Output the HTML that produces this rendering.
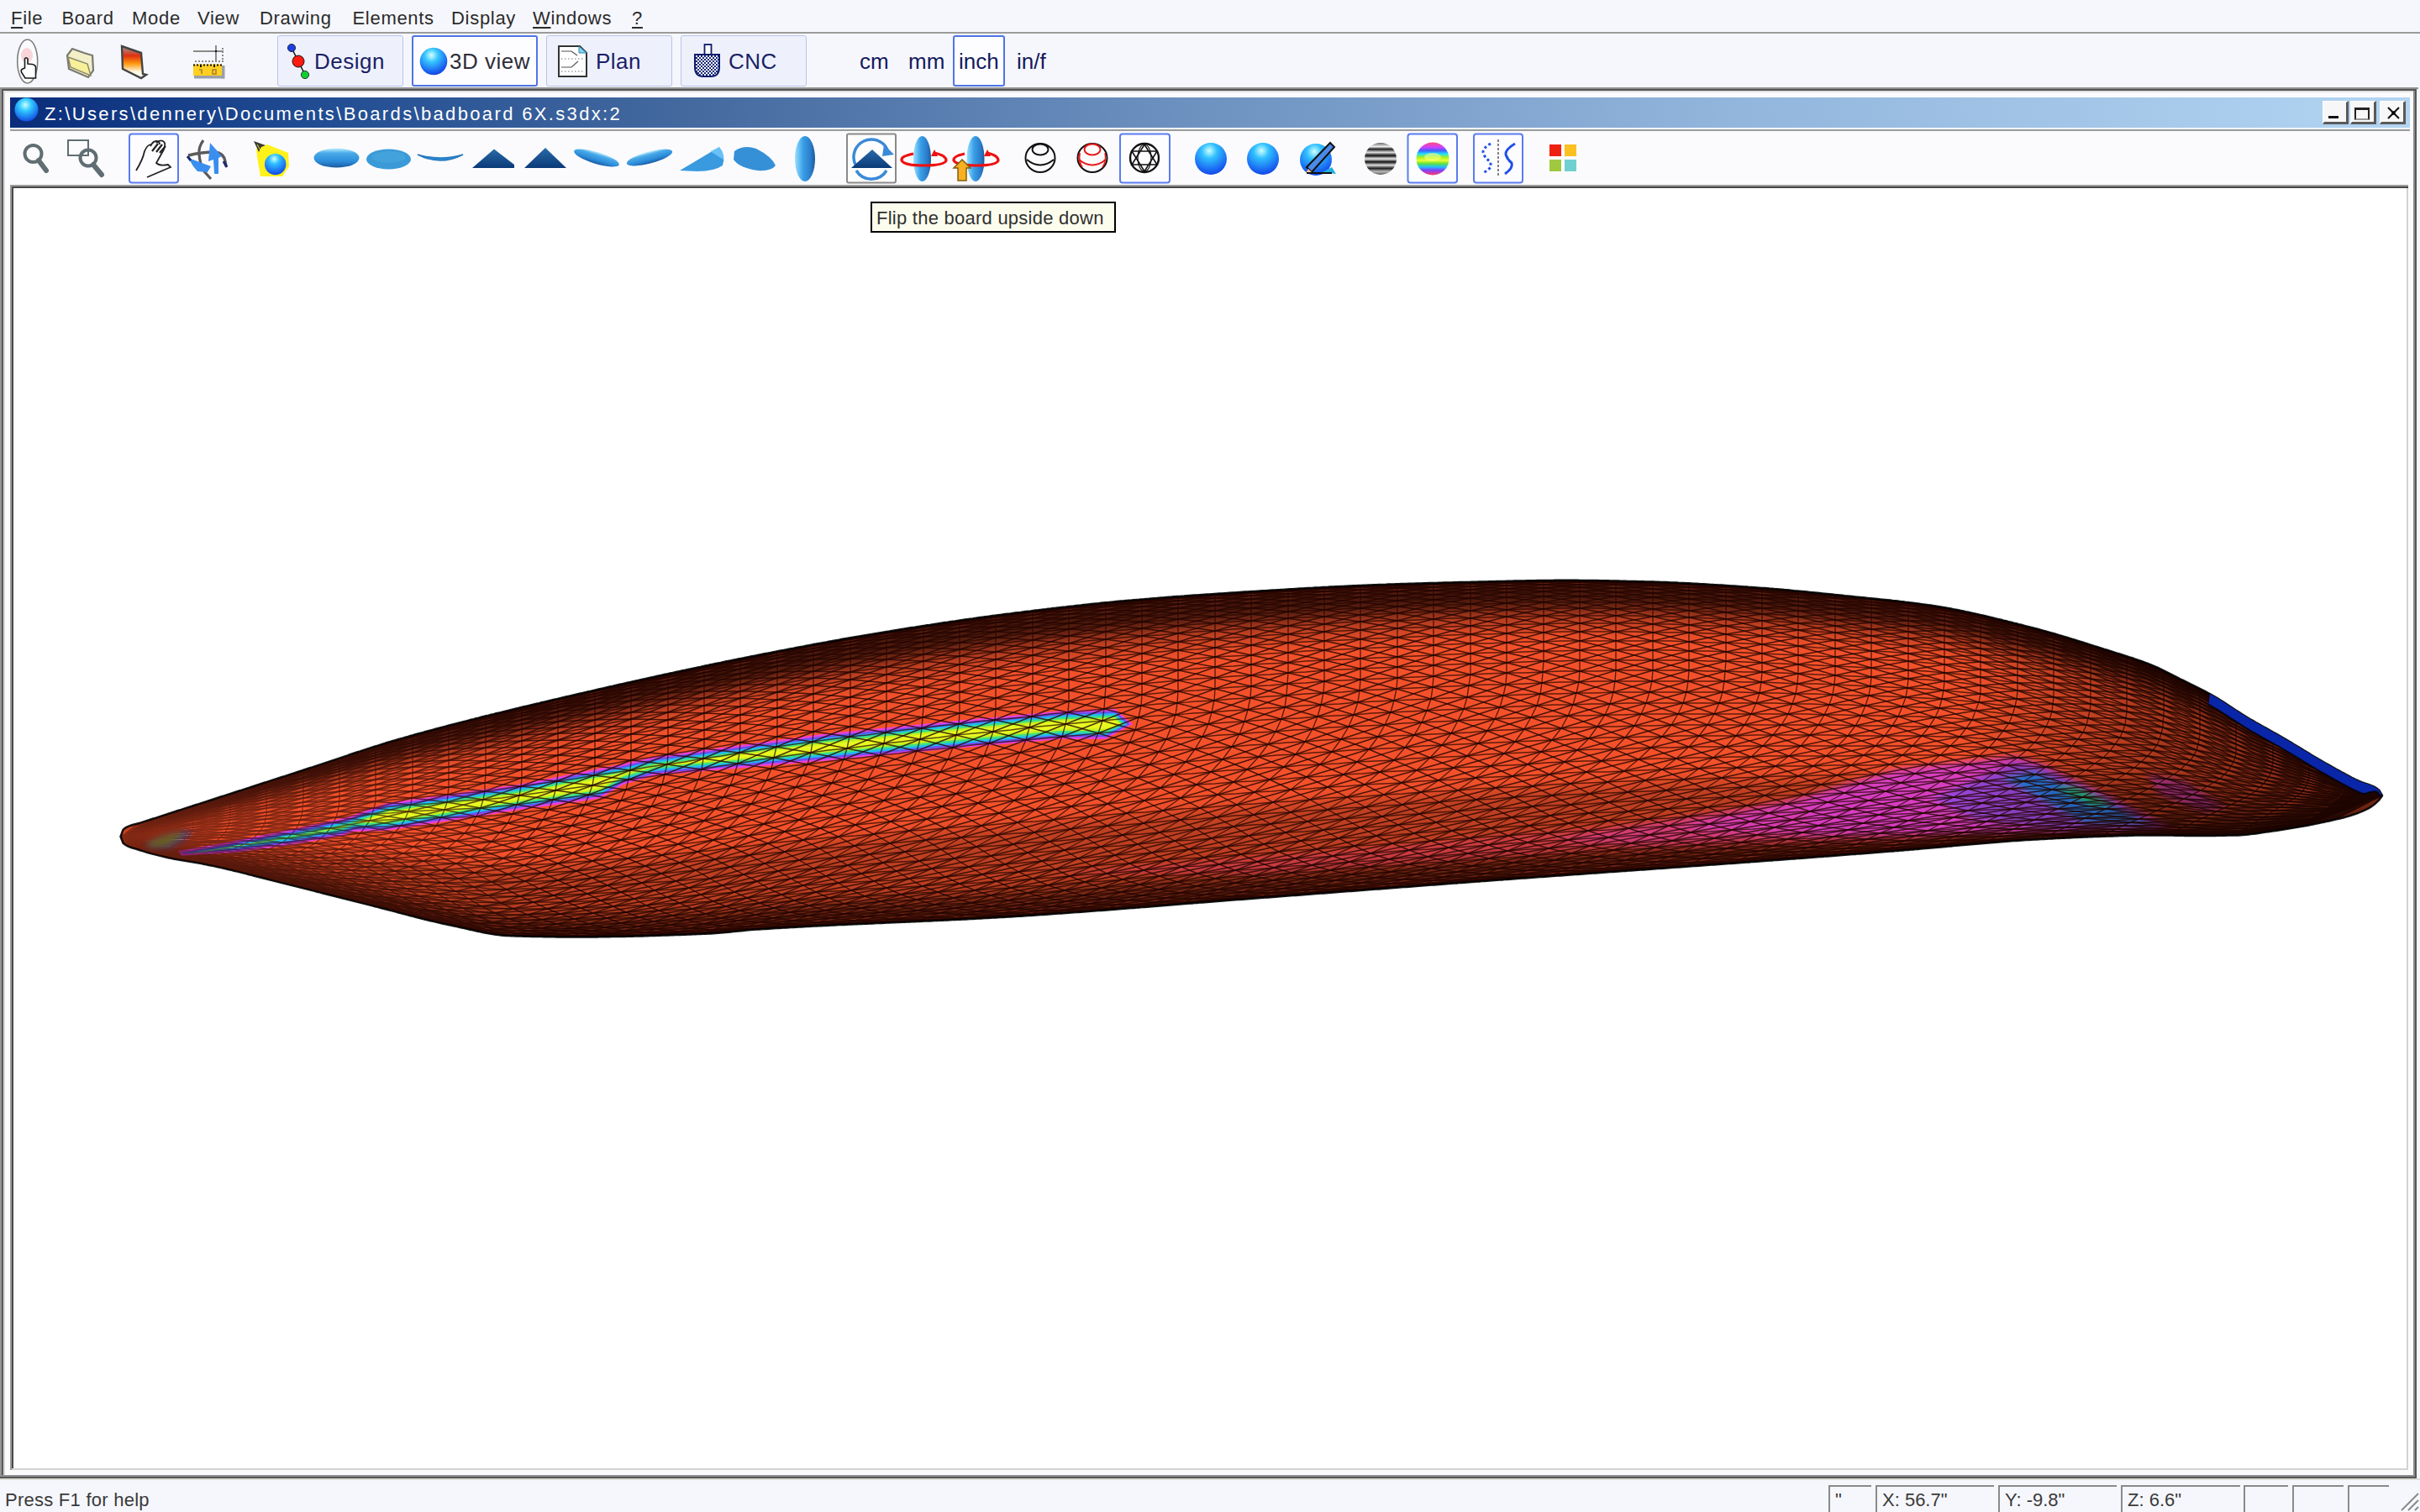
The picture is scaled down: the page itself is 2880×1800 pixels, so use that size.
<!DOCTYPE html><html><head><meta charset="utf-8"><title>Shape3d</title><style>html,body{margin:0;padding:0;width:2880px;height:1800px;overflow:hidden;background:#f6f7fc;font-family:"Liberation Sans",sans-serif;}
.a{position:absolute;}
.t{position:absolute;white-space:nowrap;line-height:1;}
.menu{font-size:22px;color:#2b2b2b;}
.u{text-decoration:underline;text-decoration-thickness:2px;text-underline-offset:3px;}
.btn{position:absolute;top:42px;height:59px;width:148px;border:1px solid #b9c3ea;border-radius:3px;background:#eef1fb;box-sizing:content-box;}
.btn.sel{border:2px solid #4f74e6;background:#fdfdff;top:42px;height:57px;width:146px;}
.bt{font-size:26px;color:#1a1f66;}
.tb{position:absolute;top:158px;width:56px;height:56px;border:2px solid #5a7cf0;border-radius:3px;background:#fdfdff;}
.sb{position:absolute;top:1768px;height:32px;border-top:2px solid #8a8a8a;border-left:2px solid #8a8a8a;}
.st{font-size:22px;color:#3a3a3a;}
</style></head><body>
<div class="t menu" style="left:13.0px;top:11.4px;font-size:22px;letter-spacing:0.7px"><span class="u">F</span>ile</div>
<div class="t menu" style="left:73.5px;top:11.4px;font-size:22px;letter-spacing:0.7px">Board</div>
<div class="t menu" style="left:157.0px;top:11.4px;font-size:22px;letter-spacing:0.7px">Mode</div>
<div class="t menu" style="left:235.0px;top:11.4px;font-size:22px;letter-spacing:0.7px">View</div>
<div class="t menu" style="left:309.0px;top:11.4px;font-size:22px;letter-spacing:0.7px">Drawing</div>
<div class="t menu" style="left:419.5px;top:11.4px;font-size:22px;letter-spacing:0.7px">Elements</div>
<div class="t menu" style="left:537.0px;top:11.4px;font-size:22px;letter-spacing:0.7px">Display</div>
<div class="t menu" style="left:634.0px;top:11.4px;font-size:22px;letter-spacing:0.7px"><span class="u">W</span>indows</div>
<div class="t menu" style="left:752.0px;top:11.4px;font-size:22px;letter-spacing:0.7px"><span class="u">?</span></div>
<div class="a" style="left:0;top:38px;width:2880px;height:2px;background:#9b9b9b"></div>
<div class="btn" style="left:330px"></div>
<div class="t bt" style="left:374.0px;top:60.0px;font-size:26px;color:#1a1f66;letter-spacing:0.5px">Design</div>
<div class="btn sel" style="left:490px"></div>
<div class="t bt" style="left:535.0px;top:60.0px;font-size:26px;color:#2e2e3a;letter-spacing:0.5px">3D view</div>
<div class="btn" style="left:650px"></div>
<div class="t bt" style="left:709.0px;top:60.0px;font-size:26px;color:#1a1f66;letter-spacing:0.5px">Plan</div>
<div class="btn" style="left:810px"></div>
<div class="t bt" style="left:867.0px;top:60.0px;font-size:26px;color:#1a1f66;letter-spacing:0.5px">CNC</div>
<div class="btn sel" style="left:1134px;width:58px"></div>
<svg class="a" style="left:0;top:0" width="960" height="104"><defs><radialGradient id="g3d" cx="0.42" cy="0.28" r="0.8"><stop offset="0" stop-color="#d8ffff"/><stop offset="0.3" stop-color="#38c8ff"/><stop offset="0.75" stop-color="#1a64f0"/><stop offset="1" stop-color="#1030d8"/></radialGradient><linearGradient id="gfl" x1="0" y1="0" x2="0" y2="1"><stop offset="0" stop-color="#9a9a9a"/><stop offset="0.3" stop-color="#e03010"/><stop offset="0.55" stop-color="#ff9a10"/><stop offset="0.8" stop-color="#fff8e0"/><stop offset="1" stop-color="#ffffff"/></linearGradient><pattern id="dots" width="4" height="4" patternUnits="userSpaceOnUse"><rect width="4" height="4" fill="#fff"/><rect width="2" height="2" fill="#1a2a7a"/><rect x="2" y="2" width="2" height="2" fill="#1a2a7a"/></pattern></defs><ellipse cx="32.7" cy="73" rx="12" ry="26" fill="#fbfbfd" stroke="#808080" stroke-width="1.6"/><ellipse cx="32" cy="66" rx="7" ry="9" fill="#f5c8cc" opacity="0.75"/><path d="M29.5 81 L29.5 70 Q31 67.5 33 70 L33 76 L38 76.5 Q42 77 42.5 80 L42.5 93 L30 93 L25.5 86 Q24.5 83 27 82 Z" fill="#fff" stroke="#1a1a1a" stroke-width="1.6"/><path d="M80 66 L86 58 L100 63 L110 66 L111 84 L105 92 L82 82 Z" fill="#f3f0c8" stroke="#7a7a70" stroke-width="2.2"/><path d="M81 68 L104 76 L108 90 L84 80 Z" fill="#f8f098" stroke="#8a8a70" stroke-width="1.5"/><path d="M145 55 L168 63 L170 88 L174 89 L168 93 L146 82 Z" fill="url(#gfl)" stroke="#444" stroke-width="2.4"/><path d="M230 61 L266 61" stroke="#8a8a8a" stroke-width="2"/><path d="M257 54 L257 74" stroke="#8a8a8a" stroke-width="2"/><rect x="256" y="60" width="2" height="2" fill="#111"/><path d="M265 57 L265 74 M232 73 L266 73" stroke="#8a8a8a" stroke-width="2" stroke-dasharray="2 2"/><rect x="264" y="78" width="3.5" height="15.5" fill="#9aa0aa"/><rect x="231" y="90" width="36" height="3.5" fill="#9aa0aa"/><rect x="230" y="76.5" width="34" height="13.5" fill="#ffd020"/><path d="M230 77.5 L264 77.5" stroke="#111" stroke-width="2" stroke-dasharray="2 2"/><path d="M239 77 L239 80 M255 77 L255 80" stroke="#111" stroke-width="2"/><path d="M237 83 L240 83 L240 88" stroke="#b08030" stroke-width="1.6" fill="none"/><rect x="253" y="83" width="4" height="5" fill="none" stroke="#b08030" stroke-width="1.6"/><path d="M347 57 L355 73 L363 89" stroke="#111" stroke-width="1.6"/><circle cx="347" cy="57" r="4.6" fill="#1a3ee0" stroke="#111" stroke-width="0.8"/><circle cx="355" cy="73" r="7" fill="#ff1a10" stroke="#111" stroke-width="1"/><circle cx="363" cy="89" r="4.6" fill="#10d030" stroke="#111" stroke-width="0.8"/><circle cx="516" cy="73" r="16.3" fill="url(#g3d)"/><path d="M665 55 L690 55 L698 63 L698 91 L665 91 Z" fill="#fff" stroke="#333" stroke-width="2"/><path d="M689 55 L689 63 L698 63 Z" fill="#8ad0f0" stroke="#2a8ab0" stroke-width="1"/><path d="M668 61 L680 61 L687 66 M668 80 L680 80 L688 73" stroke="#555" stroke-width="1.2" fill="none"/><path d="M668 70 L694 70 M668 85 L694 85" stroke="#777" stroke-width="1" stroke-dasharray="1.5 2.5"/><rect x="838.5" y="53" width="8" height="12" fill="#fff" stroke="#0e1a6a" stroke-width="1.8"/><path d="M827 65 L856 65 L856 80 Q856 91 846 91 L837 91 Q827 91 827 80 Z" fill="url(#dots)" stroke="#0e1a6a" stroke-width="2"/></svg>
<div class="t bt" style="left:1023.0px;top:60.0px;font-size:26px;color:#141a5e">cm</div>
<div class="t bt" style="left:1081.0px;top:60.0px;font-size:26px;color:#141a5e">mm</div>
<div class="t bt" style="left:1141.0px;top:60.0px;font-size:26px;color:#141a5e">inch</div>
<div class="t bt" style="left:1210.0px;top:60.0px;font-size:26px;color:#141a5e">in/f</div>
<div class="a" style="left:0;top:104px;width:2878px;height:2px;background:#8f8f8f"></div>
<div class="a" style="left:2px;top:106px;width:2874px;height:2px;background:#565656"></div>
<div class="a" style="left:0;top:104px;width:2px;height:1656px;background:#959595"></div>
<div class="a" style="left:2px;top:106px;width:2px;height:1654px;background:#585858"></div>
<div class="a" style="left:2872px;top:108px;width:2px;height:1650px;background:#8c8c8c"></div>
<div class="a" style="left:2874px;top:106px;width:2px;height:1654px;background:#575757"></div>
<div class="a" style="left:0;top:1756px;width:2874px;height:2px;background:#8e8e8e"></div>
<div class="a" style="left:0;top:1758px;width:2876px;height:2px;background:#575757"></div>
<div class="a" style="left:0;top:1760px;width:2880px;height:2px;background:#dcddd6"></div>
<div class="a" style="left:4px;top:108px;width:2868px;height:1648px;background:#fbfbfd"></div>
<div class="a" style="left:4px;top:108px;width:2px;height:1648px;background:#d9d9d9"></div>
<div class="a" style="left:4px;top:108px;width:2868px;height:2px;background:#e4e2e2"></div>
<div class="a" style="left:12px;top:116px;width:2856px;height:36px;background:linear-gradient(90deg,#0a2c7a 0%,#1f4b92 12%,#44699f 28%,#6f93c1 50%,#92b6dc 72%,#b3d5f3 100%)"></div>
<div class="a" style="left:12px;top:152px;width:2856px;height:2px;background:#f0f6ff"></div>
<div class="a" style="left:12px;top:154px;width:2856px;height:2px;background:#9a9d9a"></div>
<svg class="a" style="left:16px;top:116px" width="32" height="32"><defs><radialGradient id="gg" cx="0.45" cy="0.3" r="0.75"><stop offset="0" stop-color="#c8ffff"/><stop offset="0.35" stop-color="#30c8ff"/><stop offset="1" stop-color="#1040e0"/></radialGradient></defs><circle cx="15.5" cy="14.5" r="14" fill="url(#gg)"/></svg>
<div class="t " style="left:53.0px;top:125.4px;font-size:22px;color:#fff;letter-spacing:2.35px">Z:\Users\dennery\Documents\Boards\badboard 6X.s3dx:2</div>
<div class="a" style="left:2764px;top:120px;width:26px;height:23px;background:#f7f7f7;border-top:2px solid #fafafa;border-left:2px solid #fafafa;border-right:3px solid #5a5a5a;border-bottom:3px solid #5a5a5a"></div><div class="a" style="left:2771px;top:138px;width:12px;height:3px;background:#111"></div>
<div class="a" style="left:2797px;top:120px;width:26px;height:23px;background:#f7f7f7;border-top:2px solid #fafafa;border-left:2px solid #fafafa;border-right:3px solid #5a5a5a;border-bottom:3px solid #5a5a5a"></div><div class="a" style="left:2802px;top:128px;width:18px;height:15px;border:2px solid #222;border-top-width:3px;border-bottom-color:#999;box-sizing:border-box"></div>
<div class="a" style="left:2832px;top:120px;width:26px;height:23px;background:#f7f7f7;border-top:2px solid #fafafa;border-left:2px solid #fafafa;border-right:3px solid #5a5a5a;border-bottom:3px solid #5a5a5a"></div><svg class="a" style="left:2837px;top:124px" width="24" height="22"><path d="M5 4 L18 17 M18 4 L5 17" stroke="#111" stroke-width="2.1"/><circle cx="11.5" cy="10.5" r="2.2" fill="#000"/></svg>
<svg class="a" style="left:0;top:150px" width="1900" height="72" viewBox="0 150 1900 72"><defs><linearGradient id="gel" x1="0" y1="0" x2="0" y2="1"><stop offset="0" stop-color="#bfefff"/><stop offset="0.25" stop-color="#4aaae8"/><stop offset="0.7" stop-color="#2a8ad8"/><stop offset="1" stop-color="#1a5aa0"/></linearGradient><linearGradient id="gel2" x1="0" y1="0" x2="1" y2="0"><stop offset="0" stop-color="#9ae0ff"/><stop offset="0.4" stop-color="#3aa0e8"/><stop offset="0.8" stop-color="#2a7ac8"/><stop offset="1" stop-color="#1a5a98"/></linearGradient><linearGradient id="gtri" x1="0" y1="0" x2="0" y2="1"><stop offset="0" stop-color="#2a6aa8"/><stop offset="1" stop-color="#0a3a78"/></linearGradient><radialGradient id="gball" cx="0.45" cy="0.25" r="0.8"><stop offset="0" stop-color="#d0ffff"/><stop offset="0.3" stop-color="#30c0ff"/><stop offset="0.8" stop-color="#1860f0"/><stop offset="1" stop-color="#1040e0"/></radialGradient><linearGradient id="gstripe" x1="0" y1="0" x2="0" y2="1"><stop offset="0" stop-color="#666"/><stop offset="0.12" stop-color="#eee"/><stop offset="0.2" stop-color="#222"/><stop offset="0.3" stop-color="#ddd"/><stop offset="0.4" stop-color="#111"/><stop offset="0.5" stop-color="#eee"/><stop offset="0.6" stop-color="#111"/><stop offset="0.7" stop-color="#ddd"/><stop offset="0.8" stop-color="#222"/><stop offset="0.9" stop-color="#bbb"/><stop offset="1" stop-color="#555"/></linearGradient><linearGradient id="grain" x1="0" y1="0" x2="0" y2="1"><stop offset="0" stop-color="#ff4a80"/><stop offset="0.15" stop-color="#d040ff"/><stop offset="0.25" stop-color="#4060ff"/><stop offset="0.35" stop-color="#20e0ff"/><stop offset="0.45" stop-color="#a0f020"/><stop offset="0.55" stop-color="#f0ff30"/><stop offset="0.65" stop-color="#60e040"/><stop offset="0.75" stop-color="#20c0ff"/><stop offset="0.85" stop-color="#8040ff"/><stop offset="1" stop-color="#ff3a6a"/></linearGradient></defs><rect x="154" y="159.5" width="58" height="58" rx="3" fill="#fdfdff" stroke="#5a7cf0" stroke-width="2"/><rect x="1333" y="159.5" width="59" height="58" rx="3" fill="#fdfdff" stroke="#5a7cf0" stroke-width="2"/><rect x="1675.5" y="159.5" width="58.5" height="58" rx="3" fill="#fdfdff" stroke="#5a7cf0" stroke-width="2"/><rect x="1754" y="159.5" width="58" height="58" rx="3" fill="#fdfdff" stroke="#5a7cf0" stroke-width="2"/><rect x="1008" y="159.5" width="58" height="58" rx="2" fill="#fdfdfd" stroke="#8a8a8a" stroke-width="2"/><circle cx="39.5" cy="183" r="10" fill="none" stroke="#5f6e72" stroke-width="4"/><path d="M46 191 L55 203" stroke="#5f6e72" stroke-width="6" stroke-linecap="round"/><rect x="81" y="167" width="24" height="18" fill="none" stroke="#5f6e72" stroke-width="2"/><circle cx="105" cy="188" r="9.5" fill="none" stroke="#5f6e72" stroke-width="4"/><path d="M111 196 L121 208" stroke="#5f6e72" stroke-width="6" stroke-linecap="round"/><path d="M162 203 Q170 190 172 180 Q175 173 179 172 M179 174 Q182 168 186 168 Q190 168 190 172 M186 170 Q190 166 194 168 Q198 170 195 178 L186 194 Q190 198 200 196 L203 199 L175 211" fill="none" stroke="#222" stroke-width="1.8"/><path d="M181 180 L188 171 M186 181 L193 172 M190 182 L197 174" stroke="#222" stroke-width="2.2"/><path d="M242 167 Q236 175 237 184 Q238 196 243 204 L251 213" fill="none" stroke="#5a5a5a" stroke-width="3.2"/><path d="M224 185 Q240 181 256 181 Q266 182 268 192 L269 198" fill="none" stroke="#5a5a5a" stroke-width="3.4"/><path d="M250 170 L264 186 L260 188 L260 207 L255 207 L254 190 L248 192 Z" fill="#3a8ef0"/><path d="M224 188 L251 198 L247 205 L235 204 L230 198 Z" fill="#3a8ef0"/><path d="M223 186 L227 191 M266 192 L270 199" stroke="#1a2a70" stroke-width="3"/><path d="M305 177 L318 172 L343 182 L344 198 L336 210 L310 210 L306 187 Z" fill="#fff21a"/><path d="M302 168 L316 173 L311 175 L308 181 Z" fill="#3a3a30"/><path d="M306 172 L310 179" stroke="#e0e040" stroke-width="1"/><circle cx="327.7" cy="195.6" r="12.7" fill="url(#gball)"/><ellipse cx="400.5" cy="188" rx="27" ry="11.5" fill="url(#gel)"/><ellipse cx="462.5" cy="189.5" rx="26.5" ry="12" fill="#3a9ad8"/><ellipse cx="462.5" cy="187" rx="20" ry="7" fill="#4aa8e0" opacity="0.6"/><path d="M497 184 Q524 198 551 184 Q524 192 497 184 Z" fill="#2a8ad8" stroke="#2a7ac0" stroke-width="1.5"/><path d="M562 200 L588 177.5 L612 196 L612 200 Z" fill="url(#gtri)"/><path d="M624 200 L649 176 L674 200 Z" fill="url(#gtri)"/><ellipse cx="710" cy="188" rx="28" ry="7" transform="rotate(17 710 188)" fill="url(#gel)"/><ellipse cx="773" cy="187.5" rx="28" ry="7" transform="rotate(-15 773 187.5)" fill="url(#gel)"/><path d="M809 203 L856 175 Q864 185 860 197 Q850 204 830 204 Z" fill="#3a9ae0"/><path d="M845 180 L856 175 Q862 182 861 190 Z" fill="#7ad0ff" opacity="0.7"/><path d="M874 180 Q885 172 900 177 Q918 186 923 197 Q918 204 902 203 Q880 200 873 190 Z" fill="#3590d8"/><ellipse cx="958" cy="189" rx="12" ry="27" fill="url(#gel2)"/><path d="M1018 196 A21 21 0 0 1 1056 178" fill="none" stroke="#3a8ad8" stroke-width="3.5"/><path d="M1052 172 L1064 184 L1050 186 Z" fill="#3a8ad8"/><path d="M1019 203 A21 21 0 0 0 1055 203" fill="none" stroke="#3a8ad8" stroke-width="3.5"/><path d="M1013 200 L1038 178 L1062 200 Z" fill="url(#gtri)"/><ellipse cx="1097.5" cy="189" rx="10.5" ry="27" fill="url(#gel2)"/><path d="M1087 183 Q1072 186 1073 191 Q1076 197 1099 197 Q1124 197 1126 191 Q1126 185 1112 182" fill="none" stroke="#f01010" stroke-width="3.2"/><path d="M1112 178 L1116 186 L1108 186 Z" fill="#f01010"/><ellipse cx="1161" cy="189" rx="10.5" ry="27" fill="url(#gel2)"/><path d="M1148 183 Q1134 186 1135 191 Q1138 197 1162 197 Q1186 197 1188 191 Q1188 185 1175 182" fill="none" stroke="#f01010" stroke-width="3.2"/><path d="M1175 178 L1179 186 L1171 186 Z" fill="#f01010"/><path d="M1145 190 L1155 200 L1150 200 L1150 215 L1140 215 L1140 200 L1135 200 Z" fill="#f8b020" stroke="#806010" stroke-width="1.5"/><ellipse cx="1238" cy="188" rx="17.5" ry="17" fill="#fbfbfd" stroke="#111" stroke-width="2"/><ellipse cx="1238" cy="178" rx="9.5" ry="6.5" fill="none" stroke="#111" stroke-width="2"/><path d="M1222 190 Q1238 203 1254 190" fill="none" stroke="#111" stroke-width="2"/><ellipse cx="1300" cy="188" rx="17.5" ry="17" fill="#fbfbfd" stroke="#111" stroke-width="2"/><ellipse cx="1300" cy="178" rx="9.5" ry="6.5" fill="none" stroke="#e81818" stroke-width="2"/><path d="M1284 190 Q1300 203 1316 190" fill="none" stroke="#e81818" stroke-width="2"/><path d="M1285 182 Q1283 192 1288 199" fill="none" stroke="#e81818" stroke-width="2"/><path d="M1315 182 Q1317 192 1312 199" fill="none" stroke="#e81818" stroke-width="1.5"/><circle cx="1362" cy="188" r="17" fill="none" stroke="#111" stroke-width="2.4"/><path d="M1347 180 L1377 180 L1362 204 Z M1347 196 L1377 196 L1362 172 Z" fill="none" stroke="#111" stroke-width="1.6"/><ellipse cx="1362" cy="188" rx="8" ry="16" fill="none" stroke="#111" stroke-width="1.2"/><circle cx="1441" cy="189" r="19" fill="url(#gball)"/><circle cx="1503" cy="189" r="19" fill="url(#gball)"/><circle cx="1566" cy="190" r="19" fill="url(#gball)"/><path d="M1574 205 L1590 207 L1585 199 Z" fill="#20b0e0"/><path d="M1555 199 L1583 170 L1588 175 L1561 205 Z" fill="#4a8ae8" stroke="#111" stroke-width="2"/><path d="M1557 201 L1561 205 L1554 206 Z" fill="#f8c890"/><path d="M1555 206 L1585 206" stroke="#111" stroke-width="2"/><circle cx="1643" cy="189" r="19" fill="url(#gstripe)"/><circle cx="1705" cy="189" r="19.5" fill="url(#grain)"/><ellipse cx="1705" cy="187" rx="10" ry="5" fill="#f8ff80" opacity="0.6"/><path d="M1774 171 Q1765 176 1765 181 Q1766 187 1774 193 L1774 199 Q1770 204 1764 206" fill="none" stroke="#2050e8" stroke-width="3" stroke-dasharray="3 3"/><path d="M1783 166 L1783 211" stroke="#333" stroke-width="1.2" stroke-dasharray="3 2"/><path d="M1803 171 Q1791 178 1792 184 Q1794 190 1799 194 Q1801 200 1791 207" fill="none" stroke="#2050e8" stroke-width="3"/><rect x="1844" y="172" width="14" height="14" fill="#f02010"/><rect x="1862" y="172" width="14" height="14" fill="#fcc020"/><rect x="1844" y="190" width="14" height="14" fill="#a0c840"/><rect x="1862" y="190" width="14" height="14" fill="#70d0d0"/></svg>
<div class="a" style="left:12px;top:220px;width:2854px;height:2px;background:#9c9c9c"></div>
<div class="a" style="left:14px;top:222px;width:2852px;height:2px;background:#474747"></div>
<div class="a" style="left:12px;top:220px;width:2px;height:1530px;background:#9a9a9a"></div>
<div class="a" style="left:14px;top:222px;width:2px;height:1528px;background:#4a4a4a"></div>
<div class="a" style="left:16px;top:224px;width:2848px;height:1524px;background:#fff"></div>
<div class="a" style="left:14px;top:1748px;width:2852px;height:2px;background:#d3d3d3"></div>
<div class="a" style="left:2864px;top:224px;width:2px;height:1526px;background:#d3d3d3"></div>
<svg class="a" style="left:0;top:0" width="2880" height="1800" viewBox="0 0 2880 1800"><defs><clipPath id="bc"><path d="M143.5 996L146.5 987.8L149.5 985.3L152.5 983.8L155.5 982.7L158.5 981.7L161.5 981L164.5 980.2L167.5 979.4L170.5 978.4L173.5 977.4L176.5 976.5L179.5 975.5L182.5 974.5L185.5 973.6L188.5 972.6L191.5 971.6L194.5 970.6L197.5 969.7L200.5 968.7L203.5 967.7L206.5 966.8L209.5 965.8L212.5 964.8L215.5 963.9L218.5 962.9L221.5 961.9L224.5 960.9L227.5 960L230.5 959L233.5 958L236.5 957.1L239.5 956.1L242.5 955.1L245.5 954.2L248.5 953.2L251.5 952.2L254.5 951.2L257.5 950.3L260.5 949.3L263.5 948.3L266.5 947.4L269.5 946.4L272.5 945.4L275.5 944.5L278.5 943.5L281.5 942.5L284.5 941.5L287.5 940.6L290.5 939.6L293.5 938.6L296.5 937.7L299.5 936.7L302.5 935.7L305.5 934.7L308.5 933.8L311.5 932.8L314.5 931.8L317.5 930.9L320.5 929.9L323.5 928.9L326.5 927.9L329.5 927L332.5 926L335.5 925L338.5 924.1L341.5 923.1L344.5 922.1L347.5 921.1L350.5 920.2L353.5 919.2L356.5 918.2L359.5 917.3L362.5 916.3L365.5 915.3L368.5 914.3L371.5 913.4L374.5 912.4L377.5 911.4L380.5 910.4L383.5 909.4L386.5 908.4L389.5 907.4L392.5 906.4L395.5 905.4L398.5 904.4L401.5 903.4L404.5 902.4L407.5 901.4L410.5 900.4L413.5 899.4L416.5 898.3L419.5 897.3L422.5 896.3L425.5 895.3L428.5 894.4L431.5 893.4L434.5 892.4L437.5 891.4L440.5 890.4L443.5 889.5L446.5 888.5L449.5 887.6L452.5 886.6L455.5 885.7L458.5 884.8L461.5 883.8L464.5 882.9L467.5 882L470.5 881.2L473.5 880.3L476.5 879.4L479.5 878.6L482.5 877.7L485.5 876.9L488.5 876L491.5 875.2L494.5 874.3L497.5 873.5L500.5 872.7L503.5 871.9L506.5 871L509.5 870.2L512.5 869.4L515.5 868.6L518.5 867.8L521.5 867L524.5 866.2L527.5 865.4L530.5 864.6L533.5 863.8L536.5 863L539.5 862.2L542.5 861.5L545.5 860.7L548.5 859.9L551.5 859.1L554.5 858.4L557.5 857.6L560.5 856.8L563.5 856.1L566.5 855.3L569.5 854.6L572.5 853.8L575.5 853L578.5 852.3L581.5 851.6L584.5 850.8L587.5 850.1L590.5 849.3L593.5 848.6L596.5 847.9L599.5 847.1L602.5 846.4L605.5 845.7L608.5 844.9L611.5 844.2L614.5 843.5L617.5 842.8L620.5 842L623.5 841.3L626.5 840.6L629.5 839.9L632.5 839.2L635.5 838.5L638.5 837.8L641.5 837.1L644.5 836.3L647.5 835.6L650.5 834.9L653.5 834.2L656.5 833.5L659.5 832.8L662.5 832.1L665.5 831.4L668.5 830.7L671.5 830L674.5 829.3L677.5 828.6L680.5 827.9L683.5 827.2L686.5 826.5L689.5 825.8L692.5 825.1L695.5 824.4L698.5 823.7L701.5 823.1L704.5 822.4L707.5 821.7L710.5 821L713.5 820.3L716.5 819.6L719.5 818.9L722.5 818.2L725.5 817.5L728.5 816.9L731.5 816.2L734.5 815.5L737.5 814.8L740.5 814.1L743.5 813.5L746.5 812.8L749.5 812.1L752.5 811.4L755.5 810.8L758.5 810.1L761.5 809.4L764.5 808.8L767.5 808.1L770.5 807.4L773.5 806.8L776.5 806.1L779.5 805.5L782.5 804.8L785.5 804.1L788.5 803.5L791.5 802.8L794.5 802.2L797.5 801.5L800.5 800.9L803.5 800.2L806.5 799.6L809.5 798.9L812.5 798.3L815.5 797.7L818.5 797L821.5 796.4L824.5 795.8L827.5 795.1L830.5 794.5L833.5 793.9L836.5 793.2L839.5 792.6L842.5 792L845.5 791.3L848.5 790.7L851.5 790.1L854.5 789.5L857.5 788.9L860.5 788.2L863.5 787.6L866.5 787L869.5 786.4L872.5 785.8L875.5 785.2L878.5 784.6L881.5 784L884.5 783.4L887.5 782.8L890.5 782.2L893.5 781.6L896.5 781L899.5 780.4L902.5 779.8L905.5 779.2L908.5 778.6L911.5 778L914.5 777.5L917.5 776.9L920.5 776.3L923.5 775.7L926.5 775.1L929.5 774.5L932.5 774L935.5 773.4L938.5 772.8L941.5 772.2L944.5 771.7L947.5 771.1L950.5 770.5L953.5 769.9L956.5 769.4L959.5 768.8L962.5 768.3L965.5 767.7L968.5 767.1L971.5 766.6L974.5 766L977.5 765.5L980.5 764.9L983.5 764.4L986.5 763.8L989.5 763.3L992.5 762.7L995.5 762.2L998.5 761.7L1001.5 761.1L1004.5 760.6L1007.5 760.1L1010.5 759.5L1013.5 759L1016.5 758.5L1019.5 758L1022.5 757.5L1025.5 756.9L1028.5 756.4L1031.5 755.9L1034.5 755.4L1037.5 754.9L1040.5 754.4L1043.5 753.9L1046.5 753.4L1049.5 752.9L1052.5 752.4L1055.5 751.9L1058.5 751.5L1061.5 751L1064.5 750.5L1067.5 750L1070.5 749.5L1073.5 749L1076.5 748.6L1079.5 748.1L1082.5 747.6L1085.5 747.1L1088.5 746.7L1091.5 746.2L1094.5 745.7L1097.5 745.2L1100.5 744.8L1103.5 744.3L1106.5 743.9L1109.5 743.4L1112.5 742.9L1115.5 742.5L1118.5 742L1121.5 741.6L1124.5 741.1L1127.5 740.7L1130.5 740.2L1133.5 739.8L1136.5 739.4L1139.5 738.9L1142.5 738.5L1145.5 738.1L1148.5 737.6L1151.5 737.2L1154.5 736.8L1157.5 736.4L1160.5 735.9L1163.5 735.5L1166.5 735.1L1169.5 734.7L1172.5 734.3L1175.5 733.9L1178.5 733.5L1181.5 733.1L1184.5 732.7L1187.5 732.3L1190.5 731.9L1193.5 731.5L1196.5 731.1L1199.5 730.7L1202.5 730.4L1205.5 730L1208.5 729.6L1211.5 729.2L1214.5 728.9L1217.5 728.5L1220.5 728.1L1223.5 727.7L1226.5 727.4L1229.5 727L1232.5 726.6L1235.5 726.3L1238.5 725.9L1241.5 725.5L1244.5 725.2L1247.5 724.8L1250.5 724.5L1253.5 724.1L1256.5 723.8L1259.5 723.4L1262.5 723.1L1265.5 722.7L1268.5 722.4L1271.5 722L1274.5 721.7L1277.5 721.4L1280.5 721L1283.5 720.7L1286.5 720.4L1289.5 720L1292.5 719.7L1295.5 719.4L1298.5 719.1L1301.5 718.8L1304.5 718.5L1307.5 718.2L1310.5 717.8L1313.5 717.5L1316.5 717.2L1319.5 717L1322.5 716.7L1325.5 716.4L1328.5 716.1L1331.5 715.8L1334.5 715.5L1337.5 715.3L1340.5 715L1343.5 714.7L1346.5 714.5L1349.5 714.2L1352.5 713.9L1355.5 713.7L1358.5 713.4L1361.5 713.2L1364.5 712.9L1367.5 712.7L1370.5 712.4L1373.5 712.2L1376.5 712L1379.5 711.7L1382.5 711.5L1385.5 711.3L1388.5 711L1391.5 710.8L1394.5 710.6L1397.5 710.3L1400.5 710.1L1403.5 709.9L1406.5 709.7L1409.5 709.5L1412.5 709.2L1415.5 709L1418.5 708.8L1421.5 708.6L1424.5 708.4L1427.5 708.2L1430.5 708L1433.5 707.8L1436.5 707.6L1439.5 707.4L1442.5 707.2L1445.5 707L1448.5 706.8L1451.5 706.6L1454.5 706.4L1457.5 706.2L1460.5 706L1463.5 705.8L1466.5 705.6L1469.5 705.4L1472.5 705.2L1475.5 705L1478.5 704.8L1481.5 704.6L1484.5 704.5L1487.5 704.3L1490.5 704.1L1493.5 703.9L1496.5 703.7L1499.5 703.5L1502.5 703.3L1505.5 703.2L1508.5 703L1511.5 702.8L1514.5 702.6L1517.5 702.4L1520.5 702.2L1523.5 702.1L1526.5 701.9L1529.5 701.7L1532.5 701.5L1535.5 701.3L1538.5 701.2L1541.5 701L1544.5 700.8L1547.5 700.6L1550.5 700.5L1553.5 700.3L1556.5 700.1L1559.5 699.9L1562.5 699.8L1565.5 699.6L1568.5 699.4L1571.5 699.3L1574.5 699.1L1577.5 698.9L1580.5 698.8L1583.5 698.6L1586.5 698.5L1589.5 698.3L1592.5 698.2L1595.5 698L1598.5 697.9L1601.5 697.7L1604.5 697.6L1607.5 697.4L1610.5 697.3L1613.5 697.2L1616.5 697L1619.5 696.9L1622.5 696.8L1625.5 696.7L1628.5 696.5L1631.5 696.4L1634.5 696.3L1637.5 696.2L1640.5 696.1L1643.5 696L1646.5 695.9L1649.5 695.8L1652.5 695.6L1655.5 695.5L1658.5 695.4L1661.5 695.3L1664.5 695.2L1667.5 695.1L1670.5 695L1673.5 694.9L1676.5 694.8L1679.5 694.7L1682.5 694.7L1685.5 694.6L1688.5 694.5L1691.5 694.4L1694.5 694.3L1697.5 694.2L1700.5 694.1L1703.5 694L1706.5 693.9L1709.5 693.9L1712.5 693.8L1715.5 693.7L1718.5 693.6L1721.5 693.5L1724.5 693.4L1727.5 693.4L1730.5 693.3L1733.5 693.2L1736.5 693.1L1739.5 693.1L1742.5 693L1745.5 692.9L1748.5 692.9L1751.5 692.8L1754.5 692.7L1757.5 692.7L1760.5 692.6L1763.5 692.5L1766.5 692.5L1769.5 692.4L1772.5 692.3L1775.5 692.3L1778.5 692.2L1781.5 692.1L1784.5 692L1787.5 692L1790.5 691.9L1793.5 691.8L1796.5 691.8L1799.5 691.7L1802.5 691.6L1805.5 691.6L1808.5 691.5L1811.5 691.4L1814.5 691.4L1817.5 691.3L1820.5 691.3L1823.5 691.2L1826.5 691.2L1829.5 691.1L1832.5 691.1L1835.5 691L1838.5 691L1841.5 690.9L1844.5 690.9L1847.5 690.9L1850.5 690.8L1853.5 690.8L1856.5 690.8L1859.5 690.8L1862.5 690.8L1865.5 690.8L1868.5 690.8L1871.5 690.8L1874.5 690.8L1877.5 690.8L1880.5 690.9L1883.5 690.9L1886.5 690.9L1889.5 691L1892.5 691L1895.5 691L1898.5 691.1L1901.5 691.1L1904.5 691.2L1907.5 691.2L1910.5 691.3L1913.5 691.3L1916.5 691.4L1919.5 691.5L1922.5 691.5L1925.5 691.6L1928.5 691.7L1931.5 691.7L1934.5 691.8L1937.5 691.9L1940.5 691.9L1943.5 692L1946.5 692.1L1949.5 692.2L1952.5 692.2L1955.5 692.3L1958.5 692.4L1961.5 692.5L1964.5 692.5L1967.5 692.6L1970.5 692.7L1973.5 692.8L1976.5 692.9L1979.5 693L1982.5 693.1L1985.5 693.2L1988.5 693.4L1991.5 693.5L1994.5 693.6L1997.5 693.8L2000.5 693.9L2003.5 694L2006.5 694.2L2009.5 694.3L2012.5 694.5L2015.5 694.7L2018.5 694.8L2021.5 695L2024.5 695.2L2027.5 695.3L2030.5 695.5L2033.5 695.7L2036.5 695.9L2039.5 696.1L2042.5 696.2L2045.5 696.4L2048.5 696.6L2051.5 696.8L2054.5 697L2057.5 697.2L2060.5 697.4L2063.5 697.6L2066.5 697.8L2069.5 698L2072.5 698.2L2075.5 698.4L2078.5 698.6L2081.5 698.9L2084.5 699.1L2087.5 699.3L2090.5 699.5L2093.5 699.7L2096.5 699.9L2099.5 700.1L2102.5 700.3L2105.5 700.6L2108.5 700.8L2111.5 701.1L2114.5 701.3L2117.5 701.5L2120.5 701.8L2123.5 702.1L2126.5 702.3L2129.5 702.6L2132.5 702.9L2135.5 703.2L2138.5 703.4L2141.5 703.7L2144.5 704L2147.5 704.3L2150.5 704.6L2153.5 704.9L2156.5 705.2L2159.5 705.5L2162.5 705.8L2165.5 706.1L2168.5 706.4L2171.5 706.7L2174.5 707L2177.5 707.3L2180.5 707.6L2183.5 707.9L2186.5 708.2L2189.5 708.5L2192.5 708.8L2195.5 709.2L2198.5 709.5L2201.5 709.8L2204.5 710.1L2207.5 710.4L2210.5 710.7L2213.5 711L2216.5 711.3L2219.5 711.6L2222.5 711.9L2225.5 712.2L2228.5 712.5L2231.5 712.8L2234.5 713.1L2237.5 713.4L2240.5 713.7L2243.5 714L2246.5 714.3L2249.5 714.6L2252.5 715L2255.5 715.3L2258.5 715.6L2261.5 716L2264.5 716.3L2267.5 716.7L2270.5 717L2273.5 717.4L2276.5 717.8L2279.5 718.2L2282.5 718.6L2285.5 719L2288.5 719.4L2291.5 719.8L2294.5 720.2L2297.5 720.6L2300.5 721.1L2303.5 721.5L2306.5 722L2309.5 722.5L2312.5 723L2315.5 723.5L2318.5 724.1L2321.5 724.6L2324.5 725.2L2327.5 725.7L2330.5 726.3L2333.5 726.9L2336.5 727.5L2339.5 728.2L2342.5 728.8L2345.5 729.4L2348.5 730.1L2351.5 730.8L2354.5 731.4L2357.5 732.1L2360.5 732.8L2363.5 733.5L2366.5 734.2L2369.5 734.9L2372.5 735.6L2375.5 736.4L2378.5 737.1L2381.5 737.8L2384.5 738.6L2387.5 739.3L2390.5 740.1L2393.5 740.8L2396.5 741.6L2399.5 742.3L2402.5 743.1L2405.5 743.8L2408.5 744.6L2411.5 745.4L2414.5 746.1L2417.5 746.9L2420.5 747.7L2423.5 748.5L2426.5 749.3L2429.5 750.1L2432.5 750.9L2435.5 751.8L2438.5 752.6L2441.5 753.5L2444.5 754.3L2447.5 755.2L2450.5 756.1L2453.5 757L2456.5 757.9L2459.5 758.8L2462.5 759.7L2465.5 760.6L2468.5 761.5L2471.5 762.5L2474.5 763.4L2477.5 764.3L2480.5 765.3L2483.5 766.2L2486.5 767.2L2489.5 768.1L2492.5 769.1L2495.5 770L2498.5 771L2501.5 771.9L2504.5 772.9L2507.5 773.8L2510.5 774.8L2513.5 775.7L2516.5 776.7L2519.5 777.6L2522.5 778.5L2525.5 779.5L2528.5 780.4L2531.5 781.4L2534.5 782.4L2537.5 783.3L2540.5 784.4L2543.5 785.4L2546.5 786.4L2549.5 787.5L2552.5 788.6L2555.5 789.7L2558.5 790.9L2561.5 792.1L2564.5 793.4L2567.5 794.7L2570.5 796.1L2573.5 797.6L2576.5 799.1L2579.5 800.6L2582.5 802.1L2585.5 803.7L2588.5 805.2L2591.5 806.7L2594.5 808.3L2597.5 809.7L2600.5 811.2L2603.5 812.7L2606.5 814.2L2609.5 815.6L2612.5 817.1L2615.5 818.6L2618.5 820.1L2621.5 821.6L2624.5 823.2L2627.5 824.8L2630.5 826.4L2633.5 828.1L2636.5 829.8L2639.5 831.6L2642.5 833.5L2645.5 835.4L2648.5 837.3L2651.5 839.2L2654.5 841.2L2657.5 843.2L2660.5 845.2L2663.5 847.1L2666.5 849.1L2669.5 851L2672.5 852.9L2675.5 854.7L2678.5 856.5L2681.5 858.2L2684.5 860L2687.5 861.7L2690.5 863.4L2693.5 865.1L2696.5 866.7L2699.5 868.4L2702.5 870.1L2705.5 871.8L2708.5 873.4L2711.5 875.1L2714.5 876.8L2717.5 878.5L2720.5 880.3L2723.5 882.1L2726.5 883.8L2729.5 885.7L2732.5 887.5L2735.5 889.3L2738.5 891.1L2741.5 893L2744.5 894.8L2747.5 896.6L2750.5 898.5L2753.5 900.3L2756.5 902L2759.5 903.8L2762.5 905.5L2765.5 907.3L2768.5 909L2771.5 910.7L2774.5 912.4L2777.5 914.1L2780.5 915.8L2783.5 917.4L2786.5 919.1L2789.5 920.7L2792.5 922.3L2795.5 923.9L2798.5 925.5L2801.5 927L2804.5 928.5L2807.5 929.9L2810.5 931.2L2813.5 932.2L2816.5 933.2L2819.5 934.2L2822.5 935.3L2825.5 936.7L2828.5 938.5L2831.5 940.9L2834.5 946.1L2835 947L2834.5 948.1L2831.5 952.2L2828.5 955.2L2825.5 957.7L2822.5 959.9L2819.5 961.8L2816.5 963.4L2813.5 964.8L2810.5 966.1L2807.5 967.3L2804.5 968.5L2801.5 969.5L2798.5 970.5L2795.5 971.5L2792.5 972.4L2789.5 973.2L2786.5 974L2783.5 974.7L2780.5 975.4L2777.5 976.1L2774.5 976.8L2771.5 977.4L2768.5 978L2765.5 978.7L2762.5 979.3L2759.5 980L2756.5 980.6L2753.5 981.2L2750.5 981.8L2747.5 982.4L2744.5 982.9L2741.5 983.5L2738.5 984L2735.5 984.6L2732.5 985.1L2729.5 985.6L2726.5 986.1L2723.5 986.6L2720.5 987.1L2717.5 987.5L2714.5 988L2711.5 988.4L2708.5 988.9L2705.5 989.3L2702.5 989.7L2699.5 990.2L2696.5 990.6L2693.5 991.1L2690.5 991.5L2687.5 992L2684.5 992.4L2681.5 992.8L2678.5 993.1L2675.5 993.5L2672.5 993.8L2669.5 994L2666.5 994.2L2663.5 994.4L2660.5 994.4L2657.5 994.5L2654.5 994.6L2651.5 994.6L2648.5 994.7L2645.5 994.7L2642.5 994.8L2639.5 994.8L2636.5 994.9L2633.5 994.9L2630.5 994.9L2627.5 995L2624.5 995L2621.5 995L2618.5 995L2615.5 995L2612.5 995L2609.5 995L2606.5 994.9L2603.5 994.9L2600.5 994.9L2597.5 994.8L2594.5 994.8L2591.5 994.7L2588.5 994.7L2585.5 994.6L2582.5 994.6L2579.5 994.6L2576.5 994.5L2573.5 994.5L2570.5 994.5L2567.5 994.4L2564.5 994.4L2561.5 994.4L2558.5 994.4L2555.5 994.4L2552.5 994.4L2549.5 994.5L2546.5 994.5L2543.5 994.6L2540.5 994.6L2537.5 994.7L2534.5 994.8L2531.5 994.9L2528.5 995L2525.5 995.1L2522.5 995.1L2519.5 995.2L2516.5 995.3L2513.5 995.4L2510.5 995.5L2507.5 995.6L2504.5 995.7L2501.5 995.8L2498.5 995.9L2495.5 996L2492.5 996.1L2489.5 996.2L2486.5 996.3L2483.5 996.5L2480.5 996.6L2477.5 996.7L2474.5 996.8L2471.5 997L2468.5 997.1L2465.5 997.3L2462.5 997.4L2459.5 997.5L2456.5 997.7L2453.5 997.8L2450.5 998L2447.5 998.1L2444.5 998.3L2441.5 998.5L2438.5 998.6L2435.5 998.8L2432.5 998.9L2429.5 999.1L2426.5 999.3L2423.5 999.5L2420.5 999.6L2417.5 999.8L2414.5 1000L2411.5 1000.1L2408.5 1000.3L2405.5 1000.5L2402.5 1000.7L2399.5 1000.9L2396.5 1001.1L2393.5 1001.3L2390.5 1001.5L2387.5 1001.8L2384.5 1002L2381.5 1002.2L2378.5 1002.4L2375.5 1002.7L2372.5 1002.9L2369.5 1003.2L2366.5 1003.4L2363.5 1003.7L2360.5 1003.9L2357.5 1004.2L2354.5 1004.4L2351.5 1004.7L2348.5 1004.9L2345.5 1005.2L2342.5 1005.5L2339.5 1005.7L2336.5 1006L2333.5 1006.3L2330.5 1006.5L2327.5 1006.8L2324.5 1007.1L2321.5 1007.4L2318.5 1007.6L2315.5 1007.9L2312.5 1008.2L2309.5 1008.4L2306.5 1008.7L2303.5 1009L2300.5 1009.3L2297.5 1009.5L2294.5 1009.8L2291.5 1010.1L2288.5 1010.3L2285.5 1010.6L2282.5 1010.9L2279.5 1011.1L2276.5 1011.4L2273.5 1011.6L2270.5 1011.9L2267.5 1012.1L2264.5 1012.4L2261.5 1012.6L2258.5 1012.9L2255.5 1013.1L2252.5 1013.4L2249.5 1013.6L2246.5 1013.8L2243.5 1014.1L2240.5 1014.3L2237.5 1014.5L2234.5 1014.8L2231.5 1015L2228.5 1015.2L2225.5 1015.5L2222.5 1015.7L2219.5 1015.9L2216.5 1016.2L2213.5 1016.4L2210.5 1016.6L2207.5 1016.9L2204.5 1017.1L2201.5 1017.3L2198.5 1017.6L2195.5 1017.8L2192.5 1018L2189.5 1018.3L2186.5 1018.5L2183.5 1018.7L2180.5 1019L2177.5 1019.2L2174.5 1019.4L2171.5 1019.6L2168.5 1019.9L2165.5 1020.1L2162.5 1020.3L2159.5 1020.5L2156.5 1020.8L2153.5 1021L2150.5 1021.2L2147.5 1021.5L2144.5 1021.7L2141.5 1021.9L2138.5 1022.1L2135.5 1022.4L2132.5 1022.6L2129.5 1022.8L2126.5 1023L2123.5 1023.3L2120.5 1023.5L2117.5 1023.7L2114.5 1023.9L2111.5 1024.1L2108.5 1024.4L2105.5 1024.6L2102.5 1024.8L2099.5 1025L2096.5 1025.3L2093.5 1025.5L2090.5 1025.7L2087.5 1025.9L2084.5 1026.1L2081.5 1026.4L2078.5 1026.6L2075.5 1026.8L2072.5 1027L2069.5 1027.2L2066.5 1027.5L2063.5 1027.7L2060.5 1027.9L2057.5 1028.1L2054.5 1028.3L2051.5 1028.5L2048.5 1028.8L2045.5 1029L2042.5 1029.2L2039.5 1029.4L2036.5 1029.6L2033.5 1029.8L2030.5 1030.1L2027.5 1030.3L2024.5 1030.5L2021.5 1030.7L2018.5 1030.9L2015.5 1031.1L2012.5 1031.3L2009.5 1031.6L2006.5 1031.8L2003.5 1032L2000.5 1032.2L1997.5 1032.4L1994.5 1032.6L1991.5 1032.8L1988.5 1033L1985.5 1033.3L1982.5 1033.5L1979.5 1033.7L1976.5 1033.9L1973.5 1034.1L1970.5 1034.3L1967.5 1034.5L1964.5 1034.7L1961.5 1035L1958.5 1035.2L1955.5 1035.4L1952.5 1035.6L1949.5 1035.8L1946.5 1036L1943.5 1036.2L1940.5 1036.4L1937.5 1036.6L1934.5 1036.9L1931.5 1037.1L1928.5 1037.3L1925.5 1037.5L1922.5 1037.7L1919.5 1037.9L1916.5 1038.1L1913.5 1038.3L1910.5 1038.5L1907.5 1038.8L1904.5 1039L1901.5 1039.2L1898.5 1039.4L1895.5 1039.6L1892.5 1039.8L1889.5 1040L1886.5 1040.2L1883.5 1040.5L1880.5 1040.7L1877.5 1040.9L1874.5 1041.1L1871.5 1041.3L1868.5 1041.5L1865.5 1041.7L1862.5 1041.9L1859.5 1042.2L1856.5 1042.4L1853.5 1042.6L1850.5 1042.8L1847.5 1043L1844.5 1043.2L1841.5 1043.4L1838.5 1043.7L1835.5 1043.9L1832.5 1044.1L1829.5 1044.3L1826.5 1044.5L1823.5 1044.7L1820.5 1045L1817.5 1045.2L1814.5 1045.4L1811.5 1045.6L1808.5 1045.8L1805.5 1046L1802.5 1046.3L1799.5 1046.5L1796.5 1046.7L1793.5 1046.9L1790.5 1047.1L1787.5 1047.4L1784.5 1047.6L1781.5 1047.8L1778.5 1048L1775.5 1048.3L1772.5 1048.5L1769.5 1048.7L1766.5 1048.9L1763.5 1049.1L1760.5 1049.4L1757.5 1049.6L1754.5 1049.8L1751.5 1050L1748.5 1050.3L1745.5 1050.5L1742.5 1050.7L1739.5 1050.9L1736.5 1051.1L1733.5 1051.4L1730.5 1051.6L1727.5 1051.8L1724.5 1052L1721.5 1052.3L1718.5 1052.5L1715.5 1052.7L1712.5 1052.9L1709.5 1053.2L1706.5 1053.4L1703.5 1053.6L1700.5 1053.8L1697.5 1054.1L1694.5 1054.3L1691.5 1054.5L1688.5 1054.8L1685.5 1055L1682.5 1055.2L1679.5 1055.4L1676.5 1055.7L1673.5 1055.9L1670.5 1056.1L1667.5 1056.3L1664.5 1056.6L1661.5 1056.8L1658.5 1057L1655.5 1057.2L1652.5 1057.5L1649.5 1057.7L1646.5 1057.9L1643.5 1058.2L1640.5 1058.4L1637.5 1058.6L1634.5 1058.8L1631.5 1059.1L1628.5 1059.3L1625.5 1059.5L1622.5 1059.7L1619.5 1060L1616.5 1060.2L1613.5 1060.4L1610.5 1060.7L1607.5 1060.9L1604.5 1061.1L1601.5 1061.3L1598.5 1061.6L1595.5 1061.8L1592.5 1062L1589.5 1062.3L1586.5 1062.5L1583.5 1062.7L1580.5 1062.9L1577.5 1063.2L1574.5 1063.4L1571.5 1063.6L1568.5 1063.8L1565.5 1064.1L1562.5 1064.3L1559.5 1064.5L1556.5 1064.8L1553.5 1065L1550.5 1065.2L1547.5 1065.4L1544.5 1065.7L1541.5 1065.9L1538.5 1066.1L1535.5 1066.3L1532.5 1066.6L1529.5 1066.8L1526.5 1067L1523.5 1067.3L1520.5 1067.5L1517.5 1067.7L1514.5 1067.9L1511.5 1068.2L1508.5 1068.4L1505.5 1068.6L1502.5 1068.8L1499.5 1069.1L1496.5 1069.3L1493.5 1069.5L1490.5 1069.7L1487.5 1070L1484.5 1070.2L1481.5 1070.4L1478.5 1070.7L1475.5 1070.9L1472.5 1071.1L1469.5 1071.3L1466.5 1071.6L1463.5 1071.8L1460.5 1072L1457.5 1072.3L1454.5 1072.5L1451.5 1072.7L1448.5 1073L1445.5 1073.2L1442.5 1073.5L1439.5 1073.7L1436.5 1073.9L1433.5 1074.2L1430.5 1074.4L1427.5 1074.6L1424.5 1074.9L1421.5 1075.1L1418.5 1075.4L1415.5 1075.6L1412.5 1075.8L1409.5 1076.1L1406.5 1076.3L1403.5 1076.6L1400.5 1076.8L1397.5 1077L1394.5 1077.3L1391.5 1077.5L1388.5 1077.8L1385.5 1078L1382.5 1078.2L1379.5 1078.5L1376.5 1078.7L1373.5 1079L1370.5 1079.2L1367.5 1079.4L1364.5 1079.7L1361.5 1079.9L1358.5 1080.1L1355.5 1080.4L1352.5 1080.6L1349.5 1080.9L1346.5 1081.1L1343.5 1081.3L1340.5 1081.6L1337.5 1081.8L1334.5 1082L1331.5 1082.3L1328.5 1082.5L1325.5 1082.7L1322.5 1083L1319.5 1083.2L1316.5 1083.4L1313.5 1083.7L1310.5 1083.9L1307.5 1084.1L1304.5 1084.3L1301.5 1084.6L1298.5 1084.8L1295.5 1085L1292.5 1085.2L1289.5 1085.5L1286.5 1085.7L1283.5 1085.9L1280.5 1086.1L1277.5 1086.3L1274.5 1086.6L1271.5 1086.8L1268.5 1087L1265.5 1087.2L1262.5 1087.4L1259.5 1087.6L1256.5 1087.8L1253.5 1088.1L1250.5 1088.3L1247.5 1088.5L1244.5 1088.7L1241.5 1088.9L1238.5 1089.1L1235.5 1089.3L1232.5 1089.5L1229.5 1089.7L1226.5 1089.9L1223.5 1090.1L1220.5 1090.3L1217.5 1090.5L1214.5 1090.7L1211.5 1090.8L1208.5 1091L1205.5 1091.2L1202.5 1091.4L1199.5 1091.6L1196.5 1091.8L1193.5 1091.9L1190.5 1092.1L1187.5 1092.3L1184.5 1092.5L1181.5 1092.6L1178.5 1092.8L1175.5 1093L1172.5 1093.1L1169.5 1093.3L1166.5 1093.5L1163.5 1093.6L1160.5 1093.8L1157.5 1093.9L1154.5 1094.1L1151.5 1094.2L1148.5 1094.4L1145.5 1094.5L1142.5 1094.7L1139.5 1094.8L1136.5 1095L1133.5 1095.1L1130.5 1095.3L1127.5 1095.4L1124.5 1095.5L1121.5 1095.7L1118.5 1095.8L1115.5 1096L1112.5 1096.1L1109.5 1096.2L1106.5 1096.4L1103.5 1096.5L1100.5 1096.6L1097.5 1096.8L1094.5 1096.9L1091.5 1097L1088.5 1097.2L1085.5 1097.3L1082.5 1097.4L1079.5 1097.6L1076.5 1097.7L1073.5 1097.8L1070.5 1098L1067.5 1098.1L1064.5 1098.2L1061.5 1098.3L1058.5 1098.5L1055.5 1098.6L1052.5 1098.7L1049.5 1098.9L1046.5 1099L1043.5 1099.1L1040.5 1099.3L1037.5 1099.4L1034.5 1099.5L1031.5 1099.7L1028.5 1099.8L1025.5 1099.9L1022.5 1100L1019.5 1100.2L1016.5 1100.3L1013.5 1100.5L1010.5 1100.6L1007.5 1100.7L1004.5 1100.9L1001.5 1101L998.5 1101.1L995.5 1101.3L992.5 1101.4L989.5 1101.6L986.5 1101.7L983.5 1101.9L980.5 1102L977.5 1102.2L974.5 1102.3L971.5 1102.5L968.5 1102.6L965.5 1102.8L962.5 1102.9L959.5 1103.1L956.5 1103.2L953.5 1103.4L950.5 1103.6L947.5 1103.7L944.5 1103.9L941.5 1104.1L938.5 1104.2L935.5 1104.4L932.5 1104.6L929.5 1104.7L926.5 1104.9L923.5 1105.1L920.5 1105.3L917.5 1105.5L914.5 1105.7L911.5 1105.9L908.5 1106L905.5 1106.2L902.5 1106.4L899.5 1106.6L896.5 1106.8L893.5 1107.1L890.5 1107.3L887.5 1107.6L884.5 1107.9L881.5 1108.2L878.5 1108.5L875.5 1108.8L872.5 1109.1L869.5 1109.4L866.5 1109.7L863.5 1110L860.5 1110.3L857.5 1110.5L854.5 1110.8L851.5 1111L848.5 1111.2L845.5 1111.4L842.5 1111.6L839.5 1111.7L836.5 1111.8L833.5 1112L830.5 1112.1L827.5 1112.2L824.5 1112.3L821.5 1112.4L818.5 1112.6L815.5 1112.7L812.5 1112.8L809.5 1112.9L806.5 1113L803.5 1113.1L800.5 1113.2L797.5 1113.3L794.5 1113.4L791.5 1113.5L788.5 1113.6L785.5 1113.7L782.5 1113.8L779.5 1113.9L776.5 1114L773.5 1114.1L770.5 1114.2L767.5 1114.3L764.5 1114.4L761.5 1114.4L758.5 1114.5L755.5 1114.6L752.5 1114.7L749.5 1114.7L746.5 1114.8L743.5 1114.9L740.5 1114.9L737.5 1115L734.5 1115L731.5 1115.1L728.5 1115.1L725.5 1115.2L722.5 1115.2L719.5 1115.3L716.5 1115.3L713.5 1115.3L710.5 1115.4L707.5 1115.4L704.5 1115.4L701.5 1115.5L698.5 1115.5L695.5 1115.5L692.5 1115.5L689.5 1115.5L686.5 1115.5L683.5 1115.5L680.5 1115.5L677.5 1115.5L674.5 1115.5L671.5 1115.5L668.5 1115.4L665.5 1115.4L662.5 1115.4L659.5 1115.3L656.5 1115.3L653.5 1115.3L650.5 1115.2L647.5 1115.2L644.5 1115.1L641.5 1115.1L638.5 1115L635.5 1114.9L632.5 1114.9L629.5 1114.8L626.5 1114.7L623.5 1114.7L620.5 1114.6L617.5 1114.5L614.5 1114.4L611.5 1114.3L608.5 1114.2L605.5 1114.1L602.5 1114L599.5 1113.8L596.5 1113.5L593.5 1113.1L590.5 1112.8L587.5 1112.3L584.5 1111.8L581.5 1111.3L578.5 1110.8L575.5 1110.2L572.5 1109.6L569.5 1108.9L566.5 1108.3L563.5 1107.6L560.5 1106.9L557.5 1106.3L554.5 1105.6L551.5 1104.9L548.5 1104.2L545.5 1103.5L542.5 1102.9L539.5 1102.2L536.5 1101.6L533.5 1101L530.5 1100.3L527.5 1099.7L524.5 1099L521.5 1098.3L518.5 1097.6L515.5 1096.9L512.5 1096.2L509.5 1095.5L506.5 1094.7L503.5 1094L500.5 1093.2L497.5 1092.5L494.5 1091.7L491.5 1090.9L488.5 1090.2L485.5 1089.4L482.5 1088.6L479.5 1087.8L476.5 1087L473.5 1086.2L470.5 1085.4L467.5 1084.6L464.5 1083.9L461.5 1083.1L458.5 1082.3L455.5 1081.5L452.5 1080.7L449.5 1079.9L446.5 1079.2L443.5 1078.4L440.5 1077.6L437.5 1076.9L434.5 1076.1L431.5 1075.4L428.5 1074.6L425.5 1073.9L422.5 1073.1L419.5 1072.3L416.5 1071.6L413.5 1070.8L410.5 1070.1L407.5 1069.3L404.5 1068.5L401.5 1067.8L398.5 1067L395.5 1066.2L392.5 1065.5L389.5 1064.7L386.5 1064L383.5 1063.2L380.5 1062.4L377.5 1061.7L374.5 1060.9L371.5 1060.1L368.5 1059.4L365.5 1058.6L362.5 1057.9L359.5 1057.1L356.5 1056.4L353.5 1055.6L350.5 1054.9L347.5 1054.1L344.5 1053.4L341.5 1052.6L338.5 1051.9L335.5 1051.1L332.5 1050.4L329.5 1049.6L326.5 1048.9L323.5 1048.1L320.5 1047.3L317.5 1046.5L314.5 1045.8L311.5 1045L308.5 1044.2L305.5 1043.5L302.5 1042.7L299.5 1041.9L296.5 1041.2L293.5 1040.4L290.5 1039.6L287.5 1038.9L284.5 1038.1L281.5 1037.4L278.5 1036.7L275.5 1035.9L272.5 1035.2L269.5 1034.5L266.5 1033.8L263.5 1033.1L260.5 1032.4L257.5 1031.8L254.5 1031.1L251.5 1030.5L248.5 1029.9L245.5 1029.3L242.5 1028.7L239.5 1028.1L236.5 1027.6L233.5 1027.1L230.5 1026.6L227.5 1026.1L224.5 1025.6L221.5 1025.1L218.5 1024.6L215.5 1024.1L212.5 1023.6L209.5 1023L206.5 1022.4L203.5 1021.8L200.5 1021.2L197.5 1020.5L194.5 1019.8L191.5 1019.1L188.5 1018.4L185.5 1017.6L182.5 1016.9L179.5 1016.1L176.5 1015.2L173.5 1014.4L170.5 1013.4L167.5 1012.5L164.5 1011.5L161.5 1010.5L158.5 1009.7L155.5 1008.8L152.5 1007.6L149.5 1006L146.5 1003.7L143.5 996Z"/></clipPath><filter id="bl" x="-50%" y="-50%" width="200%" height="200%"><feGaussianBlur stdDeviation="3.5"/></filter><filter id="bl2" x="-50%" y="-50%" width="200%" height="200%"><feGaussianBlur stdDeviation="3"/></filter><filter id="bl3" x="-10%" y="-50%" width="120%" height="200%"><feGaussianBlur stdDeviation="9"/></filter><linearGradient id="tailg" gradientUnits="userSpaceOnUse" x1="2330" y1="0" x2="2700" y2="0"><stop offset="0" stop-color="#000" stop-opacity="0"/><stop offset="0.6" stop-color="#100300" stop-opacity="0.3"/><stop offset="1" stop-color="#100300" stop-opacity="0.45"/></linearGradient><linearGradient id="mg" gradientUnits="userSpaceOnUse" x1="150" y1="0" x2="650" y2="0"><stop offset="0" stop-color="#fff" stop-opacity="0.45"/><stop offset="1" stop-color="#fff" stop-opacity="1"/></linearGradient><mask id="mm" maskUnits="userSpaceOnUse" x="0" y="0" width="2880" height="1800"><rect x="0" y="0" width="2880" height="1800" fill="url(#mg)"/></mask></defs><g clip-path="url(#bc)"><path d="M143.5 996L146.5 987.8L149.5 985.3L152.5 983.8L155.5 982.7L158.5 981.7L161.5 981L164.5 980.2L167.5 979.4L170.5 978.4L173.5 977.4L176.5 976.5L179.5 975.5L182.5 974.5L185.5 973.6L188.5 972.6L191.5 971.6L194.5 970.6L197.5 969.7L200.5 968.7L203.5 967.7L206.5 966.8L209.5 965.8L212.5 964.8L215.5 963.9L218.5 962.9L221.5 961.9L224.5 960.9L227.5 960L230.5 959L233.5 958L236.5 957.1L239.5 956.1L242.5 955.1L245.5 954.2L248.5 953.2L251.5 952.2L254.5 951.2L257.5 950.3L260.5 949.3L263.5 948.3L266.5 947.4L269.5 946.4L272.5 945.4L275.5 944.5L278.5 943.5L281.5 942.5L284.5 941.5L287.5 940.6L290.5 939.6L293.5 938.6L296.5 937.7L299.5 936.7L302.5 935.7L305.5 934.7L308.5 933.8L311.5 932.8L314.5 931.8L317.5 930.9L320.5 929.9L323.5 928.9L326.5 927.9L329.5 927L332.5 926L335.5 925L338.5 924.1L341.5 923.1L344.5 922.1L347.5 921.1L350.5 920.2L353.5 919.2L356.5 918.2L359.5 917.3L362.5 916.3L365.5 915.3L368.5 914.3L371.5 913.4L374.5 912.4L377.5 911.4L380.5 910.4L383.5 909.4L386.5 908.4L389.5 907.4L392.5 906.4L395.5 905.4L398.5 904.4L401.5 903.4L404.5 902.4L407.5 901.4L410.5 900.4L413.5 899.4L416.5 898.3L419.5 897.3L422.5 896.3L425.5 895.3L428.5 894.4L431.5 893.4L434.5 892.4L437.5 891.4L440.5 890.4L443.5 889.5L446.5 888.5L449.5 887.6L452.5 886.6L455.5 885.7L458.5 884.8L461.5 883.8L464.5 882.9L467.5 882L470.5 881.2L473.5 880.3L476.5 879.4L479.5 878.6L482.5 877.7L485.5 876.9L488.5 876L491.5 875.2L494.5 874.3L497.5 873.5L500.5 872.7L503.5 871.9L506.5 871L509.5 870.2L512.5 869.4L515.5 868.6L518.5 867.8L521.5 867L524.5 866.2L527.5 865.4L530.5 864.6L533.5 863.8L536.5 863L539.5 862.2L542.5 861.5L545.5 860.7L548.5 859.9L551.5 859.1L554.5 858.4L557.5 857.6L560.5 856.8L563.5 856.1L566.5 855.3L569.5 854.6L572.5 853.8L575.5 853L578.5 852.3L581.5 851.6L584.5 850.8L587.5 850.1L590.5 849.3L593.5 848.6L596.5 847.9L599.5 847.1L602.5 846.4L605.5 845.7L608.5 844.9L611.5 844.2L614.5 843.5L617.5 842.8L620.5 842L623.5 841.3L626.5 840.6L629.5 839.9L632.5 839.2L635.5 838.5L638.5 837.8L641.5 837.1L644.5 836.3L647.5 835.6L650.5 834.9L653.5 834.2L656.5 833.5L659.5 832.8L662.5 832.1L665.5 831.4L668.5 830.7L671.5 830L674.5 829.3L677.5 828.6L680.5 827.9L683.5 827.2L686.5 826.5L689.5 825.8L692.5 825.1L695.5 824.4L698.5 823.7L701.5 823.1L704.5 822.4L707.5 821.7L710.5 821L713.5 820.3L716.5 819.6L719.5 818.9L722.5 818.2L725.5 817.5L728.5 816.9L731.5 816.2L734.5 815.5L737.5 814.8L740.5 814.1L743.5 813.5L746.5 812.8L749.5 812.1L752.5 811.4L755.5 810.8L758.5 810.1L761.5 809.4L764.5 808.8L767.5 808.1L770.5 807.4L773.5 806.8L776.5 806.1L779.5 805.5L782.5 804.8L785.5 804.1L788.5 803.5L791.5 802.8L794.5 802.2L797.5 801.5L800.5 800.9L803.5 800.2L806.5 799.6L809.5 798.9L812.5 798.3L815.5 797.7L818.5 797L821.5 796.4L824.5 795.8L827.5 795.1L830.5 794.5L833.5 793.9L836.5 793.2L839.5 792.6L842.5 792L845.5 791.3L848.5 790.7L851.5 790.1L854.5 789.5L857.5 788.9L860.5 788.2L863.5 787.6L866.5 787L869.5 786.4L872.5 785.8L875.5 785.2L878.5 784.6L881.5 784L884.5 783.4L887.5 782.8L890.5 782.2L893.5 781.6L896.5 781L899.5 780.4L902.5 779.8L905.5 779.2L908.5 778.6L911.5 778L914.5 777.5L917.5 776.9L920.5 776.3L923.5 775.7L926.5 775.1L929.5 774.5L932.5 774L935.5 773.4L938.5 772.8L941.5 772.2L944.5 771.7L947.5 771.1L950.5 770.5L953.5 769.9L956.5 769.4L959.5 768.8L962.5 768.3L965.5 767.7L968.5 767.1L971.5 766.6L974.5 766L977.5 765.5L980.5 764.9L983.5 764.4L986.5 763.8L989.5 763.3L992.5 762.7L995.5 762.2L998.5 761.7L1001.5 761.1L1004.5 760.6L1007.5 760.1L1010.5 759.5L1013.5 759L1016.5 758.5L1019.5 758L1022.5 757.5L1025.5 756.9L1028.5 756.4L1031.5 755.9L1034.5 755.4L1037.5 754.9L1040.5 754.4L1043.5 753.9L1046.5 753.4L1049.5 752.9L1052.5 752.4L1055.5 751.9L1058.5 751.5L1061.5 751L1064.5 750.5L1067.5 750L1070.5 749.5L1073.5 749L1076.5 748.6L1079.5 748.1L1082.5 747.6L1085.5 747.1L1088.5 746.7L1091.5 746.2L1094.5 745.7L1097.5 745.2L1100.5 744.8L1103.5 744.3L1106.5 743.9L1109.5 743.4L1112.5 742.9L1115.5 742.5L1118.5 742L1121.5 741.6L1124.5 741.1L1127.5 740.7L1130.5 740.2L1133.5 739.8L1136.5 739.4L1139.5 738.9L1142.5 738.5L1145.5 738.1L1148.5 737.6L1151.5 737.2L1154.5 736.8L1157.5 736.4L1160.5 735.9L1163.5 735.5L1166.5 735.1L1169.5 734.7L1172.5 734.3L1175.5 733.9L1178.5 733.5L1181.5 733.1L1184.5 732.7L1187.5 732.3L1190.5 731.9L1193.5 731.5L1196.5 731.1L1199.5 730.7L1202.5 730.4L1205.5 730L1208.5 729.6L1211.5 729.2L1214.5 728.9L1217.5 728.5L1220.5 728.1L1223.5 727.7L1226.5 727.4L1229.5 727L1232.5 726.6L1235.5 726.3L1238.5 725.9L1241.5 725.5L1244.5 725.2L1247.5 724.8L1250.5 724.5L1253.5 724.1L1256.5 723.8L1259.5 723.4L1262.5 723.1L1265.5 722.7L1268.5 722.4L1271.5 722L1274.5 721.7L1277.5 721.4L1280.5 721L1283.5 720.7L1286.5 720.4L1289.5 720L1292.5 719.7L1295.5 719.4L1298.5 719.1L1301.5 718.8L1304.5 718.5L1307.5 718.2L1310.5 717.8L1313.5 717.5L1316.5 717.2L1319.5 717L1322.5 716.7L1325.5 716.4L1328.5 716.1L1331.5 715.8L1334.5 715.5L1337.5 715.3L1340.5 715L1343.5 714.7L1346.5 714.5L1349.5 714.2L1352.5 713.9L1355.5 713.7L1358.5 713.4L1361.5 713.2L1364.5 712.9L1367.5 712.7L1370.5 712.4L1373.5 712.2L1376.5 712L1379.5 711.7L1382.5 711.5L1385.5 711.3L1388.5 711L1391.5 710.8L1394.5 710.6L1397.5 710.3L1400.5 710.1L1403.5 709.9L1406.5 709.7L1409.5 709.5L1412.5 709.2L1415.5 709L1418.5 708.8L1421.5 708.6L1424.5 708.4L1427.5 708.2L1430.5 708L1433.5 707.8L1436.5 707.6L1439.5 707.4L1442.5 707.2L1445.5 707L1448.5 706.8L1451.5 706.6L1454.5 706.4L1457.5 706.2L1460.5 706L1463.5 705.8L1466.5 705.6L1469.5 705.4L1472.5 705.2L1475.5 705L1478.5 704.8L1481.5 704.6L1484.5 704.5L1487.5 704.3L1490.5 704.1L1493.5 703.9L1496.5 703.7L1499.5 703.5L1502.5 703.3L1505.5 703.2L1508.5 703L1511.5 702.8L1514.5 702.6L1517.5 702.4L1520.5 702.2L1523.5 702.1L1526.5 701.9L1529.5 701.7L1532.5 701.5L1535.5 701.3L1538.5 701.2L1541.5 701L1544.5 700.8L1547.5 700.6L1550.5 700.5L1553.5 700.3L1556.5 700.1L1559.5 699.9L1562.5 699.8L1565.5 699.6L1568.5 699.4L1571.5 699.3L1574.5 699.1L1577.5 698.9L1580.5 698.8L1583.5 698.6L1586.5 698.5L1589.5 698.3L1592.5 698.2L1595.5 698L1598.5 697.9L1601.5 697.7L1604.5 697.6L1607.5 697.4L1610.5 697.3L1613.5 697.2L1616.5 697L1619.5 696.9L1622.5 696.8L1625.5 696.7L1628.5 696.5L1631.5 696.4L1634.5 696.3L1637.5 696.2L1640.5 696.1L1643.5 696L1646.5 695.9L1649.5 695.8L1652.5 695.6L1655.5 695.5L1658.5 695.4L1661.5 695.3L1664.5 695.2L1667.5 695.1L1670.5 695L1673.5 694.9L1676.5 694.8L1679.5 694.7L1682.5 694.7L1685.5 694.6L1688.5 694.5L1691.5 694.4L1694.5 694.3L1697.5 694.2L1700.5 694.1L1703.5 694L1706.5 693.9L1709.5 693.9L1712.5 693.8L1715.5 693.7L1718.5 693.6L1721.5 693.5L1724.5 693.4L1727.5 693.4L1730.5 693.3L1733.5 693.2L1736.5 693.1L1739.5 693.1L1742.5 693L1745.5 692.9L1748.5 692.9L1751.5 692.8L1754.5 692.7L1757.5 692.7L1760.5 692.6L1763.5 692.5L1766.5 692.5L1769.5 692.4L1772.5 692.3L1775.5 692.3L1778.5 692.2L1781.5 692.1L1784.5 692L1787.5 692L1790.5 691.9L1793.5 691.8L1796.5 691.8L1799.5 691.7L1802.5 691.6L1805.5 691.6L1808.5 691.5L1811.5 691.4L1814.5 691.4L1817.5 691.3L1820.5 691.3L1823.5 691.2L1826.5 691.2L1829.5 691.1L1832.5 691.1L1835.5 691L1838.5 691L1841.5 690.9L1844.5 690.9L1847.5 690.9L1850.5 690.8L1853.5 690.8L1856.5 690.8L1859.5 690.8L1862.5 690.8L1865.5 690.8L1868.5 690.8L1871.5 690.8L1874.5 690.8L1877.5 690.8L1880.5 690.9L1883.5 690.9L1886.5 690.9L1889.5 691L1892.5 691L1895.5 691L1898.5 691.1L1901.5 691.1L1904.5 691.2L1907.5 691.2L1910.5 691.3L1913.5 691.3L1916.5 691.4L1919.5 691.5L1922.5 691.5L1925.5 691.6L1928.5 691.7L1931.5 691.7L1934.5 691.8L1937.5 691.9L1940.5 691.9L1943.5 692L1946.5 692.1L1949.5 692.2L1952.5 692.2L1955.5 692.3L1958.5 692.4L1961.5 692.5L1964.5 692.5L1967.5 692.6L1970.5 692.7L1973.5 692.8L1976.5 692.9L1979.5 693L1982.5 693.1L1985.5 693.2L1988.5 693.4L1991.5 693.5L1994.5 693.6L1997.5 693.8L2000.5 693.9L2003.5 694L2006.5 694.2L2009.5 694.3L2012.5 694.5L2015.5 694.7L2018.5 694.8L2021.5 695L2024.5 695.2L2027.5 695.3L2030.5 695.5L2033.5 695.7L2036.5 695.9L2039.5 696.1L2042.5 696.2L2045.5 696.4L2048.5 696.6L2051.5 696.8L2054.5 697L2057.5 697.2L2060.5 697.4L2063.5 697.6L2066.5 697.8L2069.5 698L2072.5 698.2L2075.5 698.4L2078.5 698.6L2081.5 698.9L2084.5 699.1L2087.5 699.3L2090.5 699.5L2093.5 699.7L2096.5 699.9L2099.5 700.1L2102.5 700.3L2105.5 700.6L2108.5 700.8L2111.5 701.1L2114.5 701.3L2117.5 701.5L2120.5 701.8L2123.5 702.1L2126.5 702.3L2129.5 702.6L2132.5 702.9L2135.5 703.2L2138.5 703.4L2141.5 703.7L2144.5 704L2147.5 704.3L2150.5 704.6L2153.5 704.9L2156.5 705.2L2159.5 705.5L2162.5 705.8L2165.5 706.1L2168.5 706.4L2171.5 706.7L2174.5 707L2177.5 707.3L2180.5 707.6L2183.5 707.9L2186.5 708.2L2189.5 708.5L2192.5 708.8L2195.5 709.2L2198.5 709.5L2201.5 709.8L2204.5 710.1L2207.5 710.4L2210.5 710.7L2213.5 711L2216.5 711.3L2219.5 711.6L2222.5 711.9L2225.5 712.2L2228.5 712.5L2231.5 712.8L2234.5 713.1L2237.5 713.4L2240.5 713.7L2243.5 714L2246.5 714.3L2249.5 714.6L2252.5 715L2255.5 715.3L2258.5 715.6L2261.5 716L2264.5 716.3L2267.5 716.7L2270.5 717L2273.5 717.4L2276.5 717.8L2279.5 718.2L2282.5 718.6L2285.5 719L2288.5 719.4L2291.5 719.8L2294.5 720.2L2297.5 720.6L2300.5 721.1L2303.5 721.5L2306.5 722L2309.5 722.5L2312.5 723L2315.5 723.5L2318.5 724.1L2321.5 724.6L2324.5 725.2L2327.5 725.7L2330.5 726.3L2333.5 726.9L2336.5 727.5L2339.5 728.2L2342.5 728.8L2345.5 729.4L2348.5 730.1L2351.5 730.8L2354.5 731.4L2357.5 732.1L2360.5 732.8L2363.5 733.5L2366.5 734.2L2369.5 734.9L2372.5 735.6L2375.5 736.4L2378.5 737.1L2381.5 737.8L2384.5 738.6L2387.5 739.3L2390.5 740.1L2393.5 740.8L2396.5 741.6L2399.5 742.3L2402.5 743.1L2405.5 743.8L2408.5 744.6L2411.5 745.4L2414.5 746.1L2417.5 746.9L2420.5 747.7L2423.5 748.5L2426.5 749.3L2429.5 750.1L2432.5 750.9L2435.5 751.8L2438.5 752.6L2441.5 753.5L2444.5 754.3L2447.5 755.2L2450.5 756.1L2453.5 757L2456.5 757.9L2459.5 758.8L2462.5 759.7L2465.5 760.6L2468.5 761.5L2471.5 762.5L2474.5 763.4L2477.5 764.3L2480.5 765.3L2483.5 766.2L2486.5 767.2L2489.5 768.1L2492.5 769.1L2495.5 770L2498.5 771L2501.5 771.9L2504.5 772.9L2507.5 773.8L2510.5 774.8L2513.5 775.7L2516.5 776.7L2519.5 777.6L2522.5 778.5L2525.5 779.5L2528.5 780.4L2531.5 781.4L2534.5 782.4L2537.5 783.3L2540.5 784.4L2543.5 785.4L2546.5 786.4L2549.5 787.5L2552.5 788.6L2555.5 789.7L2558.5 790.9L2561.5 792.1L2564.5 793.4L2567.5 794.7L2570.5 796.1L2573.5 797.6L2576.5 799.1L2579.5 800.6L2582.5 802.1L2585.5 803.7L2588.5 805.2L2591.5 806.7L2594.5 808.3L2597.5 809.7L2600.5 811.2L2603.5 812.7L2606.5 814.2L2609.5 815.6L2612.5 817.1L2615.5 818.6L2618.5 820.1L2621.5 821.6L2624.5 823.2L2627.5 824.8L2630.5 826.4L2633.5 828.1L2636.5 829.8L2639.5 831.6L2642.5 833.5L2645.5 835.4L2648.5 837.3L2651.5 839.2L2654.5 841.2L2657.5 843.2L2660.5 845.2L2663.5 847.1L2666.5 849.1L2669.5 851L2672.5 852.9L2675.5 854.7L2678.5 856.5L2681.5 858.2L2684.5 860L2687.5 861.7L2690.5 863.4L2693.5 865.1L2696.5 866.7L2699.5 868.4L2702.5 870.1L2705.5 871.8L2708.5 873.4L2711.5 875.1L2714.5 876.8L2717.5 878.5L2720.5 880.3L2723.5 882.1L2726.5 883.8L2729.5 885.7L2732.5 887.5L2735.5 889.3L2738.5 891.1L2741.5 893L2744.5 894.8L2747.5 896.6L2750.5 898.5L2753.5 900.3L2756.5 902L2759.5 903.8L2762.5 905.5L2765.5 907.3L2768.5 909L2771.5 910.7L2774.5 912.4L2777.5 914.1L2780.5 915.8L2783.5 917.4L2786.5 919.1L2789.5 920.7L2792.5 922.3L2795.5 923.9L2798.5 925.5L2801.5 927L2804.5 928.5L2807.5 929.9L2810.5 931.2L2813.5 932.2L2816.5 933.2L2819.5 934.2L2822.5 935.3L2825.5 936.7L2828.5 938.5L2831.5 940.9L2834.5 946.1L2835 947L2834.5 948.1L2831.5 952.2L2828.5 955.2L2825.5 957.7L2822.5 959.9L2819.5 961.8L2816.5 963.4L2813.5 964.8L2810.5 966.1L2807.5 967.3L2804.5 968.5L2801.5 969.5L2798.5 970.5L2795.5 971.5L2792.5 972.4L2789.5 973.2L2786.5 974L2783.5 974.7L2780.5 975.4L2777.5 976.1L2774.5 976.8L2771.5 977.4L2768.5 978L2765.5 978.7L2762.5 979.3L2759.5 980L2756.5 980.6L2753.5 981.2L2750.5 981.8L2747.5 982.4L2744.5 982.9L2741.5 983.5L2738.5 984L2735.5 984.6L2732.5 985.1L2729.5 985.6L2726.5 986.1L2723.5 986.6L2720.5 987.1L2717.5 987.5L2714.5 988L2711.5 988.4L2708.5 988.9L2705.5 989.3L2702.5 989.7L2699.5 990.2L2696.5 990.6L2693.5 991.1L2690.5 991.5L2687.5 992L2684.5 992.4L2681.5 992.8L2678.5 993.1L2675.5 993.5L2672.5 993.8L2669.5 994L2666.5 994.2L2663.5 994.4L2660.5 994.4L2657.5 994.5L2654.5 994.6L2651.5 994.6L2648.5 994.7L2645.5 994.7L2642.5 994.8L2639.5 994.8L2636.5 994.9L2633.5 994.9L2630.5 994.9L2627.5 995L2624.5 995L2621.5 995L2618.5 995L2615.5 995L2612.5 995L2609.5 995L2606.5 994.9L2603.5 994.9L2600.5 994.9L2597.5 994.8L2594.5 994.8L2591.5 994.7L2588.5 994.7L2585.5 994.6L2582.5 994.6L2579.5 994.6L2576.5 994.5L2573.5 994.5L2570.5 994.5L2567.5 994.4L2564.5 994.4L2561.5 994.4L2558.5 994.4L2555.5 994.4L2552.5 994.4L2549.5 994.5L2546.5 994.5L2543.5 994.6L2540.5 994.6L2537.5 994.7L2534.5 994.8L2531.5 994.9L2528.5 995L2525.5 995.1L2522.5 995.1L2519.5 995.2L2516.5 995.3L2513.5 995.4L2510.5 995.5L2507.5 995.6L2504.5 995.7L2501.5 995.8L2498.5 995.9L2495.5 996L2492.5 996.1L2489.5 996.2L2486.5 996.3L2483.5 996.5L2480.5 996.6L2477.5 996.7L2474.5 996.8L2471.5 997L2468.5 997.1L2465.5 997.3L2462.5 997.4L2459.5 997.5L2456.5 997.7L2453.5 997.8L2450.5 998L2447.5 998.1L2444.5 998.3L2441.5 998.5L2438.5 998.6L2435.5 998.8L2432.5 998.9L2429.5 999.1L2426.5 999.3L2423.5 999.5L2420.5 999.6L2417.5 999.8L2414.5 1000L2411.5 1000.1L2408.5 1000.3L2405.5 1000.5L2402.5 1000.7L2399.5 1000.9L2396.5 1001.1L2393.5 1001.3L2390.5 1001.5L2387.5 1001.8L2384.5 1002L2381.5 1002.2L2378.5 1002.4L2375.5 1002.7L2372.5 1002.9L2369.5 1003.2L2366.5 1003.4L2363.5 1003.7L2360.5 1003.9L2357.5 1004.2L2354.5 1004.4L2351.5 1004.7L2348.5 1004.9L2345.5 1005.2L2342.5 1005.5L2339.5 1005.7L2336.5 1006L2333.5 1006.3L2330.5 1006.5L2327.5 1006.8L2324.5 1007.1L2321.5 1007.4L2318.5 1007.6L2315.5 1007.9L2312.5 1008.2L2309.5 1008.4L2306.5 1008.7L2303.5 1009L2300.5 1009.3L2297.5 1009.5L2294.5 1009.8L2291.5 1010.1L2288.5 1010.3L2285.5 1010.6L2282.5 1010.9L2279.5 1011.1L2276.5 1011.4L2273.5 1011.6L2270.5 1011.9L2267.5 1012.1L2264.5 1012.4L2261.5 1012.6L2258.5 1012.9L2255.5 1013.1L2252.5 1013.4L2249.5 1013.6L2246.5 1013.8L2243.5 1014.1L2240.5 1014.3L2237.5 1014.5L2234.5 1014.8L2231.5 1015L2228.5 1015.2L2225.5 1015.5L2222.5 1015.7L2219.5 1015.9L2216.5 1016.2L2213.5 1016.4L2210.5 1016.6L2207.5 1016.9L2204.5 1017.1L2201.5 1017.3L2198.5 1017.6L2195.5 1017.8L2192.5 1018L2189.5 1018.3L2186.5 1018.5L2183.5 1018.7L2180.5 1019L2177.5 1019.2L2174.5 1019.4L2171.5 1019.6L2168.5 1019.9L2165.5 1020.1L2162.5 1020.3L2159.5 1020.5L2156.5 1020.8L2153.5 1021L2150.5 1021.2L2147.5 1021.5L2144.5 1021.7L2141.5 1021.9L2138.5 1022.1L2135.5 1022.4L2132.5 1022.6L2129.5 1022.8L2126.5 1023L2123.5 1023.3L2120.5 1023.5L2117.5 1023.7L2114.5 1023.9L2111.5 1024.1L2108.5 1024.4L2105.5 1024.6L2102.5 1024.8L2099.5 1025L2096.5 1025.3L2093.5 1025.5L2090.5 1025.7L2087.5 1025.9L2084.5 1026.1L2081.5 1026.4L2078.5 1026.6L2075.5 1026.8L2072.5 1027L2069.5 1027.2L2066.5 1027.5L2063.5 1027.7L2060.5 1027.9L2057.5 1028.1L2054.5 1028.3L2051.5 1028.5L2048.5 1028.8L2045.5 1029L2042.5 1029.2L2039.5 1029.4L2036.5 1029.6L2033.5 1029.8L2030.5 1030.1L2027.5 1030.3L2024.5 1030.5L2021.5 1030.7L2018.5 1030.9L2015.5 1031.1L2012.5 1031.3L2009.5 1031.6L2006.5 1031.8L2003.5 1032L2000.5 1032.2L1997.5 1032.4L1994.5 1032.6L1991.5 1032.8L1988.5 1033L1985.5 1033.3L1982.5 1033.5L1979.5 1033.7L1976.5 1033.9L1973.5 1034.1L1970.5 1034.3L1967.5 1034.5L1964.5 1034.7L1961.5 1035L1958.5 1035.2L1955.5 1035.4L1952.5 1035.6L1949.5 1035.8L1946.5 1036L1943.5 1036.2L1940.5 1036.4L1937.5 1036.6L1934.5 1036.9L1931.5 1037.1L1928.5 1037.3L1925.5 1037.5L1922.5 1037.7L1919.5 1037.9L1916.5 1038.1L1913.5 1038.3L1910.5 1038.5L1907.5 1038.8L1904.5 1039L1901.5 1039.2L1898.5 1039.4L1895.5 1039.6L1892.5 1039.8L1889.5 1040L1886.5 1040.2L1883.5 1040.5L1880.5 1040.7L1877.5 1040.9L1874.5 1041.1L1871.5 1041.3L1868.5 1041.5L1865.5 1041.7L1862.5 1041.9L1859.5 1042.2L1856.5 1042.4L1853.5 1042.6L1850.5 1042.8L1847.5 1043L1844.5 1043.2L1841.5 1043.4L1838.5 1043.7L1835.5 1043.9L1832.5 1044.1L1829.5 1044.3L1826.5 1044.5L1823.5 1044.7L1820.5 1045L1817.5 1045.2L1814.5 1045.4L1811.5 1045.6L1808.5 1045.8L1805.5 1046L1802.5 1046.3L1799.5 1046.5L1796.5 1046.7L1793.5 1046.9L1790.5 1047.1L1787.5 1047.4L1784.5 1047.6L1781.5 1047.8L1778.5 1048L1775.5 1048.3L1772.5 1048.5L1769.5 1048.7L1766.5 1048.9L1763.5 1049.1L1760.5 1049.4L1757.5 1049.6L1754.5 1049.8L1751.5 1050L1748.5 1050.3L1745.5 1050.5L1742.5 1050.7L1739.5 1050.9L1736.5 1051.1L1733.5 1051.4L1730.5 1051.6L1727.5 1051.8L1724.5 1052L1721.5 1052.3L1718.5 1052.5L1715.5 1052.7L1712.5 1052.9L1709.5 1053.2L1706.5 1053.4L1703.5 1053.6L1700.5 1053.8L1697.5 1054.1L1694.5 1054.3L1691.5 1054.5L1688.5 1054.8L1685.5 1055L1682.5 1055.2L1679.5 1055.4L1676.5 1055.7L1673.5 1055.9L1670.5 1056.1L1667.5 1056.3L1664.5 1056.6L1661.5 1056.8L1658.5 1057L1655.5 1057.2L1652.5 1057.5L1649.5 1057.7L1646.5 1057.9L1643.5 1058.2L1640.5 1058.4L1637.5 1058.6L1634.5 1058.8L1631.5 1059.1L1628.5 1059.3L1625.5 1059.5L1622.5 1059.7L1619.5 1060L1616.5 1060.2L1613.5 1060.4L1610.5 1060.7L1607.5 1060.9L1604.5 1061.1L1601.5 1061.3L1598.5 1061.6L1595.5 1061.8L1592.5 1062L1589.5 1062.3L1586.5 1062.5L1583.5 1062.7L1580.5 1062.9L1577.5 1063.2L1574.5 1063.4L1571.5 1063.6L1568.5 1063.8L1565.5 1064.1L1562.5 1064.3L1559.5 1064.5L1556.5 1064.8L1553.5 1065L1550.5 1065.2L1547.5 1065.4L1544.5 1065.7L1541.5 1065.9L1538.5 1066.1L1535.5 1066.3L1532.5 1066.6L1529.5 1066.8L1526.5 1067L1523.5 1067.3L1520.5 1067.5L1517.5 1067.7L1514.5 1067.9L1511.5 1068.2L1508.5 1068.4L1505.5 1068.6L1502.5 1068.8L1499.5 1069.1L1496.5 1069.3L1493.5 1069.5L1490.5 1069.7L1487.5 1070L1484.5 1070.2L1481.5 1070.4L1478.5 1070.7L1475.5 1070.9L1472.5 1071.1L1469.5 1071.3L1466.5 1071.6L1463.5 1071.8L1460.5 1072L1457.5 1072.3L1454.5 1072.5L1451.5 1072.7L1448.5 1073L1445.5 1073.2L1442.5 1073.5L1439.5 1073.7L1436.5 1073.9L1433.5 1074.2L1430.5 1074.4L1427.5 1074.6L1424.5 1074.9L1421.5 1075.1L1418.5 1075.4L1415.5 1075.6L1412.5 1075.8L1409.5 1076.1L1406.5 1076.3L1403.5 1076.6L1400.5 1076.8L1397.5 1077L1394.5 1077.3L1391.5 1077.5L1388.5 1077.8L1385.5 1078L1382.5 1078.2L1379.5 1078.5L1376.5 1078.7L1373.5 1079L1370.5 1079.2L1367.5 1079.4L1364.5 1079.7L1361.5 1079.9L1358.5 1080.1L1355.5 1080.4L1352.5 1080.6L1349.5 1080.9L1346.5 1081.1L1343.5 1081.3L1340.5 1081.6L1337.5 1081.8L1334.5 1082L1331.5 1082.3L1328.5 1082.5L1325.5 1082.7L1322.5 1083L1319.5 1083.2L1316.5 1083.4L1313.5 1083.7L1310.5 1083.9L1307.5 1084.1L1304.5 1084.3L1301.5 1084.6L1298.5 1084.8L1295.5 1085L1292.5 1085.2L1289.5 1085.5L1286.5 1085.7L1283.5 1085.9L1280.5 1086.1L1277.5 1086.3L1274.5 1086.6L1271.5 1086.8L1268.5 1087L1265.5 1087.2L1262.5 1087.4L1259.5 1087.6L1256.5 1087.8L1253.5 1088.1L1250.5 1088.3L1247.5 1088.5L1244.5 1088.7L1241.5 1088.9L1238.5 1089.1L1235.5 1089.3L1232.5 1089.5L1229.5 1089.7L1226.5 1089.9L1223.5 1090.1L1220.5 1090.3L1217.5 1090.5L1214.5 1090.7L1211.5 1090.8L1208.5 1091L1205.5 1091.2L1202.5 1091.4L1199.5 1091.6L1196.5 1091.8L1193.5 1091.9L1190.5 1092.1L1187.5 1092.3L1184.5 1092.5L1181.5 1092.6L1178.5 1092.8L1175.5 1093L1172.5 1093.1L1169.5 1093.3L1166.5 1093.5L1163.5 1093.6L1160.5 1093.8L1157.5 1093.9L1154.5 1094.1L1151.5 1094.2L1148.5 1094.4L1145.5 1094.5L1142.5 1094.7L1139.5 1094.8L1136.5 1095L1133.5 1095.1L1130.5 1095.3L1127.5 1095.4L1124.5 1095.5L1121.5 1095.7L1118.5 1095.8L1115.5 1096L1112.5 1096.1L1109.5 1096.2L1106.5 1096.4L1103.5 1096.5L1100.5 1096.6L1097.5 1096.8L1094.5 1096.9L1091.5 1097L1088.5 1097.2L1085.5 1097.3L1082.5 1097.4L1079.5 1097.6L1076.5 1097.7L1073.5 1097.8L1070.5 1098L1067.5 1098.1L1064.5 1098.2L1061.5 1098.3L1058.5 1098.5L1055.5 1098.6L1052.5 1098.7L1049.5 1098.9L1046.5 1099L1043.5 1099.1L1040.5 1099.3L1037.5 1099.4L1034.5 1099.5L1031.5 1099.7L1028.5 1099.8L1025.5 1099.9L1022.5 1100L1019.5 1100.2L1016.5 1100.3L1013.5 1100.5L1010.5 1100.6L1007.5 1100.7L1004.5 1100.9L1001.5 1101L998.5 1101.1L995.5 1101.3L992.5 1101.4L989.5 1101.6L986.5 1101.7L983.5 1101.9L980.5 1102L977.5 1102.2L974.5 1102.3L971.5 1102.5L968.5 1102.6L965.5 1102.8L962.5 1102.9L959.5 1103.1L956.5 1103.2L953.5 1103.4L950.5 1103.6L947.5 1103.7L944.5 1103.9L941.5 1104.1L938.5 1104.2L935.5 1104.4L932.5 1104.6L929.5 1104.7L926.5 1104.9L923.5 1105.1L920.5 1105.3L917.5 1105.5L914.5 1105.7L911.5 1105.9L908.5 1106L905.5 1106.2L902.5 1106.4L899.5 1106.6L896.5 1106.8L893.5 1107.1L890.5 1107.3L887.5 1107.6L884.5 1107.9L881.5 1108.2L878.5 1108.5L875.5 1108.8L872.5 1109.1L869.5 1109.4L866.5 1109.7L863.5 1110L860.5 1110.3L857.5 1110.5L854.5 1110.8L851.5 1111L848.5 1111.2L845.5 1111.4L842.5 1111.6L839.5 1111.7L836.5 1111.8L833.5 1112L830.5 1112.1L827.5 1112.2L824.5 1112.3L821.5 1112.4L818.5 1112.6L815.5 1112.7L812.5 1112.8L809.5 1112.9L806.5 1113L803.5 1113.1L800.5 1113.2L797.5 1113.3L794.5 1113.4L791.5 1113.5L788.5 1113.6L785.5 1113.7L782.5 1113.8L779.5 1113.9L776.5 1114L773.5 1114.1L770.5 1114.2L767.5 1114.3L764.5 1114.4L761.5 1114.4L758.5 1114.5L755.5 1114.6L752.5 1114.7L749.5 1114.7L746.5 1114.8L743.5 1114.9L740.5 1114.9L737.5 1115L734.5 1115L731.5 1115.1L728.5 1115.1L725.5 1115.2L722.5 1115.2L719.5 1115.3L716.5 1115.3L713.5 1115.3L710.5 1115.4L707.5 1115.4L704.5 1115.4L701.5 1115.5L698.5 1115.5L695.5 1115.5L692.5 1115.5L689.5 1115.5L686.5 1115.5L683.5 1115.5L680.5 1115.5L677.5 1115.5L674.5 1115.5L671.5 1115.5L668.5 1115.4L665.5 1115.4L662.5 1115.4L659.5 1115.3L656.5 1115.3L653.5 1115.3L650.5 1115.2L647.5 1115.2L644.5 1115.1L641.5 1115.1L638.5 1115L635.5 1114.9L632.5 1114.9L629.5 1114.8L626.5 1114.7L623.5 1114.7L620.5 1114.6L617.5 1114.5L614.5 1114.4L611.5 1114.3L608.5 1114.2L605.5 1114.1L602.5 1114L599.5 1113.8L596.5 1113.5L593.5 1113.1L590.5 1112.8L587.5 1112.3L584.5 1111.8L581.5 1111.3L578.5 1110.8L575.5 1110.2L572.5 1109.6L569.5 1108.9L566.5 1108.3L563.5 1107.6L560.5 1106.9L557.5 1106.3L554.5 1105.6L551.5 1104.9L548.5 1104.2L545.5 1103.5L542.5 1102.9L539.5 1102.2L536.5 1101.6L533.5 1101L530.5 1100.3L527.5 1099.7L524.5 1099L521.5 1098.3L518.5 1097.6L515.5 1096.9L512.5 1096.2L509.5 1095.5L506.5 1094.7L503.5 1094L500.5 1093.2L497.5 1092.5L494.5 1091.7L491.5 1090.9L488.5 1090.2L485.5 1089.4L482.5 1088.6L479.5 1087.8L476.5 1087L473.5 1086.2L470.5 1085.4L467.5 1084.6L464.5 1083.9L461.5 1083.1L458.5 1082.3L455.5 1081.5L452.5 1080.7L449.5 1079.9L446.5 1079.2L443.5 1078.4L440.5 1077.6L437.5 1076.9L434.5 1076.1L431.5 1075.4L428.5 1074.6L425.5 1073.9L422.5 1073.1L419.5 1072.3L416.5 1071.6L413.5 1070.8L410.5 1070.1L407.5 1069.3L404.5 1068.5L401.5 1067.8L398.5 1067L395.5 1066.2L392.5 1065.5L389.5 1064.7L386.5 1064L383.5 1063.2L380.5 1062.4L377.5 1061.7L374.5 1060.9L371.5 1060.1L368.5 1059.4L365.5 1058.6L362.5 1057.9L359.5 1057.1L356.5 1056.4L353.5 1055.6L350.5 1054.9L347.5 1054.1L344.5 1053.4L341.5 1052.6L338.5 1051.9L335.5 1051.1L332.5 1050.4L329.5 1049.6L326.5 1048.9L323.5 1048.1L320.5 1047.3L317.5 1046.5L314.5 1045.8L311.5 1045L308.5 1044.2L305.5 1043.5L302.5 1042.7L299.5 1041.9L296.5 1041.2L293.5 1040.4L290.5 1039.6L287.5 1038.9L284.5 1038.1L281.5 1037.4L278.5 1036.7L275.5 1035.9L272.5 1035.2L269.5 1034.5L266.5 1033.8L263.5 1033.1L260.5 1032.4L257.5 1031.8L254.5 1031.1L251.5 1030.5L248.5 1029.9L245.5 1029.3L242.5 1028.7L239.5 1028.1L236.5 1027.6L233.5 1027.1L230.5 1026.6L227.5 1026.1L224.5 1025.6L221.5 1025.1L218.5 1024.6L215.5 1024.1L212.5 1023.6L209.5 1023L206.5 1022.4L203.5 1021.8L200.5 1021.2L197.5 1020.5L194.5 1019.8L191.5 1019.1L188.5 1018.4L185.5 1017.6L182.5 1016.9L179.5 1016.1L176.5 1015.2L173.5 1014.4L170.5 1013.4L167.5 1012.5L164.5 1011.5L161.5 1010.5L158.5 1009.7L155.5 1008.8L152.5 1007.6L149.5 1006L146.5 1003.7L143.5 996Z" fill="#f4512a"/><g filter="url(#bl3)"><path d="M144 990.0 L150 979.3 L156 976.7 L162 975.0 L168 973.4 L174 971.4 L180 969.5 L186 967.6 L192 965.6 L198 963.7 L204 961.7 L210 959.8 L216 957.9 L222 955.9 L228 954.0 L234 952.0 L240 950.1 L246 948.2 L252 946.2 L258 944.3 L264 942.3 L270 940.4 L276 938.5 L282 936.5 L288 934.6 L294 932.6 L300 930.7 L306 928.7 L312 926.8 L318 924.9 L324 922.9 L330 921.0 L336 919.0 L342 917.1 L348 915.1 L354 913.2 L360 911.3 L366 909.3 L372 907.4 L378 905.4 L384 903.4 L390 901.4 L396 899.4 L402 897.4 L408 895.4 L414 893.4 L420 891.3 L426 889.3 L432 887.4 L438 885.4 L444 883.5 L450 881.6 L456 879.7 L462 877.8 L468 876.0 L474 874.3 L480 872.6 L486 870.9 L492 869.2 L498 867.5 L504 865.9 L510 864.2 L516 862.6 L522 861.0 L528 859.4 L534 857.8 L540 856.2 L546 854.7 L552 853.1 L558 851.6 L564 850.1 L570 848.6 L576 847.0 L582 845.6 L588 844.1 L594 842.6 L600 841.1 L606 839.7 L612 838.2 L618 836.8 L624 835.3 L630 833.9 L636 832.5 L642 831.1 L648 829.6 L654 828.2 L660 826.8 L666 825.4 L672 824.0 L678 822.6 L684 821.2 L690 819.8 L696 818.4 L702 817.1 L708 815.7 L714 814.3 L720 812.9 L726 811.5 L732 810.2 L738 808.8 L744 807.5 L750 806.1 L756 804.8 L762 803.4 L768 802.1 L774 800.8 L780 799.5 L786 798.1 L792 796.8 L798 795.5 L804 794.2 L810 792.9 L816 791.7 L822 790.4 L828 789.1 L834 787.9 L840 786.6 L846 785.3 L852 784.1 L858 782.9 L864 781.6 L870 780.4 L876 779.2 L882 778.0 L888 776.8 L894 775.6 L900 774.4 L906 773.2 L912 772.0 L918 770.9 L924 769.7 L930 768.5 L936 767.4 L942 766.2 L948 765.1 L954 763.9 L960 762.8 L966 761.7 L972 760.6 L978 759.5 L984 758.4 L990 757.3 L996 756.2 L1002 755.1 L1008 754.1 L1014 753.0 L1020 752.0 L1026 750.9 L1032 749.9 L1038 748.9 L1044 747.9 L1050 746.9 L1056 745.9 L1062 745.0 L1068 744.0 L1074 743.0 L1080 742.1 L1086 741.1 L1092 740.2 L1098 739.2 L1104 738.3 L1110 737.4 L1116 736.5 L1122 735.6 L1128 734.7 L1134 733.8 L1140 732.9 L1146 732.1 L1152 731.2 L1158 730.4 L1164 729.5 L1170 728.7 L1176 727.9 L1182 727.1 L1188 726.3 L1194 725.5 L1200 724.7 L1206 724.0 L1212 723.2 L1218 722.5 L1224 721.7 L1230 721.0 L1236 720.3 L1242 719.5 L1248 718.8 L1254 718.1 L1260 717.4 L1266 716.7 L1272 716.0 L1278 715.4 L1284 714.7 L1290 714.0 L1296 713.4 L1302 712.8 L1308 712.2 L1314 711.5 L1320 711.0 L1326 710.4 L1332 709.8 L1338 709.3 L1344 708.7 L1350 708.2 L1356 707.7 L1362 707.2 L1368 706.7 L1374 706.2 L1380 705.7 L1386 705.3 L1392 704.8 L1398 704.3 L1404 703.9 L1410 703.5 L1416 703.0 L1422 702.6 L1428 702.2 L1434 701.8 L1440 701.4 L1446 701.0 L1452 700.6 L1458 700.2 L1464 699.8 L1470 699.4 L1476 699.0 L1482 698.6 L1488 698.3 L1494 697.9 L1500 697.5 L1506 697.2 L1512 696.8 L1518 696.4 L1524 696.1 L1530 695.7 L1536 695.3 L1542 695.0 L1548 694.6 L1554 694.3 L1560 693.9 L1566 693.6 L1572 693.3 L1578 692.9 L1584 692.6 L1590 692.3 L1596 692.0 L1602 691.7 L1608 691.4 L1614 691.2 L1620 690.9 L1626 690.7 L1632 690.4 L1638 690.2 L1644 690.0 L1650 689.8 L1656 689.5 L1662 689.3 L1668 689.1 L1674 688.9 L1680 688.7 L1686 688.6 L1692 688.4 L1698 688.2 L1704 688.0 L1710 687.9 L1716 687.7 L1722 687.5 L1728 687.4 L1734 687.2 L1740 687.1 L1746 686.9 L1752 686.8 L1758 686.7 L1764 686.5 L1770 686.4 L1776 686.3 L1782 686.1 L1788 686.0 L1794 685.8 L1800 685.7 L1806 685.6 L1812 685.4 L1818 685.3 L1824 685.2 L1830 685.1 L1836 685.0 L1842 684.9 L1848 684.9 L1854 684.8 L1860 684.8 L1866 684.8 L1872 684.8 L1878 684.8 L1884 684.9 L1890 685.0 L1896 685.0 L1902 685.1 L1908 685.2 L1914 685.3 L1920 685.5 L1926 685.6 L1932 685.7 L1938 685.9 L1944 686.0 L1950 686.2 L1956 686.3 L1962 686.5 L1968 686.6 L1974 686.8 L1980 687.0 L1986 687.2 L1992 687.5 L1998 687.8 L2004 688.0 L2010 688.3 L2016 688.7 L2022 689.0 L2028 689.3 L2034 689.7 L2040 690.1 L2046 690.4 L2052 690.8 L2058 691.2 L2064 691.6 L2070 692.0 L2076 692.4 L2082 692.9 L2088 693.3 L2094 693.7 L2100 694.1 L2106 694.6 L2112 695.1 L2118 695.5 L2124 696.1 L2130 696.6 L2136 697.2 L2142 697.7 L2148 698.3 L2154 698.9 L2160 699.5 L2166 700.1 L2172 700.7 L2178 701.3 L2184 701.9 L2190 702.5 L2196 703.2 L2202 703.8 L2208 704.4 L2214 705.0 L2220 705.6 L2226 706.2 L2232 706.8 L2238 707.4 L2244 708.0 L2250 708.6 L2256 709.3 L2262 710.0 L2268 710.7 L2274 711.4 L2280 712.2 L2286 713.0 L2292 713.8 L2298 714.6 L2304 715.5 L2310 716.5 L2316 717.5 L2322 718.6 L2328 719.7 L2334 720.9 L2340 722.2 L2346 723.4 L2352 724.8 L2358 726.1 L2364 727.5 L2370 728.9 L2376 730.4 L2382 731.8 L2388 733.3 L2394 734.8 L2400 736.3 L2406 737.8 L2412 739.4 L2418 740.9 L2424 742.5 L2430 744.1 L2436 745.8 L2442 747.5 L2448 749.2 L2454 751.0 L2460 752.8 L2466 754.6 L2472 756.5 L2478 758.3 L2484 760.2 L2490 762.1 L2496 764.0 L2502 765.9 L2508 767.8 L2514 769.7 L2520 771.6 L2526 773.5 L2532 775.4 L2538 777.3 L2544 779.4 L2550 781.5 L2556 783.7 L2562 786.1 L2568 788.7 L2574 791.6 L2580 794.6 L2586 797.7 L2592 800.7 L2598 803.7 L2604 806.7 L2610 809.6 L2616 812.6 L2622 815.6 L2628 818.8 L2634 822.1 L2640 825.6 L2646 829.4 L2652 833.2 L2658 837.2 L2664 841.1 L2670 845.0 L2676 848.7 L2682 852.2 L2688 855.7 L2694 859.1 L2700 862.4 L2706 865.8 L2712 869.1 L2718 872.5 L2724 876.1 L2730 879.7 L2736 883.3 L2742 887.0 L2748 890.6 L2754 894.3 L2760 897.8 L2766 901.3 L2772 904.7 L2778 908.1 L2784 911.4 L2790 914.7 L2796 917.9 L2802 921.0 L2808 923.9 L2814 926.2 L2820 928.2 L2826 930.7 L2832 934.9 L2835 941.0 L2835 947.0 L2832 942.1 L2826 938.8 L2820 936.9 L2814 935.5 L2808 933.7 L2802 931.3 L2796 928.7 L2790 926.0 L2784 923.2 L2778 920.3 L2772 917.3 L2766 914.4 L2760 911.4 L2754 908.3 L2748 905.2 L2742 902.0 L2736 898.8 L2730 895.6 L2724 892.5 L2718 889.4 L2712 886.5 L2706 883.5 L2700 880.6 L2694 877.7 L2688 874.7 L2682 871.7 L2676 868.6 L2670 865.3 L2664 861.8 L2658 858.3 L2652 854.8 L2646 851.3 L2640 847.9 L2634 844.8 L2628 841.8 L2622 839.0 L2616 836.2 L2610 833.6 L2604 830.9 L2598 828.3 L2592 825.5 L2586 822.8 L2580 820.0 L2574 817.3 L2568 814.7 L2562 812.3 L2556 810.2 L2550 808.2 L2544 806.3 L2538 804.5 L2532 802.7 L2526 801.0 L2520 799.4 L2514 797.7 L2508 796.0 L2502 794.3 L2496 792.6 L2490 790.9 L2484 789.3 L2478 787.6 L2472 785.9 L2466 784.3 L2460 782.7 L2454 781.1 L2448 779.5 L2442 778.0 L2436 776.5 L2430 775.0 L2424 773.6 L2418 772.2 L2412 770.8 L2406 769.5 L2400 768.2 L2394 766.9 L2388 765.6 L2382 764.3 L2376 763.0 L2370 761.7 L2364 760.5 L2358 759.3 L2352 758.2 L2346 757.0 L2340 755.9 L2334 754.9 L2328 753.8 L2322 752.9 L2316 752.0 L2310 751.1 L2304 750.3 L2298 749.5 L2292 748.8 L2286 748.1 L2280 747.5 L2274 746.8 L2268 746.2 L2262 745.7 L2256 745.1 L2250 744.5 L2244 744.0 L2238 743.5 L2232 743.0 L2226 742.5 L2220 742.0 L2214 741.5 L2208 741.0 L2202 740.5 L2196 740.0 L2190 739.5 L2184 739.0 L2178 738.5 L2172 738.0 L2166 737.5 L2160 737.0 L2154 736.5 L2148 736.0 L2142 735.5 L2136 735.1 L2130 734.6 L2124 734.2 L2118 733.8 L2112 733.4 L2106 733.0 L2100 732.6 L2094 732.3 L2088 731.9 L2082 731.6 L2076 731.3 L2070 730.9 L2064 730.6 L2058 730.3 L2052 730.0 L2046 729.7 L2040 729.4 L2034 729.1 L2028 728.8 L2022 728.6 L2016 728.3 L2010 728.1 L2004 727.8 L1998 727.6 L1992 727.4 L1986 727.2 L1980 727.1 L1974 726.9 L1968 726.8 L1962 726.7 L1956 726.6 L1950 726.5 L1944 726.4 L1938 726.3 L1932 726.3 L1926 726.2 L1920 726.1 L1914 726.0 L1908 726.0 L1902 725.9 L1896 725.9 L1890 725.9 L1884 725.9 L1878 725.9 L1872 725.9 L1866 725.9 L1860 725.9 L1854 726.0 L1848 726.1 L1842 726.2 L1836 726.3 L1830 726.4 L1824 726.6 L1818 726.7 L1812 726.9 L1806 727.0 L1800 727.2 L1794 727.3 L1788 727.5 L1782 727.7 L1776 727.9 L1770 728.0 L1764 728.2 L1758 728.3 L1752 728.5 L1746 728.7 L1740 728.9 L1734 729.0 L1728 729.2 L1722 729.4 L1716 729.6 L1710 729.8 L1704 730.0 L1698 730.2 L1692 730.4 L1686 730.6 L1680 730.8 L1674 731.0 L1668 731.3 L1662 731.5 L1656 731.7 L1650 731.9 L1644 732.2 L1638 732.4 L1632 732.7 L1626 732.9 L1620 733.2 L1614 733.5 L1608 733.8 L1602 734.1 L1596 734.4 L1590 734.7 L1584 735.0 L1578 735.4 L1572 735.7 L1566 736.0 L1560 736.4 L1554 736.8 L1548 737.1 L1542 737.5 L1536 737.8 L1530 738.2 L1524 738.6 L1518 739.0 L1512 739.3 L1506 739.7 L1500 740.1 L1494 740.5 L1488 740.8 L1482 741.2 L1476 741.6 L1470 742.0 L1464 742.4 L1458 742.8 L1452 743.2 L1446 743.6 L1440 744.0 L1434 744.4 L1428 744.8 L1422 745.3 L1416 745.7 L1410 746.1 L1404 746.6 L1398 747.0 L1392 747.5 L1386 747.9 L1380 748.4 L1374 748.9 L1368 749.4 L1362 749.9 L1356 750.4 L1350 750.9 L1344 751.4 L1338 751.9 L1332 752.5 L1326 753.0 L1320 753.6 L1314 754.2 L1308 754.7 L1302 755.4 L1296 756.0 L1290 756.6 L1284 757.2 L1278 757.9 L1272 758.5 L1266 759.2 L1260 759.8 L1254 760.5 L1248 761.2 L1242 761.9 L1236 762.6 L1230 763.3 L1224 764.0 L1218 764.7 L1212 765.4 L1206 766.1 L1200 766.8 L1194 767.6 L1188 768.3 L1182 769.0 L1176 769.8 L1170 770.6 L1164 771.3 L1158 772.1 L1152 772.9 L1146 773.7 L1140 774.5 L1134 775.3 L1128 776.2 L1122 777.0 L1116 777.8 L1110 778.7 L1104 779.5 L1098 780.4 L1092 781.3 L1086 782.1 L1080 783.0 L1074 783.9 L1068 784.8 L1062 785.7 L1056 786.6 L1050 787.5 L1044 788.4 L1038 789.4 L1032 790.3 L1026 791.2 L1020 792.2 L1014 793.2 L1008 794.1 L1002 795.1 L996 796.1 L990 797.1 L984 798.1 L978 799.1 L972 800.2 L966 801.2 L960 802.2 L954 803.3 L948 804.4 L942 805.4 L936 806.5 L930 807.6 L924 808.6 L918 809.7 L912 810.8 L906 811.9 L900 813.0 L894 814.1 L888 815.3 L882 816.4 L876 817.6 L870 818.7 L864 819.9 L858 821.0 L852 822.2 L846 823.4 L840 824.5 L834 825.7 L828 826.8 L822 828.0 L816 829.2 L810 830.3 L804 831.5 L798 832.7 L792 833.9 L786 835.1 L780 836.3 L774 837.5 L768 838.7 L762 839.9 L756 841.2 L750 842.4 L744 843.6 L738 844.8 L732 846.1 L726 847.3 L720 848.5 L714 849.8 L708 851.0 L702 852.3 L696 853.5 L690 854.8 L684 856.1 L678 857.3 L672 858.6 L666 859.8 L660 861.1 L654 862.3 L648 863.6 L642 864.9 L636 866.1 L630 867.4 L624 868.7 L618 869.9 L612 871.2 L606 872.5 L600 873.8 L594 875.0 L588 876.3 L582 877.5 L576 878.8 L570 880.0 L564 881.2 L558 882.5 L552 883.7 L546 885.0 L540 886.2 L534 887.5 L528 888.8 L522 890.1 L516 891.4 L510 892.7 L504 894.1 L498 895.4 L492 896.8 L486 898.1 L480 899.5 L474 900.9 L468 902.3 L462 903.8 L456 905.3 L450 906.8 L444 908.4 L438 910.0 L432 911.6 L426 913.2 L420 914.8 L414 916.5 L408 918.2 L402 919.8 L396 921.5 L390 923.1 L384 924.8 L378 926.4 L372 928.0 L366 929.6 L360 931.2 L354 932.8 L348 934.4 L342 936.0 L336 937.6 L330 939.2 L324 940.8 L318 942.4 L312 944.0 L306 945.6 L300 947.2 L294 948.8 L288 950.4 L282 952.0 L276 953.6 L270 955.2 L264 956.8 L258 958.4 L252 960.0 L246 961.7 L240 963.3 L234 964.9 L228 966.6 L222 968.2 L216 969.9 L210 971.5 L204 973.1 L198 974.8 L192 976.4 L186 978.0 L180 979.5 L174 981.1 L168 982.7 L162 983.9 L156 985.3 L150 987.3 L144 996.0Z" fill="#000" opacity="0.62"/><path d="M144 1002.0 L150 1012.0 L156 1014.8 L162 1016.5 L168 1018.5 L174 1020.4 L180 1022.1 L186 1023.6 L192 1025.1 L198 1026.5 L204 1027.8 L210 1029.0 L216 1030.1 L222 1031.1 L228 1032.1 L234 1033.1 L240 1034.1 L246 1035.3 L252 1036.5 L258 1037.8 L264 1039.1 L270 1040.5 L276 1041.9 L282 1043.4 L288 1044.9 L294 1046.4 L300 1047.9 L306 1049.5 L312 1051.0 L318 1052.5 L324 1054.1 L330 1055.6 L336 1057.1 L342 1058.6 L348 1060.1 L354 1061.6 L360 1063.1 L366 1064.6 L372 1066.1 L378 1067.7 L384 1069.2 L390 1070.7 L396 1072.2 L402 1073.8 L408 1075.3 L414 1076.8 L420 1078.3 L426 1079.9 L432 1081.4 L438 1082.9 L444 1084.4 L450 1085.9 L456 1087.5 L462 1089.1 L468 1090.6 L474 1092.2 L480 1093.8 L486 1095.4 L492 1096.9 L498 1098.5 L504 1100.0 L510 1101.5 L516 1102.9 L522 1104.3 L528 1105.7 L534 1107.0 L540 1108.2 L546 1109.5 L552 1110.9 L558 1112.3 L564 1113.6 L570 1114.9 L576 1116.2 L582 1117.3 L588 1118.3 L594 1119.1 L600 1119.8 L606 1120.1 L612 1120.3 L618 1120.5 L624 1120.7 L630 1120.8 L636 1120.9 L642 1121.1 L648 1121.2 L654 1121.3 L660 1121.3 L666 1121.4 L672 1121.5 L678 1121.5 L684 1121.5 L690 1121.5 L696 1121.5 L702 1121.5 L708 1121.4 L714 1121.3 L720 1121.3 L726 1121.2 L732 1121.1 L738 1121.0 L744 1120.9 L750 1120.7 L756 1120.6 L762 1120.4 L768 1120.3 L774 1120.1 L780 1119.9 L786 1119.7 L792 1119.5 L798 1119.3 L804 1119.1 L810 1118.9 L816 1118.7 L822 1118.4 L828 1118.2 L834 1118.0 L840 1117.7 L846 1117.4 L852 1117.0 L858 1116.5 L864 1116.0 L870 1115.4 L876 1114.8 L882 1114.2 L888 1113.6 L894 1113.1 L900 1112.6 L906 1112.2 L912 1111.9 L918 1111.5 L924 1111.1 L930 1110.7 L936 1110.4 L942 1110.1 L948 1109.7 L954 1109.4 L960 1109.1 L966 1108.8 L972 1108.5 L978 1108.2 L984 1107.9 L990 1107.6 L996 1107.3 L1002 1107.0 L1008 1106.7 L1014 1106.5 L1020 1106.2 L1026 1105.9 L1032 1105.7 L1038 1105.4 L1044 1105.1 L1050 1104.9 L1056 1104.6 L1062 1104.3 L1068 1104.1 L1074 1103.8 L1080 1103.6 L1086 1103.3 L1092 1103.0 L1098 1102.8 L1104 1102.5 L1110 1102.2 L1116 1102.0 L1122 1101.7 L1128 1101.4 L1134 1101.1 L1140 1100.8 L1146 1100.5 L1152 1100.2 L1158 1099.9 L1164 1099.6 L1170 1099.3 L1176 1099.0 L1182 1098.6 L1188 1098.3 L1194 1097.9 L1200 1097.6 L1206 1097.2 L1212 1096.8 L1218 1096.5 L1224 1096.1 L1230 1095.7 L1236 1095.3 L1242 1094.9 L1248 1094.5 L1254 1094.1 L1260 1093.6 L1266 1093.2 L1272 1092.8 L1278 1092.3 L1284 1091.9 L1290 1091.5 L1296 1091.0 L1302 1090.6 L1308 1090.1 L1314 1089.7 L1320 1089.2 L1326 1088.7 L1332 1088.3 L1338 1087.8 L1344 1087.3 L1350 1086.9 L1356 1086.4 L1362 1085.9 L1368 1085.4 L1374 1085.0 L1380 1084.5 L1386 1084.0 L1392 1083.5 L1398 1083.0 L1404 1082.6 L1410 1082.1 L1416 1081.6 L1422 1081.1 L1428 1080.6 L1434 1080.2 L1440 1079.7 L1446 1079.2 L1452 1078.7 L1458 1078.3 L1464 1077.8 L1470 1077.3 L1476 1076.9 L1482 1076.4 L1488 1076.0 L1494 1075.5 L1500 1075.1 L1506 1074.6 L1512 1074.2 L1518 1073.7 L1524 1073.3 L1530 1072.8 L1536 1072.3 L1542 1071.9 L1548 1071.4 L1554 1071.0 L1560 1070.5 L1566 1070.1 L1572 1069.6 L1578 1069.2 L1584 1068.7 L1590 1068.3 L1596 1067.8 L1602 1067.3 L1608 1066.9 L1614 1066.4 L1620 1066.0 L1626 1065.5 L1632 1065.1 L1638 1064.6 L1644 1064.2 L1650 1063.7 L1656 1063.2 L1662 1062.8 L1668 1062.3 L1674 1061.9 L1680 1061.4 L1686 1061.0 L1692 1060.5 L1698 1060.1 L1704 1059.6 L1710 1059.2 L1716 1058.7 L1722 1058.3 L1728 1057.8 L1734 1057.4 L1740 1056.9 L1746 1056.5 L1752 1056.0 L1758 1055.6 L1764 1055.1 L1770 1054.7 L1776 1054.3 L1782 1053.8 L1788 1053.4 L1794 1052.9 L1800 1052.5 L1806 1052.0 L1812 1051.6 L1818 1051.2 L1824 1050.7 L1830 1050.3 L1836 1049.9 L1842 1049.4 L1848 1049.0 L1854 1048.6 L1860 1048.2 L1866 1047.7 L1872 1047.3 L1878 1046.9 L1884 1046.5 L1890 1046.0 L1896 1045.6 L1902 1045.2 L1908 1044.8 L1914 1044.3 L1920 1043.9 L1926 1043.5 L1932 1043.1 L1938 1042.6 L1944 1042.2 L1950 1041.8 L1956 1041.4 L1962 1041.0 L1968 1040.5 L1974 1040.1 L1980 1039.7 L1986 1039.3 L1992 1038.8 L1998 1038.4 L2004 1038.0 L2010 1037.6 L2016 1037.1 L2022 1036.7 L2028 1036.3 L2034 1035.8 L2040 1035.4 L2046 1035.0 L2052 1034.5 L2058 1034.1 L2064 1033.7 L2070 1033.2 L2076 1032.8 L2082 1032.4 L2088 1031.9 L2094 1031.5 L2100 1031.0 L2106 1030.6 L2112 1030.1 L2118 1029.7 L2124 1029.3 L2130 1028.8 L2136 1028.4 L2142 1027.9 L2148 1027.5 L2154 1027.0 L2160 1026.5 L2166 1026.1 L2172 1025.6 L2178 1025.2 L2184 1024.7 L2190 1024.3 L2196 1023.8 L2202 1023.3 L2208 1022.9 L2214 1022.4 L2220 1021.9 L2226 1021.5 L2232 1021.0 L2238 1020.5 L2244 1020.1 L2250 1019.6 L2256 1019.1 L2262 1018.6 L2268 1018.1 L2274 1017.6 L2280 1017.1 L2286 1016.6 L2292 1016.1 L2298 1015.5 L2304 1015.0 L2310 1014.4 L2316 1013.9 L2322 1013.4 L2328 1012.8 L2334 1012.3 L2340 1011.7 L2346 1011.2 L2352 1010.7 L2358 1010.2 L2364 1009.7 L2370 1009.2 L2376 1008.7 L2382 1008.2 L2388 1007.8 L2394 1007.3 L2400 1006.9 L2406 1006.5 L2412 1006.1 L2418 1005.8 L2424 1005.5 L2430 1005.1 L2436 1004.8 L2442 1004.5 L2448 1004.1 L2454 1003.8 L2460 1003.5 L2466 1003.3 L2472 1003.0 L2478 1002.7 L2484 1002.5 L2490 1002.2 L2496 1002.0 L2502 1001.8 L2508 1001.6 L2514 1001.4 L2520 1001.2 L2526 1001.1 L2532 1000.9 L2538 1000.7 L2544 1000.6 L2550 1000.5 L2556 1000.4 L2562 1000.4 L2568 1000.4 L2574 1000.5 L2580 1000.6 L2586 1000.6 L2592 1000.7 L2598 1000.8 L2604 1000.9 L2610 1001.0 L2616 1001.0 L2622 1001.0 L2628 1001.0 L2634 1000.9 L2640 1000.8 L2646 1000.7 L2652 1000.6 L2658 1000.5 L2664 1000.4 L2670 1000.0 L2676 999.5 L2682 998.8 L2688 998.0 L2694 997.1 L2700 996.2 L2706 995.3 L2712 994.4 L2718 993.5 L2724 992.6 L2730 991.6 L2736 990.6 L2742 989.5 L2748 988.4 L2754 987.2 L2760 986.0 L2766 984.7 L2772 983.4 L2778 982.1 L2784 980.7 L2790 979.2 L2796 977.5 L2802 975.5 L2808 973.3 L2814 970.8 L2820 967.8 L2826 963.7 L2832 958.2 L2835 953.0 L2835 947.0 L2832 951.3 L2826 956.0 L2820 959.5 L2814 962.2 L2808 964.3 L2802 966.1 L2796 967.7 L2790 969.0 L2784 970.1 L2778 971.1 L2772 972.1 L2766 973.0 L2760 973.9 L2754 974.7 L2748 975.5 L2742 976.2 L2736 976.9 L2730 977.6 L2724 978.2 L2718 978.8 L2712 979.4 L2706 979.9 L2700 980.4 L2694 981.0 L2688 981.5 L2682 982.0 L2676 982.4 L2670 982.6 L2664 982.6 L2658 982.4 L2652 982.2 L2646 982.0 L2640 981.8 L2634 981.6 L2628 981.4 L2622 981.1 L2616 980.9 L2610 980.6 L2604 980.3 L2598 980.0 L2592 979.7 L2586 979.4 L2580 979.0 L2574 978.7 L2568 978.5 L2562 978.2 L2556 978.0 L2550 977.9 L2544 977.8 L2538 977.8 L2532 977.8 L2526 977.8 L2520 977.8 L2514 977.9 L2508 977.9 L2502 977.9 L2496 977.9 L2490 978.0 L2484 978.0 L2478 978.1 L2472 978.2 L2466 978.3 L2460 978.4 L2454 978.6 L2448 978.7 L2442 978.9 L2436 979.0 L2430 979.2 L2424 979.4 L2418 979.6 L2412 979.8 L2406 980.0 L2400 980.2 L2394 980.5 L2388 980.8 L2382 981.1 L2376 981.4 L2370 981.7 L2364 982.0 L2358 982.4 L2352 982.8 L2346 983.1 L2340 983.5 L2334 983.9 L2328 984.3 L2322 984.7 L2316 985.1 L2310 985.6 L2304 986.0 L2298 986.4 L2292 986.8 L2286 987.3 L2280 987.7 L2274 988.1 L2268 988.5 L2262 988.9 L2256 989.3 L2250 989.7 L2244 990.1 L2238 990.4 L2232 990.8 L2226 991.2 L2220 991.6 L2214 992.0 L2208 992.4 L2202 992.7 L2196 993.1 L2190 993.5 L2184 993.9 L2178 994.2 L2172 994.6 L2166 995.0 L2160 995.3 L2154 995.7 L2148 996.1 L2142 996.4 L2136 996.8 L2130 997.2 L2124 997.6 L2118 997.9 L2112 998.3 L2106 998.7 L2100 999.0 L2094 999.4 L2088 999.8 L2082 1000.2 L2076 1000.5 L2070 1000.9 L2064 1001.3 L2058 1001.6 L2052 1002.0 L2046 1002.4 L2040 1002.7 L2034 1003.1 L2028 1003.5 L2022 1003.8 L2016 1004.2 L2010 1004.6 L2004 1004.9 L1998 1005.3 L1992 1005.7 L1986 1006.1 L1980 1006.4 L1974 1006.8 L1968 1007.2 L1962 1007.6 L1956 1007.9 L1950 1008.3 L1944 1008.7 L1938 1009.1 L1932 1009.4 L1926 1009.8 L1920 1010.2 L1914 1010.6 L1908 1011.0 L1902 1011.3 L1896 1011.7 L1890 1012.1 L1884 1012.5 L1878 1012.9 L1872 1013.3 L1866 1013.7 L1860 1014.1 L1854 1014.4 L1848 1014.8 L1842 1015.2 L1836 1015.6 L1830 1016.1 L1824 1016.5 L1818 1016.9 L1812 1017.3 L1806 1017.7 L1800 1018.1 L1794 1018.5 L1788 1018.9 L1782 1019.4 L1776 1019.8 L1770 1020.2 L1764 1020.6 L1758 1021.0 L1752 1021.5 L1746 1021.9 L1740 1022.3 L1734 1022.7 L1728 1023.1 L1722 1023.6 L1716 1024.0 L1710 1024.4 L1704 1024.9 L1698 1025.3 L1692 1025.7 L1686 1026.1 L1680 1026.6 L1674 1027.0 L1668 1027.4 L1662 1027.9 L1656 1028.3 L1650 1028.7 L1644 1029.2 L1638 1029.6 L1632 1030.1 L1626 1030.5 L1620 1030.9 L1614 1031.4 L1608 1031.8 L1602 1032.3 L1596 1032.7 L1590 1033.1 L1584 1033.6 L1578 1034.0 L1572 1034.5 L1566 1034.9 L1560 1035.4 L1554 1035.8 L1548 1036.3 L1542 1036.7 L1536 1037.1 L1530 1037.6 L1524 1038.0 L1518 1038.5 L1512 1038.9 L1506 1039.4 L1500 1039.8 L1494 1040.3 L1488 1040.7 L1482 1041.2 L1476 1041.6 L1470 1042.1 L1464 1042.5 L1458 1043.0 L1452 1043.5 L1446 1043.9 L1440 1044.4 L1434 1044.9 L1428 1045.3 L1422 1045.8 L1416 1046.3 L1410 1046.7 L1404 1047.2 L1398 1047.7 L1392 1048.2 L1386 1048.7 L1380 1049.1 L1374 1049.6 L1368 1050.1 L1362 1050.6 L1356 1051.0 L1350 1051.5 L1344 1052.0 L1338 1052.5 L1332 1052.9 L1326 1053.4 L1320 1053.9 L1314 1054.4 L1308 1054.8 L1302 1055.3 L1296 1055.8 L1290 1056.2 L1284 1056.7 L1278 1057.1 L1272 1057.6 L1266 1058.0 L1260 1058.5 L1254 1058.9 L1248 1059.4 L1242 1059.8 L1236 1060.2 L1230 1060.7 L1224 1061.1 L1218 1061.5 L1212 1061.9 L1206 1062.3 L1200 1062.7 L1194 1063.1 L1188 1063.5 L1182 1063.9 L1176 1064.2 L1170 1064.6 L1164 1065.0 L1158 1065.3 L1152 1065.7 L1146 1066.0 L1140 1066.4 L1134 1066.7 L1128 1067.0 L1122 1067.4 L1116 1067.7 L1110 1068.0 L1104 1068.3 L1098 1068.7 L1092 1069.0 L1086 1069.3 L1080 1069.6 L1074 1069.9 L1068 1070.2 L1062 1070.6 L1056 1070.9 L1050 1071.2 L1044 1071.5 L1038 1071.8 L1032 1072.2 L1026 1072.5 L1020 1072.8 L1014 1073.1 L1008 1073.5 L1002 1073.8 L996 1074.2 L990 1074.5 L984 1074.9 L978 1075.2 L972 1075.6 L966 1076.0 L960 1076.3 L954 1076.7 L948 1077.1 L942 1077.5 L936 1077.9 L930 1078.3 L924 1078.8 L918 1079.2 L912 1079.6 L906 1080.1 L900 1080.5 L894 1081.0 L888 1081.6 L882 1082.2 L876 1082.9 L870 1083.6 L864 1084.2 L858 1084.8 L852 1085.3 L846 1085.8 L840 1086.2 L834 1086.5 L828 1086.8 L822 1087.2 L816 1087.5 L810 1087.8 L804 1088.1 L798 1088.4 L792 1088.7 L786 1089.0 L780 1089.2 L774 1089.5 L768 1089.8 L762 1090.0 L756 1090.3 L750 1090.5 L744 1090.8 L738 1091.0 L732 1091.2 L726 1091.4 L720 1091.6 L714 1091.7 L708 1091.9 L702 1092.1 L696 1092.2 L690 1092.3 L684 1092.4 L678 1092.5 L672 1092.6 L666 1092.7 L660 1092.7 L654 1092.8 L648 1092.8 L642 1092.8 L636 1092.8 L630 1092.8 L624 1092.8 L618 1092.8 L612 1092.7 L606 1092.7 L600 1092.4 L594 1092.0 L588 1091.3 L582 1090.5 L576 1089.6 L570 1088.6 L564 1087.5 L558 1086.4 L552 1085.2 L546 1084.1 L540 1083.0 L534 1082.0 L528 1080.9 L522 1079.8 L516 1078.6 L510 1077.4 L504 1076.2 L498 1074.9 L492 1073.7 L486 1072.4 L480 1071.1 L474 1069.7 L468 1068.4 L462 1067.1 L456 1065.8 L450 1064.5 L444 1063.3 L438 1062.0 L432 1060.8 L426 1059.6 L420 1058.3 L414 1057.1 L408 1055.9 L402 1054.6 L396 1053.4 L390 1052.1 L384 1050.9 L378 1049.6 L372 1048.4 L366 1047.2 L360 1045.9 L354 1044.7 L348 1043.5 L342 1042.3 L336 1041.0 L330 1039.8 L324 1038.6 L318 1037.3 L312 1036.0 L306 1034.8 L300 1033.5 L294 1032.3 L288 1031.0 L282 1029.8 L276 1028.6 L270 1027.5 L264 1026.3 L258 1025.3 L252 1024.2 L246 1023.3 L240 1022.4 L234 1021.6 L228 1020.8 L222 1020.1 L216 1019.3 L210 1018.4 L204 1017.5 L198 1016.4 L192 1015.3 L186 1014.1 L180 1012.8 L174 1011.4 L168 1009.8 L162 1008.2 L156 1006.7 L150 1004.3 L144 996.0Z" fill="#000" opacity="0.45"/><path d="M144 1002.0 L150 1012.0 L156 1014.8 L162 1016.5 L168 1018.5 L174 1020.4 L180 1022.1 L186 1023.6 L192 1025.1 L198 1026.5 L204 1027.8 L210 1029.0 L216 1030.1 L222 1031.1 L228 1032.1 L234 1033.1 L240 1034.1 L246 1035.3 L252 1036.5 L258 1037.8 L264 1039.1 L270 1040.5 L276 1041.9 L282 1043.4 L288 1044.9 L294 1046.4 L300 1047.9 L306 1049.5 L312 1051.0 L318 1052.5 L324 1054.1 L330 1055.6 L336 1057.1 L342 1058.6 L348 1060.1 L354 1061.6 L360 1063.1 L366 1064.6 L372 1066.1 L378 1067.7 L384 1069.2 L390 1070.7 L396 1072.2 L402 1073.8 L408 1075.3 L414 1076.8 L420 1078.3 L426 1079.9 L432 1081.4 L438 1082.9 L444 1084.4 L450 1085.9 L456 1087.5 L462 1089.1 L468 1090.6 L474 1092.2 L480 1093.8 L486 1095.4 L492 1096.9 L498 1098.5 L504 1100.0 L510 1101.5 L516 1102.9 L522 1104.3 L528 1105.7 L534 1107.0 L540 1108.2 L546 1109.5 L552 1110.9 L558 1112.3 L564 1113.6 L570 1114.9 L576 1116.2 L582 1117.3 L588 1118.3 L594 1119.1 L600 1119.8 L606 1120.1 L612 1120.3 L618 1120.5 L624 1120.7 L630 1120.8 L636 1120.9 L642 1121.1 L648 1121.2 L654 1121.3 L660 1121.3 L666 1121.4 L672 1121.5 L678 1121.5 L684 1121.5 L690 1121.5 L696 1121.5 L702 1121.5 L708 1121.4 L714 1121.3 L720 1121.3 L726 1121.2 L732 1121.1 L738 1121.0 L744 1120.9 L750 1120.7 L756 1120.6 L762 1120.4 L768 1120.3 L774 1120.1 L780 1119.9 L786 1119.7 L792 1119.5 L798 1119.3 L804 1119.1 L810 1118.9 L816 1118.7 L822 1118.4 L828 1118.2 L834 1118.0 L840 1117.7 L846 1117.4 L852 1117.0 L858 1116.5 L864 1116.0 L870 1115.4 L876 1114.8 L882 1114.2 L888 1113.6 L894 1113.1 L900 1112.6 L906 1112.2 L912 1111.9 L918 1111.5 L924 1111.1 L930 1110.7 L936 1110.4 L942 1110.1 L948 1109.7 L954 1109.4 L960 1109.1 L966 1108.8 L972 1108.5 L978 1108.2 L984 1107.9 L990 1107.6 L996 1107.3 L1002 1107.0 L1008 1106.7 L1014 1106.5 L1020 1106.2 L1026 1105.9 L1032 1105.7 L1038 1105.4 L1044 1105.1 L1050 1104.9 L1056 1104.6 L1062 1104.3 L1068 1104.1 L1074 1103.8 L1080 1103.6 L1086 1103.3 L1092 1103.0 L1098 1102.8 L1104 1102.5 L1110 1102.2 L1116 1102.0 L1122 1101.7 L1128 1101.4 L1134 1101.1 L1140 1100.8 L1146 1100.5 L1152 1100.2 L1158 1099.9 L1164 1099.6 L1170 1099.3 L1176 1099.0 L1182 1098.6 L1188 1098.3 L1194 1097.9 L1200 1097.6 L1206 1097.2 L1212 1096.8 L1218 1096.5 L1224 1096.1 L1230 1095.7 L1236 1095.3 L1242 1094.9 L1248 1094.5 L1254 1094.1 L1260 1093.6 L1266 1093.2 L1272 1092.8 L1278 1092.3 L1284 1091.9 L1290 1091.5 L1296 1091.0 L1302 1090.6 L1308 1090.1 L1314 1089.7 L1320 1089.2 L1326 1088.7 L1332 1088.3 L1338 1087.8 L1344 1087.3 L1350 1086.9 L1356 1086.4 L1362 1085.9 L1368 1085.4 L1374 1085.0 L1380 1084.5 L1386 1084.0 L1392 1083.5 L1398 1083.0 L1404 1082.6 L1410 1082.1 L1416 1081.6 L1422 1081.1 L1428 1080.6 L1434 1080.2 L1440 1079.7 L1446 1079.2 L1452 1078.7 L1458 1078.3 L1464 1077.8 L1470 1077.3 L1476 1076.9 L1482 1076.4 L1488 1076.0 L1494 1075.5 L1500 1075.1 L1506 1074.6 L1512 1074.2 L1518 1073.7 L1524 1073.3 L1530 1072.8 L1536 1072.3 L1542 1071.9 L1548 1071.4 L1554 1071.0 L1560 1070.5 L1566 1070.1 L1572 1069.6 L1578 1069.2 L1584 1068.7 L1590 1068.3 L1596 1067.8 L1602 1067.3 L1608 1066.9 L1614 1066.4 L1620 1066.0 L1626 1065.5 L1632 1065.1 L1638 1064.6 L1644 1064.2 L1650 1063.7 L1656 1063.2 L1662 1062.8 L1668 1062.3 L1674 1061.9 L1680 1061.4 L1686 1061.0 L1692 1060.5 L1698 1060.1 L1704 1059.6 L1710 1059.2 L1716 1058.7 L1722 1058.3 L1728 1057.8 L1734 1057.4 L1740 1056.9 L1746 1056.5 L1752 1056.0 L1758 1055.6 L1764 1055.1 L1770 1054.7 L1776 1054.3 L1782 1053.8 L1788 1053.4 L1794 1052.9 L1800 1052.5 L1806 1052.0 L1812 1051.6 L1818 1051.2 L1824 1050.7 L1830 1050.3 L1836 1049.9 L1842 1049.4 L1848 1049.0 L1854 1048.6 L1860 1048.2 L1866 1047.7 L1872 1047.3 L1878 1046.9 L1884 1046.5 L1890 1046.0 L1896 1045.6 L1902 1045.2 L1908 1044.8 L1914 1044.3 L1920 1043.9 L1926 1043.5 L1932 1043.1 L1938 1042.6 L1944 1042.2 L1950 1041.8 L1956 1041.4 L1962 1041.0 L1968 1040.5 L1974 1040.1 L1980 1039.7 L1986 1039.3 L1992 1038.8 L1998 1038.4 L2004 1038.0 L2010 1037.6 L2016 1037.1 L2022 1036.7 L2028 1036.3 L2034 1035.8 L2040 1035.4 L2046 1035.0 L2052 1034.5 L2058 1034.1 L2064 1033.7 L2070 1033.2 L2076 1032.8 L2082 1032.4 L2088 1031.9 L2094 1031.5 L2100 1031.0 L2106 1030.6 L2112 1030.1 L2118 1029.7 L2124 1029.3 L2130 1028.8 L2136 1028.4 L2142 1027.9 L2148 1027.5 L2154 1027.0 L2160 1026.5 L2166 1026.1 L2172 1025.6 L2178 1025.2 L2184 1024.7 L2190 1024.3 L2196 1023.8 L2202 1023.3 L2208 1022.9 L2214 1022.4 L2220 1021.9 L2226 1021.5 L2232 1021.0 L2238 1020.5 L2244 1020.1 L2250 1019.6 L2256 1019.1 L2262 1018.6 L2268 1018.1 L2274 1017.6 L2280 1017.1 L2286 1016.6 L2292 1016.1 L2298 1015.5 L2304 1015.0 L2310 1014.4 L2316 1013.9 L2322 1013.4 L2328 1012.8 L2334 1012.3 L2340 1011.7 L2346 1011.2 L2352 1010.7 L2358 1010.2 L2364 1009.7 L2370 1009.2 L2376 1008.7 L2382 1008.2 L2388 1007.8 L2394 1007.3 L2400 1006.9 L2406 1006.5 L2412 1006.1 L2418 1005.8 L2424 1005.5 L2430 1005.1 L2436 1004.8 L2442 1004.5 L2448 1004.1 L2454 1003.8 L2460 1003.5 L2466 1003.3 L2472 1003.0 L2478 1002.7 L2484 1002.5 L2490 1002.2 L2496 1002.0 L2502 1001.8 L2508 1001.6 L2514 1001.4 L2520 1001.2 L2526 1001.1 L2532 1000.9 L2538 1000.7 L2544 1000.6 L2550 1000.5 L2556 1000.4 L2562 1000.4 L2568 1000.4 L2574 1000.5 L2580 1000.6 L2586 1000.6 L2592 1000.7 L2598 1000.8 L2604 1000.9 L2610 1001.0 L2616 1001.0 L2622 1001.0 L2628 1001.0 L2634 1000.9 L2640 1000.8 L2646 1000.7 L2652 1000.6 L2658 1000.5 L2664 1000.4 L2670 1000.0 L2676 999.5 L2682 998.8 L2688 998.0 L2694 997.1 L2700 996.2 L2706 995.3 L2712 994.4 L2718 993.5 L2724 992.6 L2730 991.6 L2736 990.6 L2742 989.5 L2748 988.4 L2754 987.2 L2760 986.0 L2766 984.7 L2772 983.4 L2778 982.1 L2784 980.7 L2790 979.2 L2796 977.5 L2802 975.5 L2808 973.3 L2814 970.8 L2820 967.8 L2826 963.7 L2832 958.2 L2835 953.0 L2835 947.0 L2832 948.8 L2826 951.4 L2820 953.5 L2814 955.0 L2808 956.1 L2802 956.8 L2796 957.2 L2790 957.4 L2784 957.5 L2778 957.5 L2772 957.4 L2766 957.3 L2760 957.1 L2754 956.9 L2748 956.6 L2742 956.3 L2736 956.0 L2730 955.6 L2724 955.2 L2718 954.8 L2712 954.4 L2706 954.0 L2700 953.6 L2694 953.3 L2688 952.9 L2682 952.4 L2676 951.8 L2670 951.1 L2664 950.2 L2658 949.1 L2652 948.0 L2646 946.9 L2640 945.9 L2634 944.9 L2628 943.9 L2622 943.0 L2616 942.1 L2610 941.2 L2604 940.2 L2598 939.3 L2592 938.3 L2586 937.3 L2580 936.4 L2574 935.4 L2568 934.5 L2562 933.7 L2556 933.0 L2550 932.4 L2544 931.8 L2538 931.3 L2532 930.8 L2526 930.4 L2520 930.0 L2514 929.5 L2508 929.1 L2502 928.6 L2496 928.2 L2490 927.8 L2484 927.4 L2478 927.0 L2472 926.6 L2466 926.3 L2460 925.9 L2454 925.6 L2448 925.3 L2442 925.0 L2436 924.7 L2430 924.4 L2424 924.2 L2418 923.9 L2412 923.7 L2406 923.5 L2400 923.3 L2394 923.2 L2388 923.0 L2382 922.9 L2376 922.8 L2370 922.7 L2364 922.6 L2358 922.5 L2352 922.5 L2346 922.5 L2340 922.5 L2334 922.5 L2328 922.5 L2322 922.5 L2316 922.6 L2310 922.7 L2304 922.8 L2298 922.9 L2292 923.0 L2286 923.1 L2280 923.2 L2274 923.4 L2268 923.5 L2262 923.6 L2256 923.8 L2250 923.9 L2244 924.1 L2238 924.2 L2232 924.3 L2226 924.5 L2220 924.6 L2214 924.8 L2208 924.9 L2202 925.1 L2196 925.2 L2190 925.3 L2184 925.5 L2178 925.6 L2172 925.8 L2166 925.9 L2160 926.0 L2154 926.2 L2148 926.3 L2142 926.4 L2136 926.6 L2130 926.7 L2124 926.9 L2118 927.1 L2112 927.2 L2106 927.4 L2100 927.6 L2094 927.7 L2088 927.9 L2082 928.1 L2076 928.3 L2070 928.5 L2064 928.7 L2058 928.8 L2052 929.0 L2046 929.2 L2040 929.4 L2034 929.6 L2028 929.8 L2022 930.0 L2016 930.2 L2010 930.4 L2004 930.6 L1998 930.8 L1992 931.0 L1986 931.3 L1980 931.5 L1974 931.7 L1968 932.0 L1962 932.2 L1956 932.5 L1950 932.7 L1944 933.0 L1938 933.2 L1932 933.5 L1926 933.7 L1920 934.0 L1914 934.2 L1908 934.5 L1902 934.8 L1896 935.0 L1890 935.3 L1884 935.6 L1878 935.9 L1872 936.2 L1866 936.5 L1860 936.8 L1854 937.1 L1848 937.4 L1842 937.7 L1836 938.0 L1830 938.3 L1824 938.7 L1818 939.0 L1812 939.4 L1806 939.7 L1800 940.1 L1794 940.4 L1788 940.8 L1782 941.1 L1776 941.5 L1770 941.8 L1764 942.2 L1758 942.5 L1752 942.9 L1746 943.2 L1740 943.6 L1734 943.9 L1728 944.3 L1722 944.6 L1716 945.0 L1710 945.4 L1704 945.7 L1698 946.1 L1692 946.5 L1686 946.9 L1680 947.2 L1674 947.6 L1668 948.0 L1662 948.4 L1656 948.7 L1650 949.1 L1644 949.5 L1638 949.9 L1632 950.3 L1626 950.7 L1620 951.1 L1614 951.5 L1608 951.9 L1602 952.3 L1596 952.7 L1590 953.1 L1584 953.5 L1578 953.9 L1572 954.3 L1566 954.7 L1560 955.2 L1554 955.6 L1548 956.0 L1542 956.4 L1536 956.8 L1530 957.3 L1524 957.7 L1518 958.1 L1512 958.5 L1506 959.0 L1500 959.4 L1494 959.8 L1488 960.3 L1482 960.7 L1476 961.1 L1470 961.6 L1464 962.0 L1458 962.4 L1452 962.9 L1446 963.3 L1440 963.8 L1434 964.2 L1428 964.7 L1422 965.2 L1416 965.6 L1410 966.1 L1404 966.6 L1398 967.0 L1392 967.5 L1386 968.0 L1380 968.5 L1374 968.9 L1368 969.4 L1362 969.9 L1356 970.4 L1350 970.9 L1344 971.3 L1338 971.8 L1332 972.3 L1326 972.8 L1320 973.3 L1314 973.8 L1308 974.3 L1302 974.8 L1296 975.3 L1290 975.8 L1284 976.3 L1278 976.8 L1272 977.4 L1266 977.9 L1260 978.4 L1254 978.9 L1248 979.4 L1242 979.9 L1236 980.4 L1230 980.9 L1224 981.4 L1218 981.9 L1212 982.4 L1206 982.8 L1200 983.3 L1194 983.8 L1188 984.3 L1182 984.8 L1176 985.2 L1170 985.7 L1164 986.2 L1158 986.7 L1152 987.1 L1146 987.6 L1140 988.1 L1134 988.5 L1128 989.0 L1122 989.5 L1116 989.9 L1110 990.4 L1104 990.8 L1098 991.3 L1092 991.8 L1086 992.2 L1080 992.7 L1074 993.2 L1068 993.7 L1062 994.1 L1056 994.6 L1050 995.1 L1044 995.6 L1038 996.0 L1032 996.5 L1026 997.0 L1020 997.5 L1014 998.0 L1008 998.5 L1002 999.0 L996 999.6 L990 1000.1 L984 1000.6 L978 1001.2 L972 1001.7 L966 1002.2 L960 1002.8 L954 1003.4 L948 1003.9 L942 1004.5 L936 1005.1 L930 1005.7 L924 1006.3 L918 1006.9 L912 1007.5 L906 1008.1 L900 1008.8 L894 1009.4 L888 1010.2 L882 1010.9 L876 1011.7 L870 1012.5 L864 1013.3 L858 1014.0 L852 1014.7 L846 1015.4 L840 1016.0 L834 1016.5 L828 1017.1 L822 1017.6 L816 1018.2 L810 1018.7 L804 1019.3 L798 1019.8 L792 1020.3 L786 1020.9 L780 1021.4 L774 1021.9 L768 1022.4 L762 1022.9 L756 1023.4 L750 1023.9 L744 1024.4 L738 1024.9 L732 1025.4 L726 1025.9 L720 1026.4 L714 1026.8 L708 1027.3 L702 1027.7 L696 1028.2 L690 1028.6 L684 1029.0 L678 1029.4 L672 1029.8 L666 1030.2 L660 1030.6 L654 1031.0 L648 1031.3 L642 1031.7 L636 1032.0 L630 1032.3 L624 1032.7 L618 1033.0 L612 1033.3 L606 1033.6 L600 1033.8 L594 1033.8 L588 1033.6 L582 1033.4 L576 1033.0 L570 1032.6 L564 1032.2 L558 1031.7 L552 1031.2 L546 1030.7 L540 1030.2 L534 1029.8 L528 1029.4 L522 1028.9 L516 1028.4 L510 1027.9 L504 1027.3 L498 1026.8 L492 1026.2 L486 1025.6 L480 1025.0 L474 1024.4 L468 1023.9 L462 1023.3 L456 1022.7 L450 1022.2 L444 1021.7 L438 1021.2 L432 1020.8 L426 1020.3 L420 1019.8 L414 1019.4 L408 1018.9 L402 1018.5 L396 1018.0 L390 1017.5 L384 1017.1 L378 1016.6 L372 1016.1 L366 1015.6 L360 1015.2 L354 1014.7 L348 1014.2 L342 1013.8 L336 1013.3 L330 1012.8 L324 1012.3 L318 1011.8 L312 1011.3 L306 1010.8 L300 1010.3 L294 1009.9 L288 1009.4 L282 1008.9 L276 1008.5 L270 1008.1 L264 1007.7 L258 1007.3 L252 1007.0 L246 1006.7 L240 1006.5 L234 1006.4 L228 1006.3 L222 1006.2 L216 1006.0 L210 1005.9 L204 1005.6 L198 1005.3 L192 1004.9 L186 1004.4 L180 1003.9 L174 1003.3 L168 1002.6 L162 1001.7 L156 1000.9 L150 999.8 L144 996.0Z" fill="#000" opacity="0.22"/><path d="M144 990.0 L150 979.3 L156 976.7 L162 975.0 L168 973.4 L174 971.4 L180 969.5 L186 967.6 L192 965.6 L198 963.7 L204 961.7 L210 959.8 L216 957.9 L222 955.9 L228 954.0 L234 952.0 L240 950.1 L246 948.2 L252 946.2 L258 944.3 L264 942.3 L270 940.4 L276 938.5 L282 936.5 L288 934.6 L294 932.6 L300 930.7 L306 928.7 L312 926.8 L318 924.9 L324 922.9 L330 921.0 L336 919.0 L342 917.1 L348 915.1 L354 913.2 L360 911.3 L366 909.3 L372 907.4 L378 905.4 L384 903.4 L390 901.4 L396 899.4 L402 897.4 L408 895.4 L414 893.4 L420 891.3 L426 889.3 L432 887.4 L438 885.4 L444 883.5 L450 881.6 L456 879.7 L462 877.8 L468 876.0 L474 874.3 L480 872.6 L486 870.9 L492 869.2 L498 867.5 L504 865.9 L510 864.2 L516 862.6 L522 861.0 L528 859.4 L534 857.8 L540 856.2 L546 854.7 L552 853.1 L558 851.6 L564 850.1 L570 848.6 L576 847.0 L582 845.6 L588 844.1 L594 842.6 L600 841.1 L606 839.7 L612 838.2 L618 836.8 L624 835.3 L630 833.9 L636 832.5 L642 831.1 L648 829.6 L654 828.2 L660 826.8 L666 825.4 L672 824.0 L678 822.6 L684 821.2 L690 819.8 L696 818.4 L702 817.1 L708 815.7 L714 814.3 L720 812.9 L726 811.5 L732 810.2 L738 808.8 L744 807.5 L750 806.1 L756 804.8 L762 803.4 L768 802.1 L774 800.8 L780 799.5 L786 798.1 L792 796.8 L798 795.5 L804 794.2 L810 792.9 L816 791.7 L822 790.4 L828 789.1 L834 787.9 L840 786.6 L846 785.3 L852 784.1 L858 782.9 L864 781.6 L870 780.4 L876 779.2 L882 778.0 L888 776.8 L894 775.6 L900 774.4 L906 773.2 L912 772.0 L918 770.9 L924 769.7 L930 768.5 L936 767.4 L942 766.2 L948 765.1 L954 763.9 L960 762.8 L966 761.7 L972 760.6 L978 759.5 L984 758.4 L990 757.3 L996 756.2 L1002 755.1 L1008 754.1 L1014 753.0 L1020 752.0 L1026 750.9 L1032 749.9 L1038 748.9 L1044 747.9 L1050 746.9 L1056 745.9 L1062 745.0 L1068 744.0 L1074 743.0 L1080 742.1 L1086 741.1 L1092 740.2 L1098 739.2 L1104 738.3 L1110 737.4 L1116 736.5 L1122 735.6 L1128 734.7 L1134 733.8 L1140 732.9 L1146 732.1 L1152 731.2 L1158 730.4 L1164 729.5 L1170 728.7 L1176 727.9 L1182 727.1 L1188 726.3 L1194 725.5 L1200 724.7 L1206 724.0 L1212 723.2 L1218 722.5 L1224 721.7 L1230 721.0 L1236 720.3 L1242 719.5 L1248 718.8 L1254 718.1 L1260 717.4 L1266 716.7 L1272 716.0 L1278 715.4 L1284 714.7 L1290 714.0 L1296 713.4 L1302 712.8 L1308 712.2 L1314 711.5 L1320 711.0 L1326 710.4 L1332 709.8 L1338 709.3 L1344 708.7 L1350 708.2 L1356 707.7 L1362 707.2 L1368 706.7 L1374 706.2 L1380 705.7 L1386 705.3 L1392 704.8 L1398 704.3 L1404 703.9 L1410 703.5 L1416 703.0 L1422 702.6 L1428 702.2 L1434 701.8 L1440 701.4 L1446 701.0 L1452 700.6 L1458 700.2 L1464 699.8 L1470 699.4 L1476 699.0 L1482 698.6 L1488 698.3 L1494 697.9 L1500 697.5 L1506 697.2 L1512 696.8 L1518 696.4 L1524 696.1 L1530 695.7 L1536 695.3 L1542 695.0 L1548 694.6 L1554 694.3 L1560 693.9 L1566 693.6 L1572 693.3 L1578 692.9 L1584 692.6 L1590 692.3 L1596 692.0 L1602 691.7 L1608 691.4 L1614 691.2 L1620 690.9 L1626 690.7 L1632 690.4 L1638 690.2 L1644 690.0 L1650 689.8 L1656 689.5 L1662 689.3 L1668 689.1 L1674 688.9 L1680 688.7 L1686 688.6 L1692 688.4 L1698 688.2 L1704 688.0 L1710 687.9 L1716 687.7 L1722 687.5 L1728 687.4 L1734 687.2 L1740 687.1 L1746 686.9 L1752 686.8 L1758 686.7 L1764 686.5 L1770 686.4 L1776 686.3 L1782 686.1 L1788 686.0 L1794 685.8 L1800 685.7 L1806 685.6 L1812 685.4 L1818 685.3 L1824 685.2 L1830 685.1 L1836 685.0 L1842 684.9 L1848 684.9 L1854 684.8 L1860 684.8 L1866 684.8 L1872 684.8 L1878 684.8 L1884 684.9 L1890 685.0 L1896 685.0 L1902 685.1 L1908 685.2 L1914 685.3 L1920 685.5 L1926 685.6 L1932 685.7 L1938 685.9 L1944 686.0 L1950 686.2 L1956 686.3 L1962 686.5 L1968 686.6 L1974 686.8 L1980 687.0 L1986 687.2 L1992 687.5 L1998 687.8 L2004 688.0 L2010 688.3 L2016 688.7 L2022 689.0 L2028 689.3 L2034 689.7 L2040 690.1 L2046 690.4 L2052 690.8 L2058 691.2 L2064 691.6 L2070 692.0 L2076 692.4 L2082 692.9 L2088 693.3 L2094 693.7 L2100 694.1 L2106 694.6 L2112 695.1 L2118 695.5 L2124 696.1 L2130 696.6 L2136 697.2 L2142 697.7 L2148 698.3 L2154 698.9 L2160 699.5 L2166 700.1 L2172 700.7 L2178 701.3 L2184 701.9 L2190 702.5 L2196 703.2 L2202 703.8 L2208 704.4 L2214 705.0 L2220 705.6 L2226 706.2 L2232 706.8 L2238 707.4 L2244 708.0 L2250 708.6 L2256 709.3 L2262 710.0 L2268 710.7 L2274 711.4 L2280 712.2 L2286 713.0 L2292 713.8 L2298 714.6 L2304 715.5 L2310 716.5 L2316 717.5 L2322 718.6 L2328 719.7 L2334 720.9 L2340 722.2 L2346 723.4 L2352 724.8 L2358 726.1 L2364 727.5 L2370 728.9 L2376 730.4 L2382 731.8 L2388 733.3 L2394 734.8 L2400 736.3 L2406 737.8 L2412 739.4 L2418 740.9 L2424 742.5 L2430 744.1 L2436 745.8 L2442 747.5 L2448 749.2 L2454 751.0 L2460 752.8 L2466 754.6 L2472 756.5 L2478 758.3 L2484 760.2 L2490 762.1 L2496 764.0 L2502 765.9 L2508 767.8 L2514 769.7 L2520 771.6 L2526 773.5 L2532 775.4 L2538 777.3 L2544 779.4 L2550 781.5 L2556 783.7 L2562 786.1 L2568 788.7 L2574 791.6 L2580 794.6 L2586 797.7 L2592 800.7 L2598 803.7 L2604 806.7 L2610 809.6 L2616 812.6 L2622 815.6 L2628 818.8 L2634 822.1 L2640 825.6 L2646 829.4 L2652 833.2 L2658 837.2 L2664 841.1 L2670 845.0 L2676 848.7 L2682 852.2 L2688 855.7 L2694 859.1 L2700 862.4 L2706 865.8 L2712 869.1 L2718 872.5 L2724 876.1 L2730 879.7 L2736 883.3 L2742 887.0 L2748 890.6 L2754 894.3 L2760 897.8 L2766 901.3 L2772 904.7 L2778 908.1 L2784 911.4 L2790 914.7 L2796 917.9 L2802 921.0 L2808 923.9 L2814 926.2 L2820 928.2 L2826 930.7 L2832 934.9 L2835 941.0 L2835 947.0 L2832 942.9 L2826 940.3 L2820 938.9 L2814 937.8 L2808 936.3 L2802 934.2 L2796 932.0 L2790 929.6 L2784 927.2 L2778 924.6 L2772 922.0 L2766 919.4 L2760 916.7 L2754 914.0 L2748 911.2 L2742 908.4 L2736 905.5 L2730 902.6 L2724 899.8 L2718 897.1 L2712 894.4 L2706 891.7 L2700 889.1 L2694 886.5 L2688 883.8 L2682 881.1 L2676 878.3 L2670 875.3 L2664 872.2 L2658 868.9 L2652 865.7 L2646 862.4 L2640 859.4 L2634 856.4 L2628 853.7 L2622 851.1 L2616 848.6 L2610 846.1 L2604 843.7 L2598 841.2 L2592 838.7 L2586 836.1 L2580 833.6 L2574 831.1 L2568 828.7 L2562 826.5 L2556 824.5 L2550 822.7 L2544 820.9 L2538 819.3 L2532 817.7 L2526 816.1 L2520 814.6 L2514 813.1 L2508 811.5 L2502 810.0 L2496 808.4 L2490 806.9 L2484 805.4 L2478 803.8 L2472 802.3 L2466 800.8 L2460 799.4 L2454 797.9 L2448 796.5 L2442 795.1 L2436 793.8 L2430 792.4 L2424 791.1 L2418 789.9 L2412 788.7 L2406 787.5 L2400 786.3 L2394 785.1 L2388 783.9 L2382 782.8 L2376 781.6 L2370 780.5 L2364 779.4 L2358 778.4 L2352 777.3 L2346 776.3 L2340 775.3 L2334 774.4 L2328 773.5 L2322 772.7 L2316 771.9 L2310 771.1 L2304 770.4 L2298 769.7 L2292 769.1 L2286 768.5 L2280 768.0 L2274 767.4 L2268 766.9 L2262 766.4 L2256 765.9 L2250 765.5 L2244 765.0 L2238 764.6 L2232 764.1 L2226 763.7 L2220 763.3 L2214 762.9 L2208 762.5 L2202 762.0 L2196 761.6 L2190 761.2 L2184 760.8 L2178 760.3 L2172 759.9 L2166 759.5 L2160 759.0 L2154 758.6 L2148 758.2 L2142 757.8 L2136 757.4 L2130 757.0 L2124 756.7 L2118 756.3 L2112 756.0 L2106 755.7 L2100 755.4 L2094 755.1 L2088 754.8 L2082 754.5 L2076 754.3 L2070 754.0 L2064 753.7 L2058 753.5 L2052 753.2 L2046 753.0 L2040 752.7 L2034 752.5 L2028 752.3 L2022 752.1 L2016 751.9 L2010 751.7 L2004 751.5 L1998 751.3 L1992 751.2 L1986 751.0 L1980 750.9 L1974 750.8 L1968 750.8 L1962 750.7 L1956 750.6 L1950 750.6 L1944 750.5 L1938 750.5 L1932 750.4 L1926 750.4 L1920 750.4 L1914 750.3 L1908 750.3 L1902 750.3 L1896 750.3 L1890 750.3 L1884 750.3 L1878 750.4 L1872 750.4 L1866 750.5 L1860 750.5 L1854 750.6 L1848 750.7 L1842 750.9 L1836 751.0 L1830 751.1 L1824 751.3 L1818 751.5 L1812 751.6 L1806 751.8 L1800 752.0 L1794 752.2 L1788 752.4 L1782 752.6 L1776 752.8 L1770 753.0 L1764 753.1 L1758 753.3 L1752 753.5 L1746 753.7 L1740 753.9 L1734 754.1 L1728 754.3 L1722 754.5 L1716 754.7 L1710 754.9 L1704 755.2 L1698 755.4 L1692 755.6 L1686 755.8 L1680 756.1 L1674 756.3 L1668 756.5 L1662 756.8 L1656 757.0 L1650 757.3 L1644 757.5 L1638 757.8 L1632 758.1 L1626 758.3 L1620 758.6 L1614 758.9 L1608 759.2 L1602 759.5 L1596 759.9 L1590 760.2 L1584 760.5 L1578 760.9 L1572 761.2 L1566 761.6 L1560 761.9 L1554 762.3 L1548 762.6 L1542 763.0 L1536 763.4 L1530 763.8 L1524 764.1 L1518 764.5 L1512 764.9 L1506 765.3 L1500 765.7 L1494 766.1 L1488 766.4 L1482 766.8 L1476 767.2 L1470 767.6 L1464 768.0 L1458 768.4 L1452 768.8 L1446 769.2 L1440 769.6 L1434 770.1 L1428 770.5 L1422 770.9 L1416 771.3 L1410 771.8 L1404 772.2 L1398 772.7 L1392 773.1 L1386 773.6 L1380 774.1 L1374 774.6 L1368 775.0 L1362 775.5 L1356 776.0 L1350 776.5 L1344 777.0 L1338 777.6 L1332 778.1 L1326 778.7 L1320 779.2 L1314 779.8 L1308 780.4 L1302 781.0 L1296 781.6 L1290 782.2 L1284 782.8 L1278 783.4 L1272 784.0 L1266 784.7 L1260 785.3 L1254 786.0 L1248 786.6 L1242 787.3 L1236 788.0 L1230 788.7 L1224 789.3 L1218 790.0 L1212 790.7 L1206 791.4 L1200 792.1 L1194 792.8 L1188 793.5 L1182 794.2 L1176 794.9 L1170 795.7 L1164 796.4 L1158 797.1 L1152 797.9 L1146 798.7 L1140 799.4 L1134 800.2 L1128 801.0 L1122 801.8 L1116 802.6 L1110 803.4 L1104 804.2 L1098 805.0 L1092 805.8 L1086 806.7 L1080 807.5 L1074 808.3 L1068 809.2 L1062 810.0 L1056 810.9 L1050 811.7 L1044 812.6 L1038 813.5 L1032 814.4 L1026 815.2 L1020 816.1 L1014 817.1 L1008 818.0 L1002 818.9 L996 819.8 L990 820.8 L984 821.7 L978 822.7 L972 823.7 L966 824.7 L960 825.6 L954 826.6 L948 827.6 L942 828.6 L936 829.7 L930 830.7 L924 831.7 L918 832.7 L912 833.8 L906 834.8 L900 835.9 L894 836.9 L888 838.0 L882 839.1 L876 840.2 L870 841.3 L864 842.4 L858 843.5 L852 844.7 L846 845.8 L840 846.8 L834 847.9 L828 849.0 L822 850.1 L816 851.2 L810 852.3 L804 853.4 L798 854.5 L792 855.7 L786 856.8 L780 857.9 L774 859.0 L768 860.2 L762 861.3 L756 862.4 L750 863.6 L744 864.7 L738 865.8 L732 867.0 L726 868.1 L720 869.3 L714 870.4 L708 871.6 L702 872.8 L696 873.9 L690 875.1 L684 876.2 L678 877.4 L672 878.5 L666 879.7 L660 880.8 L654 882.0 L648 883.2 L642 884.3 L636 885.5 L630 886.6 L624 887.8 L618 889.0 L612 890.1 L606 891.3 L600 892.5 L594 893.6 L588 894.7 L582 895.7 L576 896.8 L570 897.8 L564 898.8 L558 899.9 L552 900.9 L546 902.0 L540 903.0 L534 904.1 L528 905.2 L522 906.3 L516 907.4 L510 908.5 L504 909.6 L498 910.7 L492 911.9 L486 913.0 L480 914.1 L474 915.3 L468 916.5 L462 917.7 L456 919.0 L450 920.3 L444 921.6 L438 922.9 L432 924.3 L426 925.7 L420 927.1 L414 928.5 L408 929.9 L402 931.3 L396 932.7 L390 934.2 L384 935.6 L378 936.9 L372 938.3 L366 939.7 L360 941.0 L354 942.4 L348 943.7 L342 945.1 L336 946.5 L330 947.8 L324 949.2 L318 950.5 L312 951.9 L306 953.2 L300 954.6 L294 955.9 L288 957.3 L282 958.6 L276 960.0 L270 961.4 L264 962.7 L258 964.1 L252 965.5 L246 966.9 L240 968.3 L234 969.8 L228 971.2 L222 972.7 L216 974.1 L210 975.5 L204 976.9 L198 978.3 L192 979.7 L186 981.0 L180 982.4 L174 983.7 L168 985.0 L162 986.0 L156 987.1 L150 988.8 L144 996.0Z" fill="#000" opacity="0.2"/></g><g filter="url(#bl)"><path d="M1250 1040 L1600 1012 L1950 980 L2150 950 L2300 925 L2300 1000 L1900 1012 L1500 1040 Z" fill="#e23a6a" opacity="0.45"/><path d="M2000 985 L2150 948 L2257 916 L2398 900 L2430 910 L2508 947 L2587 987 L2400 992 L2150 995 Z" fill="#d83ec8" opacity="0.95"/><path d="M1850 1000 L2000 975 L2150 950 L2150 995 L1950 1005 Z" fill="#d83ea8" opacity="0.55"/><path d="M2555 921 L2600 930 L2650 962 L2620 966 L2570 945 Z" fill="#d040c0" opacity="0.85"/></g><g filter="url(#bl2)"><path d="M2300 950 L2398 908 L2430 914 L2508 950 L2575 986 L2450 988 L2350 975 Z" fill="#8848dc" opacity="0.8"/><path d="M2383 926 L2420 918 L2508 955 L2560 982 L2480 980 Z" fill="#2a78e0"/><path d="M2445 938 L2470 936 L2515 958 L2490 960 Z" fill="#20c088"/></g><path d="M212.0 1013.0 L269.0 1003.0 L348.0 987.0 L414.5 972.5 L460.0 956.0 L619.0 933.6 L738.0 910.0 L780.0 900.6 L980.0 873.8 L1145.0 857.3 L1261.0 846.5 L1301.0 845.0 L1327.0 844.0 L1348.0 862.0 L1348.0 862.0 L1316.0 880.0 L1261.0 880.0 L1145.0 890.3 L980.0 906.0 L780.0 923.0 L742.0 934.0 L715.0 950.0 L705.0 952.0 L619.0 964.0 L460.0 989.0 L421.0 990.0 L408.0 995.0 L348.0 1005.5 L282.0 1014.8 L216.0 1018.8Z" fill="#e840d8"/><path d="M215.8 1015.5 L269.0 1005.5 L348.0 989.5 L414.5 975.0 L460.0 958.5 L619.0 936.1 L738.0 912.5 L780.0 903.1 L980.0 876.3 L1145.0 859.8 L1261.0 849.0 L1301.0 847.5 L1327.0 846.5 L1344.8 862.0 L1344.8 862.0 L1316.0 877.5 L1261.0 877.5 L1145.0 887.8 L980.0 903.5 L780.0 920.5 L742.0 931.5 L715.0 947.5 L705.0 949.5 L619.0 961.5 L460.0 986.5 L421.0 987.5 L408.0 992.5 L348.0 1003.0 L282.0 1012.3 L219.8 1016.3Z" fill="#6850f0"/><path d="M219.5 1015.9 L269.0 1008.0 L348.0 992.0 L414.5 977.5 L460.0 961.0 L619.0 938.6 L738.0 915.0 L780.0 905.6 L980.0 878.8 L1145.0 862.3 L1261.0 851.5 L1301.0 850.0 L1327.0 849.0 L1341.5 862.0 L1341.5 862.0 L1316.0 875.0 L1261.0 875.0 L1145.0 885.3 L980.0 901.0 L780.0 918.0 L742.0 929.0 L715.0 945.0 L705.0 947.0 L619.0 959.0 L460.0 984.0 L421.0 985.0 L408.0 990.0 L348.0 1000.5 L282.0 1009.8 L223.5 1015.5Z" fill="#20b8f0"/><path d="M223.2 1015.9 L269.0 1009.3 L348.0 994.5 L414.5 980.0 L460.0 963.5 L619.0 941.1 L738.0 917.5 L780.0 908.1 L980.0 881.3 L1145.0 864.8 L1261.0 854.0 L1301.0 852.5 L1327.0 851.5 L1338.2 862.0 L1338.2 862.0 L1316.0 872.5 L1261.0 872.5 L1145.0 882.8 L980.0 898.5 L780.0 915.5 L742.0 926.5 L715.0 942.5 L705.0 944.5 L619.0 956.5 L460.0 981.5 L421.0 982.5 L408.0 987.5 L348.0 998.0 L282.0 1007.6 L227.2 1015.5Z" fill="#40e080"/><path d="M227.0 1015.9 L269.0 1009.3 L348.0 996.2 L414.5 982.5 L460.0 966.0 L619.0 943.6 L738.0 920.0 L780.0 910.6 L980.0 883.8 L1145.0 867.3 L1261.0 856.5 L1301.0 855.0 L1327.0 854.0 L1335.0 862.0 L1335.0 862.0 L1316.0 870.0 L1261.0 870.0 L1145.0 880.3 L980.0 896.0 L780.0 913.0 L742.0 924.0 L715.0 940.0 L705.0 942.0 L619.0 954.0 L460.0 979.0 L421.0 980.1 L408.0 985.0 L348.0 996.2 L282.0 1007.6 L231.0 1015.5Z" fill="#c0f020"/><path d="M230.8 1015.9 L269.0 1009.3 L348.0 996.2 L414.5 982.5 L460.0 968.5 L619.0 946.1 L738.0 922.5 L780.0 911.8 L980.0 886.3 L1145.0 869.8 L1261.0 859.0 L1301.0 857.5 L1327.0 856.5 L1331.8 862.0 L1331.8 862.0 L1316.0 867.5 L1261.0 867.5 L1145.0 877.8 L980.0 893.5 L780.0 911.8 L742.0 921.6 L715.0 937.5 L705.0 939.5 L619.0 951.5 L460.0 976.5 L421.0 980.1 L408.0 984.5 L348.0 996.2 L282.0 1007.6 L234.8 1015.5Z" fill="#e8f820"/><g filter="url(#bl2)" opacity="0.85"><path d="M174 1004 Q195 990 229 989 Q222 1002 200 1010 Q185 1012 174 1008 Z" fill="#5070d0"/><path d="M176 1004 Q194 993 220 991 Q212 1001 196 1007 Q184 1009 176 1007 Z" fill="#a0c030"/></g><g mask="url(#mm)"><path d="M144 996 L165 980 L187 973 L209 966 L230 959 L252 952 L274 945 L295 938 L317 931 L339 924 L361 917 L382 910 L404 903 L426 896 L447 889 L469 882 L491 876 L512 870 L534 864 L556 858 L578 853 L599 848 L621 842 L643 837 L664 832 L686 827 L708 822 L730 817 L751 812 L773 807 L795 803 L816 798 L838 793 L860 789 L881 784 L903 780 L925 776 L947 772 L968 768 L990 764 L1012 760 L1033 756 L1055 753 L1077 749 L1099 746 L1120 742 L1142 739 L1164 736 L1185 733 L1207 730 L1229 728 L1250 725 L1272 723 L1294 720 L1316 718 L1337 716 L1359 714 L1381 712 L1402 711 L1424 709 L1446 708 L1468 706 L1489 705 L1511 703 L1533 702 L1554 701 L1576 700 L1598 698 L1619 697 L1641 697 L1663 696 L1685 695 L1706 694 L1728 694 L1750 693 L1771 693 L1793 692 L1815 692 L1837 692 L1858 691 L1880 691 L1902 692 L1923 692 L1945 693 L1967 693 L1988 694 L2010 695 L2032 696 L2054 697 L2075 699 L2097 700 L2119 702 L2140 704 L2162 706 L2184 708 L2206 711 L2227 713 L2249 715 L2271 718 L2292 720 L2314 724 L2336 728 L2357 733 L2379 738 L2401 743 L2423 749 L2444 755 L2466 761 L2488 768 L2509 775 L2531 782 L2553 789 L2575 798 L2596 809 L2618 820 L2640 832 L2661 846 L2683 859 L2705 872 L2726 884 L2748 897 L2770 910 L2792 922 L2813 932 L2835 947 M144 996 L165 980 L187 973 L209 966 L230 959 L252 953 L274 946 L295 939 L317 932 L339 925 L361 918 L382 911 L404 904 L426 896 L447 889 L469 883 L491 877 L512 871 L534 865 L556 860 L578 854 L599 849 L621 844 L643 838 L664 833 L686 828 L708 823 L730 818 L751 814 L773 809 L795 804 L816 799 L838 795 L860 790 L881 786 L903 782 L925 777 L947 773 L968 769 L990 765 L1012 761 L1033 758 L1055 754 L1077 751 L1099 747 L1120 744 L1142 741 L1164 738 L1185 735 L1207 732 L1229 729 L1250 727 L1272 724 L1294 722 L1316 720 L1337 718 L1359 716 L1381 714 L1402 712 L1424 711 L1446 709 L1468 708 L1489 706 L1511 705 L1533 704 L1554 702 L1576 701 L1598 700 L1619 699 L1641 698 L1663 698 L1685 697 L1706 696 L1728 696 L1750 695 L1771 695 L1793 694 L1815 694 L1837 693 L1858 693 L1880 693 L1902 693 L1923 694 L1945 694 L1967 695 L1988 695 L2010 696 L2032 698 L2054 699 L2075 700 L2097 702 L2119 704 L2140 706 L2162 708 L2184 710 L2206 712 L2227 714 L2249 716 L2271 719 L2292 722 L2314 725 L2336 729 L2357 734 L2379 739 L2401 744 L2423 750 L2444 756 L2466 762 L2488 769 L2509 776 L2531 783 L2553 790 L2575 799 L2596 810 L2618 821 L2640 833 L2661 847 L2683 860 L2705 872 L2726 884 L2748 898 L2770 910 L2792 922 L2813 932 L2835 947 M144 996 L165 980 L187 974 L209 967 L230 960 L252 953 L274 946 L295 939 L317 933 L339 926 L361 919 L382 912 L404 905 L426 898 L447 891 L469 884 L491 878 L512 873 L534 867 L556 861 L578 856 L599 851 L621 846 L643 841 L664 836 L686 831 L708 826 L730 821 L751 816 L773 811 L795 806 L816 802 L838 797 L860 793 L881 788 L903 784 L925 780 L947 776 L968 772 L990 768 L1012 764 L1033 760 L1055 757 L1077 753 L1099 750 L1120 747 L1142 743 L1164 740 L1185 738 L1207 735 L1229 732 L1250 729 L1272 727 L1294 725 L1316 722 L1337 720 L1359 718 L1381 717 L1402 715 L1424 713 L1446 712 L1468 711 L1489 709 L1511 708 L1533 707 L1554 705 L1576 704 L1598 703 L1619 702 L1641 701 L1663 700 L1685 700 L1706 699 L1728 698 L1750 698 L1771 697 L1793 697 L1815 696 L1837 696 L1858 696 L1880 696 L1902 696 L1923 696 L1945 697 L1967 697 L1988 698 L2010 699 L2032 700 L2054 702 L2075 703 L2097 704 L2119 706 L2140 708 L2162 710 L2184 712 L2206 714 L2227 717 L2249 719 L2271 721 L2292 724 L2314 727 L2336 731 L2357 736 L2379 741 L2401 746 L2423 752 L2444 758 L2466 764 L2488 771 L2509 778 L2531 784 L2553 792 L2575 801 L2596 812 L2618 822 L2640 834 L2661 848 L2683 861 L2705 873 L2726 885 L2748 898 L2770 911 L2792 923 L2813 933 L2835 947 M144 996 L165 981 L187 974 L209 967 L230 961 L252 954 L274 947 L295 941 L317 934 L339 927 L361 920 L382 914 L404 907 L426 900 L447 893 L469 887 L491 881 L512 875 L534 869 L556 864 L578 859 L599 854 L621 849 L643 844 L664 839 L686 834 L708 829 L730 824 L751 819 L773 814 L795 810 L816 805 L838 801 L860 796 L881 792 L903 788 L925 783 L947 779 L968 775 L990 771 L1012 768 L1033 764 L1055 760 L1077 757 L1099 754 L1120 750 L1142 747 L1164 744 L1185 741 L1207 739 L1229 736 L1250 733 L1272 731 L1294 729 L1316 726 L1337 724 L1359 722 L1381 721 L1402 719 L1424 717 L1446 716 L1468 714 L1489 713 L1511 712 L1533 710 L1554 709 L1576 708 L1598 707 L1619 706 L1641 705 L1663 704 L1685 703 L1706 703 L1728 702 L1750 702 L1771 701 L1793 701 L1815 700 L1837 700 L1858 699 L1880 699 L1902 700 L1923 700 L1945 700 L1967 701 L1988 702 L2010 703 L2032 704 L2054 705 L2075 706 L2097 708 L2119 710 L2140 711 L2162 713 L2184 716 L2206 718 L2227 720 L2249 722 L2271 724 L2292 727 L2314 730 L2336 734 L2357 739 L2379 744 L2401 749 L2423 754 L2444 760 L2466 767 L2488 773 L2509 780 L2531 787 L2553 794 L2575 803 L2596 814 L2618 824 L2640 836 L2661 849 L2683 862 L2705 874 L2726 886 L2748 899 L2770 911 L2792 923 L2813 933 L2835 947 M144 996 L165 981 L187 975 L209 968 L230 962 L252 955 L274 948 L295 942 L317 935 L339 929 L361 922 L382 916 L404 909 L426 902 L447 896 L469 889 L491 884 L512 878 L534 873 L556 867 L578 862 L599 857 L621 852 L643 847 L664 842 L686 838 L708 833 L730 828 L751 823 L773 819 L795 814 L816 809 L838 805 L860 801 L881 796 L903 792 L925 788 L947 784 L968 780 L990 776 L1012 772 L1033 769 L1055 765 L1077 762 L1099 758 L1120 755 L1142 752 L1164 749 L1185 746 L1207 744 L1229 741 L1250 738 L1272 736 L1294 733 L1316 731 L1337 729 L1359 727 L1381 726 L1402 724 L1424 722 L1446 721 L1468 719 L1489 718 L1511 717 L1533 715 L1554 714 L1576 713 L1598 712 L1619 711 L1641 710 L1663 709 L1685 708 L1706 708 L1728 707 L1750 706 L1771 706 L1793 705 L1815 705 L1837 704 L1858 704 L1880 704 L1902 704 L1923 705 L1945 705 L1967 706 L1988 706 L2010 707 L2032 708 L2054 710 L2075 711 L2097 712 L2119 714 L2140 716 L2162 718 L2184 720 L2206 722 L2227 724 L2249 726 L2271 728 L2292 731 L2314 734 L2336 738 L2357 742 L2379 747 L2401 753 L2423 758 L2444 764 L2466 770 L2488 776 L2509 783 L2531 789 L2553 797 L2575 806 L2596 816 L2618 826 L2640 838 L2661 851 L2683 864 L2705 876 L2726 888 L2748 900 L2770 912 L2792 924 L2813 933 L2835 947 M144 996 L165 982 L187 976 L209 969 L230 963 L252 956 L274 950 L295 944 L317 937 L339 931 L361 925 L382 918 L404 912 L426 905 L447 899 L469 893 L491 887 L512 882 L534 877 L556 872 L578 867 L599 862 L621 857 L643 852 L664 847 L686 842 L708 838 L730 833 L751 828 L773 824 L795 819 L816 815 L838 810 L860 806 L881 802 L903 797 L925 793 L947 789 L968 785 L990 782 L1012 778 L1033 774 L1055 771 L1077 768 L1099 764 L1120 761 L1142 758 L1164 755 L1185 752 L1207 749 L1229 747 L1250 744 L1272 742 L1294 739 L1316 737 L1337 735 L1359 733 L1381 732 L1402 730 L1424 728 L1446 727 L1468 725 L1489 724 L1511 723 L1533 721 L1554 720 L1576 719 L1598 718 L1619 717 L1641 716 L1663 715 L1685 714 L1706 714 L1728 713 L1750 712 L1771 712 L1793 711 L1815 711 L1837 710 L1858 710 L1880 710 L1902 710 L1923 710 L1945 711 L1967 711 L1988 712 L2010 713 L2032 714 L2054 715 L2075 716 L2097 718 L2119 719 L2140 721 L2162 723 L2184 725 L2206 727 L2227 729 L2249 731 L2271 733 L2292 736 L2314 739 L2336 743 L2357 747 L2379 752 L2401 757 L2423 762 L2444 768 L2466 774 L2488 780 L2509 786 L2531 793 L2553 800 L2575 809 L2596 819 L2618 829 L2640 841 L2661 854 L2683 866 L2705 878 L2726 889 L2748 902 L2770 913 L2792 925 L2813 934 L2835 947 M144 996 L165 982 L187 976 L209 970 L230 964 L252 958 L274 952 L295 946 L317 939 L339 933 L361 927 L382 921 L404 915 L426 908 L447 902 L469 897 L491 891 L512 886 L534 881 L556 876 L578 872 L599 867 L621 862 L643 857 L664 853 L686 848 L708 843 L730 839 L751 834 L773 830 L795 825 L816 821 L838 816 L860 812 L881 808 L903 804 L925 800 L947 796 L968 792 L990 788 L1012 784 L1033 781 L1055 778 L1077 774 L1099 771 L1120 768 L1142 765 L1164 762 L1185 759 L1207 756 L1229 754 L1250 751 L1272 749 L1294 747 L1316 744 L1337 742 L1359 740 L1381 739 L1402 737 L1424 735 L1446 734 L1468 732 L1489 731 L1511 730 L1533 728 L1554 727 L1576 726 L1598 725 L1619 724 L1641 723 L1663 722 L1685 721 L1706 720 L1728 720 L1750 719 L1771 719 L1793 718 L1815 717 L1837 717 L1858 717 L1880 717 L1902 717 L1923 717 L1945 717 L1967 718 L1988 718 L2010 719 L2032 720 L2054 721 L2075 723 L2097 724 L2119 725 L2140 727 L2162 729 L2184 731 L2206 733 L2227 735 L2249 737 L2271 739 L2292 741 L2314 744 L2336 748 L2357 752 L2379 757 L2401 762 L2423 767 L2444 772 L2466 778 L2488 784 L2509 791 L2531 797 L2553 804 L2575 813 L2596 823 L2618 833 L2640 844 L2661 857 L2683 869 L2705 880 L2726 891 L2748 903 L2770 915 L2792 926 L2813 935 L2835 947 M144 996 L165 983 L187 977 L209 972 L230 966 L252 960 L274 954 L295 948 L317 942 L339 936 L361 930 L382 924 L404 918 L426 912 L447 906 L469 901 L491 896 L512 891 L534 886 L556 882 L578 877 L599 873 L621 868 L643 863 L664 859 L686 854 L708 850 L730 845 L751 841 L773 836 L795 832 L816 828 L838 823 L860 819 L881 815 L903 811 L925 807 L947 803 L968 799 L990 796 L1012 792 L1033 788 L1055 785 L1077 782 L1099 779 L1120 776 L1142 773 L1164 770 L1185 767 L1207 764 L1229 762 L1250 759 L1272 757 L1294 754 L1316 752 L1337 750 L1359 748 L1381 747 L1402 745 L1424 743 L1446 742 L1468 740 L1489 739 L1511 738 L1533 736 L1554 735 L1576 734 L1598 733 L1619 732 L1641 731 L1663 730 L1685 729 L1706 728 L1728 728 L1750 727 L1771 726 L1793 726 L1815 725 L1837 725 L1858 724 L1880 724 L1902 724 L1923 725 L1945 725 L1967 725 L1988 726 L2010 727 L2032 728 L2054 729 L2075 730 L2097 731 L2119 732 L2140 734 L2162 736 L2184 738 L2206 739 L2227 741 L2249 743 L2271 745 L2292 748 L2314 750 L2336 754 L2357 758 L2379 763 L2401 767 L2423 772 L2444 778 L2466 783 L2488 789 L2509 796 L2531 802 L2553 808 L2575 817 L2596 827 L2618 837 L2640 847 L2661 860 L2683 872 L2705 883 L2726 894 L2748 905 L2770 916 L2792 927 L2813 935 L2835 947 M144 996 L165 984 L187 978 L209 973 L230 967 L252 961 L274 956 L295 950 L317 945 L339 939 L361 934 L382 928 L404 922 L426 917 L447 911 L469 906 L491 901 L512 897 L534 892 L556 888 L578 883 L599 879 L621 875 L643 870 L664 866 L686 861 L708 857 L730 852 L751 848 L773 844 L795 839 L816 835 L838 831 L860 827 L881 823 L903 819 L925 815 L947 811 L968 807 L990 804 L1012 800 L1033 797 L1055 794 L1077 790 L1099 787 L1120 784 L1142 781 L1164 778 L1185 776 L1207 773 L1229 771 L1250 768 L1272 766 L1294 763 L1316 761 L1337 759 L1359 757 L1381 756 L1402 754 L1424 752 L1446 751 L1468 749 L1489 748 L1511 747 L1533 745 L1554 744 L1576 743 L1598 741 L1619 740 L1641 739 L1663 739 L1685 738 L1706 737 L1728 736 L1750 736 L1771 735 L1793 734 L1815 734 L1837 733 L1858 733 L1880 733 L1902 733 L1923 733 L1945 733 L1967 734 L1988 734 L2010 735 L2032 736 L2054 737 L2075 738 L2097 739 L2119 740 L2140 742 L2162 743 L2184 745 L2206 747 L2227 749 L2249 750 L2271 752 L2292 755 L2314 757 L2336 761 L2357 765 L2379 769 L2401 774 L2423 778 L2444 784 L2466 789 L2488 795 L2509 801 L2531 807 L2553 813 L2575 822 L2596 831 L2618 841 L2640 851 L2661 864 L2683 875 L2705 885 L2726 896 L2748 907 L2770 918 L2792 928 L2813 936 L2835 947 M144 996 L165 985 L187 980 L209 974 L230 969 L252 964 L274 958 L295 953 L317 948 L339 943 L361 937 L382 932 L404 927 L426 921 L447 916 L469 911 L491 907 L512 903 L534 898 L556 894 L578 890 L599 886 L621 882 L643 878 L664 873 L686 869 L708 865 L730 860 L751 856 L773 852 L795 848 L816 844 L838 840 L860 836 L881 831 L903 828 L925 824 L947 820 L968 816 L990 813 L1012 809 L1033 806 L1055 803 L1077 800 L1099 797 L1120 794 L1142 791 L1164 788 L1185 785 L1207 783 L1229 780 L1250 778 L1272 775 L1294 773 L1316 771 L1337 769 L1359 767 L1381 765 L1402 764 L1424 762 L1446 761 L1468 759 L1489 758 L1511 756 L1533 755 L1554 754 L1576 752 L1598 751 L1619 750 L1641 749 L1663 748 L1685 747 L1706 747 L1728 746 L1750 745 L1771 745 L1793 744 L1815 743 L1837 743 L1858 742 L1880 742 L1902 742 L1923 742 L1945 742 L1967 743 L1988 743 L2010 744 L2032 745 L2054 745 L2075 747 L2097 748 L2119 749 L2140 750 L2162 752 L2184 753 L2206 755 L2227 757 L2249 758 L2271 760 L2292 762 L2314 765 L2336 768 L2357 772 L2379 776 L2401 780 L2423 785 L2444 790 L2466 795 L2488 801 L2509 807 L2531 813 L2553 819 L2575 827 L2596 836 L2618 845 L2640 856 L2661 867 L2683 879 L2705 889 L2726 899 L2748 910 L2770 920 L2792 929 L2813 937 L2835 947 M144 996 L165 986 L187 981 L209 976 L230 971 L252 966 L274 961 L295 956 L317 951 L339 946 L361 942 L382 937 L404 932 L426 927 L447 922 L469 917 L491 913 L512 909 L534 905 L556 901 L578 898 L599 894 L621 890 L643 886 L664 881 L686 877 L708 873 L730 869 L751 865 L773 861 L795 857 L816 853 L838 849 L860 845 L881 841 L903 837 L925 833 L947 830 L968 826 L990 822 L1012 819 L1033 816 L1055 813 L1077 810 L1099 807 L1120 804 L1142 801 L1164 798 L1185 796 L1207 793 L1229 791 L1250 788 L1272 786 L1294 784 L1316 782 L1337 780 L1359 778 L1381 776 L1402 774 L1424 773 L1446 771 L1468 770 L1489 768 L1511 767 L1533 765 L1554 764 L1576 763 L1598 762 L1619 761 L1641 760 L1663 759 L1685 758 L1706 757 L1728 756 L1750 755 L1771 755 L1793 754 L1815 753 L1837 753 L1858 752 L1880 752 L1902 752 L1923 752 L1945 752 L1967 753 L1988 753 L2010 753 L2032 754 L2054 755 L2075 756 L2097 757 L2119 758 L2140 759 L2162 761 L2184 762 L2206 764 L2227 765 L2249 767 L2271 769 L2292 771 L2314 773 L2336 776 L2357 780 L2379 784 L2401 788 L2423 792 L2444 797 L2466 802 L2488 808 L2509 813 L2531 819 L2553 825 L2575 833 L2596 842 L2618 851 L2640 860 L2661 872 L2683 883 L2705 892 L2726 902 L2748 912 L2770 922 L2792 931 L2813 938 L2835 947 M144 996 L165 987 L187 982 L209 978 L230 973 L252 968 L274 964 L295 959 L317 955 L339 950 L361 946 L382 941 L404 937 L426 932 L447 928 L469 924 L491 920 L512 916 L534 913 L556 909 L578 906 L599 902 L621 898 L643 894 L664 890 L686 886 L708 882 L730 878 L751 874 L773 870 L795 866 L816 862 L838 859 L860 855 L881 851 L903 847 L925 843 L947 840 L968 836 L990 833 L1012 830 L1033 826 L1055 823 L1077 820 L1099 818 L1120 815 L1142 812 L1164 809 L1185 807 L1207 804 L1229 802 L1250 799 L1272 797 L1294 795 L1316 793 L1337 791 L1359 789 L1381 787 L1402 786 L1424 784 L1446 782 L1468 781 L1489 780 L1511 778 L1533 777 L1554 775 L1576 774 L1598 773 L1619 772 L1641 771 L1663 770 L1685 769 L1706 768 L1728 767 L1750 766 L1771 766 L1793 765 L1815 764 L1837 764 L1858 763 L1880 763 L1902 763 L1923 763 L1945 763 L1967 763 L1988 763 L2010 764 L2032 765 L2054 765 L2075 766 L2097 767 L2119 768 L2140 769 L2162 771 L2184 772 L2206 773 L2227 775 L2249 776 L2271 778 L2292 780 L2314 782 L2336 785 L2357 788 L2379 792 L2401 796 L2423 800 L2444 805 L2466 810 L2488 815 L2509 820 L2531 825 L2553 831 L2575 839 L2596 847 L2618 856 L2640 865 L2661 876 L2683 887 L2705 896 L2726 905 L2748 915 L2770 924 L2792 932 L2813 939 L2835 947 M144 996 L165 988 L187 984 L209 980 L230 975 L252 971 L274 967 L295 963 L317 959 L339 955 L361 950 L382 946 L404 942 L426 938 L447 934 L469 930 L491 927 L512 924 L534 920 L556 917 L578 914 L599 911 L621 907 L643 903 L664 899 L686 896 L708 892 L730 888 L751 884 L773 880 L795 876 L816 873 L838 869 L860 865 L881 861 L903 858 L925 854 L947 851 L968 847 L990 844 L1012 841 L1033 838 L1055 835 L1077 832 L1099 829 L1120 826 L1142 824 L1164 821 L1185 818 L1207 816 L1229 814 L1250 811 L1272 809 L1294 807 L1316 805 L1337 803 L1359 801 L1381 799 L1402 798 L1424 796 L1446 794 L1468 793 L1489 791 L1511 790 L1533 789 L1554 787 L1576 786 L1598 785 L1619 784 L1641 783 L1663 782 L1685 781 L1706 780 L1728 779 L1750 778 L1771 777 L1793 777 L1815 776 L1837 775 L1858 775 L1880 774 L1902 774 L1923 774 L1945 774 L1967 774 L1988 774 L2010 775 L2032 775 L2054 776 L2075 777 L2097 778 L2119 779 L2140 780 L2162 781 L2184 782 L2206 783 L2227 785 L2249 786 L2271 787 L2292 789 L2314 791 L2336 794 L2357 797 L2379 801 L2401 804 L2423 808 L2444 813 L2466 817 L2488 822 L2509 827 L2531 832 L2553 838 L2575 845 L2596 853 L2618 862 L2640 871 L2661 881 L2683 891 L2705 900 L2726 908 L2748 917 L2770 926 L2792 934 L2813 940 L2835 947 M144 996 L165 989 L187 985 L209 982 L230 977 L252 973 L274 970 L295 966 L317 962 L339 959 L361 955 L382 952 L404 948 L426 944 L447 940 L469 937 L491 934 L512 931 L534 928 L556 926 L578 923 L599 920 L621 916 L643 913 L664 909 L686 905 L708 902 L730 898 L751 894 L773 891 L795 887 L816 884 L838 880 L860 876 L881 872 L903 869 L925 865 L947 862 L968 859 L990 856 L1012 852 L1033 849 L1055 847 L1077 844 L1099 841 L1120 838 L1142 836 L1164 833 L1185 831 L1207 828 L1229 826 L1250 824 L1272 822 L1294 819 L1316 817 L1337 815 L1359 814 L1381 812 L1402 810 L1424 808 L1446 807 L1468 805 L1489 804 L1511 803 L1533 801 L1554 800 L1576 798 L1598 797 L1619 796 L1641 795 L1663 794 L1685 793 L1706 792 L1728 791 L1750 790 L1771 790 L1793 789 L1815 788 L1837 787 L1858 787 L1880 786 L1902 786 L1923 786 L1945 786 L1967 786 L1988 786 L2010 786 L2032 787 L2054 787 L2075 788 L2097 789 L2119 790 L2140 791 L2162 792 L2184 793 L2206 794 L2227 795 L2249 796 L2271 798 L2292 799 L2314 801 L2336 803 L2357 806 L2379 810 L2401 813 L2423 817 L2444 821 L2466 825 L2488 830 L2509 835 L2531 840 L2553 845 L2575 852 L2596 860 L2618 868 L2640 876 L2661 886 L2683 896 L2705 904 L2726 912 L2748 920 L2770 928 L2792 936 L2813 941 L2835 947 M144 996 L165 990 L187 987 L209 984 L230 980 L252 976 L274 973 L295 970 L317 967 L339 963 L360 960 L382 957 L404 954 L426 950 L447 947 L469 944 L491 942 L512 939 L534 937 L556 935 L577 932 L599 929 L621 926 L643 923 L664 919 L686 916 L708 912 L729 909 L751 905 L773 902 L795 898 L816 895 L838 891 L860 888 L881 884 L903 881 L925 877 L946 874 L968 871 L990 868 L1012 865 L1033 862 L1055 859 L1077 856 L1098 854 L1120 851 L1142 849 L1163 846 L1185 844 L1207 841 L1229 839 L1250 837 L1272 835 L1294 832 L1315 830 L1337 828 L1359 827 L1381 825 L1402 823 L1424 822 L1446 820 L1467 818 L1489 817 L1511 816 L1532 814 L1554 813 L1576 811 L1598 810 L1619 809 L1641 808 L1663 807 L1684 806 L1706 805 L1728 804 L1750 803 L1771 802 L1793 801 L1815 801 L1836 800 L1858 799 L1880 799 L1901 799 L1923 798 L1945 798 L1967 798 L1988 798 L2010 798 L2032 799 L2053 799 L2075 800 L2097 800 L2119 801 L2140 802 L2162 803 L2184 804 L2205 805 L2227 806 L2249 807 L2271 808 L2292 809 L2314 811 L2336 813 L2357 816 L2379 819 L2401 822 L2422 826 L2444 830 L2466 834 L2488 838 L2509 843 L2531 847 L2553 852 L2574 859 L2596 866 L2618 874 L2640 882 L2661 892 L2683 900 L2705 908 L2726 915 L2748 923 L2770 931 L2792 938 L2813 942 L2835 947 M144 996 L165 991 L187 989 L208 986 L230 982 L252 979 L273 976 L295 974 L317 971 L338 968 L360 966 L382 963 L403 960 L425 957 L447 954 L468 952 L490 950 L512 948 L533 946 L555 944 L577 942 L598 939 L620 936 L642 933 L663 930 L685 927 L707 923 L729 920 L750 917 L772 913 L794 910 L815 907 L837 903 L859 900 L880 896 L902 893 L924 889 L945 886 L967 883 L989 880 L1011 877 L1032 875 L1054 872 L1076 869 L1097 867 L1119 864 L1141 862 L1162 859 L1184 857 L1206 855 L1228 853 L1249 850 L1271 848 L1293 846 L1314 844 L1336 842 L1358 840 L1379 838 L1401 837 L1423 835 L1445 834 L1466 832 L1488 831 L1510 829 L1531 828 L1553 826 L1575 825 L1597 824 L1618 822 L1640 821 L1662 820 L1683 819 L1705 818 L1727 817 L1748 816 L1770 815 L1792 815 L1814 814 L1835 813 L1857 812 L1879 812 L1900 811 L1922 811 L1944 811 L1966 811 L1987 811 L2009 811 L2031 811 L2052 811 L2074 812 L2096 812 L2118 813 L2139 814 L2161 814 L2183 815 L2204 816 L2226 817 L2248 818 L2270 819 L2291 820 L2313 822 L2335 824 L2357 826 L2378 829 L2400 832 L2422 835 L2443 838 L2465 842 L2487 846 L2509 851 L2530 855 L2552 860 L2574 866 L2596 873 L2617 880 L2639 888 L2661 897 L2683 905 L2704 912 L2726 919 L2748 926 L2770 933 L2791 939 L2813 943 L2835 947 M144 996 L165 992 L186 990 L208 988 L230 985 L251 982 L273 980 L294 978 L316 975 L338 973 L359 971 L381 969 L402 966 L424 964 L445 962 L467 960 L489 958 L510 957 L532 955 L553 953 L575 952 L597 950 L618 947 L640 944 L661 941 L683 938 L705 935 L726 931 L748 928 L770 925 L791 922 L813 919 L835 916 L856 912 L878 909 L900 905 L921 902 L943 899 L965 896 L986 893 L1008 891 L1030 888 L1052 885 L1073 883 L1095 880 L1117 878 L1138 875 L1160 873 L1182 871 L1203 869 L1225 866 L1247 864 L1268 862 L1290 860 L1312 858 L1333 856 L1355 854 L1377 852 L1399 851 L1420 849 L1442 848 L1464 846 L1485 845 L1507 843 L1529 842 L1551 840 L1572 839 L1594 838 L1616 836 L1637 835 L1659 834 L1681 833 L1703 832 L1724 831 L1746 830 L1768 829 L1789 828 L1811 827 L1833 826 L1855 826 L1876 825 L1898 825 L1920 824 L1941 824 L1963 824 L1985 824 L2007 824 L2028 824 L2050 824 L2072 824 L2094 825 L2115 825 L2137 826 L2159 826 L2181 827 L2202 828 L2224 828 L2246 829 L2268 830 L2289 831 L2311 832 L2333 834 L2355 836 L2376 839 L2398 841 L2420 844 L2442 847 L2464 851 L2485 855 L2507 859 L2529 863 L2551 867 L2572 873 L2594 880 L2616 886 L2638 894 L2660 902 L2682 910 L2704 916 L2725 923 L2747 929 L2769 936 L2791 941 L2813 945 L2835 947 M144 996 L164 993 L186 992 L207 990 L229 988 L250 985 L272 983 L293 982 L315 980 L336 978 L357 976 L379 975 L400 973 L422 971 L443 969 L465 968 L486 966 L507 965 L529 964 L550 963 L572 962 L593 960 L615 958 L637 955 L658 952 L680 949 L701 946 L723 943 L745 940 L766 937 L788 934 L809 931 L831 928 L853 925 L874 922 L896 919 L918 915 L939 912 L961 910 L982 907 L1004 904 L1026 902 L1047 899 L1069 897 L1091 894 L1112 892 L1134 890 L1156 887 L1177 885 L1199 883 L1221 881 L1242 879 L1264 877 L1286 875 L1307 873 L1329 871 L1351 869 L1373 867 L1394 865 L1416 864 L1438 862 L1459 860 L1481 859 L1503 857 L1525 856 L1546 855 L1568 853 L1590 852 L1611 851 L1633 849 L1655 848 L1677 847 L1698 846 L1720 845 L1742 844 L1763 843 L1785 842 L1807 841 L1829 840 L1850 839 L1872 839 L1894 838 L1916 838 L1937 837 L1959 837 L1981 837 L2003 837 L2024 837 L2046 837 L2068 837 L2090 837 L2112 837 L2133 838 L2155 838 L2177 839 L2199 839 L2220 840 L2242 841 L2264 841 L2286 842 L2308 843 L2330 844 L2351 846 L2373 848 L2395 851 L2417 854 L2439 856 L2461 860 L2483 863 L2504 867 L2526 871 L2548 875 L2570 880 L2592 886 L2614 893 L2636 899 L2658 907 L2680 915 L2702 920 L2724 926 L2746 932 L2768 938 L2790 943 L2813 946 L2835 947 M144 996 L164 995 L185 994 L206 992 L228 990 L249 988 L270 987 L291 986 L313 984 L334 983 L355 982 L376 981 L397 979 L419 978 L440 977 L461 976 L482 975 L503 974 L525 973 L546 973 L567 972 L589 971 L610 969 L632 966 L653 964 L675 961 L696 958 L718 956 L739 953 L761 950 L782 947 L804 944 L825 942 L847 939 L869 935 L890 932 L912 929 L933 926 L955 923 L977 921 L998 918 L1020 916 L1041 913 L1063 911 L1085 909 L1106 906 L1128 904 L1149 902 L1171 900 L1193 898 L1214 896 L1236 893 L1258 891 L1279 889 L1301 887 L1323 885 L1344 884 L1366 882 L1388 880 L1410 878 L1431 877 L1453 875 L1475 874 L1496 872 L1518 871 L1540 869 L1562 868 L1583 866 L1605 865 L1627 864 L1648 863 L1670 861 L1692 860 L1714 859 L1735 858 L1757 857 L1779 856 L1801 855 L1822 854 L1844 853 L1866 852 L1888 852 L1910 851 L1931 851 L1953 850 L1975 850 L1997 850 L2019 850 L2040 850 L2062 850 L2084 850 L2106 850 L2128 850 L2150 850 L2171 851 L2193 851 L2215 852 L2237 852 L2259 853 L2281 853 L2303 854 L2325 855 L2347 857 L2369 858 L2391 861 L2413 863 L2435 865 L2457 868 L2479 872 L2501 875 L2523 878 L2545 882 L2567 887 L2589 893 L2611 899 L2633 905 L2655 912 L2678 919 L2700 925 L2722 930 L2745 935 L2767 941 L2790 945 L2812 947 L2835 947 M144 996 L163 996 L184 996 L205 995 L226 993 L247 992 L268 991 L289 990 L310 989 L331 988 L352 987 L372 987 L393 986 L414 985 L435 984 L456 984 L477 983 L498 983 L519 983 L540 982 L561 982 L582 981 L604 980 L625 978 L646 976 L668 973 L689 971 L710 968 L732 966 L753 963 L775 960 L796 958 L818 955 L839 952 L861 949 L882 946 L904 943 L925 940 L947 937 L968 935 L990 932 L1011 930 L1033 928 L1055 925 L1076 923 L1098 921 L1119 919 L1141 917 L1162 915 L1184 913 L1206 911 L1227 909 L1249 907 L1271 904 L1292 903 L1314 901 L1336 899 L1357 897 L1379 895 L1401 893 L1422 892 L1444 890 L1466 889 L1488 887 L1509 886 L1531 884 L1553 883 L1575 881 L1596 880 L1618 879 L1640 877 L1662 876 L1683 875 L1705 874 L1727 873 L1749 872 L1770 870 L1792 869 L1814 868 L1836 867 L1858 867 L1879 866 L1901 865 L1923 865 L1945 864 L1967 864 L1989 863 L2011 863 L2032 863 L2054 863 L2076 863 L2098 863 L2120 863 L2142 863 L2164 863 L2186 863 L2208 864 L2230 864 L2252 864 L2274 865 L2296 865 L2318 866 L2340 867 L2362 868 L2384 870 L2407 872 L2429 875 L2451 877 L2473 880 L2495 883 L2517 886 L2540 889 L2562 893 L2584 899 L2607 905 L2629 910 L2652 917 L2675 924 L2697 929 L2720 934 L2743 938 L2766 943 L2788 947 L2811 949 L2835 947 M144 996 L162 997 L183 997 L203 997 L224 996 L245 995 L265 994 L286 994 L306 993 L327 993 L347 993 L368 993 L388 992 L409 992 L429 992 L450 991 L470 991 L491 992 L512 992 L532 992 L553 992 L574 992 L595 991 L616 989 L638 987 L659 985 L680 983 L701 981 L723 978 L744 976 L765 973 L787 971 L808 968 L829 966 L851 963 L872 960 L894 957 L915 954 L937 952 L958 949 L979 947 L1001 944 L1022 942 L1044 940 L1065 938 L1087 936 L1108 934 L1130 932 L1151 930 L1173 928 L1194 926 L1216 924 L1238 922 L1259 920 L1281 918 L1303 916 L1324 914 L1346 912 L1368 910 L1389 909 L1411 907 L1433 905 L1455 904 L1476 902 L1498 901 L1520 899 L1542 898 L1563 896 L1585 895 L1607 893 L1629 892 L1650 891 L1672 890 L1694 888 L1716 887 L1738 886 L1759 885 L1781 884 L1803 883 L1825 882 L1847 881 L1869 880 L1891 879 L1912 878 L1934 878 L1956 877 L1978 877 L2000 876 L2022 876 L2044 876 L2066 876 L2088 875 L2110 875 L2132 875 L2154 875 L2176 875 L2199 876 L2221 876 L2243 876 L2265 876 L2287 876 L2309 877 L2332 877 L2354 879 L2376 880 L2399 882 L2421 884 L2444 886 L2466 888 L2488 891 L2511 894 L2533 897 L2556 900 L2579 905 L2601 910 L2624 916 L2647 922 L2670 928 L2694 933 L2717 937 L2740 942 L2763 945 L2787 949 L2810 950 L2835 947 M144 996 L161 998 L181 999 L201 999 L221 998 L242 998 L262 997 L282 997 L302 998 L322 998 L342 998 L362 998 L382 998 L402 998 L422 999 L442 999 L462 999 L482 1000 L503 1000 L523 1001 L543 1001 L564 1002 L585 1002 L606 1001 L627 999 L648 997 L669 995 L690 993 L711 991 L732 989 L753 987 L775 984 L796 982 L817 980 L838 977 L860 975 L881 971 L903 969 L924 966 L945 964 L966 961 L988 959 L1009 957 L1031 955 L1052 953 L1073 951 L1095 949 L1116 947 L1138 945 L1159 943 L1181 941 L1202 939 L1224 937 L1245 935 L1267 933 L1289 931 L1310 930 L1332 928 L1354 926 L1376 924 L1397 922 L1419 921 L1441 919 L1462 917 L1484 916 L1506 914 L1528 913 L1550 911 L1571 910 L1593 909 L1615 907 L1637 906 L1659 905 L1680 903 L1702 902 L1724 901 L1746 900 L1768 898 L1790 897 L1812 896 L1834 895 L1855 894 L1877 893 L1899 892 L1921 892 L1943 891 L1965 890 L1988 890 L2010 889 L2032 889 L2054 889 L2076 888 L2098 888 L2120 888 L2143 888 L2165 888 L2187 888 L2209 888 L2232 888 L2254 888 L2276 888 L2299 888 L2321 888 L2344 889 L2367 890 L2389 891 L2412 893 L2435 895 L2457 897 L2480 899 L2503 902 L2526 904 L2548 907 L2572 911 L2595 916 L2618 921 L2642 927 L2665 933 L2689 937 L2713 941 L2737 945 L2761 948 L2785 951 L2809 951 L2835 947 M144 996 L160 999 L179 1000 L199 1001 L218 1001 L238 1001 L258 1001 L277 1001 L297 1001 L316 1002 L336 1003 L355 1003 L375 1004 L394 1005 L413 1005 L433 1006 L453 1006 L472 1007 L492 1008 L512 1009 L532 1010 L552 1011 L573 1012 L593 1012 L614 1011 L635 1009 L656 1007 L677 1006 L697 1004 L718 1002 L739 1000 L760 998 L781 995 L803 993 L824 991 L845 989 L866 986 L888 983 L909 981 L930 978 L951 976 L972 974 L994 972 L1015 969 L1036 967 L1057 966 L1079 964 L1100 962 L1121 960 L1143 958 L1164 956 L1186 954 L1207 953 L1229 951 L1251 949 L1272 947 L1294 945 L1316 943 L1337 941 L1359 940 L1381 938 L1403 936 L1424 934 L1446 933 L1468 931 L1490 930 L1511 928 L1533 927 L1555 925 L1577 924 L1599 922 L1621 921 L1642 919 L1664 918 L1686 917 L1708 916 L1730 914 L1752 913 L1774 912 L1796 911 L1818 910 L1840 908 L1862 907 L1884 906 L1906 906 L1928 905 L1950 904 L1973 903 L1995 903 L2017 902 L2039 902 L2062 901 L2084 901 L2106 900 L2129 900 L2151 900 L2173 900 L2196 900 L2218 899 L2241 899 L2264 899 L2286 899 L2309 899 L2332 899 L2355 900 L2378 901 L2401 902 L2424 903 L2447 905 L2470 907 L2493 909 L2516 912 L2540 914 L2563 917 L2587 922 L2611 926 L2635 931 L2659 937 L2684 942 L2708 945 L2733 948 L2758 951 L2783 953 L2807 953 L2835 947 M144 996 L158 1000 L177 1002 L196 1003 L215 1003 L234 1003 L253 1003 L272 1004 L291 1005 L310 1006 L328 1007 L347 1008 L366 1009 L385 1010 L404 1011 L422 1012 L441 1013 L461 1014 L480 1016 L499 1017 L518 1018 L538 1019 L559 1020 L579 1021 L599 1022 L620 1020 L641 1019 L661 1018 L682 1016 L703 1014 L723 1013 L744 1011 L765 1009 L786 1007 L807 1005 L828 1003 L849 1000 L870 998 L891 995 L912 992 L934 990 L955 988 L976 986 L997 984 L1018 982 L1039 980 L1060 978 L1082 977 L1103 975 L1124 973 L1146 971 L1167 970 L1189 968 L1210 966 L1232 964 L1253 962 L1275 960 L1297 959 L1318 957 L1340 955 L1362 953 L1384 951 L1405 950 L1427 948 L1449 946 L1471 945 L1493 943 L1514 942 L1536 940 L1558 939 L1580 937 L1602 936 L1624 934 L1646 933 L1668 932 L1690 930 L1712 929 L1734 928 L1756 926 L1778 925 L1800 924 L1822 923 L1844 922 L1866 920 L1888 919 L1911 919 L1933 918 L1955 917 L1978 916 L2000 915 L2022 915 L2045 914 L2067 914 L2090 913 L2113 912 L2135 912 L2158 912 L2180 911 L2203 911 L2226 911 L2249 910 L2272 910 L2295 910 L2318 910 L2342 910 L2365 910 L2388 911 L2412 912 L2435 913 L2459 915 L2482 917 L2506 919 L2530 921 L2554 923 L2578 927 L2602 932 L2627 936 L2652 941 L2678 946 L2703 948 L2729 951 L2754 953 L2780 955 L2806 955 L2835 947 M144 996 L156 1001 L174 1003 L192 1005 L211 1005 L229 1006 L248 1006 L266 1007 L284 1008 L302 1010 L320 1011 L338 1012 L356 1014 L374 1015 L393 1016 L411 1018 L429 1019 L447 1020 L466 1022 L485 1024 L504 1025 L523 1027 L543 1028 L563 1030 L583 1031 L603 1031 L624 1030 L644 1029 L664 1028 L685 1026 L705 1025 L726 1023 L747 1022 L767 1020 L788 1018 L809 1016 L830 1014 L851 1012 L872 1009 L893 1007 L914 1004 L935 1002 L956 1000 L977 998 L998 996 L1019 995 L1040 993 L1061 991 L1082 989 L1103 988 L1125 986 L1146 984 L1168 983 L1189 981 L1211 979 L1232 978 L1254 976 L1275 974 L1297 972 L1319 970 L1341 968 L1363 967 L1384 965 L1406 963 L1428 962 L1450 960 L1472 958 L1493 957 L1515 955 L1537 954 L1559 952 L1581 950 L1603 949 L1625 948 L1647 946 L1669 945 L1691 943 L1713 942 L1735 941 L1757 939 L1780 938 L1802 937 L1824 936 L1846 934 L1869 933 L1891 932 L1913 931 L1936 930 L1958 929 L1981 928 L2004 928 L2026 927 L2049 926 L2072 926 L2095 925 L2117 924 L2140 924 L2163 923 L2186 923 L2209 922 L2232 922 L2256 921 L2279 921 L2303 920 L2327 920 L2350 920 L2374 920 L2398 921 L2422 922 L2446 923 L2470 924 L2494 926 L2518 928 L2543 930 L2568 933 L2593 937 L2619 941 L2645 945 L2671 950 L2697 952 L2724 954 L2750 956 L2777 957 L2804 956 L2835 947 M144 996 L154 1001 L171 1004 L189 1006 L207 1007 L225 1008 L242 1009 L259 1010 L277 1011 L294 1013 L311 1014 L329 1016 L346 1018 L363 1019 L380 1021 L398 1023 L415 1024 L433 1026 L451 1028 L469 1030 L487 1032 L506 1034 L525 1036 L545 1037 L565 1039 L585 1041 L605 1041 L625 1040 L645 1039 L665 1038 L686 1037 L706 1035 L726 1034 L747 1032 L768 1031 L789 1029 L809 1027 L830 1025 L851 1023 L871 1021 L892 1018 L913 1016 L934 1014 L955 1012 L975 1010 L996 1009 L1017 1007 L1038 1005 L1059 1004 L1080 1002 L1102 1000 L1123 999 L1144 997 L1166 996 L1187 994 L1209 992 L1231 991 L1252 989 L1274 987 L1296 985 L1318 983 L1339 982 L1361 980 L1383 978 L1405 976 L1427 975 L1448 973 L1470 971 L1492 970 L1514 968 L1536 967 L1558 965 L1580 964 L1602 962 L1625 961 L1647 959 L1669 958 L1691 956 L1713 955 L1735 953 L1757 952 L1780 951 L1802 949 L1825 948 L1847 947 L1869 946 L1892 945 L1915 944 L1937 943 L1960 942 L1983 941 L2006 940 L2029 939 L2052 938 L2075 937 L2098 936 L2121 936 L2144 935 L2167 934 L2191 934 L2214 933 L2238 932 L2262 932 L2286 931 L2310 930 L2335 930 L2359 930 L2383 930 L2408 930 L2432 931 L2456 932 L2481 933 L2506 935 L2531 937 L2557 939 L2582 942 L2609 946 L2636 950 L2663 954 L2691 957 L2718 958 L2746 959 L2774 959 L2802 958 L2835 947 M144 996 L152 1002 L168 1005 L185 1007 L202 1009 L219 1010 L236 1011 L252 1012 L269 1013 L285 1015 L302 1017 L318 1019 L335 1021 L351 1023 L367 1025 L384 1027 L401 1028 L418 1030 L435 1032 L452 1034 L470 1037 L488 1039 L507 1041 L526 1044 L546 1046 L565 1048 L585 1050 L605 1050 L625 1049 L644 1049 L664 1048 L685 1047 L705 1045 L725 1044 L746 1043 L767 1041 L787 1040 L808 1038 L828 1036 L848 1035 L869 1032 L890 1030 L910 1028 L931 1026 L951 1024 L972 1022 L993 1021 L1014 1019 L1035 1017 L1056 1016 L1077 1014 L1098 1013 L1120 1011 L1141 1010 L1162 1008 L1184 1007 L1206 1005 L1227 1003 L1249 1002 L1271 1000 L1293 998 L1314 996 L1336 994 L1358 993 L1380 991 L1402 989 L1424 987 L1446 986 L1468 984 L1490 982 L1512 981 L1534 979 L1556 978 L1578 976 L1600 975 L1622 973 L1645 972 L1667 970 L1689 969 L1711 967 L1734 966 L1756 964 L1779 963 L1801 962 L1824 960 L1846 959 L1869 958 L1892 957 L1915 955 L1938 954 L1961 953 L1984 952 L2007 951 L2031 950 L2054 949 L2077 948 L2100 947 L2124 947 L2147 946 L2171 945 L2195 944 L2219 943 L2244 942 L2268 942 L2293 941 L2317 940 L2342 939 L2367 939 L2392 939 L2417 939 L2442 940 L2467 941 L2492 942 L2519 943 L2545 945 L2571 947 L2599 951 L2627 954 L2655 958 L2684 961 L2713 961 L2741 962 L2770 962 L2800 960 L2835 947 M144 996 L150 1002 L165 1005 L181 1008 L197 1010 L214 1012 L229 1013 L245 1014 L261 1015 L276 1017 L292 1019 L307 1021 L323 1023 L338 1025 L354 1028 L369 1030 L385 1032 L401 1034 L418 1036 L435 1038 L451 1041 L469 1043 L488 1046 L506 1049 L526 1051 L545 1053 L564 1056 L583 1058 L603 1059 L623 1058 L642 1058 L662 1057 L682 1056 L702 1055 L723 1054 L743 1053 L764 1051 L784 1050 L804 1049 L824 1047 L845 1046 L865 1043 L885 1041 L906 1039 L926 1037 L947 1035 L968 1034 L988 1032 L1009 1030 L1030 1029 L1051 1027 L1072 1026 L1094 1025 L1115 1023 L1136 1022 L1158 1020 L1179 1019 L1201 1017 L1223 1015 L1245 1014 L1267 1012 L1288 1010 L1310 1008 L1332 1007 L1354 1005 L1376 1003 L1398 1001 L1420 1000 L1442 998 L1464 996 L1486 995 L1508 993 L1530 991 L1553 990 L1575 988 L1597 987 L1619 985 L1641 984 L1664 982 L1686 981 L1709 979 L1731 978 L1754 976 L1777 975 L1799 973 L1822 972 L1845 971 L1868 969 L1891 968 L1915 967 L1938 966 L1961 964 L1985 963 L2008 962 L2032 961 L2055 960 L2079 959 L2103 958 L2126 957 L2150 956 L2175 955 L2199 954 L2224 953 L2249 952 L2274 951 L2300 950 L2325 949 L2350 948 L2376 948 L2401 948 L2427 948 L2452 948 L2478 949 L2505 950 L2532 951 L2560 953 L2589 956 L2618 959 L2647 962 L2676 965 L2706 965 L2737 965 L2767 964 L2797 961 L2835 947 M144 996 L147 1001 L162 1005 L177 1008 L192 1011 L208 1013 L223 1014 L237 1015 L252 1017 L267 1019 L281 1021 L296 1023 L311 1025 L325 1027 L340 1030 L354 1032 L370 1034 L385 1036 L400 1039 L416 1041 L432 1044 L449 1046 L467 1049 L486 1052 L505 1055 L523 1058 L542 1061 L561 1063 L581 1066 L600 1067 L619 1067 L639 1066 L659 1066 L678 1065 L699 1064 L719 1063 L739 1062 L759 1061 L779 1060 L799 1059 L820 1057 L840 1056 L860 1054 L880 1052 L901 1049 L921 1048 L941 1046 L962 1044 L983 1043 L1004 1041 L1025 1040 L1046 1038 L1067 1037 L1088 1036 L1109 1034 L1131 1033 L1153 1032 L1174 1030 L1196 1029 L1218 1027 L1240 1025 L1261 1024 L1283 1022 L1305 1020 L1327 1018 L1349 1017 L1371 1015 L1393 1013 L1415 1011 L1437 1010 L1459 1008 L1482 1006 L1504 1005 L1526 1003 L1548 1001 L1571 1000 L1593 998 L1615 997 L1638 995 L1660 994 L1683 992 L1706 990 L1728 989 L1751 987 L1774 986 L1797 984 L1820 983 L1844 982 L1867 980 L1890 979 L1914 977 L1937 976 L1961 975 L1985 974 L2009 972 L2033 971 L2057 970 L2081 969 L2105 968 L2129 967 L2154 966 L2179 964 L2204 963 L2230 962 L2256 961 L2281 960 L2307 958 L2333 957 L2359 956 L2385 956 L2411 955 L2437 955 L2464 956 L2492 956 L2519 957 L2548 958 L2578 960 L2608 963 L2638 966 L2669 969 L2700 969 L2732 968 L2763 966 L2795 963 L2835 947 M144 996 L145 999 L158 1006 L172 1009 L187 1011 L202 1014 L216 1015 L230 1017 L244 1018 L257 1020 L271 1022 L285 1024 L298 1026 L312 1029 L326 1031 L339 1033 L354 1036 L368 1038 L383 1041 L398 1043 L413 1046 L429 1048 L447 1051 L465 1055 L484 1058 L502 1061 L521 1064 L539 1067 L558 1070 L577 1073 L596 1075 L616 1075 L635 1074 L655 1074 L675 1074 L695 1073 L715 1072 L735 1071 L755 1070 L774 1069 L794 1068 L814 1067 L834 1065 L854 1064 L874 1062 L895 1059 L915 1058 L935 1056 L956 1054 L977 1053 L998 1051 L1019 1050 L1040 1049 L1061 1048 L1082 1046 L1104 1045 L1125 1044 L1147 1042 L1169 1041 L1191 1039 L1212 1038 L1234 1036 L1256 1035 L1278 1033 L1300 1031 L1322 1029 L1344 1028 L1366 1026 L1388 1024 L1410 1022 L1433 1021 L1455 1019 L1477 1017 L1500 1016 L1522 1014 L1544 1012 L1567 1011 L1589 1009 L1612 1007 L1634 1006 L1657 1004 L1680 1003 L1703 1001 L1726 999 L1749 998 L1772 996 L1795 995 L1819 993 L1842 992 L1866 990 L1890 989 L1914 988 L1938 986 L1962 985 L1986 983 L2010 982 L2034 981 L2058 980 L2083 978 L2107 977 L2133 976 L2158 974 L2184 973 L2210 972 L2236 970 L2262 969 L2289 968 L2315 966 L2342 965 L2368 964 L2395 963 L2422 963 L2449 963 L2478 963 L2506 963 L2536 964 L2567 965 L2598 968 L2630 970 L2661 973 L2694 973 L2727 971 L2759 969 L2792 965 L2835 947 M144 996 L144 996 L155 1005 L168 1009 L182 1012 L196 1014 L209 1016 L222 1018 L235 1019 L248 1021 L261 1023 L273 1025 L286 1027 L299 1029 L312 1032 L324 1034 L338 1036 L351 1039 L365 1041 L380 1044 L394 1047 L410 1050 L427 1053 L445 1056 L463 1059 L481 1063 L499 1067 L517 1070 L536 1073 L555 1076 L573 1079 L592 1081 L611 1082 L631 1082 L651 1082 L671 1081 L691 1081 L710 1080 L730 1079 L750 1078 L769 1078 L789 1076 L809 1075 L829 1074 L849 1073 L869 1071 L889 1069 L909 1067 L930 1065 L950 1064 L971 1062 L992 1061 L1013 1060 L1034 1058 L1055 1057 L1077 1056 L1098 1055 L1120 1053 L1142 1052 L1164 1051 L1186 1049 L1207 1048 L1229 1046 L1251 1045 L1273 1043 L1295 1041 L1317 1040 L1339 1038 L1361 1036 L1384 1034 L1406 1032 L1428 1031 L1451 1029 L1473 1027 L1496 1026 L1518 1024 L1541 1022 L1563 1021 L1586 1019 L1608 1017 L1631 1016 L1654 1014 L1677 1012 L1701 1011 L1724 1009 L1747 1008 L1771 1006 L1794 1004 L1818 1003 L1842 1001 L1866 1000 L1890 998 L1914 997 L1939 995 L1963 994 L1987 992 L2012 991 L2036 990 L2061 988 L2086 987 L2112 985 L2138 984 L2164 983 L2191 981 L2217 980 L2244 978 L2271 977 L2298 975 L2325 973 L2352 972 L2379 971 L2407 970 L2435 969 L2464 969 L2493 969 L2524 969 L2556 970 L2588 972 L2621 974 L2654 976 L2688 976 L2722 974 L2756 971 L2790 967 L2835 947 M144 996 L144 996 L152 1005 L164 1008 L178 1012 L191 1014 L203 1017 L215 1018 L227 1020 L239 1021 L251 1023 L263 1025 L274 1027 L286 1029 L298 1032 L310 1034 L322 1036 L335 1039 L349 1042 L362 1044 L376 1047 L391 1050 L408 1053 L425 1057 L443 1060 L460 1064 L478 1068 L496 1071 L514 1075 L533 1078 L551 1081 L570 1085 L589 1087 L608 1089 L628 1089 L648 1088 L667 1088 L687 1088 L706 1087 L725 1087 L745 1086 L765 1085 L784 1084 L804 1083 L824 1082 L844 1081 L864 1079 L884 1077 L904 1075 L925 1074 L945 1072 L966 1071 L987 1069 L1008 1068 L1029 1067 L1051 1066 L1072 1065 L1094 1063 L1116 1062 L1138 1061 L1160 1060 L1181 1058 L1203 1057 L1225 1055 L1247 1054 L1269 1052 L1291 1050 L1313 1049 L1336 1047 L1358 1045 L1380 1043 L1403 1042 L1425 1040 L1448 1038 L1470 1036 L1493 1035 L1516 1033 L1538 1031 L1561 1030 L1583 1028 L1606 1026 L1630 1025 L1653 1023 L1676 1021 L1699 1020 L1723 1018 L1747 1016 L1770 1015 L1794 1013 L1819 1011 L1843 1010 L1867 1008 L1892 1007 L1916 1005 L1941 1004 L1966 1002 L1990 1001 L2015 999 L2040 998 L2066 996 L2091 994 L2118 993 L2145 991 L2172 990 L2199 988 L2226 986 L2254 985 L2281 983 L2309 981 L2337 979 L2364 978 L2392 977 L2421 976 L2451 975 L2481 974 L2512 974 L2545 975 L2579 976 L2612 978 L2647 980 L2682 980 L2717 977 L2752 974 L2788 969 L2835 947 M144 996 L144 996 L149 1004 L160 1008 L173 1012 L185 1014 L197 1017 L208 1019 L219 1020 L230 1022 L241 1023 L252 1025 L263 1027 L274 1029 L285 1031 L296 1033 L308 1036 L320 1039 L333 1041 L345 1044 L359 1047 L373 1050 L390 1053 L406 1057 L424 1060 L441 1064 L458 1068 L476 1072 L494 1076 L512 1079 L530 1083 L549 1086 L567 1090 L586 1093 L606 1094 L626 1095 L645 1095 L664 1094 L684 1094 L703 1094 L722 1093 L741 1093 L761 1092 L780 1091 L800 1090 L820 1089 L840 1088 L860 1087 L880 1084 L900 1083 L921 1081 L942 1080 L963 1078 L984 1077 L1005 1076 L1026 1075 L1048 1073 L1069 1072 L1091 1071 L1113 1070 L1135 1069 L1157 1068 L1179 1066 L1201 1065 L1223 1063 L1245 1062 L1267 1060 L1289 1059 L1311 1057 L1334 1055 L1356 1053 L1379 1052 L1401 1050 L1424 1048 L1446 1046 L1469 1044 L1492 1043 L1514 1041 L1537 1039 L1560 1038 L1583 1036 L1606 1034 L1630 1032 L1653 1031 L1676 1029 L1700 1027 L1724 1026 L1748 1024 L1772 1022 L1797 1021 L1821 1019 L1845 1017 L1870 1016 L1895 1014 L1920 1012 L1945 1011 L1970 1009 L1995 1008 L2020 1006 L2046 1004 L2072 1003 L2099 1001 L2127 999 L2154 998 L2182 996 L2209 994 L2237 992 L2265 991 L2294 989 L2322 987 L2350 985 L2378 983 L2408 982 L2439 980 L2469 980 L2501 979 L2535 979 L2570 980 L2605 982 L2640 983 L2676 983 L2712 980 L2748 976 L2786 970 L2835 947 M144 996 L144 996 L146 1002 L157 1008 L169 1011 L180 1014 L191 1016 L202 1019 L212 1020 L222 1022 L233 1023 L243 1025 L253 1026 L263 1028 L273 1030 L284 1033 L295 1035 L306 1038 L318 1040 L330 1043 L343 1046 L357 1049 L373 1052 L389 1056 L406 1060 L423 1064 L440 1067 L458 1071 L475 1075 L493 1080 L511 1084 L529 1087 L548 1091 L567 1095 L586 1098 L606 1100 L625 1100 L644 1100 L663 1100 L682 1100 L701 1100 L720 1099 L739 1099 L759 1098 L778 1097 L798 1096 L818 1095 L838 1094 L858 1093 L878 1091 L899 1089 L919 1087 L940 1086 L961 1085 L982 1084 L1004 1082 L1025 1081 L1047 1080 L1069 1079 L1090 1078 L1112 1077 L1134 1076 L1156 1075 L1178 1073 L1200 1072 L1222 1070 L1244 1069 L1267 1067 L1289 1066 L1311 1064 L1334 1062 L1356 1060 L1379 1059 L1402 1057 L1424 1055 L1447 1053 L1470 1051 L1492 1050 L1515 1048 L1538 1046 L1561 1045 L1585 1043 L1608 1041 L1632 1039 L1655 1038 L1679 1036 L1703 1034 L1727 1032 L1752 1031 L1776 1029 L1801 1027 L1826 1025 L1850 1024 L1876 1022 L1901 1020 L1926 1019 L1951 1017 L1977 1015 L2002 1014 L2028 1012 L2055 1010 L2082 1008 L2110 1007 L2138 1005 L2166 1003 L2194 1001 L2222 999 L2251 997 L2279 995 L2308 993 L2337 991 L2365 989 L2396 987 L2427 986 L2458 985 L2491 984 L2526 983 L2562 983 L2597 985 L2633 986 L2671 986 L2708 983 L2745 978 L2783 972 L2835 947 M144 996 L144 996 L144 996 L154 1007 L165 1011 L176 1014 L186 1016 L196 1018 L206 1020 L215 1022 L225 1023 L234 1025 L244 1026 L253 1028 L263 1030 L273 1032 L283 1034 L294 1037 L305 1039 L317 1042 L328 1045 L342 1048 L358 1051 L374 1055 L390 1059 L407 1063 L424 1067 L441 1071 L459 1075 L476 1079 L494 1083 L512 1087 L530 1091 L549 1095 L568 1099 L588 1102 L607 1104 L626 1104 L644 1105 L663 1105 L682 1105 L701 1104 L720 1104 L740 1104 L759 1103 L778 1102 L798 1101 L818 1101 L838 1100 L858 1098 L879 1096 L899 1094 L920 1093 L941 1091 L962 1090 L983 1089 L1005 1088 L1027 1087 L1048 1086 L1070 1085 L1092 1084 L1114 1083 L1136 1081 L1158 1080 L1180 1079 L1202 1078 L1224 1076 L1247 1075 L1269 1073 L1291 1071 L1314 1070 L1337 1068 L1359 1066 L1382 1064 L1405 1063 L1427 1061 L1450 1059 L1473 1057 L1496 1055 L1519 1054 L1542 1052 L1566 1050 L1589 1048 L1613 1047 L1637 1045 L1660 1043 L1685 1041 L1709 1040 L1734 1038 L1758 1036 L1783 1034 L1808 1032 L1833 1031 L1858 1029 L1884 1027 L1909 1025 L1935 1024 L1960 1022 L1986 1020 L2012 1019 L2039 1017 L2067 1015 L2095 1013 L2123 1011 L2152 1009 L2180 1007 L2209 1005 L2238 1003 L2267 1001 L2296 999 L2325 996 L2354 994 L2385 992 L2417 990 L2449 989 L2482 988 L2518 987 L2554 987 L2591 988 L2628 988 L2666 989 L2704 985 L2743 980 L2782 973 L2835 947 M144 996 L144 996 L144 996 L151 1006 L162 1010 L172 1013 L182 1016 L191 1018 L200 1020 L209 1022 L218 1023 L227 1024 L236 1026 L245 1027 L254 1029 L263 1031 L273 1033 L283 1035 L294 1038 L305 1041 L316 1043 L329 1047 L345 1050 L361 1054 L377 1058 L394 1062 L410 1066 L427 1070 L445 1074 L462 1078 L480 1083 L497 1087 L515 1091 L534 1095 L553 1099 L572 1103 L591 1106 L610 1108 L629 1108 L647 1108 L666 1108 L685 1108 L704 1108 L723 1108 L743 1108 L762 1107 L781 1106 L801 1106 L821 1105 L841 1104 L862 1102 L882 1100 L903 1098 L924 1097 L945 1096 L966 1095 L988 1093 L1009 1092 L1031 1091 L1053 1090 L1075 1089 L1097 1088 L1119 1087 L1141 1086 L1163 1085 L1185 1084 L1207 1082 L1230 1081 L1252 1079 L1274 1078 L1297 1076 L1320 1074 L1342 1072 L1365 1071 L1388 1069 L1411 1067 L1434 1065 L1456 1063 L1479 1062 L1502 1060 L1526 1058 L1549 1056 L1573 1055 L1597 1053 L1621 1051 L1645 1049 L1669 1047 L1693 1046 L1718 1044 L1743 1042 L1768 1040 L1793 1038 L1818 1036 L1844 1035 L1869 1033 L1895 1031 L1920 1029 L1946 1028 L1972 1026 L1999 1024 L2026 1022 L2054 1020 L2082 1018 L2111 1016 L2140 1014 L2168 1012 L2197 1010 L2227 1008 L2256 1006 L2286 1003 L2315 1001 L2345 999 L2376 996 L2408 994 L2441 993 L2474 991 L2511 990 L2548 989 L2585 990 L2623 991 L2662 991 L2701 987 L2740 981 L2780 974 L2835 947 M144 996 L144 996 L144 996 L149 1005 L159 1010 L170 1013 L179 1015 L187 1017 L196 1019 L204 1021 L213 1023 L222 1024 L230 1026 L238 1027 L247 1028 L255 1030 L265 1032 L274 1034 L285 1037 L296 1040 L307 1042 L319 1045 L335 1049 L350 1053 L367 1057 L383 1061 L399 1065 L416 1069 L433 1073 L450 1077 L468 1082 L485 1086 L503 1091 L522 1095 L541 1099 L560 1103 L579 1107 L597 1110 L616 1111 L635 1111 L653 1111 L672 1112 L691 1111 L710 1111 L729 1111 L749 1111 L768 1110 L788 1109 L808 1109 L828 1108 L848 1107 L868 1105 L889 1103 L910 1101 L931 1100 L952 1099 L974 1098 L996 1097 L1017 1096 L1039 1095 L1061 1094 L1083 1093 L1105 1092 L1127 1091 L1149 1089 L1171 1088 L1194 1087 L1216 1086 L1238 1084 L1261 1083 L1283 1081 L1306 1079 L1329 1077 L1352 1076 L1375 1074 L1397 1072 L1420 1070 L1443 1068 L1466 1067 L1489 1065 L1513 1063 L1536 1061 L1560 1059 L1584 1058 L1608 1056 L1632 1054 L1656 1052 L1681 1050 L1706 1048 L1730 1047 L1755 1045 L1781 1043 L1806 1041 L1832 1039 L1858 1037 L1883 1036 L1909 1034 L1935 1032 L1961 1030 L1988 1028 L2015 1027 L2043 1025 L2072 1023 L2101 1020 L2130 1018 L2159 1016 L2188 1014 L2218 1012 L2248 1010 L2277 1007 L2307 1005 L2337 1002 L2368 1000 L2401 997 L2434 995 L2468 994 L2505 993 L2543 992 L2581 992 L2619 993 L2659 992 L2698 989 L2738 983 L2779 975 L2835 947 M144 996 L144 996 L144 996 L147 1004 L158 1009 L167 1012 L176 1015 L185 1017 L193 1019 L201 1021 L209 1023 L217 1024 L225 1025 L233 1027 L241 1028 L250 1030 L259 1032 L268 1034 L278 1036 L289 1039 L300 1041 L312 1044 L327 1048 L343 1052 L359 1056 L375 1060 L391 1064 L408 1068 L425 1073 L442 1077 L459 1081 L477 1086 L494 1090 L513 1095 L532 1099 L551 1103 L570 1107 L588 1111 L607 1113 L625 1113 L644 1113 L663 1114 L682 1114 L701 1114 L720 1113 L739 1113 L758 1113 L778 1112 L798 1111 L818 1111 L838 1110 L858 1108 L879 1106 L900 1105 L921 1103 L942 1102 L964 1101 L986 1100 L1007 1099 L1029 1098 L1051 1097 L1073 1096 L1095 1095 L1117 1094 L1139 1093 L1161 1092 L1184 1090 L1206 1089 L1228 1088 L1251 1086 L1273 1084 L1296 1083 L1319 1081 L1342 1079 L1365 1077 L1388 1076 L1410 1074 L1433 1072 L1456 1070 L1480 1068 L1503 1067 L1527 1065 L1550 1063 L1574 1061 L1598 1059 L1622 1058 L1647 1056 L1672 1054 L1696 1052 L1721 1050 L1746 1048 L1772 1046 L1797 1044 L1823 1043 L1849 1041 L1875 1039 L1901 1037 L1927 1035 L1953 1033 L1980 1032 L2007 1030 L2035 1028 L2064 1026 L2093 1023 L2123 1021 L2152 1019 L2181 1017 L2211 1015 L2241 1012 L2271 1010 L2301 1007 L2331 1005 L2363 1002 L2396 1000 L2429 998 L2464 996 L2501 994 L2539 993 L2578 993 L2616 994 L2656 994 L2697 990 L2737 984 L2778 976 L2835 947 M144 996 L144 996 L144 996 L146 1004 L156 1009 L166 1012 L175 1015 L183 1017 L191 1019 L199 1021 L207 1022 L215 1024 L222 1025 L230 1026 L238 1028 L246 1029 L255 1031 L264 1033 L274 1036 L285 1038 L295 1041 L308 1044 L323 1048 L338 1052 L354 1056 L370 1060 L386 1064 L403 1068 L420 1072 L437 1076 L454 1081 L471 1085 L489 1090 L507 1095 L527 1099 L546 1103 L564 1107 L583 1111 L601 1113 L620 1114 L638 1115 L657 1115 L676 1115 L695 1115 L714 1115 L733 1115 L752 1114 L772 1114 L792 1113 L812 1112 L832 1112 L852 1110 L873 1109 L894 1107 L915 1105 L936 1104 L958 1103 L979 1102 L1001 1100 L1023 1099 L1045 1099 L1067 1098 L1089 1097 L1111 1096 L1133 1095 L1155 1093 L1177 1092 L1200 1091 L1222 1090 L1245 1088 L1267 1087 L1290 1085 L1313 1083 L1336 1081 L1359 1080 L1382 1078 L1405 1076 L1427 1074 L1450 1072 L1474 1070 L1497 1069 L1521 1067 L1545 1065 L1569 1063 L1593 1061 L1617 1060 L1641 1058 L1666 1056 L1691 1054 L1716 1052 L1741 1050 L1766 1048 L1792 1046 L1818 1045 L1844 1043 L1870 1041 L1896 1039 L1922 1037 L1948 1035 L1975 1033 L2002 1032 L2031 1030 L2060 1027 L2089 1025 L2118 1023 L2148 1021 L2177 1019 L2207 1016 L2237 1014 L2267 1012 L2297 1009 L2328 1006 L2360 1004 L2393 1001 L2426 999 L2461 997 L2499 996 L2537 994 L2576 994 L2615 995 L2655 994 L2695 991 L2736 984 L2777 976 L2835 947" fill="none" stroke="#250700" stroke-width="1.4" opacity="0.72"/><path d="M187 973 L187 974 L187 975 L187 976 L187 976 L187 977 L187 978 L187 980 L187 981 L187 982 L187 984 L187 985 L187 987 L187 989 L186 990 L186 992 L185 994 L184 996 L183 997 L181 999 L179 1000 L177 1002 L174 1003 L171 1004 L168 1005 L165 1005 L162 1005 L158 1006 L155 1005 L152 1005 L149 1004 L146 1002 L144 996 M230 959 L230 960 L230 961 L230 962 L230 963 L230 964 L230 966 L230 967 L230 969 L230 971 L230 973 L230 975 L230 977 L230 980 L230 982 L230 985 L229 988 L228 990 L226 993 L224 996 L221 998 L218 1001 L215 1003 L211 1005 L207 1007 L202 1009 L197 1010 L192 1011 L187 1011 L182 1012 L178 1012 L173 1012 L169 1011 L165 1011 L162 1010 L159 1010 L158 1009 L156 1009 M274 945 L274 946 L274 946 L274 947 L274 948 L274 950 L274 952 L274 954 L274 956 L274 958 L274 961 L274 964 L274 967 L274 970 L274 973 L273 976 L273 980 L272 983 L270 987 L268 991 L265 994 L262 997 L258 1001 L253 1003 L248 1006 L242 1009 L236 1011 L229 1013 L223 1014 L216 1015 L209 1016 L203 1017 L197 1017 L191 1016 L186 1016 L182 1016 L179 1015 L176 1015 L175 1015 L174 1015 M317 931 L317 932 L317 933 L317 934 L317 935 L317 937 L317 939 L317 942 L317 945 L317 948 L317 951 L317 955 L317 959 L317 962 L317 967 L317 971 L316 975 L315 980 L313 984 L310 989 L306 993 L302 998 L297 1001 L291 1005 L284 1008 L277 1011 L269 1013 L261 1015 L252 1017 L244 1018 L235 1019 L227 1020 L219 1020 L212 1020 L206 1020 L200 1020 L196 1019 L193 1019 L191 1019 L190 1019 M361 917 L361 918 L361 919 L361 920 L361 922 L361 925 L361 927 L361 930 L361 934 L361 937 L361 942 L361 946 L361 950 L361 955 L360 960 L360 966 L359 971 L357 976 L355 982 L352 987 L347 993 L342 998 L336 1003 L328 1007 L320 1011 L311 1014 L302 1017 L292 1019 L281 1021 L271 1022 L261 1023 L251 1023 L241 1023 L233 1023 L225 1023 L218 1023 L213 1023 L209 1023 L207 1022 L206 1022 M404 903 L404 904 L404 905 L404 907 L404 909 L404 912 L404 915 L404 918 L404 922 L404 927 L404 932 L404 937 L404 942 L404 948 L404 954 L403 960 L402 966 L400 973 L397 979 L393 986 L388 992 L382 998 L375 1004 L366 1009 L356 1014 L346 1018 L335 1021 L323 1023 L311 1025 L298 1026 L286 1027 L274 1027 L263 1027 L253 1026 L244 1026 L236 1026 L230 1026 L225 1025 L222 1025 L222 1025 M447 888 L447 889 L447 891 L447 893 L447 896 L447 899 L447 902 L447 906 L447 911 L447 916 L447 922 L447 928 L447 934 L447 940 L447 947 L447 954 L445 962 L443 969 L440 977 L435 984 L429 992 L422 999 L413 1005 L404 1011 L393 1016 L380 1021 L367 1025 L354 1028 L340 1030 L326 1031 L312 1032 L298 1032 L285 1031 L273 1030 L263 1030 L254 1029 L247 1028 L241 1028 L238 1028 L237 1028 M491 875 L491 877 L491 878 L491 881 L491 884 L491 887 L491 891 L491 896 L491 901 L491 907 L491 913 L491 920 L491 927 L491 934 L491 942 L490 950 L489 958 L486 966 L482 975 L477 983 L470 991 L462 999 L453 1006 L441 1013 L429 1019 L415 1024 L401 1028 L385 1032 L370 1034 L354 1036 L338 1036 L322 1036 L308 1036 L295 1035 L283 1034 L273 1033 L265 1032 L259 1032 L255 1031 L254 1031 M534 864 L534 865 L534 867 L534 869 L534 873 L534 877 L534 881 L534 886 L534 892 L534 898 L534 905 L534 913 L534 920 L534 928 L534 937 L533 946 L532 955 L529 964 L525 973 L519 983 L512 992 L503 1000 L492 1008 L480 1016 L466 1022 L451 1028 L435 1032 L418 1036 L400 1039 L383 1041 L365 1041 L349 1042 L333 1041 L318 1040 L305 1039 L294 1038 L285 1037 L278 1036 L274 1036 L273 1035 M578 853 L578 854 L578 856 L578 859 L578 862 L578 867 L578 872 L578 877 L578 883 L578 890 L578 898 L578 906 L578 914 L578 923 L577 932 L577 942 L575 952 L572 962 L567 972 L561 982 L553 992 L543 1001 L532 1010 L518 1018 L504 1025 L487 1032 L470 1037 L451 1041 L432 1044 L413 1046 L394 1047 L376 1047 L359 1047 L343 1046 L328 1045 L316 1043 L307 1042 L300 1041 L295 1041 L294 1040 M621 842 L621 844 L621 846 L621 849 L621 852 L621 857 L621 862 L621 868 L621 875 L621 882 L621 890 L621 898 L621 907 L621 916 L621 926 L620 936 L618 947 L615 958 L610 969 L604 980 L595 991 L585 1002 L573 1012 L559 1020 L543 1028 L525 1036 L507 1041 L488 1046 L467 1049 L447 1051 L427 1053 L408 1053 L390 1053 L373 1052 L358 1051 L345 1050 L335 1049 L327 1048 L323 1048 L321 1047 M664 832 L664 833 L664 836 L664 839 L664 842 L664 847 L664 853 L664 859 L664 866 L664 873 L664 881 L664 890 L664 899 L664 909 L664 919 L663 930 L661 941 L658 952 L653 964 L646 976 L638 987 L627 999 L614 1011 L599 1022 L583 1031 L565 1039 L546 1046 L526 1051 L505 1055 L484 1058 L463 1059 L443 1060 L424 1060 L406 1060 L390 1059 L377 1058 L367 1057 L359 1056 L354 1056 L352 1055 M708 822 L708 823 L708 826 L708 829 L708 833 L708 838 L708 843 L708 850 L708 857 L708 865 L708 873 L708 882 L708 892 L708 902 L708 912 L707 923 L705 935 L701 946 L696 958 L689 971 L680 983 L669 995 L656 1007 L641 1019 L624 1030 L605 1041 L585 1050 L564 1056 L542 1061 L521 1064 L499 1067 L478 1068 L458 1068 L440 1067 L424 1067 L410 1066 L399 1065 L391 1064 L386 1064 L385 1063 M751 812 L751 814 L751 816 L751 819 L751 823 L751 828 L751 834 L751 841 L751 848 L751 856 L751 865 L751 874 L751 884 L751 894 L751 905 L750 917 L748 928 L745 940 L739 953 L732 966 L723 978 L711 991 L697 1004 L682 1016 L664 1028 L645 1039 L625 1049 L603 1059 L581 1066 L558 1070 L536 1073 L514 1075 L494 1076 L475 1075 L459 1075 L445 1074 L433 1073 L425 1073 L420 1072 L418 1072 M795 802 L795 804 L795 806 L795 810 L795 814 L795 819 L795 825 L795 832 L795 839 L795 848 L795 857 L795 866 L795 876 L795 887 L795 898 L794 910 L791 922 L788 934 L782 947 L775 960 L765 973 L753 987 L739 1000 L723 1013 L705 1025 L686 1037 L664 1048 L642 1058 L619 1067 L596 1075 L573 1079 L551 1081 L530 1083 L511 1084 L494 1083 L480 1083 L468 1082 L459 1081 L454 1081 L452 1081 M838 793 L838 795 L838 797 L838 801 L838 805 L838 810 L838 816 L838 823 L838 831 L838 840 L838 849 L838 859 L838 869 L838 880 L838 891 L837 903 L835 916 L831 928 L825 942 L818 955 L808 968 L796 982 L781 995 L765 1009 L747 1022 L726 1034 L705 1045 L682 1056 L659 1066 L635 1074 L611 1082 L589 1087 L567 1090 L548 1091 L530 1091 L515 1091 L503 1091 L494 1090 L489 1090 L487 1090 M881 784 L881 786 L881 788 L881 792 L881 796 L881 802 L881 808 L881 815 L881 823 L881 831 L881 841 L881 851 L881 861 L881 872 L881 884 L880 896 L878 909 L874 922 L869 935 L861 949 L851 963 L838 977 L824 991 L807 1005 L788 1018 L768 1031 L746 1043 L723 1054 L699 1064 L675 1074 L651 1082 L628 1089 L606 1094 L586 1098 L568 1099 L553 1099 L541 1099 L532 1099 L527 1099 L525 1099 M925 775 L925 776 L925 777 L925 780 L925 783 L925 788 L925 793 L925 800 L925 807 L925 815 L925 824 L925 833 L925 843 L925 854 L925 865 L925 877 L924 889 L921 902 L918 915 L912 929 L904 943 L894 957 L881 971 L866 986 L849 1000 L830 1014 L809 1027 L787 1040 L764 1051 L739 1062 L715 1072 L691 1081 L667 1088 L645 1095 L625 1100 L607 1104 L591 1106 L579 1107 L570 1107 L564 1107 L562 1107 M968 767 L968 768 L968 769 L968 772 L968 775 L968 780 L968 785 L968 792 L968 799 L968 807 L968 816 L968 826 L968 836 L968 847 L968 859 L968 871 L967 883 L965 896 L961 910 L955 923 L947 937 L937 952 L924 966 L909 981 L891 995 L872 1009 L851 1023 L828 1036 L804 1049 L779 1060 L755 1070 L730 1079 L706 1087 L684 1094 L663 1100 L644 1105 L629 1108 L616 1111 L607 1113 L601 1113 L599 1114 M1012 759 L1012 760 L1012 761 L1012 764 L1012 768 L1012 772 L1012 778 L1012 784 L1012 792 L1012 800 L1012 809 L1012 819 L1012 830 L1012 841 L1012 852 L1012 865 L1011 877 L1008 891 L1004 904 L998 918 L990 932 L979 947 L966 961 L951 976 L934 990 L914 1004 L892 1018 L869 1032 L845 1046 L820 1057 L794 1068 L769 1078 L745 1086 L722 1093 L701 1100 L682 1105 L666 1108 L653 1111 L644 1113 L638 1115 L636 1115 M1055 752 L1055 753 L1055 754 L1055 757 L1055 760 L1055 765 L1055 771 L1055 778 L1055 785 L1055 794 L1055 803 L1055 813 L1055 823 L1055 835 L1055 847 L1055 859 L1054 872 L1052 885 L1047 899 L1041 913 L1033 928 L1022 942 L1009 957 L994 972 L976 986 L956 1000 L934 1014 L910 1028 L885 1041 L860 1054 L834 1065 L809 1075 L784 1084 L761 1092 L739 1099 L720 1104 L704 1108 L691 1111 L682 1114 L676 1115 L674 1115 M1099 745 L1099 746 L1099 747 L1099 750 L1099 754 L1099 758 L1099 764 L1099 771 L1099 779 L1099 787 L1099 797 L1099 807 L1099 818 L1099 829 L1099 841 L1098 854 L1097 867 L1095 880 L1091 894 L1085 909 L1076 923 L1065 938 L1052 953 L1036 967 L1018 982 L998 996 L975 1010 L951 1024 L926 1037 L901 1049 L874 1062 L849 1073 L824 1082 L800 1090 L778 1097 L759 1103 L743 1108 L729 1111 L720 1113 L714 1115 L712 1115 M1142 739 L1142 739 L1142 741 L1142 743 L1142 747 L1142 752 L1142 758 L1142 765 L1142 773 L1142 781 L1142 791 L1142 801 L1142 812 L1142 824 L1142 836 L1142 849 L1141 862 L1138 875 L1134 890 L1128 904 L1119 919 L1108 934 L1095 949 L1079 964 L1060 978 L1040 993 L1017 1007 L993 1021 L968 1034 L941 1046 L915 1058 L889 1069 L864 1079 L840 1088 L818 1095 L798 1101 L781 1106 L768 1110 L758 1113 L752 1114 L750 1115 M1185 733 L1185 733 L1185 735 L1185 738 L1185 741 L1185 746 L1185 752 L1185 759 L1185 767 L1185 776 L1185 785 L1185 796 L1185 807 L1185 818 L1185 831 L1185 844 L1184 857 L1182 871 L1177 885 L1171 900 L1162 915 L1151 930 L1138 945 L1121 960 L1103 975 L1082 989 L1059 1004 L1035 1017 L1009 1030 L983 1043 L956 1054 L930 1065 L904 1075 L880 1084 L858 1093 L838 1100 L821 1105 L808 1109 L798 1111 L792 1113 L790 1114 M1229 727 L1229 728 L1229 729 L1229 732 L1229 736 L1229 741 L1229 747 L1229 754 L1229 762 L1229 771 L1229 780 L1229 791 L1229 802 L1229 814 L1229 826 L1229 839 L1228 853 L1225 866 L1221 881 L1214 896 L1206 911 L1194 926 L1181 941 L1164 956 L1146 971 L1125 986 L1102 1000 L1077 1014 L1051 1027 L1025 1040 L998 1051 L971 1062 L945 1072 L921 1081 L899 1089 L879 1096 L862 1102 L848 1107 L838 1110 L832 1112 L830 1112 M1272 722 L1272 723 L1272 724 L1272 727 L1272 731 L1272 736 L1272 742 L1272 749 L1272 757 L1272 766 L1272 775 L1272 786 L1272 797 L1272 809 L1272 822 L1272 835 L1271 848 L1268 862 L1264 877 L1258 891 L1249 907 L1238 922 L1224 937 L1207 953 L1189 968 L1168 983 L1144 997 L1120 1011 L1094 1025 L1067 1037 L1040 1049 L1013 1060 L987 1069 L963 1078 L940 1086 L920 1093 L903 1098 L889 1103 L879 1106 L873 1109 L871 1109 M1316 717 L1316 718 L1316 720 L1316 722 L1316 726 L1316 731 L1316 737 L1316 744 L1316 752 L1316 761 L1316 771 L1316 782 L1316 793 L1316 805 L1316 817 L1315 830 L1314 844 L1312 858 L1307 873 L1301 887 L1292 903 L1281 918 L1267 933 L1251 949 L1232 964 L1211 979 L1187 994 L1162 1008 L1136 1022 L1109 1034 L1082 1046 L1055 1057 L1029 1067 L1005 1076 L982 1084 L962 1090 L945 1096 L931 1100 L921 1103 L915 1105 L913 1106 M1359 713 L1359 714 L1359 716 L1359 718 L1359 722 L1359 727 L1359 733 L1359 740 L1359 748 L1359 757 L1359 767 L1359 778 L1359 789 L1359 801 L1359 814 L1359 827 L1358 840 L1355 854 L1351 869 L1344 884 L1336 899 L1324 914 L1310 930 L1294 945 L1275 960 L1254 976 L1231 991 L1206 1005 L1179 1019 L1153 1032 L1125 1044 L1098 1055 L1072 1065 L1048 1073 L1025 1081 L1005 1088 L988 1093 L974 1098 L964 1101 L958 1103 L956 1103 M1402 710 L1402 711 L1402 712 L1402 715 L1402 719 L1402 724 L1402 730 L1402 737 L1402 745 L1402 754 L1402 764 L1402 774 L1402 786 L1402 798 L1402 810 L1402 823 L1401 837 L1399 851 L1394 865 L1388 880 L1379 895 L1368 910 L1354 926 L1337 941 L1318 957 L1297 972 L1274 987 L1249 1002 L1223 1015 L1196 1029 L1169 1041 L1142 1052 L1116 1062 L1091 1071 L1069 1079 L1048 1086 L1031 1091 L1017 1096 L1007 1099 L1001 1100 L999 1101 M1446 707 L1446 708 L1446 709 L1446 712 L1446 716 L1446 721 L1446 727 L1446 734 L1446 742 L1446 751 L1446 761 L1446 771 L1446 782 L1446 794 L1446 807 L1446 820 L1445 834 L1442 848 L1438 862 L1431 877 L1422 892 L1411 907 L1397 922 L1381 938 L1362 953 L1341 968 L1318 983 L1293 998 L1267 1012 L1240 1025 L1212 1038 L1186 1049 L1160 1060 L1135 1069 L1112 1077 L1092 1084 L1075 1089 L1061 1094 L1051 1097 L1045 1099 L1043 1099 M1489 704 L1489 705 L1489 706 L1489 709 L1489 713 L1489 718 L1489 724 L1489 731 L1489 739 L1489 748 L1489 758 L1489 768 L1489 780 L1489 791 L1489 804 L1489 817 L1488 831 L1485 845 L1481 859 L1475 874 L1466 889 L1455 904 L1441 919 L1424 934 L1405 950 L1384 965 L1361 980 L1336 994 L1310 1008 L1283 1022 L1256 1035 L1229 1046 L1203 1057 L1179 1066 L1156 1075 L1136 1081 L1119 1087 L1105 1092 L1095 1095 L1089 1097 L1087 1097 M1533 702 L1533 702 L1533 704 L1533 707 L1533 710 L1533 715 L1533 721 L1533 728 L1533 736 L1533 745 L1533 755 L1533 765 L1533 777 L1533 789 L1533 801 L1532 814 L1531 828 L1529 842 L1525 856 L1518 871 L1509 886 L1498 901 L1484 916 L1468 931 L1449 946 L1428 962 L1405 976 L1380 991 L1354 1005 L1327 1018 L1300 1031 L1273 1043 L1247 1054 L1223 1063 L1200 1072 L1180 1079 L1163 1085 L1149 1089 L1139 1093 L1133 1095 L1131 1095 M1576 699 L1576 700 L1576 701 L1576 704 L1576 708 L1576 713 L1576 719 L1576 726 L1576 734 L1576 743 L1576 752 L1576 763 L1576 774 L1576 786 L1576 798 L1576 811 L1575 825 L1572 839 L1568 853 L1562 868 L1553 883 L1542 898 L1528 913 L1511 928 L1493 943 L1472 958 L1448 973 L1424 987 L1398 1001 L1371 1015 L1344 1028 L1317 1040 L1291 1050 L1267 1060 L1244 1069 L1224 1076 L1207 1082 L1194 1087 L1184 1090 L1177 1092 L1175 1093 M1619 697 L1619 697 L1619 699 L1619 702 L1619 706 L1619 711 L1619 717 L1619 724 L1619 732 L1619 740 L1619 750 L1619 761 L1619 772 L1619 784 L1619 796 L1619 809 L1618 822 L1616 836 L1611 851 L1605 865 L1596 880 L1585 895 L1571 910 L1555 925 L1536 940 L1515 955 L1492 970 L1468 984 L1442 998 L1415 1011 L1388 1024 L1361 1036 L1336 1047 L1311 1057 L1289 1066 L1269 1073 L1252 1079 L1238 1084 L1228 1088 L1222 1090 L1220 1090 M1663 695 L1663 696 L1663 698 L1663 700 L1663 704 L1663 709 L1663 715 L1663 722 L1663 730 L1663 739 L1663 748 L1663 759 L1663 770 L1663 782 L1663 794 L1663 807 L1662 820 L1659 834 L1655 848 L1648 863 L1640 877 L1629 892 L1615 907 L1599 922 L1580 937 L1559 952 L1536 967 L1512 981 L1486 995 L1459 1008 L1433 1021 L1406 1032 L1380 1043 L1356 1053 L1334 1062 L1314 1070 L1297 1076 L1283 1081 L1273 1084 L1267 1087 L1265 1087 M1706 694 L1706 694 L1706 696 L1706 699 L1706 703 L1706 708 L1706 714 L1706 720 L1706 728 L1706 737 L1706 747 L1706 757 L1706 768 L1706 780 L1706 792 L1706 805 L1705 818 L1703 832 L1698 846 L1692 860 L1683 875 L1672 890 L1659 905 L1642 919 L1624 934 L1603 949 L1580 964 L1556 978 L1530 991 L1504 1005 L1477 1017 L1451 1029 L1425 1040 L1401 1050 L1379 1059 L1359 1066 L1342 1072 L1329 1077 L1319 1081 L1313 1083 L1311 1084 M1750 693 L1750 693 L1750 695 L1750 698 L1750 702 L1750 706 L1750 712 L1750 719 L1750 727 L1750 736 L1750 745 L1750 755 L1750 766 L1750 778 L1750 790 L1750 803 L1748 816 L1746 830 L1742 844 L1735 858 L1727 873 L1716 887 L1702 902 L1686 917 L1668 932 L1647 946 L1625 961 L1600 975 L1575 988 L1548 1001 L1522 1014 L1496 1026 L1470 1036 L1446 1046 L1424 1055 L1405 1063 L1388 1069 L1375 1074 L1365 1077 L1359 1080 L1357 1080 M1793 692 L1793 692 L1793 694 L1793 697 L1793 701 L1793 705 L1793 711 L1793 718 L1793 726 L1793 734 L1793 744 L1793 754 L1793 765 L1793 777 L1793 789 L1793 801 L1792 815 L1789 828 L1785 842 L1779 856 L1770 870 L1759 885 L1746 900 L1730 914 L1712 929 L1691 943 L1669 958 L1645 972 L1619 985 L1593 998 L1567 1011 L1541 1022 L1516 1033 L1492 1043 L1470 1051 L1450 1059 L1434 1065 L1420 1070 L1410 1074 L1405 1076 L1403 1077 M1837 691 L1837 692 L1837 693 L1837 696 L1837 700 L1837 704 L1837 710 L1837 717 L1837 725 L1837 733 L1837 743 L1837 753 L1837 764 L1837 775 L1837 787 L1836 800 L1835 813 L1833 826 L1829 840 L1822 854 L1814 868 L1803 883 L1790 897 L1774 912 L1756 926 L1735 941 L1713 955 L1689 969 L1664 982 L1638 995 L1612 1007 L1586 1019 L1561 1030 L1537 1039 L1515 1048 L1496 1055 L1479 1062 L1466 1067 L1456 1070 L1450 1072 L1448 1073 M1880 691 L1880 691 L1880 693 L1880 696 L1880 699 L1880 704 L1880 710 L1880 717 L1880 724 L1880 733 L1880 742 L1880 752 L1880 763 L1880 774 L1880 786 L1880 799 L1879 812 L1876 825 L1872 839 L1866 852 L1858 867 L1847 881 L1834 895 L1818 910 L1800 924 L1780 938 L1757 952 L1734 966 L1709 979 L1683 992 L1657 1004 L1631 1016 L1606 1026 L1583 1036 L1561 1045 L1542 1052 L1526 1058 L1513 1063 L1503 1067 L1497 1069 L1495 1069 M1923 692 L1923 692 L1923 694 L1923 696 L1923 700 L1923 705 L1923 710 L1923 717 L1923 725 L1923 733 L1923 742 L1923 752 L1923 763 L1923 774 L1923 786 L1923 798 L1922 811 L1920 824 L1916 838 L1910 851 L1901 865 L1891 879 L1877 893 L1862 907 L1844 922 L1824 936 L1802 949 L1779 963 L1754 976 L1728 989 L1703 1001 L1677 1012 L1653 1023 L1630 1032 L1608 1041 L1589 1048 L1573 1055 L1560 1059 L1550 1063 L1545 1065 L1543 1066 M1967 693 L1967 693 L1967 695 L1967 697 L1967 701 L1967 706 L1967 711 L1967 718 L1967 725 L1967 734 L1967 743 L1967 753 L1967 763 L1967 774 L1967 786 L1967 798 L1966 811 L1963 824 L1959 837 L1953 850 L1945 864 L1934 878 L1921 892 L1906 906 L1888 919 L1869 933 L1847 947 L1824 960 L1799 973 L1774 986 L1749 998 L1724 1009 L1699 1020 L1676 1029 L1655 1038 L1637 1045 L1621 1051 L1608 1056 L1598 1059 L1593 1061 L1591 1062 M2010 694 L2010 695 L2010 696 L2010 699 L2010 703 L2010 707 L2010 713 L2010 719 L2010 727 L2010 735 L2010 744 L2010 753 L2010 764 L2010 775 L2010 786 L2010 798 L2009 811 L2007 824 L2003 837 L1997 850 L1989 863 L1978 877 L1965 890 L1950 904 L1933 918 L1913 931 L1892 945 L1869 958 L1845 971 L1820 983 L1795 995 L1771 1006 L1747 1016 L1724 1026 L1703 1034 L1685 1041 L1669 1047 L1656 1052 L1647 1056 L1641 1058 L1639 1058 M2054 697 L2054 697 L2054 699 L2054 702 L2054 705 L2054 710 L2054 715 L2054 721 L2054 729 L2054 737 L2054 745 L2054 755 L2054 765 L2054 776 L2054 787 L2053 799 L2052 811 L2050 824 L2046 837 L2040 850 L2032 863 L2022 876 L2010 889 L1995 903 L1978 916 L1958 929 L1937 943 L1915 955 L1891 968 L1867 980 L1842 992 L1818 1003 L1794 1013 L1772 1022 L1752 1031 L1734 1038 L1718 1044 L1706 1048 L1696 1052 L1691 1054 L1689 1055 M2097 700 L2097 700 L2097 702 L2097 704 L2097 708 L2097 712 L2097 718 L2097 724 L2097 731 L2097 739 L2097 748 L2097 757 L2097 767 L2097 778 L2097 789 L2097 800 L2096 812 L2094 825 L2090 837 L2084 850 L2076 863 L2066 876 L2054 889 L2039 902 L2022 915 L2004 928 L1983 941 L1961 953 L1938 966 L1914 977 L1890 989 L1866 1000 L1843 1010 L1821 1019 L1801 1027 L1783 1034 L1768 1040 L1755 1045 L1746 1048 L1741 1050 L1739 1051 M2140 704 L2140 706 L2140 708 L2140 711 L2140 716 L2140 721 L2140 727 L2140 734 L2140 742 L2140 750 L2140 759 L2140 769 L2140 780 L2140 791 L2140 802 L2139 814 L2137 826 L2133 838 L2128 850 L2120 863 L2110 875 L2098 888 L2084 901 L2067 914 L2049 926 L2029 939 L2007 951 L1985 963 L1961 975 L1938 986 L1914 997 L1892 1007 L1870 1016 L1850 1024 L1833 1031 L1818 1036 L1806 1041 L1797 1044 L1792 1046 L1790 1047 M2184 708 L2184 710 L2184 712 L2184 716 L2184 720 L2184 725 L2184 731 L2184 738 L2184 745 L2184 753 L2184 762 L2184 772 L2184 782 L2184 793 L2184 804 L2183 815 L2181 827 L2177 839 L2171 851 L2164 863 L2154 875 L2143 888 L2129 900 L2113 912 L2095 925 L2075 937 L2054 949 L2032 961 L2009 972 L1986 983 L1963 994 L1941 1004 L1920 1012 L1901 1020 L1884 1027 L1869 1033 L1858 1037 L1849 1041 L1844 1043 L1842 1043 M2227 712 L2227 714 L2227 717 L2227 720 L2227 724 L2227 729 L2227 735 L2227 741 L2227 749 L2227 757 L2227 765 L2227 775 L2227 785 L2227 795 L2227 806 L2226 817 L2224 828 L2220 840 L2215 852 L2208 864 L2199 876 L2187 888 L2173 900 L2158 912 L2140 924 L2121 936 L2100 947 L2079 959 L2057 970 L2034 981 L2012 991 L1990 1001 L1970 1009 L1951 1017 L1935 1024 L1920 1029 L1909 1034 L1901 1037 L1896 1039 L1894 1040 M2271 717 L2271 719 L2271 721 L2271 724 L2271 728 L2271 733 L2271 739 L2271 745 L2271 752 L2271 760 L2271 769 L2271 778 L2271 787 L2271 798 L2271 808 L2270 819 L2268 830 L2264 841 L2259 853 L2252 864 L2243 876 L2232 888 L2218 899 L2203 911 L2186 923 L2167 934 L2147 946 L2126 957 L2105 968 L2083 978 L2061 988 L2040 998 L2020 1006 L2002 1014 L1986 1020 L1972 1026 L1961 1030 L1953 1033 L1948 1035 L1946 1036 M2314 723 L2314 725 L2314 727 L2314 730 L2314 734 L2314 739 L2314 744 L2314 750 L2314 757 L2314 765 L2314 773 L2314 782 L2314 791 L2314 801 L2314 811 L2313 822 L2311 832 L2308 843 L2303 854 L2296 865 L2287 876 L2276 888 L2264 899 L2249 910 L2232 922 L2214 933 L2195 944 L2175 955 L2154 966 L2133 976 L2112 985 L2091 994 L2072 1003 L2055 1010 L2039 1017 L2026 1022 L2015 1027 L2007 1030 L2002 1032 L2001 1032 M2357 732 L2357 734 L2357 736 L2357 739 L2357 742 L2357 747 L2357 752 L2357 758 L2357 765 L2357 772 L2357 780 L2357 788 L2357 797 L2357 806 L2357 816 L2357 826 L2355 836 L2351 846 L2347 857 L2340 867 L2332 877 L2321 888 L2309 899 L2295 910 L2279 921 L2262 932 L2244 942 L2224 953 L2204 963 L2184 973 L2164 983 L2145 991 L2127 999 L2110 1007 L2095 1013 L2082 1018 L2072 1023 L2064 1026 L2060 1027 L2058 1028 M2401 743 L2401 744 L2401 746 L2401 749 L2401 753 L2401 757 L2401 762 L2401 767 L2401 774 L2401 780 L2401 788 L2401 796 L2401 804 L2401 813 L2401 822 L2400 832 L2398 841 L2395 851 L2391 861 L2384 870 L2376 880 L2367 890 L2355 900 L2342 910 L2327 920 L2310 930 L2293 941 L2274 951 L2256 961 L2236 970 L2217 980 L2199 988 L2182 996 L2166 1003 L2152 1009 L2140 1014 L2130 1018 L2123 1021 L2118 1023 L2117 1024 M2444 754 L2444 756 L2444 758 L2444 760 L2444 764 L2444 768 L2444 772 L2444 778 L2444 784 L2444 790 L2444 797 L2444 805 L2444 813 L2444 821 L2444 830 L2443 838 L2442 847 L2439 856 L2435 865 L2429 875 L2421 884 L2412 893 L2401 902 L2388 911 L2374 920 L2359 930 L2342 939 L2325 949 L2307 958 L2289 968 L2271 977 L2254 985 L2237 992 L2222 999 L2209 1005 L2197 1010 L2188 1014 L2181 1017 L2177 1019 L2176 1019 M2488 768 L2488 769 L2488 771 L2488 773 L2488 776 L2488 780 L2488 784 L2488 789 L2488 795 L2488 801 L2488 808 L2488 815 L2488 822 L2488 830 L2488 838 L2487 846 L2485 855 L2483 863 L2479 872 L2473 880 L2466 888 L2457 897 L2447 905 L2435 913 L2422 922 L2408 930 L2392 939 L2376 948 L2359 956 L2342 965 L2325 973 L2309 981 L2294 989 L2279 995 L2267 1001 L2256 1006 L2248 1010 L2241 1012 L2237 1014 L2236 1015 M2531 781 L2531 783 L2531 784 L2531 787 L2531 789 L2531 793 L2531 797 L2531 802 L2531 807 L2531 813 L2531 819 L2531 825 L2531 832 L2531 840 L2531 847 L2530 855 L2529 863 L2526 871 L2523 878 L2517 886 L2511 894 L2503 902 L2493 909 L2482 917 L2470 924 L2456 932 L2442 940 L2427 948 L2411 955 L2395 963 L2379 971 L2364 978 L2350 985 L2337 991 L2325 996 L2315 1001 L2307 1005 L2301 1007 L2297 1009 L2296 1010 M2575 798 L2575 799 L2575 801 L2575 803 L2575 806 L2575 809 L2575 813 L2575 817 L2575 822 L2575 827 L2575 833 L2575 839 L2575 845 L2575 852 L2574 859 L2574 866 L2572 873 L2570 880 L2567 887 L2562 893 L2556 900 L2548 907 L2540 914 L2530 921 L2518 928 L2506 935 L2492 942 L2478 949 L2464 956 L2449 963 L2435 969 L2421 976 L2408 982 L2396 987 L2385 992 L2376 996 L2368 1000 L2363 1002 L2360 1004 L2358 1004 M2618 820 L2618 821 L2618 822 L2618 824 L2618 826 L2618 829 L2618 833 L2618 837 L2618 841 L2618 845 L2618 851 L2618 856 L2618 862 L2618 868 L2618 874 L2617 880 L2616 886 L2614 893 L2611 899 L2607 905 L2601 910 L2595 916 L2587 922 L2578 927 L2568 933 L2557 939 L2545 945 L2532 951 L2519 957 L2506 963 L2493 969 L2481 974 L2469 980 L2458 985 L2449 989 L2441 993 L2434 995 L2429 998 L2426 999 L2425 999 M2661 846 L2661 847 L2661 848 L2661 849 L2661 851 L2661 854 L2661 857 L2661 860 L2661 864 L2661 867 L2661 872 L2661 876 L2661 881 L2661 886 L2661 892 L2661 897 L2660 902 L2658 907 L2655 912 L2652 917 L2647 922 L2642 927 L2635 931 L2627 936 L2619 941 L2609 946 L2599 951 L2589 956 L2578 960 L2567 965 L2556 970 L2545 975 L2535 979 L2526 983 L2518 987 L2511 990 L2505 993 L2501 994 L2499 996 L2498 996 M2705 871 L2705 872 L2705 873 L2705 874 L2705 876 L2705 878 L2705 880 L2705 883 L2705 885 L2705 889 L2705 892 L2705 896 L2705 900 L2705 904 L2705 908 L2704 912 L2704 916 L2702 920 L2700 925 L2697 929 L2694 933 L2689 937 L2684 942 L2678 946 L2671 950 L2663 954 L2655 958 L2647 962 L2638 966 L2630 970 L2621 974 L2612 978 L2605 982 L2597 985 L2591 988 L2585 990 L2581 992 L2578 993 L2576 994 L2575 994 M2748 897 L2748 898 L2748 898 L2748 899 L2748 900 L2748 902 L2748 903 L2748 905 L2748 907 L2748 910 L2748 912 L2748 915 L2748 917 L2748 920 L2748 923 L2748 926 L2747 929 L2746 932 L2745 935 L2743 938 L2740 942 L2737 945 L2733 948 L2729 951 L2724 954 L2718 958 L2713 961 L2706 965 L2700 969 L2694 973 L2688 976 L2682 980 L2676 983 L2671 986 L2666 989 L2662 991 L2659 992 L2656 994 L2655 994 M2792 922 L2792 923 L2792 923 L2792 924 L2792 925 L2792 926 L2792 927 L2792 928 L2792 929 L2792 931 L2792 932 L2792 934 L2792 936 L2792 938 L2791 939 L2791 941 L2790 943 L2790 945 L2788 947 L2787 949 L2785 951 L2783 953 L2780 955 L2777 957 L2774 959 L2770 962 L2767 964 L2763 966 L2759 969 L2756 971 L2752 974 L2748 976 L2745 978 L2743 980 L2740 981 L2738 983 L2737 984 L2736 984" fill="none" stroke="#250700" stroke-width="1.4" opacity="0.75"/><path d="M2792 922 L2835 947 M2748 897 L2792 922 L2835 947 M2705 871 L2748 897 L2792 922 L2835 947 M2661 846 L2705 872 L2748 898 L2792 923 L2835 947 M2618 820 L2661 846 L2705 872 L2748 898 L2792 923 L2835 947 M2575 798 L2618 820 L2661 847 L2705 873 L2748 899 L2792 924 L2835 947 M2531 781 L2575 798 L2618 821 L2661 848 L2705 874 L2748 900 L2792 925 L2835 947 M2488 768 L2531 782 L2575 799 L2618 822 L2661 849 L2705 876 L2748 902 L2792 926 L2835 947 M2444 754 L2488 768 L2531 783 L2575 801 L2618 824 L2661 851 L2705 878 L2748 903 L2792 927 L2835 947 M2401 743 L2444 755 L2488 769 L2531 784 L2575 803 L2618 826 L2661 854 L2705 880 L2748 905 L2792 928 L2835 947 M2357 732 L2401 743 L2444 756 L2488 771 L2531 787 L2575 806 L2618 829 L2661 857 L2705 883 L2748 907 L2792 929 L2835 947 M2314 723 L2357 733 L2401 744 L2444 758 L2488 773 L2531 789 L2575 809 L2618 833 L2661 860 L2705 885 L2748 910 L2792 931 L2835 947 M2271 717 L2314 724 L2357 734 L2401 746 L2444 760 L2488 776 L2531 793 L2575 813 L2618 837 L2661 864 L2705 889 L2748 912 L2792 932 L2835 947 M2227 712 L2271 718 L2314 725 L2357 736 L2401 749 L2444 764 L2488 780 L2531 797 L2575 817 L2618 841 L2661 867 L2705 892 L2748 915 L2792 934 L2835 947 M2184 708 L2227 713 L2271 719 L2314 727 L2357 739 L2401 753 L2444 768 L2488 784 L2531 802 L2575 822 L2618 845 L2661 872 L2705 896 L2748 917 L2792 936 L2835 947 M2140 704 L2184 708 L2227 714 L2271 721 L2314 730 L2357 742 L2401 757 L2444 772 L2488 789 L2531 807 L2575 827 L2618 851 L2661 876 L2705 900 L2748 920 L2792 938 L2835 947 M2097 700 L2140 704 L2184 710 L2227 717 L2271 724 L2314 734 L2357 747 L2401 762 L2444 778 L2488 795 L2531 813 L2575 833 L2618 856 L2661 881 L2705 904 L2748 923 L2791 939 L2835 947 M2054 697 L2097 700 L2140 706 L2184 712 L2227 720 L2271 728 L2314 739 L2357 752 L2401 767 L2444 784 L2488 801 L2531 819 L2575 839 L2618 862 L2661 886 L2705 908 L2748 926 L2791 941 L2835 947 M2010 694 L2054 697 L2097 702 L2140 708 L2184 716 L2227 724 L2271 733 L2314 744 L2357 758 L2401 774 L2444 790 L2488 808 L2531 825 L2575 845 L2618 868 L2661 892 L2704 912 L2747 929 L2790 943 L2835 947 M1967 693 L2010 695 L2054 699 L2097 704 L2140 711 L2184 720 L2227 729 L2271 739 L2314 750 L2357 765 L2401 780 L2444 797 L2488 815 L2531 832 L2575 852 L2618 874 L2661 897 L2704 916 L2746 932 L2790 945 L2835 947 M1923 692 L1967 693 L2010 696 L2054 702 L2097 708 L2140 716 L2184 725 L2227 735 L2271 745 L2314 757 L2357 772 L2401 788 L2444 805 L2488 822 L2531 840 L2574 859 L2617 880 L2660 902 L2702 920 L2745 935 L2788 947 L2835 947 M1880 691 L1923 692 L1967 695 L2010 699 L2054 705 L2097 712 L2140 721 L2184 731 L2227 741 L2271 752 L2314 765 L2357 780 L2401 796 L2444 813 L2488 830 L2531 847 L2574 866 L2616 886 L2658 907 L2700 925 L2743 938 L2787 949 L2835 947 M1837 691 L1880 691 L1923 694 L1967 697 L2010 703 L2054 710 L2097 718 L2140 727 L2184 738 L2227 749 L2271 760 L2314 773 L2357 788 L2401 804 L2444 821 L2488 838 L2530 855 L2572 873 L2614 893 L2655 912 L2697 929 L2740 942 L2785 951 L2835 947 M1793 692 L1837 692 L1880 693 L1923 696 L1967 701 L2010 707 L2054 715 L2097 724 L2140 734 L2184 745 L2227 757 L2271 769 L2314 782 L2357 797 L2401 813 L2444 830 L2487 846 L2529 863 L2570 880 L2611 899 L2652 917 L2694 933 L2737 945 L2783 953 L2835 947 M1750 693 L1793 692 L1837 693 L1880 696 L1923 700 L1967 706 L2010 713 L2054 721 L2097 731 L2140 742 L2184 753 L2227 765 L2271 778 L2314 791 L2357 806 L2401 822 L2443 838 L2485 855 L2526 871 L2567 887 L2607 905 L2647 922 L2689 937 L2733 948 L2780 955 L2835 947 M1706 694 L1750 693 L1793 694 L1837 696 L1880 699 L1923 705 L1967 711 L2010 719 L2054 729 L2097 739 L2140 750 L2184 762 L2227 775 L2271 787 L2314 801 L2357 816 L2400 832 L2442 847 L2483 863 L2523 878 L2562 893 L2601 910 L2642 927 L2684 942 L2729 951 L2777 957 L2835 947 M1663 695 L1706 694 L1750 695 L1793 697 L1837 700 L1880 704 L1923 710 L1967 718 L2010 727 L2054 737 L2097 748 L2140 759 L2184 772 L2227 785 L2271 798 L2314 811 L2357 826 L2398 841 L2439 856 L2479 872 L2517 886 L2556 900 L2595 916 L2635 931 L2678 946 L2724 954 L2774 959 L2835 947 M1619 697 L1663 696 L1706 696 L1750 698 L1793 701 L1837 704 L1880 710 L1923 717 L1967 725 L2010 735 L2054 745 L2097 757 L2140 769 L2184 782 L2227 795 L2271 808 L2313 822 L2355 836 L2395 851 L2435 865 L2473 880 L2511 894 L2548 907 L2587 922 L2627 936 L2671 950 L2718 958 L2770 962 L2835 947 M1576 699 L1619 697 L1663 698 L1706 699 L1750 702 L1793 705 L1837 710 L1880 717 L1923 725 L1967 734 L2010 744 L2054 755 L2097 767 L2140 780 L2184 793 L2227 806 L2270 819 L2311 832 L2351 846 L2391 861 L2429 875 L2466 888 L2503 902 L2540 914 L2578 927 L2619 941 L2663 954 L2713 961 L2767 964 L2835 947 M1533 702 L1576 700 L1619 699 L1663 700 L1706 703 L1750 706 L1793 711 L1837 717 L1880 724 L1923 733 L1967 743 L2010 753 L2054 765 L2097 778 L2140 791 L2184 804 L2226 817 L2268 830 L2308 843 L2347 857 L2384 870 L2421 884 L2457 897 L2493 909 L2530 921 L2568 933 L2609 946 L2655 958 L2706 965 L2763 966 L2835 947 M1489 704 L1533 702 L1576 701 L1619 702 L1663 704 L1706 708 L1750 712 L1793 718 L1837 725 L1880 733 L1923 742 L1967 753 L2010 764 L2054 776 L2097 789 L2140 802 L2183 815 L2224 828 L2264 841 L2303 854 L2340 867 L2376 880 L2412 893 L2447 905 L2482 917 L2518 928 L2557 939 L2599 951 L2647 962 L2700 969 L2759 969 L2835 947 M1446 707 L1489 705 L1533 704 L1576 704 L1619 706 L1663 709 L1706 714 L1750 719 L1793 726 L1837 733 L1880 742 L1923 752 L1967 763 L2010 775 L2054 787 L2097 800 L2139 814 L2181 827 L2220 840 L2259 853 L2296 865 L2332 877 L2367 890 L2401 902 L2435 913 L2470 924 L2506 935 L2545 945 L2589 956 L2638 966 L2694 973 L2756 971 L2835 947 M1402 710 L1446 708 L1489 706 L1533 707 L1576 708 L1619 711 L1663 715 L1706 720 L1750 727 L1793 734 L1837 743 L1880 752 L1923 763 L1967 774 L2010 786 L2053 799 L2096 812 L2137 826 L2177 839 L2215 852 L2252 864 L2287 876 L2321 888 L2355 900 L2388 911 L2422 922 L2456 932 L2492 942 L2532 951 L2578 960 L2630 970 L2688 976 L2752 974 L2835 947 M1359 713 L1402 711 L1446 709 L1489 709 L1533 710 L1576 713 L1619 717 L1663 722 L1706 728 L1750 736 L1793 744 L1837 753 L1880 763 L1923 774 L1967 786 L2010 798 L2052 811 L2094 825 L2133 838 L2171 851 L2208 864 L2243 876 L2276 888 L2309 899 L2342 910 L2374 920 L2408 930 L2442 940 L2478 949 L2519 957 L2567 965 L2621 974 L2682 980 L2748 976 L2835 947 M1316 717 L1359 714 L1402 712 L1446 712 L1489 713 L1533 715 L1576 719 L1619 724 L1663 730 L1706 737 L1750 745 L1793 754 L1837 764 L1880 774 L1923 786 L1967 798 L2009 811 L2050 824 L2090 837 L2128 850 L2164 863 L2199 876 L2232 888 L2264 899 L2295 910 L2327 920 L2359 930 L2392 939 L2427 948 L2464 956 L2506 963 L2556 970 L2612 978 L2676 983 L2745 978 L2835 947 M1272 722 L1316 718 L1359 716 L1402 715 L1446 716 L1489 718 L1533 721 L1576 726 L1619 732 L1663 739 L1706 747 L1750 755 L1793 765 L1837 775 L1880 786 L1923 798 L1966 811 L2007 824 L2046 837 L2084 850 L2120 863 L2154 875 L2187 888 L2218 899 L2249 910 L2279 921 L2310 930 L2342 939 L2376 948 L2411 955 L2449 963 L2493 969 L2545 975 L2605 982 L2671 986 L2743 980 L2835 947 M1229 727 L1272 723 L1316 720 L1359 718 L1402 719 L1446 721 L1489 724 L1533 728 L1576 734 L1619 740 L1663 748 L1706 757 L1750 766 L1793 777 L1837 787 L1880 799 L1922 811 L1963 824 L2003 837 L2040 850 L2076 863 L2110 875 L2143 888 L2173 900 L2203 911 L2232 922 L2262 932 L2293 941 L2325 949 L2359 956 L2395 963 L2435 969 L2481 974 L2535 979 L2597 985 L2666 989 L2740 981 L2835 947 M1185 733 L1229 728 L1272 724 L1316 722 L1359 722 L1402 724 L1446 727 L1489 731 L1533 736 L1576 743 L1619 750 L1663 759 L1706 768 L1750 778 L1793 789 L1836 800 L1879 812 L1920 824 L1959 837 L1997 850 L2032 863 L2066 876 L2098 888 L2129 900 L2158 912 L2186 923 L2214 933 L2244 942 L2274 951 L2307 958 L2342 965 L2379 971 L2421 976 L2469 980 L2526 983 L2591 988 L2662 991 L2738 983 L2835 947 M1142 739 L1185 733 L1229 729 L1272 727 L1316 726 L1359 727 L1402 730 L1446 734 L1489 739 L1533 745 L1576 752 L1619 761 L1663 770 L1706 780 L1750 790 L1793 801 L1835 813 L1876 825 L1916 838 L1953 850 L1989 863 L2022 876 L2054 889 L2084 901 L2113 912 L2140 924 L2167 934 L2195 944 L2224 953 L2256 961 L2289 968 L2325 973 L2364 978 L2408 982 L2458 985 L2518 987 L2585 990 L2659 992 L2737 984 L2835 947 M1099 745 L1142 739 L1185 735 L1229 732 L1272 731 L1316 731 L1359 733 L1402 737 L1446 742 L1489 748 L1533 755 L1576 763 L1619 772 L1663 782 L1706 792 L1750 803 L1792 815 L1833 826 L1872 839 L1910 851 L1945 864 L1978 877 L2010 889 L2039 902 L2067 914 L2095 925 L2121 936 L2147 946 L2175 955 L2204 963 L2236 970 L2271 977 L2309 981 L2350 985 L2396 987 L2449 989 L2511 990 L2581 992 L2656 994 L2736 984 L2835 947 M1055 752 L1099 746 L1142 741 L1185 738 L1229 736 L1272 736 L1316 737 L1359 740 L1402 745 L1446 751 L1489 758 L1533 765 L1576 774 L1619 784 L1663 794 L1706 805 L1748 816 L1789 828 L1829 840 L1866 852 L1901 865 L1934 878 L1965 890 L1995 903 L2022 915 L2049 926 L2075 937 L2100 947 L2126 957 L2154 966 L2184 973 L2217 980 L2254 985 L2294 989 L2337 991 L2385 992 L2441 993 L2505 993 L2578 993 L2655 994 L2736 985 M1012 759 L1055 753 L1099 747 L1142 743 L1185 741 L1229 741 L1272 742 L1316 744 L1359 748 L1402 754 L1446 761 L1489 768 L1533 777 L1576 786 L1619 796 L1663 807 L1705 818 L1746 830 L1785 842 L1822 854 L1858 867 L1891 879 L1921 892 L1950 904 L1978 916 L2004 928 L2029 939 L2054 949 L2079 959 L2105 968 L2133 976 L2164 983 L2199 988 L2237 992 L2279 995 L2325 996 L2376 996 L2434 995 L2501 994 L2576 994 L2654 995 M968 767 L1012 760 L1055 754 L1099 750 L1142 747 L1185 746 L1229 747 L1272 749 L1316 752 L1359 757 L1402 764 L1446 771 L1489 780 L1533 789 L1576 798 L1619 809 L1662 820 L1703 832 L1742 844 L1779 856 L1814 868 L1847 881 L1877 893 L1906 906 L1933 918 L1958 929 L1983 941 L2007 951 L2032 961 L2057 970 L2083 978 L2112 985 L2145 991 L2182 996 L2222 999 L2267 1001 L2315 1001 L2368 1000 L2429 998 L2499 996 L2575 994 M925 775 L968 768 L1012 761 L1055 757 L1099 754 L1142 752 L1185 752 L1229 754 L1272 757 L1316 761 L1359 767 L1402 774 L1446 782 L1489 791 L1533 801 L1576 811 L1618 822 L1659 834 L1698 846 L1735 858 L1770 870 L1803 883 L1834 895 L1862 907 L1888 919 L1913 931 L1937 943 L1961 953 L1985 963 L2009 972 L2034 981 L2061 988 L2091 994 L2127 999 L2166 1003 L2209 1005 L2256 1006 L2307 1005 L2363 1002 L2426 999 L2498 996 M881 784 L925 776 L968 769 L1012 764 L1055 760 L1099 758 L1142 758 L1185 759 L1229 762 L1272 766 L1316 771 L1359 778 L1402 786 L1446 794 L1489 804 L1532 814 L1575 825 L1616 836 L1655 848 L1692 860 L1727 873 L1759 885 L1790 897 L1818 910 L1844 922 L1869 933 L1892 945 L1915 955 L1938 966 L1961 975 L1986 983 L2012 991 L2040 998 L2072 1003 L2110 1007 L2152 1009 L2197 1010 L2248 1010 L2301 1007 L2360 1004 L2425 999 M838 793 L881 784 L925 777 L968 772 L1012 768 L1055 765 L1099 764 L1142 765 L1185 767 L1229 771 L1272 775 L1316 782 L1359 789 L1402 798 L1446 807 L1489 817 L1531 828 L1572 839 L1611 851 L1648 863 L1683 875 L1716 887 L1746 900 L1774 912 L1800 924 L1824 936 L1847 947 L1869 958 L1891 968 L1914 977 L1938 986 L1963 994 L1990 1001 L2020 1006 L2055 1010 L2095 1013 L2140 1014 L2188 1014 L2241 1012 L2297 1009 L2358 1004 M795 802 L838 793 L881 786 L925 780 L968 775 L1012 772 L1055 771 L1099 771 L1142 773 L1185 776 L1229 780 L1272 786 L1316 793 L1359 801 L1402 810 L1446 820 L1488 831 L1529 842 L1568 853 L1605 865 L1640 877 L1672 890 L1702 902 L1730 914 L1756 926 L1780 938 L1802 949 L1824 960 L1845 971 L1867 980 L1890 989 L1914 997 L1941 1004 L1970 1009 L2002 1014 L2039 1017 L2082 1018 L2130 1018 L2181 1017 L2237 1014 L2296 1010 M751 812 L795 803 L838 795 L881 788 L925 783 L968 780 L1012 778 L1055 778 L1099 779 L1142 781 L1185 785 L1229 791 L1272 797 L1316 805 L1359 814 L1402 823 L1445 834 L1485 845 L1525 856 L1562 868 L1596 880 L1629 892 L1659 905 L1686 917 L1712 929 L1735 941 L1757 952 L1779 963 L1799 973 L1820 983 L1842 992 L1866 1000 L1892 1007 L1920 1012 L1951 1017 L1986 1020 L2026 1022 L2072 1023 L2123 1021 L2177 1019 L2236 1015 M708 822 L751 812 L795 804 L838 797 L881 792 L925 788 L968 785 L1012 784 L1055 785 L1099 787 L1142 791 L1185 796 L1229 802 L1272 809 L1316 817 L1359 827 L1401 837 L1442 848 L1481 859 L1518 871 L1553 883 L1585 895 L1615 907 L1642 919 L1668 932 L1691 943 L1713 955 L1734 966 L1754 976 L1774 986 L1795 995 L1818 1003 L1843 1010 L1870 1016 L1901 1020 L1935 1024 L1972 1026 L2015 1027 L2064 1026 L2118 1023 L2176 1019 M664 832 L708 822 L751 814 L795 806 L838 801 L881 796 L925 793 L968 792 L1012 792 L1055 794 L1099 797 L1142 801 L1185 807 L1229 814 L1272 822 L1315 830 L1358 840 L1399 851 L1438 862 L1475 874 L1509 886 L1542 898 L1571 910 L1599 922 L1624 934 L1647 946 L1669 958 L1689 969 L1709 979 L1728 989 L1749 998 L1771 1006 L1794 1013 L1821 1019 L1850 1024 L1884 1027 L1920 1029 L1961 1030 L2007 1030 L2060 1027 L2117 1024 M621 842 L664 832 L708 823 L751 816 L795 810 L838 805 L881 802 L925 800 L968 799 L1012 800 L1055 803 L1099 807 L1142 812 L1185 818 L1229 826 L1272 835 L1314 844 L1355 854 L1394 865 L1431 877 L1466 889 L1498 901 L1528 913 L1555 925 L1580 937 L1603 949 L1625 961 L1645 972 L1664 982 L1683 992 L1703 1001 L1724 1009 L1747 1016 L1772 1022 L1801 1027 L1833 1031 L1869 1033 L1909 1034 L1953 1033 L2002 1032 L2058 1028 M578 853 L621 842 L664 833 L708 826 L751 819 L795 814 L838 810 L881 808 L925 807 L968 807 L1012 809 L1055 813 L1099 818 L1142 824 L1185 831 L1229 839 L1271 848 L1312 858 L1351 869 L1388 880 L1422 892 L1455 904 L1484 916 L1511 928 L1536 940 L1559 952 L1580 964 L1600 975 L1619 985 L1638 995 L1657 1004 L1677 1012 L1699 1020 L1724 1026 L1752 1031 L1783 1034 L1818 1036 L1858 1037 L1901 1037 L1948 1035 L2001 1032 M534 864 L578 853 L621 844 L664 836 L708 829 L751 823 L795 819 L838 816 L881 815 L925 815 L968 816 L1012 819 L1055 823 L1099 829 L1142 836 L1185 844 L1228 853 L1268 862 L1307 873 L1344 884 L1379 895 L1411 907 L1441 919 L1468 931 L1493 943 L1515 955 L1536 967 L1556 978 L1575 988 L1593 998 L1612 1007 L1631 1016 L1653 1023 L1676 1029 L1703 1034 L1734 1038 L1768 1040 L1806 1041 L1849 1041 L1896 1039 L1946 1036 M491 875 L534 864 L578 854 L621 846 L664 839 L708 833 L751 828 L795 825 L838 823 L881 823 L925 824 L968 826 L1012 830 L1055 835 L1099 841 L1142 849 L1184 857 L1225 866 L1264 877 L1301 887 L1336 899 L1368 910 L1397 922 L1424 934 L1449 946 L1472 958 L1492 970 L1512 981 L1530 991 L1548 1001 L1567 1011 L1586 1019 L1606 1026 L1630 1032 L1655 1038 L1685 1041 L1718 1044 L1755 1045 L1797 1044 L1844 1043 L1894 1040 M447 888 L491 876 L534 865 L578 856 L621 849 L664 842 L708 838 L751 834 L795 832 L838 831 L881 831 L925 833 L968 836 L1012 841 L1055 847 L1098 854 L1141 862 L1182 871 L1221 881 L1258 891 L1292 903 L1324 914 L1354 926 L1381 938 L1405 950 L1428 962 L1448 973 L1468 984 L1486 995 L1504 1005 L1522 1014 L1541 1022 L1561 1030 L1583 1036 L1608 1041 L1637 1045 L1669 1047 L1706 1048 L1746 1048 L1792 1046 L1842 1043 M404 903 L447 889 L491 877 L534 867 L578 859 L621 852 L664 847 L708 843 L751 841 L795 839 L838 840 L881 841 L925 843 L968 847 L1012 852 L1055 859 L1097 867 L1138 875 L1177 885 L1214 896 L1249 907 L1281 918 L1310 930 L1337 941 L1362 953 L1384 965 L1405 976 L1424 987 L1442 998 L1459 1008 L1477 1017 L1496 1026 L1516 1033 L1537 1039 L1561 1045 L1589 1048 L1621 1051 L1656 1052 L1696 1052 L1741 1050 L1790 1047 M361 917 L404 903 L447 889 L491 878 L534 869 L578 862 L621 857 L664 853 L708 850 L751 848 L795 848 L838 849 L881 851 L925 854 L968 859 L1012 865 L1054 872 L1095 880 L1134 890 L1171 900 L1206 911 L1238 922 L1267 933 L1294 945 L1318 957 L1341 968 L1361 980 L1380 991 L1398 1001 L1415 1011 L1433 1021 L1451 1029 L1470 1036 L1492 1043 L1515 1048 L1542 1052 L1573 1055 L1608 1056 L1647 1056 L1691 1054 L1739 1051 M317 931 L361 917 L404 904 L447 891 L491 881 L534 873 L578 867 L621 862 L664 859 L708 857 L751 856 L795 857 L838 859 L881 861 L925 865 L968 871 L1011 877 L1052 885 L1091 894 L1128 904 L1162 915 L1194 926 L1224 937 L1251 949 L1275 960 L1297 972 L1318 983 L1336 994 L1354 1005 L1371 1015 L1388 1024 L1406 1032 L1425 1040 L1446 1046 L1470 1051 L1496 1055 L1526 1058 L1560 1059 L1598 1059 L1641 1058 L1689 1055 M274 945 L317 931 L361 918 L404 905 L447 893 L491 884 L534 877 L578 872 L621 868 L664 866 L708 865 L751 865 L795 866 L838 869 L881 872 L925 877 L967 883 L1008 891 L1047 899 L1085 909 L1119 919 L1151 930 L1181 941 L1207 953 L1232 964 L1254 976 L1274 987 L1293 998 L1310 1008 L1327 1018 L1344 1028 L1361 1036 L1380 1043 L1401 1050 L1424 1055 L1450 1059 L1479 1062 L1513 1063 L1550 1063 L1593 1061 L1639 1058 M230 959 L274 945 L317 932 L361 919 L404 907 L447 896 L491 887 L534 881 L578 877 L621 875 L664 873 L708 873 L751 874 L795 876 L838 880 L881 884 L924 889 L965 896 L1004 904 L1041 913 L1076 923 L1108 934 L1138 945 L1164 956 L1189 968 L1211 979 L1231 991 L1249 1002 L1267 1012 L1283 1022 L1300 1031 L1317 1040 L1336 1047 L1356 1053 L1379 1059 L1405 1063 L1434 1065 L1466 1067 L1503 1067 L1545 1065 L1591 1062 M187 973 L230 959 L274 946 L317 933 L361 920 L404 909 L447 899 L491 891 L534 886 L578 883 L621 882 L664 881 L708 882 L751 884 L795 887 L838 891 L880 896 L921 902 L961 910 L998 918 L1033 928 L1065 938 L1095 949 L1121 960 L1146 971 L1168 983 L1187 994 L1206 1005 L1223 1015 L1240 1025 L1256 1035 L1273 1043 L1291 1050 L1311 1057 L1334 1062 L1359 1066 L1388 1069 L1420 1070 L1456 1070 L1497 1069 L1543 1066 M144 996 L187 973 L230 959 L274 946 L317 934 L361 922 L404 912 L447 902 L491 896 L534 892 L578 890 L621 890 L664 890 L708 892 L751 894 L795 898 L837 903 L878 909 L918 915 L955 923 L990 932 L1022 942 L1052 953 L1079 964 L1103 975 L1125 986 L1144 997 L1162 1008 L1179 1019 L1196 1029 L1212 1038 L1229 1046 L1247 1054 L1267 1060 L1289 1066 L1314 1070 L1342 1072 L1375 1074 L1410 1074 L1450 1072 L1495 1069 M144 996 L187 973 L230 960 L274 947 L317 935 L361 925 L404 915 L447 906 L491 901 L534 898 L578 898 L621 898 L664 899 L708 902 L751 905 L794 910 L835 916 L874 922 L912 929 L947 937 L979 947 L1009 957 L1036 967 L1060 978 L1082 989 L1102 1000 L1120 1011 L1136 1022 L1153 1032 L1169 1041 L1186 1049 L1203 1057 L1223 1063 L1244 1069 L1269 1073 L1297 1076 L1329 1077 L1365 1077 L1405 1076 L1448 1073 M144 996 L187 974 L230 961 L274 948 L317 937 L361 927 L404 918 L447 911 L491 907 L534 905 L578 906 L621 907 L664 909 L708 912 L750 917 L791 922 L831 928 L869 935 L904 943 L937 952 L966 961 L994 972 L1018 982 L1040 993 L1059 1004 L1077 1014 L1094 1025 L1109 1034 L1125 1044 L1142 1052 L1160 1060 L1179 1066 L1200 1072 L1224 1076 L1252 1079 L1283 1081 L1319 1081 L1359 1080 L1403 1077 M144 996 L187 974 L230 962 L274 950 L317 939 L361 930 L404 922 L447 916 L491 913 L534 913 L578 914 L621 916 L664 919 L707 923 L748 928 L788 934 L825 942 L861 949 L894 957 L924 966 L951 976 L976 986 L998 996 L1017 1007 L1035 1017 L1051 1027 L1067 1037 L1082 1046 L1098 1055 L1116 1062 L1135 1069 L1156 1075 L1180 1079 L1207 1082 L1238 1084 L1273 1084 L1313 1083 L1357 1080 M144 996 L187 975 L230 963 L274 952 L317 942 L361 934 L404 927 L447 922 L491 920 L534 920 L578 923 L621 926 L663 930 L705 935 L745 940 L782 947 L818 955 L851 963 L881 971 L909 981 L934 990 L956 1000 L975 1010 L993 1021 L1009 1030 L1025 1040 L1040 1049 L1055 1057 L1072 1065 L1091 1071 L1112 1077 L1136 1081 L1163 1085 L1194 1087 L1228 1088 L1267 1087 L1311 1084 M144 996 L187 976 L230 964 L274 954 L317 945 L361 937 L404 932 L447 928 L491 927 L534 928 L577 932 L620 936 L661 941 L701 946 L739 953 L775 960 L808 968 L838 977 L866 986 L891 995 L914 1004 L934 1014 L951 1024 L968 1034 L983 1043 L998 1051 L1013 1060 L1029 1067 L1048 1073 L1069 1079 L1092 1084 L1119 1087 L1149 1089 L1184 1090 L1222 1090 L1265 1087 M144 996 L187 976 L230 966 L274 956 L317 948 L361 942 L404 937 L447 934 L491 934 L534 937 L577 942 L618 947 L658 952 L696 958 L732 966 L765 973 L796 982 L824 991 L849 1000 L872 1009 L892 1018 L910 1028 L926 1037 L941 1046 L956 1054 L971 1062 L987 1069 L1005 1076 L1025 1081 L1048 1086 L1075 1089 L1105 1092 L1139 1093 L1177 1092 L1220 1090 M144 996 L187 977 L230 967 L274 958 L317 951 L361 946 L404 942 L447 940 L491 942 L533 946 L575 952 L615 958 L653 964 L689 971 L723 978 L753 987 L781 995 L807 1005 L830 1014 L851 1023 L869 1032 L885 1041 L901 1049 L915 1058 L930 1065 L945 1072 L963 1078 L982 1084 L1005 1088 L1031 1091 L1061 1094 L1095 1095 L1133 1095 L1175 1093 M144 996 L187 978 L230 969 L274 961 L317 955 L361 950 L404 948 L447 947 L490 950 L532 955 L572 962 L610 969 L646 976 L680 983 L711 991 L739 1000 L765 1009 L788 1018 L809 1027 L828 1036 L845 1046 L860 1054 L874 1062 L889 1069 L904 1075 L921 1081 L940 1086 L962 1090 L988 1093 L1017 1096 L1051 1097 L1089 1097 L1131 1095 M144 996 L187 980 L230 971 L274 964 L317 959 L361 955 L404 954 L447 954 L489 958 L529 964 L567 972 L604 980 L638 987 L669 995 L697 1004 L723 1013 L747 1022 L768 1031 L787 1040 L804 1049 L820 1057 L834 1065 L849 1073 L864 1079 L880 1084 L899 1089 L920 1093 L945 1096 L974 1098 L1007 1099 L1045 1099 L1087 1097 M144 996 L187 981 L230 973 L274 967 L317 962 L360 960 L403 960 L445 962 L486 966 L525 973 L561 982 L595 991 L627 999 L656 1007 L682 1016 L705 1025 L726 1034 L746 1043 L764 1051 L779 1060 L794 1068 L809 1075 L824 1082 L840 1088 L858 1093 L879 1096 L903 1098 L931 1100 L964 1101 L1001 1100 L1043 1099 M144 996 L187 982 L230 975 L274 970 L317 967 L360 966 L402 966 L443 969 L482 975 L519 983 L553 992 L585 1002 L614 1011 L641 1019 L664 1028 L686 1037 L705 1045 L723 1054 L739 1062 L755 1070 L769 1078 L784 1084 L800 1090 L818 1095 L838 1100 L862 1102 L889 1103 L921 1103 L958 1103 L999 1101 M144 996 L187 984 L230 977 L274 973 L317 971 L359 971 L400 973 L440 977 L477 983 L512 992 L543 1001 L573 1012 L599 1022 L624 1030 L645 1039 L664 1048 L682 1056 L699 1064 L715 1072 L730 1079 L745 1086 L761 1092 L778 1097 L798 1101 L821 1105 L848 1107 L879 1106 L915 1105 L956 1103 M144 996 L187 985 L230 980 L273 976 L316 975 L357 976 L397 979 L435 984 L470 991 L503 1000 L532 1010 L559 1020 L583 1031 L605 1041 L625 1049 L642 1058 L659 1066 L675 1074 L691 1081 L706 1087 L722 1093 L739 1099 L759 1103 L781 1106 L808 1109 L838 1110 L873 1109 L913 1106 M144 996 L187 987 L230 982 L273 980 L315 980 L355 982 L393 986 L429 992 L462 999 L492 1008 L518 1018 L543 1028 L565 1039 L585 1050 L603 1059 L619 1067 L635 1074 L651 1082 L667 1088 L684 1094 L701 1100 L720 1104 L743 1108 L768 1110 L798 1111 L832 1112 L871 1109 M144 996 L187 989 L230 985 L272 983 L313 984 L352 987 L388 992 L422 999 L453 1006 L480 1016 L504 1025 L525 1036 L546 1046 L564 1056 L581 1066 L596 1075 L611 1082 L628 1089 L645 1095 L663 1100 L682 1105 L704 1108 L729 1111 L758 1113 L792 1113 L830 1112 M144 996 L186 990 L229 988 L270 987 L310 989 L347 993 L382 998 L413 1005 L441 1013 L466 1022 L487 1032 L507 1041 L526 1051 L542 1061 L558 1070 L573 1079 L589 1087 L606 1094 L625 1100 L644 1105 L666 1108 L691 1111 L720 1113 L752 1114 L790 1114 M144 996 L186 992 L228 990 L268 991 L306 993 L342 998 L375 1004 L404 1011 L429 1019 L451 1028 L470 1037 L488 1046 L505 1055 L521 1064 L536 1073 L551 1081 L567 1090 L586 1098 L607 1104 L629 1108 L653 1111 L682 1114 L714 1115 L750 1115 M144 996 L185 994 L226 993 L265 994 L302 998 L336 1003 L366 1009 L393 1016 L415 1024 L435 1032 L451 1041 L467 1049 L484 1058 L499 1067 L514 1075 L530 1083 L548 1091 L568 1099 L591 1106 L616 1111 L644 1113 L676 1115 L712 1115 M144 996 L184 996 L224 996 L262 997 L297 1001 L328 1007 L356 1014 L380 1021 L401 1028 L418 1036 L432 1044 L447 1051 L463 1059 L478 1068 L494 1076 L511 1084 L530 1091 L553 1099 L579 1107 L607 1113 L638 1115 L674 1115 M144 996 L183 997 L221 998 L258 1001 L291 1005 L320 1011 L346 1018 L367 1025 L385 1032 L400 1039 L413 1046 L427 1053 L443 1060 L458 1068 L475 1075 L494 1083 L515 1091 L541 1099 L570 1107 L601 1113 L636 1115 M144 996 L181 999 L218 1001 L253 1003 L284 1008 L311 1014 L335 1021 L354 1028 L370 1034 L383 1041 L394 1047 L408 1053 L424 1060 L440 1067 L459 1075 L480 1083 L503 1091 L532 1099 L564 1107 L599 1114 M144 996 L179 1000 L215 1003 L248 1006 L277 1011 L302 1017 L323 1023 L340 1030 L354 1036 L365 1041 L376 1047 L390 1053 L406 1060 L424 1067 L445 1074 L468 1082 L494 1090 L527 1099 L562 1107 M144 996 L177 1002 L211 1005 L242 1009 L269 1013 L292 1019 L311 1025 L326 1031 L338 1036 L349 1042 L359 1047 L373 1052 L390 1059 L410 1066 L433 1073 L459 1081 L489 1090 L525 1099 M144 996 L174 1003 L207 1007 L236 1011 L261 1015 L281 1021 L298 1026 L312 1032 L322 1036 L333 1041 L343 1046 L358 1051 L377 1058 L399 1065 L425 1073 L454 1081 L487 1090 M144 996 L171 1004 L202 1009 L229 1013 L252 1017 L271 1022 L286 1027 L298 1032 L308 1036 L318 1040 L328 1045 L345 1050 L367 1057 L391 1064 L420 1072 L452 1081 M144 996 L168 1005 L197 1010 L223 1014 L244 1018 L261 1023 L274 1027 L285 1031 L295 1035 L305 1039 L316 1043 L335 1049 L359 1056 L386 1064 L418 1072 M144 996 L165 1005 L192 1011 L216 1015 L235 1019 L251 1023 L263 1027 L273 1030 L283 1034 L294 1038 L307 1042 L327 1048 L354 1056 L385 1063 M144 996 L162 1005 L187 1011 L209 1016 L227 1020 L241 1023 L253 1026 L263 1030 L273 1033 L285 1037 L300 1041 L323 1048 L352 1055 M144 996 L158 1006 L182 1012 L203 1017 L219 1020 L233 1023 L244 1026 L254 1029 L265 1032 L278 1036 L295 1041 L321 1047 M144 996 L155 1005 L178 1012 L197 1017 L212 1020 L225 1023 L236 1026 L247 1028 L259 1032 L274 1036 L294 1040 M144 996 L152 1005 L173 1012 L191 1016 L206 1020 L218 1023 L230 1026 L241 1028 L255 1031 L273 1035 M144 996 L149 1004 L169 1011 L186 1016 L200 1020 L213 1023 L225 1025 L238 1028 L254 1031 M144 996 L146 1002 L165 1011 L182 1016 L196 1019 L209 1023 L222 1025 L237 1028 M144 996 L162 1010 L179 1015 L193 1019 L207 1022 L222 1025 M144 996 L159 1010 L176 1015 L191 1019 L206 1022 M144 996 L158 1009 L175 1015 L190 1019 M144 996 L156 1009 L174 1015 M144 996 L156 1009" fill="none" stroke="#250700" stroke-width="1.4" opacity="0.72"/><path d="M144 996 L187 973 M144 996 L187 973 L230 959 M144 996 L187 973 L230 959 L274 945 M144 996 L187 974 L230 959 L274 945 L317 931 M144 996 L187 974 L230 960 L274 946 L317 931 L361 917 M144 996 L187 975 L230 961 L274 946 L317 932 L361 917 L404 903 M144 996 L187 976 L230 962 L274 947 L317 933 L361 918 L404 903 L447 888 M144 996 L187 976 L230 963 L274 948 L317 934 L361 919 L404 904 L447 889 L491 875 M144 996 L187 977 L230 964 L274 950 L317 935 L361 920 L404 905 L447 889 L491 876 L534 864 M144 996 L187 978 L230 966 L274 952 L317 937 L361 922 L404 907 L447 891 L491 877 L534 864 L578 853 M144 996 L187 980 L230 967 L274 954 L317 939 L361 925 L404 909 L447 893 L491 878 L534 865 L578 853 L621 842 M144 996 L187 981 L230 969 L274 956 L317 942 L361 927 L404 912 L447 896 L491 881 L534 867 L578 854 L621 842 L664 832 M144 996 L187 982 L230 971 L274 958 L317 945 L361 930 L404 915 L447 899 L491 884 L534 869 L578 856 L621 844 L664 832 L708 822 M144 996 L187 984 L230 973 L274 961 L317 948 L361 934 L404 918 L447 902 L491 887 L534 873 L578 859 L621 846 L664 833 L708 822 L751 812 M144 996 L187 985 L230 975 L274 964 L317 951 L361 937 L404 922 L447 906 L491 891 L534 877 L578 862 L621 849 L664 836 L708 823 L751 812 L795 802 M144 996 L187 987 L230 977 L274 967 L317 955 L361 942 L404 927 L447 911 L491 896 L534 881 L578 867 L621 852 L664 839 L708 826 L751 814 L795 803 L838 793 M144 996 L187 989 L230 980 L274 970 L317 959 L361 946 L404 932 L447 916 L491 901 L534 886 L578 872 L621 857 L664 842 L708 829 L751 816 L795 804 L838 793 L881 784 M144 996 L186 990 L230 982 L274 973 L317 962 L361 950 L404 937 L447 922 L491 907 L534 892 L578 877 L621 862 L664 847 L708 833 L751 819 L795 806 L838 795 L881 784 L925 775 M144 996 L186 992 L230 985 L273 976 L317 967 L361 955 L404 942 L447 928 L491 913 L534 898 L578 883 L621 868 L664 853 L708 838 L751 823 L795 810 L838 797 L881 786 L925 776 L968 767 M144 996 L185 994 L229 988 L273 980 L317 971 L360 960 L404 948 L447 934 L491 920 L534 905 L578 890 L621 875 L664 859 L708 843 L751 828 L795 814 L838 801 L881 788 L925 777 L968 768 L1012 759 M144 996 L184 996 L228 990 L272 983 L316 975 L360 966 L404 954 L447 940 L491 927 L534 913 L578 898 L621 882 L664 866 L708 850 L751 834 L795 819 L838 805 L881 792 L925 780 L968 769 L1012 760 L1055 752 M144 996 L183 997 L226 993 L270 987 L315 980 L359 971 L403 960 L447 947 L491 934 L534 920 L578 906 L621 890 L664 873 L708 857 L751 841 L795 825 L838 810 L881 796 L925 783 L968 772 L1012 761 L1055 753 L1099 745 M144 996 L181 999 L224 996 L268 991 L313 984 L357 976 L402 966 L447 954 L491 942 L534 928 L578 914 L621 898 L664 881 L708 865 L751 848 L795 832 L838 816 L881 802 L925 788 L968 775 L1012 764 L1055 754 L1099 746 L1142 739 M144 996 L179 1000 L221 998 L265 994 L310 989 L355 982 L400 973 L445 962 L490 950 L534 937 L578 923 L621 907 L664 890 L708 873 L751 856 L795 839 L838 823 L881 808 L925 793 L968 780 L1012 768 L1055 757 L1099 747 L1142 739 L1185 733 M144 996 L177 1002 L218 1001 L262 997 L306 993 L352 987 L397 979 L443 969 L489 958 L533 946 L577 932 L621 916 L664 899 L708 882 L751 865 L795 848 L838 831 L881 815 L925 800 L968 785 L1012 772 L1055 760 L1099 750 L1142 741 L1185 733 L1229 727 M144 996 L174 1003 L215 1003 L258 1001 L302 998 L347 993 L393 986 L440 977 L486 966 L532 955 L577 942 L621 926 L664 909 L708 892 L751 874 L795 857 L838 840 L881 823 L925 807 L968 792 L1012 778 L1055 765 L1099 754 L1142 743 L1185 735 L1229 728 L1272 722 M144 996 L171 1004 L211 1005 L253 1003 L297 1001 L342 998 L388 992 L435 984 L482 975 L529 964 L575 952 L620 936 L664 919 L708 902 L751 884 L795 866 L838 849 L881 831 L925 815 L968 799 L1012 784 L1055 771 L1099 758 L1142 747 L1185 738 L1229 729 L1272 723 L1316 717 M144 996 L168 1005 L207 1007 L248 1006 L291 1005 L336 1003 L382 998 L429 992 L477 983 L525 973 L572 962 L618 947 L663 930 L708 912 L751 894 L795 876 L838 859 L881 841 L925 824 L968 807 L1012 792 L1055 778 L1099 764 L1142 752 L1185 741 L1229 732 L1272 724 L1316 718 L1359 713 M144 996 L165 1005 L202 1009 L242 1009 L284 1008 L328 1007 L375 1004 L422 999 L470 991 L519 983 L567 972 L615 958 L661 941 L707 923 L751 905 L795 887 L838 869 L881 851 L925 833 L968 816 L1012 800 L1055 785 L1099 771 L1142 758 L1185 746 L1229 736 L1272 727 L1316 720 L1359 714 L1402 710 M144 996 L162 1005 L197 1010 L236 1011 L277 1011 L320 1011 L366 1009 L413 1005 L462 999 L512 992 L561 982 L610 969 L658 952 L705 935 L750 917 L795 898 L838 880 L881 861 L925 843 L968 826 L1012 809 L1055 794 L1099 779 L1142 765 L1185 752 L1229 741 L1272 731 L1316 722 L1359 716 L1402 711 L1446 707 M144 996 L158 1006 L192 1011 L229 1013 L269 1013 L311 1014 L356 1014 L404 1011 L453 1006 L503 1000 L553 992 L604 980 L653 964 L701 946 L748 928 L794 910 L838 891 L881 872 L925 854 L968 836 L1012 819 L1055 803 L1099 787 L1142 773 L1185 759 L1229 747 L1272 736 L1316 726 L1359 718 L1402 712 L1446 708 L1489 704 M144 996 L155 1005 L187 1011 L223 1014 L261 1015 L302 1017 L346 1018 L393 1016 L441 1013 L492 1008 L543 1001 L595 991 L646 976 L696 958 L745 940 L791 922 L837 903 L881 884 L925 865 L968 847 L1012 830 L1055 813 L1099 797 L1142 781 L1185 767 L1229 754 L1272 742 L1316 731 L1359 722 L1402 715 L1446 709 L1489 705 L1533 702 M144 996 L152 1005 L182 1012 L216 1015 L252 1017 L292 1019 L335 1021 L380 1021 L429 1019 L480 1016 L532 1010 L585 1002 L638 987 L689 971 L739 953 L788 934 L835 916 L880 896 L925 877 L968 859 L1012 841 L1055 823 L1099 807 L1142 791 L1185 776 L1229 762 L1272 749 L1316 737 L1359 727 L1402 719 L1446 712 L1489 706 L1533 702 L1576 699 M144 996 L149 1004 L178 1012 L209 1016 L244 1018 L281 1021 L323 1023 L367 1025 L415 1024 L466 1022 L518 1018 L573 1012 L627 999 L680 983 L732 966 L782 947 L831 928 L878 909 L924 889 L968 871 L1012 852 L1055 835 L1099 818 L1142 801 L1185 785 L1229 771 L1272 757 L1316 744 L1359 733 L1402 724 L1446 716 L1489 709 L1533 704 L1576 700 L1619 697 M144 996 L146 1002 L173 1012 L203 1017 L235 1019 L271 1022 L311 1025 L354 1028 L401 1028 L451 1028 L504 1025 L559 1020 L614 1011 L669 995 L723 978 L775 960 L825 942 L874 922 L921 902 L967 883 L1012 865 L1055 847 L1099 829 L1142 812 L1185 796 L1229 780 L1272 766 L1316 752 L1359 740 L1402 730 L1446 721 L1489 713 L1533 707 L1576 701 L1619 697 L1663 695 M144 996 L169 1011 L197 1017 L227 1020 L261 1023 L298 1026 L340 1030 L385 1032 L435 1032 L487 1032 L543 1028 L599 1022 L656 1007 L711 991 L765 973 L818 955 L869 935 L918 915 L965 896 L1011 877 L1055 859 L1099 841 L1142 824 L1185 807 L1229 791 L1272 775 L1316 761 L1359 748 L1402 737 L1446 727 L1489 718 L1533 710 L1576 704 L1619 699 L1663 696 L1706 694 M144 996 L165 1011 L191 1016 L219 1020 L251 1023 L286 1027 L326 1031 L370 1034 L418 1036 L470 1037 L525 1036 L583 1031 L641 1019 L697 1004 L753 987 L808 968 L861 949 L912 929 L961 910 L1008 891 L1054 872 L1098 854 L1142 836 L1185 818 L1229 802 L1272 786 L1316 771 L1359 757 L1402 745 L1446 734 L1489 724 L1533 715 L1576 708 L1619 702 L1663 698 L1706 694 L1750 693 M144 996 L162 1010 L186 1016 L212 1020 L241 1023 L274 1027 L312 1032 L354 1036 L400 1039 L451 1041 L507 1041 L565 1039 L624 1030 L682 1016 L739 1000 L796 982 L851 963 L904 943 L955 923 L1004 904 L1052 885 L1097 867 L1142 849 L1185 831 L1229 814 L1272 797 L1316 782 L1359 767 L1402 754 L1446 742 L1489 731 L1533 721 L1576 713 L1619 706 L1663 700 L1706 696 L1750 693 L1793 692 M144 996 L159 1010 L182 1016 L206 1020 L233 1023 L263 1027 L298 1032 L338 1036 L383 1041 L432 1044 L488 1046 L546 1046 L605 1041 L664 1028 L723 1013 L781 995 L838 977 L894 957 L947 937 L998 918 L1047 899 L1095 880 L1141 862 L1185 844 L1229 826 L1272 809 L1316 793 L1359 778 L1402 764 L1446 751 L1489 739 L1533 728 L1576 719 L1619 711 L1663 704 L1706 699 L1750 695 L1793 692 L1837 691 M144 996 L158 1009 L179 1015 L200 1020 L225 1023 L253 1026 L285 1031 L322 1036 L365 1041 L413 1046 L467 1049 L526 1051 L585 1050 L645 1039 L705 1025 L765 1009 L824 991 L881 971 L937 952 L990 932 L1041 913 L1091 894 L1138 875 L1184 857 L1229 839 L1272 822 L1316 805 L1359 789 L1402 774 L1446 761 L1489 748 L1533 736 L1576 726 L1619 717 L1663 709 L1706 703 L1750 698 L1793 694 L1837 692 L1880 691 M144 996 L156 1009 L176 1015 L196 1019 L218 1023 L244 1026 L273 1030 L308 1036 L349 1042 L394 1047 L447 1051 L505 1055 L564 1056 L625 1049 L686 1037 L747 1022 L807 1005 L866 986 L924 966 L979 947 L1033 928 L1085 909 L1134 890 L1182 871 L1228 853 L1272 835 L1316 817 L1359 801 L1402 786 L1446 771 L1489 758 L1533 745 L1576 734 L1619 724 L1663 715 L1706 708 L1750 702 L1793 697 L1837 693 L1880 691 L1923 692 M156 1009 L175 1015 L193 1019 L213 1023 L236 1026 L263 1030 L295 1035 L333 1041 L376 1047 L427 1053 L484 1058 L542 1061 L603 1059 L664 1048 L726 1034 L788 1018 L849 1000 L909 981 L966 961 L1022 942 L1076 923 L1128 904 L1177 885 L1225 866 L1271 848 L1315 830 L1359 814 L1402 798 L1446 782 L1489 768 L1533 755 L1576 743 L1619 732 L1663 722 L1706 714 L1750 706 L1793 701 L1837 696 L1880 693 L1923 692 L1967 693 M174 1015 L191 1019 L209 1023 L230 1026 L254 1029 L283 1034 L318 1040 L359 1047 L408 1053 L463 1059 L521 1064 L581 1066 L642 1058 L705 1045 L768 1031 L830 1014 L891 995 L951 976 L1009 957 L1065 938 L1119 919 L1171 900 L1221 881 L1268 862 L1314 844 L1359 827 L1402 810 L1446 794 L1489 780 L1533 765 L1576 752 L1619 740 L1663 730 L1706 720 L1750 712 L1793 705 L1837 700 L1880 696 L1923 694 L1967 693 L2010 694 M190 1019 L207 1022 L225 1025 L247 1028 L273 1033 L305 1039 L343 1046 L390 1053 L443 1060 L499 1067 L558 1070 L619 1067 L682 1056 L746 1043 L809 1027 L872 1009 L934 990 L994 972 L1052 953 L1108 934 L1162 915 L1214 896 L1264 877 L1312 858 L1358 840 L1402 823 L1446 807 L1489 791 L1533 777 L1576 763 L1619 750 L1663 739 L1706 728 L1750 719 L1793 711 L1837 704 L1880 699 L1923 696 L1967 695 L2010 695 L2054 697 M206 1022 L222 1025 L241 1028 L265 1032 L294 1038 L328 1045 L373 1052 L424 1060 L478 1068 L536 1073 L596 1075 L659 1066 L723 1054 L787 1040 L851 1023 L914 1004 L976 986 L1036 967 L1095 949 L1151 930 L1206 911 L1258 891 L1307 873 L1355 854 L1401 837 L1446 820 L1489 804 L1533 789 L1576 774 L1619 761 L1663 748 L1706 737 L1750 727 L1793 718 L1837 710 L1880 704 L1923 700 L1967 697 L2010 696 L2054 697 L2097 700 M222 1025 L238 1028 L259 1032 L285 1037 L316 1043 L358 1051 L406 1060 L458 1068 L514 1075 L573 1079 L635 1074 L699 1064 L764 1051 L828 1036 L892 1018 L956 1000 L1018 982 L1079 964 L1138 945 L1194 926 L1249 907 L1301 887 L1351 869 L1399 851 L1445 834 L1489 817 L1533 801 L1576 786 L1619 772 L1663 759 L1706 747 L1750 736 L1793 726 L1837 717 L1880 710 L1923 705 L1967 701 L2010 699 L2054 699 L2097 700 L2140 704 M237 1028 L255 1031 L278 1036 L307 1042 L345 1050 L390 1059 L440 1067 L494 1076 L551 1081 L611 1082 L675 1074 L739 1062 L804 1049 L869 1032 L934 1014 L998 996 L1060 978 L1121 960 L1181 941 L1238 922 L1292 903 L1344 884 L1394 865 L1442 848 L1488 831 L1532 814 L1576 798 L1619 784 L1663 770 L1706 757 L1750 745 L1793 734 L1837 725 L1880 717 L1923 710 L1967 706 L2010 703 L2054 702 L2097 702 L2140 704 L2184 708 M254 1031 L274 1036 L300 1041 L335 1049 L377 1058 L424 1067 L475 1075 L530 1083 L589 1087 L651 1082 L715 1072 L779 1060 L845 1046 L910 1028 L975 1010 L1040 993 L1103 975 L1164 956 L1224 937 L1281 918 L1336 899 L1388 880 L1438 862 L1485 845 L1531 828 L1576 811 L1619 796 L1663 782 L1706 768 L1750 755 L1793 744 L1837 733 L1880 724 L1923 717 L1967 711 L2010 707 L2054 705 L2097 704 L2140 706 L2184 708 L2227 712 M273 1035 L295 1041 L327 1048 L367 1057 L410 1066 L459 1075 L511 1084 L567 1090 L628 1089 L691 1081 L755 1070 L820 1057 L885 1041 L951 1024 L1017 1007 L1082 989 L1146 971 L1207 953 L1267 933 L1324 914 L1379 895 L1431 877 L1481 859 L1529 842 L1575 825 L1619 809 L1663 794 L1706 780 L1750 766 L1793 754 L1837 743 L1880 733 L1923 725 L1967 718 L2010 713 L2054 710 L2097 708 L2140 708 L2184 710 L2227 713 L2271 717 M294 1040 L323 1048 L359 1056 L399 1065 L445 1074 L494 1083 L548 1091 L606 1094 L667 1088 L730 1079 L794 1068 L860 1054 L926 1037 L993 1021 L1059 1004 L1125 986 L1189 968 L1251 949 L1310 930 L1368 910 L1422 892 L1475 874 L1525 856 L1572 839 L1618 822 L1663 807 L1706 792 L1750 778 L1793 765 L1837 753 L1880 742 L1923 733 L1967 725 L2010 719 L2054 715 L2097 712 L2140 711 L2184 712 L2227 714 L2271 718 L2314 723 M321 1047 L354 1056 L391 1064 L433 1073 L480 1083 L530 1091 L586 1098 L645 1095 L706 1087 L769 1078 L834 1065 L901 1049 L968 1034 L1035 1017 L1102 1000 L1168 983 L1232 964 L1294 945 L1354 926 L1411 907 L1466 889 L1518 871 L1568 853 L1616 836 L1662 820 L1706 805 L1750 790 L1793 777 L1837 764 L1880 752 L1923 742 L1967 734 L2010 727 L2054 721 L2097 718 L2140 716 L2184 716 L2227 717 L2271 719 L2314 724 L2357 732 M352 1055 L386 1064 L425 1073 L468 1082 L515 1091 L568 1099 L625 1100 L684 1094 L745 1086 L809 1075 L874 1062 L941 1046 L1009 1030 L1077 1014 L1144 997 L1211 979 L1275 960 L1337 941 L1397 922 L1455 904 L1509 886 L1562 868 L1611 851 L1659 834 L1705 818 L1750 803 L1793 789 L1837 775 L1880 763 L1923 752 L1967 743 L2010 735 L2054 729 L2097 724 L2140 721 L2184 720 L2227 720 L2271 721 L2314 725 L2357 733 L2401 743 M385 1063 L420 1072 L459 1081 L503 1091 L553 1099 L607 1104 L663 1100 L722 1093 L784 1084 L849 1073 L915 1058 L983 1043 L1051 1027 L1120 1011 L1187 994 L1254 976 L1318 957 L1381 938 L1441 919 L1498 901 L1553 883 L1605 865 L1655 848 L1703 832 L1748 816 L1793 801 L1837 787 L1880 774 L1923 763 L1967 753 L2010 744 L2054 737 L2097 731 L2140 727 L2184 725 L2227 724 L2271 724 L2314 727 L2357 734 L2401 743 L2444 754 M418 1072 L454 1081 L494 1090 L541 1099 L591 1106 L644 1105 L701 1100 L761 1092 L824 1082 L889 1069 L956 1054 L1025 1040 L1094 1025 L1162 1008 L1231 991 L1297 972 L1362 953 L1424 934 L1484 916 L1542 898 L1596 880 L1648 863 L1698 846 L1746 830 L1792 815 L1836 800 L1880 786 L1923 774 L1967 763 L2010 753 L2054 745 L2097 739 L2140 734 L2184 731 L2227 729 L2271 728 L2314 730 L2357 736 L2401 744 L2444 755 L2488 768 M452 1081 L489 1090 L532 1099 L579 1107 L629 1108 L682 1105 L739 1099 L800 1090 L864 1079 L930 1065 L998 1051 L1067 1037 L1136 1022 L1206 1005 L1274 987 L1341 968 L1405 950 L1468 931 L1528 913 L1585 895 L1640 877 L1692 860 L1742 844 L1789 828 L1835 813 L1880 799 L1923 786 L1967 774 L2010 764 L2054 755 L2097 748 L2140 742 L2184 738 L2227 735 L2271 733 L2314 734 L2357 739 L2401 746 L2444 756 L2488 768 L2531 781 M487 1090 L527 1099 L570 1107 L616 1111 L666 1108 L720 1104 L778 1097 L840 1088 L904 1075 L971 1062 L1040 1049 L1109 1034 L1179 1019 L1249 1002 L1318 983 L1384 965 L1449 946 L1511 928 L1571 910 L1629 892 L1683 875 L1735 858 L1785 842 L1833 826 L1879 812 L1923 798 L1967 786 L2010 775 L2054 765 L2097 757 L2140 750 L2184 745 L2227 741 L2271 739 L2314 739 L2357 742 L2401 749 L2444 758 L2488 769 L2531 782 L2575 798 M525 1099 L564 1107 L607 1113 L653 1111 L704 1108 L759 1103 L818 1095 L880 1084 L945 1072 L1013 1060 L1082 1046 L1153 1032 L1223 1015 L1293 998 L1361 980 L1428 962 L1493 943 L1555 925 L1615 907 L1672 890 L1727 873 L1779 856 L1829 840 L1876 825 L1922 811 L1967 798 L2010 786 L2054 776 L2097 767 L2140 759 L2184 753 L2227 749 L2271 745 L2314 744 L2357 747 L2401 753 L2444 760 L2488 771 L2531 783 L2575 798 L2618 820 M562 1107 L601 1113 L644 1113 L691 1111 L743 1108 L798 1101 L858 1093 L921 1081 L987 1069 L1055 1057 L1125 1044 L1196 1029 L1267 1012 L1336 994 L1405 976 L1472 958 L1536 940 L1599 922 L1659 905 L1716 887 L1770 870 L1822 854 L1872 839 L1920 824 L1966 811 L2010 798 L2054 787 L2097 778 L2140 769 L2184 762 L2227 757 L2271 752 L2314 750 L2357 752 L2401 757 L2444 764 L2488 773 L2531 784 L2575 799 L2618 820 L2661 846 M599 1114 L638 1115 L682 1114 L729 1111 L781 1106 L838 1100 L899 1089 L963 1078 L1029 1067 L1098 1055 L1169 1041 L1240 1025 L1310 1008 L1380 991 L1448 973 L1515 955 L1580 937 L1642 919 L1702 902 L1759 885 L1814 868 L1866 852 L1916 838 L1963 824 L2009 811 L2053 799 L2097 789 L2140 780 L2184 772 L2227 765 L2271 760 L2314 757 L2357 758 L2401 762 L2444 768 L2488 776 L2531 787 L2575 801 L2618 821 L2661 846 L2705 871 M636 1115 L676 1115 L720 1113 L768 1110 L821 1105 L879 1096 L940 1086 L1005 1076 L1072 1065 L1142 1052 L1212 1038 L1283 1022 L1354 1005 L1424 987 L1492 970 L1559 952 L1624 934 L1686 917 L1746 900 L1803 883 L1858 867 L1910 851 L1959 837 L2007 824 L2052 811 L2097 800 L2140 791 L2184 782 L2227 775 L2271 769 L2314 765 L2357 765 L2401 767 L2444 772 L2488 780 L2531 789 L2575 803 L2618 822 L2661 847 L2705 872 L2748 897 M674 1115 L714 1115 L758 1113 L808 1109 L862 1102 L920 1093 L982 1084 L1048 1073 L1116 1062 L1186 1049 L1256 1035 L1327 1018 L1398 1001 L1468 984 L1536 967 L1603 949 L1668 932 L1730 914 L1790 897 L1847 881 L1901 865 L1953 850 L2003 837 L2050 824 L2096 812 L2140 802 L2184 793 L2227 785 L2271 778 L2314 773 L2357 772 L2401 774 L2444 778 L2488 784 L2531 793 L2575 806 L2618 824 L2661 848 L2705 872 L2748 897 L2792 922 M712 1115 L752 1114 L798 1111 L848 1107 L903 1098 L962 1090 L1025 1081 L1091 1071 L1160 1060 L1229 1046 L1300 1031 L1371 1015 L1442 998 L1512 981 L1580 964 L1647 946 L1712 929 L1774 912 L1834 895 L1891 879 L1945 864 L1997 850 L2046 837 L2094 825 L2139 814 L2184 804 L2227 795 L2271 787 L2314 782 L2357 780 L2401 780 L2444 784 L2488 789 L2531 797 L2575 809 L2618 826 L2661 849 L2705 873 L2748 898 L2792 922 L2835 947 M750 1115 L792 1113 L838 1110 L889 1103 L945 1096 L1005 1088 L1069 1079 L1135 1069 L1203 1057 L1273 1043 L1344 1028 L1415 1011 L1486 995 L1556 978 L1625 961 L1691 943 L1756 926 L1818 910 L1877 893 L1934 878 L1989 863 L2040 850 L2090 837 L2137 826 L2183 815 L2227 806 L2271 798 L2314 791 L2357 788 L2401 788 L2444 790 L2488 795 L2531 802 L2575 813 L2618 829 L2661 851 L2705 874 L2748 898 L2792 922 L2835 947 M790 1114 L832 1112 L879 1106 L931 1100 L988 1093 L1048 1086 L1112 1077 L1179 1066 L1247 1054 L1317 1040 L1388 1024 L1459 1008 L1530 991 L1600 975 L1669 958 L1735 941 L1800 924 L1862 907 L1921 892 L1978 877 L2032 863 L2084 850 L2133 838 L2181 827 L2226 817 L2271 808 L2314 801 L2357 797 L2401 796 L2444 797 L2488 801 L2531 807 L2575 817 L2618 833 L2661 854 L2705 876 L2748 899 L2792 923 L2835 947 M830 1112 L873 1109 L921 1103 L974 1098 L1031 1091 L1092 1084 L1156 1075 L1223 1063 L1291 1050 L1361 1036 L1433 1021 L1504 1005 L1575 988 L1645 972 L1713 955 L1780 938 L1844 922 L1906 906 L1965 890 L2022 876 L2076 863 L2128 850 L2177 839 L2224 828 L2270 819 L2314 811 L2357 806 L2401 804 L2444 805 L2488 808 L2531 813 L2575 822 L2618 837 L2661 857 L2705 878 L2748 900 L2792 923 L2835 947 M871 1109 L915 1105 L964 1101 L1017 1096 L1075 1089 L1136 1081 L1200 1072 L1267 1060 L1336 1047 L1406 1032 L1477 1017 L1548 1001 L1619 985 L1689 969 L1757 952 L1824 936 L1888 919 L1950 904 L2010 889 L2066 876 L2120 863 L2171 851 L2220 840 L2268 830 L2313 822 L2357 816 L2401 813 L2444 813 L2488 815 L2531 819 L2575 827 L2618 841 L2661 860 L2705 880 L2748 902 L2792 924 L2835 947 M913 1106 L958 1103 L1007 1099 L1061 1094 L1119 1087 L1180 1079 L1244 1069 L1311 1057 L1380 1043 L1451 1029 L1522 1014 L1593 998 L1664 982 L1734 966 L1802 949 L1869 933 L1933 918 L1995 903 L2054 889 L2110 875 L2164 863 L2215 852 L2264 841 L2311 832 L2357 826 L2401 822 L2444 821 L2488 822 L2531 825 L2575 833 L2618 845 L2661 864 L2705 883 L2748 903 L2792 925 L2835 947 M956 1103 L1001 1100 L1051 1097 L1105 1092 L1163 1085 L1224 1076 L1289 1066 L1356 1053 L1425 1040 L1496 1026 L1567 1011 L1638 995 L1709 979 L1779 963 L1847 947 L1913 931 L1978 916 L2039 902 L2098 888 L2154 875 L2208 864 L2259 853 L2308 843 L2355 836 L2400 832 L2444 830 L2488 830 L2531 832 L2575 839 L2618 851 L2661 867 L2705 885 L2748 905 L2792 926 L2835 947 M999 1101 L1045 1099 L1095 1095 L1149 1089 L1207 1082 L1269 1073 L1334 1062 L1401 1050 L1470 1036 L1541 1022 L1612 1007 L1683 992 L1754 976 L1824 960 L1892 945 L1958 929 L2022 915 L2084 901 L2143 888 L2199 876 L2252 864 L2303 854 L2351 846 L2398 841 L2443 838 L2488 838 L2531 840 L2575 845 L2618 856 L2661 872 L2705 889 L2748 907 L2792 927 L2835 947 M1043 1099 L1089 1097 L1139 1093 L1194 1087 L1252 1079 L1314 1070 L1379 1059 L1446 1046 L1516 1033 L1586 1019 L1657 1004 L1728 989 L1799 973 L1869 958 L1937 943 L2004 928 L2067 914 L2129 900 L2187 888 L2243 876 L2296 865 L2347 857 L2395 851 L2442 847 L2487 846 L2531 847 L2575 852 L2618 862 L2661 876 L2705 892 L2748 910 L2792 928 L2835 947 M1087 1097 L1133 1095 L1184 1090 L1238 1084 L1297 1076 L1359 1066 L1424 1055 L1492 1043 L1561 1030 L1631 1016 L1703 1001 L1774 986 L1845 971 L1915 955 L1983 941 L2049 926 L2113 912 L2173 900 L2232 888 L2287 876 L2340 867 L2391 861 L2439 856 L2485 855 L2530 855 L2574 859 L2618 868 L2661 881 L2705 896 L2748 912 L2792 929 L2835 947 M1131 1095 L1177 1092 L1228 1088 L1283 1081 L1342 1072 L1405 1063 L1470 1051 L1537 1039 L1606 1026 L1677 1012 L1749 998 L1820 983 L1891 968 L1961 953 L2029 939 L2095 925 L2158 912 L2218 899 L2276 888 L2332 877 L2384 870 L2435 865 L2483 863 L2529 863 L2574 866 L2618 874 L2661 886 L2705 900 L2748 915 L2792 931 L2835 947 M1175 1093 L1222 1090 L1273 1084 L1329 1077 L1388 1069 L1450 1059 L1515 1048 L1583 1036 L1653 1023 L1724 1009 L1795 995 L1867 980 L1938 966 L2007 951 L2075 937 L2140 924 L2203 911 L2264 899 L2321 888 L2376 880 L2429 875 L2479 872 L2526 871 L2572 873 L2617 880 L2661 892 L2705 904 L2748 917 L2792 932 L2835 947 M1220 1090 L1267 1087 L1319 1081 L1375 1074 L1434 1065 L1496 1055 L1561 1045 L1630 1032 L1699 1020 L1771 1006 L1842 992 L1914 977 L1985 963 L2054 949 L2121 936 L2186 923 L2249 910 L2309 899 L2367 890 L2421 884 L2473 880 L2523 878 L2570 880 L2616 886 L2661 897 L2705 908 L2748 920 L2792 934 L2835 947 M1265 1087 L1313 1083 L1365 1077 L1420 1070 L1479 1062 L1542 1052 L1608 1041 L1676 1029 L1747 1016 L1818 1003 L1890 989 L1961 975 L2032 961 L2100 947 L2167 934 L2232 922 L2295 910 L2355 900 L2412 893 L2466 888 L2517 886 L2567 887 L2614 893 L2660 902 L2704 912 L2748 923 L2792 936 L2835 947 M1311 1084 L1359 1080 L1410 1074 L1466 1067 L1526 1058 L1589 1048 L1655 1038 L1724 1026 L1794 1013 L1866 1000 L1938 986 L2009 972 L2079 959 L2147 946 L2214 933 L2279 921 L2342 910 L2401 902 L2457 897 L2511 894 L2562 893 L2611 899 L2658 907 L2704 916 L2748 926 L2792 938 L2835 947 M1357 1080 L1405 1076 L1456 1070 L1513 1063 L1573 1055 L1637 1045 L1703 1034 L1772 1022 L1843 1010 L1914 997 L1986 983 L2057 970 L2126 957 L2195 944 L2262 932 L2327 920 L2388 911 L2447 905 L2503 902 L2556 900 L2607 905 L2655 912 L2702 920 L2747 929 L2791 939 L2835 947 M1403 1077 L1450 1072 L1503 1067 L1560 1059 L1621 1051 L1685 1041 L1752 1031 L1821 1019 L1892 1007 L1963 994 L2034 981 L2105 968 L2175 955 L2244 942 L2310 930 L2374 920 L2435 913 L2493 909 L2548 907 L2601 910 L2652 917 L2700 925 L2746 932 L2791 941 L2835 947 M1448 1073 L1497 1069 L1550 1063 L1608 1056 L1669 1047 L1734 1038 L1801 1027 L1870 1016 L1941 1004 L2012 991 L2083 978 L2154 966 L2224 953 L2293 941 L2359 930 L2422 922 L2482 917 L2540 914 L2595 916 L2647 922 L2697 929 L2745 935 L2790 943 L2835 947 M1495 1069 L1545 1065 L1598 1059 L1656 1052 L1718 1044 L1783 1034 L1850 1024 L1920 1012 L1990 1001 L2061 988 L2133 976 L2204 963 L2274 951 L2342 939 L2408 930 L2470 924 L2530 921 L2587 922 L2642 927 L2694 933 L2743 938 L2790 945 L2835 947 M1543 1066 L1593 1061 L1647 1056 L1706 1048 L1768 1040 L1833 1031 L1901 1020 L1970 1009 L2040 998 L2112 985 L2184 973 L2256 961 L2325 949 L2392 939 L2456 932 L2518 928 L2578 927 L2635 931 L2689 937 L2740 942 L2788 947 L2835 947 M1591 1062 L1641 1058 L1696 1052 L1755 1045 L1818 1036 L1884 1027 L1951 1017 L2020 1006 L2091 994 L2164 983 L2236 970 L2307 958 L2376 948 L2442 940 L2506 935 L2568 933 L2627 936 L2684 942 L2737 945 L2787 949 L2835 947 M1639 1058 L1691 1054 L1746 1048 L1806 1041 L1869 1033 L1935 1024 L2002 1014 L2072 1003 L2145 991 L2217 980 L2289 968 L2359 956 L2427 948 L2492 942 L2557 939 L2619 941 L2678 946 L2733 948 L2785 951 L2835 947 M1689 1055 L1741 1050 L1797 1044 L1858 1037 L1920 1029 L1986 1020 L2055 1010 L2127 999 L2199 988 L2271 977 L2342 965 L2411 955 L2478 949 L2545 945 L2609 946 L2671 950 L2729 951 L2783 953 L2835 947 M1739 1051 L1792 1046 L1849 1041 L1909 1034 L1972 1026 L2039 1017 L2110 1007 L2182 996 L2254 985 L2325 973 L2395 963 L2464 956 L2532 951 L2599 951 L2663 954 L2724 954 L2780 955 L2835 947 M1790 1047 L1844 1043 L1901 1037 L1961 1030 L2026 1022 L2095 1013 L2166 1003 L2237 992 L2309 981 L2379 971 L2449 963 L2519 957 L2589 956 L2655 958 L2718 958 L2777 957 L2835 947 M1842 1043 L1896 1039 L1953 1033 L2015 1027 L2082 1018 L2152 1009 L2222 999 L2294 989 L2364 978 L2435 969 L2506 963 L2578 960 L2647 962 L2713 961 L2774 959 L2835 947 M1894 1040 L1948 1035 L2007 1030 L2072 1023 L2140 1014 L2209 1005 L2279 995 L2350 985 L2421 976 L2493 969 L2567 965 L2638 966 L2706 965 L2770 962 L2835 947 M1946 1036 L2002 1032 L2064 1026 L2130 1018 L2197 1010 L2267 1001 L2337 991 L2408 982 L2481 974 L2556 970 L2630 970 L2700 969 L2767 964 L2835 947 M2001 1032 L2060 1027 L2123 1021 L2188 1014 L2256 1006 L2325 996 L2396 987 L2469 980 L2545 975 L2621 974 L2694 973 L2763 966 L2835 947 M2058 1028 L2118 1023 L2181 1017 L2248 1010 L2315 1001 L2385 992 L2458 985 L2535 979 L2612 978 L2688 976 L2759 969 L2835 947 M2117 1024 L2177 1019 L2241 1012 L2307 1005 L2376 996 L2449 989 L2526 983 L2605 982 L2682 980 L2756 971 L2835 947 M2176 1019 L2237 1014 L2301 1007 L2368 1000 L2441 993 L2518 987 L2597 985 L2676 983 L2752 974 L2835 947 M2236 1015 L2297 1009 L2363 1002 L2434 995 L2511 990 L2591 988 L2671 986 L2748 976 L2835 947 M2296 1010 L2360 1004 L2429 998 L2505 993 L2585 990 L2666 989 L2745 978 L2835 947 M2358 1004 L2426 999 L2501 994 L2581 992 L2662 991 L2743 980 L2835 947 M2425 999 L2499 996 L2578 993 L2659 992 L2740 981 L2835 947 M2498 996 L2576 994 L2656 994 L2738 983 L2835 947 M2575 994 L2655 994 L2737 984 L2835 947 M2654 995 L2736 984 L2835 947 M2736 985 L2835 947" fill="none" stroke="#250700" stroke-width="1.4" opacity="0.72"/><path d="M2813 932 L2835 947 M2770 910 L2813 932 L2835 947 M2726 884 L2770 910 L2813 932 L2835 947 M2683 859 L2726 884 L2770 910 L2813 933 L2835 947 M2640 832 L2683 860 L2726 885 L2770 911 L2813 933 L2835 947 M2596 809 L2640 832 L2683 860 L2726 886 L2770 912 L2813 934 L2835 947 M2553 789 L2596 810 L2640 833 L2683 862 L2726 887 L2770 913 L2813 934 L2835 947 M2509 775 L2553 789 L2596 811 L2640 835 L2683 863 L2726 889 L2770 914 L2813 935 L2835 947 M2466 761 L2509 775 L2553 791 L2596 813 L2640 837 L2683 865 L2726 890 L2770 915 L2813 936 L2835 947 M2423 748 L2466 762 L2509 777 L2553 793 L2596 815 L2640 839 L2683 868 L2726 892 L2770 917 L2813 937 L2835 947 M2379 737 L2423 749 L2466 763 L2509 779 L2553 795 L2596 818 L2640 842 L2683 870 L2726 895 L2770 919 L2813 937 L2835 947 M2336 727 L2379 738 L2423 751 L2466 765 L2509 781 L2553 798 L2596 821 L2640 845 L2683 873 L2726 897 L2770 921 L2813 938 L2835 947 M2292 720 L2336 728 L2379 740 L2423 753 L2466 768 L2509 785 L2553 802 L2596 825 L2640 849 L2683 877 L2726 900 L2770 923 L2813 939 L2835 947 M2249 715 L2292 721 L2336 730 L2379 742 L2423 756 L2466 772 L2509 789 L2553 806 L2596 829 L2640 853 L2683 881 L2726 903 L2770 925 L2813 941 L2835 947 M2206 710 L2249 716 L2292 723 L2336 733 L2379 745 L2423 760 L2466 776 L2509 793 L2553 811 L2596 834 L2640 858 L2683 885 L2726 907 L2770 927 L2813 942 L2835 947 M2162 706 L2206 711 L2249 717 L2292 725 L2336 736 L2379 749 L2423 764 L2466 781 L2509 798 L2553 816 L2596 839 L2640 863 L2683 889 L2726 910 L2770 930 L2813 943 L2835 947 M2119 702 L2162 707 L2206 713 L2249 720 L2292 729 L2336 740 L2379 754 L2423 769 L2466 786 L2509 804 L2553 822 L2596 844 L2640 868 L2683 893 L2726 914 L2770 932 L2813 944 L2835 947 M2075 699 L2119 703 L2162 709 L2206 716 L2249 724 L2292 733 L2336 745 L2379 760 L2423 775 L2466 792 L2509 810 L2553 828 L2596 850 L2640 873 L2683 898 L2726 917 L2769 934 L2813 945 L2835 947 M2032 696 L2075 700 L2119 705 L2162 712 L2206 720 L2249 728 L2292 738 L2336 751 L2379 766 L2423 782 L2466 799 L2509 817 L2553 834 L2596 857 L2640 879 L2683 903 L2726 921 L2769 937 L2812 947 L2835 947 M1988 693 L2032 697 L2075 702 L2119 708 L2162 715 L2206 724 L2249 734 L2292 744 L2336 757 L2379 772 L2423 789 L2466 806 L2509 824 L2553 841 L2596 863 L2639 885 L2682 907 L2725 925 L2768 939 L2812 948 L2835 947 M1945 692 L1988 695 L2032 699 L2075 705 L2119 712 L2162 720 L2206 730 L2249 740 L2292 751 L2336 764 L2379 780 L2423 796 L2466 813 L2509 831 L2553 849 L2596 870 L2639 891 L2681 912 L2723 928 L2766 942 L2811 949 L2835 947 M1902 691 L1945 693 L1988 697 L2032 702 L2075 709 L2119 716 L2162 726 L2206 736 L2249 747 L2292 758 L2336 772 L2379 788 L2423 804 L2466 821 L2509 839 L2553 856 L2595 876 L2637 896 L2679 917 L2721 932 L2765 944 L2810 951 L2835 947 M1858 691 L1902 692 L1945 695 L1988 700 L2032 706 L2075 714 L2119 722 L2162 732 L2206 743 L2249 754 L2292 766 L2336 780 L2379 796 L2423 812 L2466 830 L2509 847 L2552 863 L2593 883 L2635 902 L2676 922 L2718 935 L2762 947 L2808 952 L2835 947 M1815 692 L1858 692 L1902 694 L1945 699 L1988 704 L2032 711 L2075 719 L2119 729 L2162 740 L2206 751 L2249 763 L2292 775 L2336 789 L2379 805 L2423 821 L2466 838 L2508 855 L2550 871 L2591 889 L2631 908 L2673 926 L2715 939 L2759 949 L2807 954 L2835 947 M1771 692 L1815 693 L1858 694 L1902 698 L1945 703 L1988 709 L2032 717 L2075 726 L2119 736 L2162 748 L2206 759 L2249 772 L2292 784 L2336 799 L2379 814 L2422 830 L2464 847 L2506 863 L2547 878 L2587 896 L2627 913 L2668 931 L2711 943 L2756 952 L2805 955 L2835 947 M1728 693 L1771 694 L1815 695 L1858 697 L1902 702 L1945 708 L1988 715 L2032 724 L2075 734 L2119 744 L2162 756 L2206 769 L2249 781 L2292 794 L2336 808 L2379 824 L2421 840 L2462 855 L2503 871 L2542 886 L2582 902 L2621 918 L2662 935 L2706 947 L2752 955 L2803 957 L2835 947 M1685 695 L1728 695 L1771 696 L1815 698 L1858 702 L1902 707 L1945 714 L1988 722 L2032 731 L2075 742 L2119 753 L2162 766 L2206 778 L2249 791 L2292 804 L2335 818 L2377 834 L2419 849 L2459 864 L2498 879 L2537 893 L2575 908 L2614 924 L2656 939 L2700 950 L2748 957 L2801 959 L2835 947 M1641 696 L1685 696 L1728 697 L1771 699 L1815 702 L1858 707 L1902 713 L1945 721 L1988 730 L2032 740 L2075 751 L2119 763 L2162 776 L2206 789 L2249 802 L2292 815 L2334 829 L2375 843 L2415 858 L2454 873 L2492 887 L2530 900 L2568 914 L2607 929 L2649 943 L2694 954 L2744 960 L2798 961 L2835 947 M1598 698 L1641 697 L1685 698 L1728 700 L1771 703 L1815 708 L1858 713 L1902 720 L1945 729 L1988 738 L2032 749 L2075 761 L2119 773 L2162 786 L2206 799 L2248 812 L2291 825 L2331 839 L2371 853 L2410 868 L2447 881 L2484 895 L2521 908 L2559 920 L2598 934 L2641 948 L2687 959 L2739 963 L2796 962 L2835 947 M1554 700 L1598 699 L1641 700 L1685 701 L1728 704 L1771 709 L1815 714 L1858 720 L1902 728 L1945 738 L1988 748 L2032 759 L2075 771 L2119 784 L2162 797 L2205 810 L2247 823 L2288 836 L2327 850 L2366 863 L2403 877 L2439 890 L2475 903 L2511 915 L2548 927 L2588 939 L2632 952 L2680 963 L2734 966 L2794 964 L2835 947 M1511 703 L1554 701 L1598 701 L1641 703 L1685 706 L1728 710 L1771 715 L1815 721 L1858 729 L1902 737 L1945 747 L1988 758 L2032 770 L2075 782 L2119 795 L2162 809 L2204 822 L2244 835 L2284 848 L2322 860 L2358 874 L2394 886 L2430 899 L2465 911 L2500 922 L2537 933 L2577 945 L2623 957 L2673 967 L2729 970 L2791 966 L2835 947 M1468 706 L1511 704 L1554 704 L1598 705 L1641 707 L1685 711 L1728 716 L1771 722 L1815 729 L1858 737 L1902 747 L1945 758 L1988 769 L2032 781 L2075 794 L2118 807 L2160 820 L2201 834 L2240 846 L2278 859 L2314 871 L2349 884 L2384 896 L2418 908 L2453 919 L2487 930 L2525 940 L2566 950 L2613 961 L2665 971 L2724 973 L2789 968 L2835 947 M1424 709 L1468 707 L1511 706 L1554 707 L1598 709 L1641 713 L1685 718 L1728 724 L1771 731 L1815 738 L1858 747 L1902 757 L1945 769 L1988 780 L2032 793 L2075 806 L2117 819 L2157 832 L2196 845 L2234 858 L2270 870 L2304 882 L2338 894 L2372 906 L2405 917 L2439 927 L2474 937 L2512 947 L2554 955 L2603 966 L2658 974 L2719 976 L2787 969 L2835 947 M1381 712 L1424 710 L1468 709 L1511 710 L1554 712 L1598 715 L1641 719 L1685 725 L1728 732 L1771 740 L1815 748 L1858 758 L1902 768 L1945 780 L1988 792 L2031 805 L2073 818 L2114 831 L2153 844 L2190 857 L2225 870 L2260 882 L2293 893 L2325 904 L2358 915 L2391 926 L2425 935 L2460 944 L2499 953 L2542 961 L2593 970 L2650 978 L2714 979 L2784 971 L2835 947 M1337 715 L1381 713 L1424 712 L1468 712 L1511 714 L1554 717 L1598 721 L1641 727 L1685 733 L1728 741 L1771 750 L1815 759 L1858 769 L1902 780 L1945 792 L1988 804 L2030 817 L2070 831 L2109 844 L2146 857 L2181 869 L2215 882 L2248 893 L2279 904 L2311 915 L2343 925 L2375 935 L2409 944 L2445 952 L2485 960 L2530 966 L2583 974 L2643 981 L2710 981 L2783 972 L2835 947 M1294 720 L1337 717 L1381 715 L1424 715 L1468 717 L1511 720 L1554 723 L1598 729 L1641 735 L1685 742 L1728 751 L1771 760 L1815 770 L1858 781 L1902 792 L1945 805 L1986 817 L2027 830 L2065 843 L2102 856 L2137 869 L2171 882 L2203 894 L2234 905 L2264 916 L2295 926 L2326 935 L2359 944 L2393 952 L2429 959 L2471 966 L2518 972 L2574 978 L2636 984 L2706 984 L2781 973 L2835 947 M1250 725 L1294 721 L1337 719 L1381 719 L1424 720 L1468 722 L1511 726 L1554 731 L1598 737 L1641 744 L1685 752 L1728 762 L1771 772 L1815 782 L1858 793 L1901 805 L1943 817 L1983 830 L2022 843 L2059 856 L2093 869 L2127 882 L2158 894 L2188 905 L2218 916 L2247 927 L2277 936 L2309 945 L2342 953 L2377 960 L2414 966 L2458 972 L2507 977 L2566 982 L2630 987 L2703 986 L2779 975 L2835 947 M1207 730 L1250 726 L1294 723 L1337 722 L1381 723 L1424 725 L1468 729 L1511 734 L1554 739 L1598 746 L1641 754 L1685 763 L1728 773 L1771 783 L1815 794 L1858 806 L1899 818 L1940 831 L1978 843 L2015 856 L2050 869 L2082 882 L2114 894 L2143 906 L2172 917 L2200 928 L2229 938 L2259 947 L2290 955 L2324 962 L2360 968 L2399 973 L2445 978 L2496 982 L2558 985 L2625 990 L2700 988 L2778 975 L2835 947 M1164 736 L1207 731 L1250 728 L1294 726 L1337 727 L1381 728 L1424 732 L1468 736 L1511 742 L1554 749 L1598 756 L1641 765 L1685 775 L1728 785 L1771 796 L1814 807 L1856 819 L1896 831 L1935 844 L1971 857 L2006 870 L2038 882 L2069 895 L2098 907 L2127 918 L2154 929 L2181 939 L2209 949 L2240 957 L2272 964 L2307 971 L2344 976 L2385 980 L2433 983 L2486 986 L2551 988 L2621 992 L2697 989 L2778 976 L2835 947 M1120 742 L1164 737 L1207 733 L1250 731 L1294 731 L1337 732 L1381 735 L1424 739 L1468 745 L1511 751 L1554 759 L1598 767 L1641 777 L1685 787 L1728 798 L1771 809 L1813 820 L1853 832 L1891 845 L1927 858 L1962 870 L1994 883 L2025 896 L2054 908 L2081 919 L2108 930 L2134 941 L2161 950 L2189 959 L2220 967 L2253 974 L2289 979 L2329 983 L2372 986 L2422 988 L2478 990 L2545 991 L2618 993 L2696 990 L2777 976 M1077 749 L1120 743 L1164 739 L1207 737 L1250 736 L1294 736 L1337 739 L1381 743 L1424 748 L1468 754 L1511 762 L1554 770 L1598 779 L1641 789 L1685 799 L1727 811 L1769 822 L1809 834 L1848 846 L1884 859 L1918 872 L1950 884 L1980 897 L2009 909 L2036 921 L2062 932 L2088 942 L2113 952 L2140 961 L2168 970 L2200 977 L2235 982 L2273 987 L2315 990 L2360 992 L2412 992 L2471 993 L2541 993 L2615 994 L2695 991 M1033 756 L1077 750 L1120 745 L1164 742 L1207 741 L1250 741 L1294 743 L1337 746 L1381 751 L1424 757 L1468 764 L1511 772 L1554 781 L1598 791 L1641 801 L1684 812 L1726 824 L1766 836 L1804 848 L1840 860 L1874 873 L1906 885 L1936 898 L1964 910 L1991 922 L2016 933 L2041 944 L2066 954 L2092 964 L2118 972 L2148 979 L2181 985 L2218 990 L2258 994 L2302 996 L2349 996 L2405 996 L2466 995 L2538 994 L2614 995 M990 763 L1033 757 L1077 752 L1120 748 L1164 747 L1207 746 L1250 748 L1294 750 L1337 755 L1381 760 L1424 767 L1468 775 L1511 784 L1554 793 L1598 804 L1641 815 L1682 826 L1722 838 L1761 850 L1797 862 L1831 875 L1862 887 L1892 899 L1920 912 L1946 924 L1971 935 L1995 946 L2019 956 L2044 966 L2069 974 L2097 982 L2128 989 L2163 994 L2201 998 L2244 1000 L2291 1001 L2340 1000 L2398 998 L2462 997 L2536 995 M947 771 L990 764 L1033 759 L1077 755 L1120 753 L1164 752 L1207 753 L1250 755 L1294 759 L1337 764 L1381 771 L1424 778 L1468 787 L1511 796 L1554 806 L1597 817 L1639 828 L1679 840 L1717 852 L1753 864 L1787 877 L1819 889 L1848 901 L1875 913 L1901 925 L1926 937 L1949 948 L1973 958 L1997 968 L2021 977 L2047 985 L2076 992 L2108 997 L2146 1001 L2187 1004 L2232 1006 L2281 1005 L2334 1004 L2394 1000 L2460 997 M903 780 L947 772 L990 766 L1033 762 L1077 759 L1120 758 L1164 758 L1207 760 L1250 764 L1294 768 L1337 774 L1381 781 L1424 790 L1468 799 L1511 809 L1554 819 L1595 831 L1636 842 L1674 854 L1710 866 L1743 879 L1775 891 L1804 903 L1831 916 L1857 927 L1880 939 L1904 950 L1926 961 L1949 970 L1973 979 L1999 987 L2026 994 L2056 1000 L2090 1005 L2130 1008 L2174 1010 L2222 1010 L2274 1009 L2329 1006 L2392 1001 M860 789 L903 781 L947 774 L990 770 L1033 766 L1077 765 L1120 764 L1164 766 L1207 769 L1250 773 L1294 778 L1337 785 L1381 793 L1424 802 L1468 812 L1510 822 L1552 833 L1592 845 L1630 857 L1666 869 L1700 881 L1731 893 L1760 906 L1787 918 L1812 930 L1836 941 L1858 952 L1880 963 L1902 973 L1925 982 L1950 990 L1976 997 L2005 1003 L2037 1008 L2074 1012 L2117 1014 L2163 1014 L2214 1013 L2269 1011 L2327 1007 M816 798 L860 790 L903 783 L947 777 L990 774 L1033 771 L1077 771 L1120 772 L1164 774 L1207 778 L1250 783 L1294 789 L1337 797 L1381 805 L1424 815 L1467 825 L1509 836 L1549 847 L1587 859 L1623 871 L1656 883 L1688 896 L1716 908 L1743 920 L1768 932 L1791 944 L1813 955 L1834 966 L1856 975 L1878 985 L1902 993 L1927 1000 L1955 1006 L1986 1012 L2020 1015 L2060 1018 L2105 1019 L2155 1018 L2209 1016 L2267 1012 M773 807 L816 799 L860 791 L903 786 L947 782 L990 779 L1033 778 L1077 778 L1120 780 L1164 783 L1207 788 L1250 794 L1294 801 L1337 809 L1381 818 L1424 828 L1465 839 L1505 850 L1543 862 L1579 874 L1613 886 L1644 898 L1673 911 L1699 923 L1724 935 L1746 946 L1768 958 L1789 968 L1810 978 L1831 987 L1854 996 L1878 1003 L1905 1010 L1935 1015 L1968 1019 L2005 1021 L2048 1023 L2097 1022 L2149 1020 L2206 1017 M730 817 L773 808 L816 801 L860 794 L903 790 L947 787 L990 785 L1033 785 L1077 786 L1120 789 L1164 793 L1207 799 L1250 805 L1294 813 L1337 822 L1380 832 L1422 842 L1462 853 L1500 865 L1536 877 L1569 889 L1600 901 L1629 913 L1655 925 L1680 937 L1702 949 L1723 960 L1744 971 L1764 981 L1785 990 L1806 999 L1830 1006 L1856 1013 L1885 1018 L1917 1022 L1953 1025 L1993 1026 L2039 1026 L2091 1025 L2147 1021 M686 827 L730 818 L773 810 L816 803 L860 798 L903 795 L947 792 L990 792 L1033 793 L1077 795 L1120 799 L1164 804 L1207 810 L1250 817 L1294 826 L1337 835 L1378 845 L1418 856 L1456 868 L1492 880 L1526 892 L1557 904 L1585 916 L1612 928 L1636 940 L1658 952 L1679 963 L1699 974 L1719 984 L1739 994 L1759 1002 L1782 1010 L1807 1016 L1835 1021 L1867 1026 L1902 1028 L1940 1030 L1983 1030 L2033 1029 L2088 1026 M643 837 L686 828 L730 819 L773 813 L816 807 L860 803 L903 800 L947 799 L990 800 L1033 801 L1077 805 L1120 809 L1164 815 L1207 822 L1250 830 L1293 839 L1335 849 L1375 860 L1413 871 L1449 883 L1482 895 L1513 907 L1542 919 L1568 931 L1592 943 L1614 955 L1635 966 L1654 977 L1673 987 L1693 997 L1713 1005 L1735 1013 L1759 1019 L1786 1025 L1816 1029 L1851 1032 L1889 1034 L1930 1034 L1977 1033 L2030 1030 M599 847 L643 838 L686 829 L730 822 L773 816 L816 812 L860 809 L903 807 L947 807 L990 808 L1033 811 L1077 815 L1120 820 L1164 827 L1207 835 L1250 843 L1292 853 L1332 863 L1370 874 L1405 886 L1439 898 L1470 910 L1498 922 L1524 934 L1548 946 L1570 958 L1590 969 L1610 980 L1629 990 L1647 1000 L1667 1008 L1688 1016 L1711 1023 L1737 1028 L1767 1033 L1800 1035 L1837 1037 L1879 1037 L1924 1036 L1974 1034 M556 858 L599 848 L643 839 L686 832 L730 826 L773 821 L816 818 L860 816 L903 815 L947 815 L990 818 L1033 821 L1077 826 L1120 832 L1164 840 L1207 848 L1248 857 L1288 867 L1326 878 L1362 889 L1395 901 L1426 913 L1455 925 L1481 937 L1504 949 L1526 961 L1546 972 L1565 983 L1584 993 L1602 1003 L1621 1012 L1642 1019 L1664 1026 L1689 1032 L1718 1036 L1750 1039 L1786 1041 L1827 1041 L1872 1040 L1920 1038 M512 869 L556 859 L599 850 L643 842 L686 836 L730 830 L773 826 L816 824 L860 823 L903 823 L947 825 L990 828 L1033 832 L1077 838 L1120 845 L1163 853 L1205 862 L1245 871 L1283 882 L1319 893 L1352 905 L1383 916 L1411 928 L1437 940 L1461 952 L1482 964 L1502 975 L1521 986 L1539 997 L1558 1006 L1576 1015 L1596 1023 L1618 1030 L1642 1035 L1669 1040 L1701 1043 L1736 1044 L1776 1045 L1820 1044 L1868 1041 M469 882 L512 870 L556 860 L599 852 L643 845 L686 840 L730 836 L773 833 L816 831 L860 831 L903 832 L947 835 L990 838 L1033 844 L1077 850 L1120 858 L1161 866 L1201 876 L1239 886 L1275 897 L1309 908 L1339 920 L1368 932 L1393 944 L1417 956 L1438 967 L1458 979 L1477 989 L1495 1000 L1513 1009 L1531 1018 L1551 1026 L1571 1033 L1595 1039 L1622 1043 L1652 1046 L1687 1048 L1726 1049 L1769 1048 L1817 1045 M426 895 L469 882 L512 872 L556 863 L599 855 L643 850 L686 845 L730 842 L773 840 L816 839 L860 840 L903 842 L947 845 L990 850 L1033 856 L1076 863 L1118 871 L1158 880 L1196 890 L1232 901 L1265 912 L1296 924 L1324 935 L1350 947 L1373 959 L1395 971 L1414 982 L1433 993 L1451 1003 L1468 1013 L1486 1021 L1505 1029 L1526 1036 L1549 1042 L1575 1047 L1604 1050 L1638 1052 L1676 1052 L1718 1051 L1765 1049 M382 910 L426 896 L469 884 L512 874 L556 866 L599 859 L643 855 L686 851 L730 849 L773 848 L816 848 L860 850 L903 852 L947 856 L990 862 L1033 868 L1075 876 L1115 885 L1153 895 L1189 905 L1222 916 L1253 928 L1281 939 L1306 951 L1330 963 L1351 974 L1371 985 L1389 996 L1406 1006 L1424 1016 L1442 1025 L1460 1033 L1481 1040 L1503 1045 L1528 1050 L1557 1053 L1590 1055 L1627 1056 L1668 1055 L1715 1053 M339 924 L382 910 L426 897 L469 885 L512 876 L556 869 L599 864 L643 860 L686 858 L730 856 L773 856 L816 858 L860 860 L903 863 L947 868 L989 874 L1031 881 L1071 890 L1110 899 L1145 909 L1179 920 L1209 931 L1238 943 L1263 955 L1286 966 L1308 978 L1327 989 L1345 1000 L1362 1010 L1379 1020 L1397 1028 L1415 1036 L1436 1043 L1458 1049 L1482 1054 L1510 1057 L1542 1059 L1579 1060 L1619 1059 L1665 1056 M295 938 L339 924 L382 911 L426 899 L469 888 L512 880 L556 874 L599 870 L643 867 L686 865 L730 865 L773 865 L816 868 L860 871 L903 875 L946 880 L988 887 L1028 895 L1066 904 L1102 914 L1136 924 L1166 935 L1194 947 L1220 958 L1243 970 L1264 981 L1283 993 L1302 1003 L1319 1014 L1335 1023 L1353 1032 L1371 1040 L1390 1047 L1412 1052 L1437 1057 L1464 1060 L1495 1063 L1531 1063 L1571 1062 L1615 1060 M252 952 L295 938 L339 925 L382 913 L426 901 L469 891 L512 884 L556 879 L599 876 L643 874 L686 873 L730 873 L773 875 L816 878 L860 882 L903 887 L944 893 L985 900 L1023 909 L1059 918 L1092 928 L1123 939 L1151 951 L1177 962 L1200 974 L1221 985 L1240 996 L1258 1007 L1275 1017 L1292 1027 L1308 1035 L1326 1043 L1346 1050 L1367 1056 L1391 1061 L1419 1064 L1449 1066 L1484 1067 L1523 1066 L1567 1064 M209 966 L252 952 L295 939 L339 926 L382 915 L426 903 L469 895 L512 889 L556 885 L599 883 L643 881 L686 882 L730 883 L773 885 L816 889 L859 894 L901 899 L941 906 L980 914 L1016 923 L1049 933 L1080 943 L1108 954 L1134 966 L1157 977 L1178 988 L1197 1000 L1214 1010 L1231 1020 L1248 1030 L1265 1039 L1282 1047 L1301 1054 L1322 1060 L1346 1064 L1373 1068 L1404 1070 L1438 1070 L1476 1070 L1519 1067 M165 980 L209 966 L252 953 L295 940 L339 928 L382 917 L426 907 L469 899 L512 894 L556 891 L599 890 L643 890 L686 891 L730 893 L773 896 L816 901 L858 906 L898 912 L937 919 L973 928 L1006 937 L1037 947 L1066 958 L1091 969 L1114 981 L1135 992 L1154 1003 L1171 1013 L1188 1024 L1204 1033 L1221 1042 L1238 1050 L1257 1057 L1277 1063 L1301 1068 L1328 1071 L1358 1073 L1392 1074 L1430 1073 L1472 1071 M165 980 L209 967 L252 954 L295 941 L339 930 L382 920 L426 910 L469 903 L512 900 L556 898 L599 898 L643 899 L686 900 L730 903 L772 907 L814 913 L855 919 L893 925 L930 933 L963 942 L995 952 L1023 962 L1049 973 L1072 984 L1092 995 L1111 1006 L1128 1017 L1144 1027 L1161 1036 L1177 1045 L1194 1053 L1213 1060 L1233 1066 L1256 1071 L1283 1075 L1312 1077 L1346 1078 L1384 1077 L1426 1075 M165 980 L209 967 L252 954 L295 943 L339 932 L382 923 L426 914 L469 909 L512 906 L556 905 L599 906 L643 908 L686 911 L729 914 L771 919 L811 925 L850 932 L887 939 L921 947 L952 956 L980 966 L1006 977 L1029 987 L1050 998 L1068 1009 L1085 1019 L1102 1030 L1117 1039 L1133 1048 L1150 1056 L1169 1063 L1189 1069 L1212 1074 L1238 1078 L1267 1080 L1301 1081 L1338 1080 L1380 1078 M165 981 L209 968 L252 956 L295 945 L339 935 L382 926 L426 919 L469 914 L512 913 L556 913 L599 915 L643 918 L686 921 L728 926 L768 931 L807 938 L843 945 L878 953 L909 962 L938 971 L964 981 L987 991 L1008 1002 L1026 1012 L1043 1022 L1059 1032 L1074 1042 L1090 1051 L1107 1059 L1125 1066 L1145 1072 L1168 1077 L1193 1081 L1222 1083 L1255 1084 L1293 1084 L1334 1082 M165 981 L209 969 L252 957 L295 947 L339 938 L382 930 L426 924 L469 920 L512 920 L556 921 L599 925 L642 928 L684 932 L725 937 L764 944 L800 951 L835 959 L866 967 L895 976 L921 985 L945 995 L966 1005 L984 1015 L1001 1026 L1017 1035 L1032 1044 L1047 1053 L1064 1061 L1081 1068 L1101 1074 L1124 1079 L1149 1083 L1178 1086 L1210 1087 L1247 1087 L1289 1085 M165 981 L209 970 L252 959 L295 949 L339 941 L382 934 L426 929 L469 927 L512 927 L556 930 L599 934 L641 938 L682 944 L721 950 L757 956 L792 964 L823 973 L853 982 L879 990 L903 1000 L924 1009 L943 1019 L960 1029 L975 1038 L990 1047 L1005 1056 L1021 1063 L1038 1070 L1058 1076 L1080 1081 L1105 1086 L1134 1088 L1166 1090 L1202 1090 L1243 1089 M165 982 L209 971 L252 960 L295 952 L339 945 L382 939 L426 935 L469 934 L512 935 L556 939 L598 944 L638 949 L677 955 L714 962 L749 969 L781 978 L810 986 L837 996 L861 1005 L882 1014 L901 1023 L918 1032 L934 1041 L949 1050 L963 1058 L979 1066 L996 1073 L1015 1079 L1036 1084 L1061 1088 L1090 1091 L1122 1092 L1158 1093 L1198 1092 M165 983 L209 972 L252 962 L295 955 L339 948 L382 944 L426 941 L469 941 L512 944 L554 948 L595 955 L634 961 L671 967 L706 974 L738 982 L768 991 L795 1000 L819 1009 L841 1019 L860 1028 L877 1037 L893 1045 L908 1054 L922 1061 L937 1069 L954 1075 L972 1081 L993 1086 L1018 1090 L1046 1093 L1078 1094 L1114 1095 L1154 1094 M165 983 L209 974 L252 965 L295 958 L339 952 L382 949 L426 947 L469 948 L511 952 L552 958 L591 966 L629 972 L663 979 L696 987 L726 995 L753 1004 L777 1013 L799 1023 L819 1032 L837 1041 L852 1050 L867 1058 L882 1065 L896 1072 L912 1078 L930 1084 L951 1088 L974 1092 L1002 1095 L1034 1096 L1070 1097 L1110 1096 M165 984 L209 975 L252 967 L295 961 L339 957 L382 954 L425 954 L468 956 L509 961 L548 968 L586 976 L621 984 L654 991 L684 999 L711 1008 L735 1017 L757 1026 L778 1035 L796 1044 L812 1053 L827 1061 L841 1069 L856 1076 L871 1082 L889 1087 L909 1091 L932 1094 L959 1097 L990 1098 L1026 1099 L1065 1098 M165 985 L209 977 L252 970 L295 964 L339 961 L382 960 L425 960 L466 964 L506 970 L543 977 L578 987 L611 995 L642 1003 L669 1012 L694 1020 L716 1029 L736 1038 L755 1047 L772 1056 L787 1064 L802 1072 L816 1079 L831 1085 L848 1091 L868 1095 L890 1097 L916 1099 L947 1101 L982 1101 L1022 1100 M165 986 L209 979 L252 972 L295 968 L339 966 L381 966 L423 967 L463 972 L501 979 L536 987 L569 997 L600 1006 L628 1015 L653 1023 L675 1032 L695 1041 L714 1050 L731 1058 L747 1066 L762 1074 L777 1081 L792 1087 L809 1093 L827 1098 L849 1101 L875 1103 L905 1103 L939 1103 L978 1102 M165 987 L209 981 L252 975 L295 972 L338 971 L380 972 L420 974 L459 980 L495 987 L528 996 L558 1006 L586 1017 L612 1026 L635 1035 L655 1043 L673 1052 L690 1060 L707 1068 L722 1076 L737 1083 L753 1089 L769 1095 L788 1099 L809 1103 L834 1106 L863 1107 L896 1106 L935 1104 M165 988 L209 983 L252 978 L295 976 L337 976 L378 978 L417 982 L453 987 L487 996 L518 1005 L545 1015 L571 1026 L594 1036 L615 1045 L634 1054 L651 1062 L667 1070 L683 1077 L698 1084 L714 1090 L731 1096 L749 1101 L770 1105 L794 1108 L822 1109 L855 1110 L892 1107 M165 989 L209 985 L252 981 L294 980 L335 981 L374 984 L412 989 L446 995 L478 1004 L506 1013 L531 1023 L554 1034 L575 1044 L594 1054 L611 1063 L627 1071 L643 1078 L659 1085 L675 1091 L692 1097 L710 1102 L731 1106 L755 1109 L782 1111 L814 1112 L851 1111 M165 990 L208 987 L251 984 L292 984 L332 986 L370 990 L406 995 L438 1002 L467 1011 L492 1020 L515 1030 L536 1041 L555 1051 L572 1061 L589 1070 L604 1078 L619 1085 L637 1092 L654 1097 L672 1102 L693 1107 L716 1110 L743 1112 L774 1113 L810 1113 M165 992 L208 989 L250 987 L290 988 L329 991 L365 995 L398 1002 L428 1009 L454 1017 L477 1027 L497 1036 L516 1046 L534 1056 L550 1065 L566 1075 L581 1083 L597 1091 L616 1097 L634 1102 L655 1107 L678 1110 L705 1113 L735 1114 L770 1114 M165 993 L207 991 L248 990 L287 992 L324 996 L359 1001 L390 1007 L417 1015 L440 1023 L461 1032 L478 1041 L496 1051 L513 1060 L528 1069 L544 1077 L559 1086 L576 1094 L596 1101 L617 1106 L641 1110 L667 1113 L697 1114 L731 1115 M164 994 L206 994 L246 993 L284 996 L319 1000 L351 1006 L380 1013 L404 1020 L425 1028 L443 1036 L459 1045 L476 1054 L491 1062 L507 1071 L522 1079 L539 1087 L557 1095 L580 1103 L603 1109 L630 1112 L659 1114 L693 1115 M164 995 L204 996 L243 996 L280 999 L313 1004 L343 1010 L369 1017 L391 1025 L410 1032 L425 1040 L439 1047 L455 1055 L470 1063 L486 1072 L502 1080 L520 1087 L541 1095 L566 1103 L592 1110 L622 1114 L656 1115 M163 996 L202 998 L240 999 L275 1003 L306 1008 L334 1014 L357 1021 L377 1028 L393 1035 L407 1042 L420 1049 L435 1056 L450 1064 L467 1072 L484 1079 L504 1087 L527 1095 L555 1103 L585 1111 L618 1114 M162 997 L200 1000 L236 1002 L269 1006 L298 1011 L324 1018 L345 1024 L362 1031 L376 1037 L389 1044 L400 1050 L416 1057 L432 1064 L449 1071 L469 1079 L491 1087 L517 1095 L548 1103 L581 1111 M160 999 L197 1002 L232 1005 L263 1008 L290 1014 L313 1020 L332 1027 L347 1033 L360 1039 L371 1044 L382 1050 L398 1056 L415 1063 L434 1070 L456 1078 L481 1086 L510 1095 L544 1103 M159 1000 L194 1004 L227 1007 L256 1011 L281 1016 L302 1022 L318 1028 L332 1034 L343 1039 L354 1044 L365 1049 L381 1056 L400 1062 L421 1070 L446 1077 L474 1086 L506 1095 M157 1000 L191 1005 L222 1009 L249 1013 L271 1018 L290 1024 L305 1029 L317 1034 L327 1039 L338 1044 L349 1048 L367 1055 L388 1061 L412 1069 L439 1077 L470 1085 M155 1001 L187 1007 L216 1011 L241 1015 L262 1019 L279 1024 L292 1029 L303 1034 L313 1038 L323 1043 L335 1047 L355 1054 L378 1060 L405 1068 L435 1076 M153 1002 L183 1008 L211 1012 L234 1016 L253 1020 L268 1025 L280 1029 L290 1033 L300 1037 L310 1041 L324 1046 L346 1053 L372 1060 L402 1068 M151 1002 L179 1008 L205 1013 L226 1017 L243 1021 L257 1025 L268 1029 L278 1032 L288 1036 L300 1040 L315 1045 L340 1052 L369 1059 M149 1002 L175 1009 L199 1014 L219 1018 L234 1021 L247 1025 L258 1028 L268 1031 L278 1035 L292 1039 L309 1044 L337 1051 M146 1001 L170 1009 L193 1014 L211 1018 L226 1022 L239 1025 L249 1028 L259 1031 L271 1034 L286 1038 L306 1044 M144 997 L166 1009 L188 1014 L205 1019 L219 1022 L231 1025 L241 1027 L252 1030 L266 1033 L284 1038 M144 996 L162 1008 L183 1014 L199 1018 L212 1022 L224 1024 L235 1027 L248 1029 L263 1033 M144 996 L159 1008 L178 1014 L194 1018 L207 1021 L219 1024 L231 1027 L246 1029 M144 996 L155 1007 L174 1013 L189 1018 L202 1021 L216 1024 L229 1026 M144 996 L152 1007 L171 1013 L186 1017 L200 1021 L214 1024 M144 996 L150 1006 L168 1012 L184 1017 L198 1021 M144 996 L148 1005 L167 1012 L182 1017 M144 996 L147 1004 L166 1012 M144 996 L146 1003" fill="none" stroke="#250700" stroke-width="1.2" opacity="0.32"/><path d="M165 980 L209 966 M165 980 L209 966 L252 952 M165 981 L209 967 L252 952 L295 938 M165 981 L209 967 L252 953 L295 938 L339 924 M165 981 L209 968 L252 954 L295 939 L339 924 L382 910 M165 982 L209 969 L252 954 L295 940 L339 925 L382 910 L426 895 M165 983 L209 970 L252 956 L295 941 L339 926 L382 911 L426 896 L469 882 M165 983 L209 971 L252 957 L295 943 L339 928 L382 913 L426 897 L469 882 L512 869 M165 984 L209 972 L252 959 L295 945 L339 930 L382 915 L426 899 L469 884 L512 870 L556 858 M165 985 L209 974 L252 960 L295 947 L339 932 L382 917 L426 901 L469 885 L512 872 L556 859 L599 847 M165 986 L209 975 L252 962 L295 949 L339 935 L382 920 L426 903 L469 888 L512 874 L556 860 L599 848 L643 837 M165 987 L209 977 L252 965 L295 952 L339 938 L382 923 L426 907 L469 891 L512 876 L556 863 L599 850 L643 838 L686 827 M165 988 L209 979 L252 967 L295 955 L339 941 L382 926 L426 910 L469 895 L512 880 L556 866 L599 852 L643 839 L686 828 L730 817 M165 989 L209 981 L252 970 L295 958 L339 945 L382 930 L426 914 L469 899 L512 884 L556 869 L599 855 L643 842 L686 829 L730 818 L773 807 M165 990 L209 983 L252 972 L295 961 L339 948 L382 934 L426 919 L469 903 L512 889 L556 874 L599 859 L643 845 L686 832 L730 819 L773 808 L816 798 M165 992 L209 985 L252 975 L295 964 L339 952 L382 939 L426 924 L469 909 L512 894 L556 879 L599 864 L643 850 L686 836 L730 822 L773 810 L816 799 L860 789 M165 993 L208 987 L252 978 L295 968 L339 957 L382 944 L426 929 L469 914 L512 900 L556 885 L599 870 L643 855 L686 840 L730 826 L773 813 L816 801 L860 790 L903 780 M164 994 L208 989 L252 981 L295 972 L339 961 L382 949 L426 935 L469 920 L512 906 L556 891 L599 876 L643 860 L686 845 L730 830 L773 816 L816 803 L860 791 L903 781 L947 771 M164 995 L207 991 L251 984 L295 976 L339 966 L382 954 L426 941 L469 927 L512 913 L556 898 L599 883 L643 867 L686 851 L730 836 L773 821 L816 807 L860 794 L903 783 L947 772 L990 763 M163 996 L206 994 L250 987 L294 980 L338 971 L382 960 L426 947 L469 934 L512 920 L556 905 L599 890 L643 874 L686 858 L730 842 L773 826 L816 812 L860 798 L903 786 L947 774 L990 764 L1033 756 M162 997 L204 996 L248 990 L292 984 L337 976 L381 966 L425 954 L469 941 L512 927 L556 913 L599 898 L643 881 L686 865 L730 849 L773 833 L816 818 L860 803 L903 790 L947 777 L990 766 L1033 757 L1077 749 M160 999 L202 998 L246 993 L290 988 L335 981 L380 972 L425 960 L469 948 L512 935 L556 921 L599 906 L643 890 L686 873 L730 856 L773 840 L816 824 L860 809 L903 795 L947 782 L990 770 L1033 759 L1077 750 L1120 742 M159 1000 L200 1000 L243 996 L287 992 L332 986 L378 978 L423 967 L468 956 L512 944 L556 930 L599 915 L643 899 L686 882 L730 865 L773 848 L816 831 L860 816 L903 800 L947 787 L990 774 L1033 762 L1077 752 L1120 743 L1164 736 M157 1000 L197 1002 L240 999 L284 996 L329 991 L374 984 L420 974 L466 964 L511 952 L556 939 L599 925 L643 908 L686 891 L730 873 L773 856 L816 839 L860 823 L903 807 L947 792 L990 779 L1033 766 L1077 755 L1120 745 L1164 737 L1207 730 M155 1001 L194 1004 L236 1002 L280 999 L324 996 L370 990 L417 982 L463 972 L509 961 L554 948 L599 934 L643 918 L686 900 L730 883 L773 865 L816 848 L860 831 L903 815 L947 799 L990 785 L1033 771 L1077 759 L1120 748 L1164 739 L1207 731 L1250 725 M153 1002 L191 1005 L232 1005 L275 1003 L319 1000 L365 995 L412 989 L459 980 L506 970 L552 958 L598 944 L642 928 L686 911 L730 893 L773 875 L816 858 L860 840 L903 823 L947 807 L990 792 L1033 778 L1077 765 L1120 753 L1164 742 L1207 733 L1250 726 L1294 720 M151 1002 L187 1007 L227 1007 L269 1006 L313 1004 L359 1001 L406 995 L453 987 L501 979 L548 968 L595 955 L641 938 L686 921 L730 903 L773 885 L816 868 L860 850 L903 832 L947 815 L990 800 L1033 785 L1077 771 L1120 758 L1164 747 L1207 737 L1250 728 L1294 721 L1337 715 M149 1002 L183 1008 L222 1009 L263 1008 L306 1008 L351 1006 L398 1002 L446 995 L495 987 L543 977 L591 966 L638 949 L684 932 L729 914 L773 896 L816 878 L860 860 L903 842 L947 825 L990 808 L1033 793 L1077 778 L1120 764 L1164 752 L1207 741 L1250 731 L1294 723 L1337 717 L1381 712 M146 1001 L179 1008 L216 1011 L256 1011 L298 1011 L343 1010 L390 1007 L438 1002 L487 996 L536 987 L586 976 L634 961 L682 944 L728 926 L772 907 L816 889 L860 871 L903 852 L947 835 L990 818 L1033 801 L1077 786 L1120 772 L1164 758 L1207 746 L1250 736 L1294 726 L1337 719 L1381 713 L1424 709 M144 997 L175 1009 L211 1012 L249 1013 L290 1014 L334 1014 L380 1013 L428 1009 L478 1004 L528 996 L578 987 L629 972 L677 955 L725 937 L771 919 L816 901 L860 882 L903 863 L947 845 L990 828 L1033 811 L1077 795 L1120 780 L1164 766 L1207 753 L1250 741 L1294 731 L1337 722 L1381 715 L1424 710 L1468 706 M144 996 L170 1009 L205 1013 L241 1015 L281 1016 L324 1018 L369 1017 L417 1015 L467 1011 L518 1005 L569 997 L621 984 L671 967 L721 950 L768 931 L814 913 L859 894 L903 875 L947 856 L990 838 L1033 821 L1077 805 L1120 789 L1164 774 L1207 760 L1250 748 L1294 736 L1337 727 L1381 719 L1424 712 L1468 707 L1511 703 M144 996 L166 1009 L199 1014 L234 1016 L271 1018 L313 1020 L357 1021 L404 1020 L454 1017 L506 1013 L558 1006 L611 995 L663 979 L714 962 L764 944 L811 925 L858 906 L903 887 L947 868 L990 850 L1033 832 L1077 815 L1120 799 L1164 783 L1207 769 L1250 755 L1294 743 L1337 732 L1381 723 L1424 715 L1468 709 L1511 704 L1554 700 M144 996 L162 1008 L193 1014 L226 1017 L262 1019 L302 1022 L345 1024 L391 1025 L440 1023 L492 1020 L545 1015 L600 1006 L654 991 L706 974 L757 956 L807 938 L855 919 L901 899 L946 880 L990 862 L1033 844 L1077 826 L1120 809 L1164 793 L1207 778 L1250 764 L1294 750 L1337 739 L1381 728 L1424 720 L1468 712 L1511 706 L1554 701 L1598 698 M144 996 L159 1008 L188 1014 L219 1018 L253 1020 L290 1024 L332 1027 L377 1028 L425 1028 L477 1027 L531 1023 L586 1017 L642 1003 L696 987 L749 969 L800 951 L850 932 L898 912 L944 893 L989 874 L1033 856 L1077 838 L1120 820 L1164 804 L1207 788 L1250 773 L1294 759 L1337 746 L1381 735 L1424 725 L1468 717 L1511 710 L1554 704 L1598 699 L1641 696 M144 996 L155 1007 L183 1014 L211 1018 L243 1021 L279 1024 L318 1028 L362 1031 L410 1032 L461 1032 L515 1030 L571 1026 L628 1015 L684 999 L738 982 L792 964 L843 945 L893 925 L941 906 L988 887 L1033 868 L1077 850 L1120 832 L1164 815 L1207 799 L1250 783 L1294 768 L1337 755 L1381 743 L1424 732 L1468 722 L1511 714 L1554 707 L1598 701 L1641 697 L1685 695 M144 996 L152 1007 L178 1014 L205 1019 L234 1021 L268 1025 L305 1029 L347 1033 L393 1035 L443 1036 L497 1036 L554 1034 L612 1026 L669 1012 L726 995 L781 978 L835 959 L887 939 L937 919 L985 900 L1031 881 L1076 863 L1120 845 L1164 827 L1207 810 L1250 794 L1294 778 L1337 764 L1381 751 L1424 739 L1468 729 L1511 720 L1554 712 L1598 705 L1641 700 L1685 696 L1728 693 M144 996 L150 1006 L174 1013 L199 1018 L226 1022 L257 1025 L292 1029 L332 1034 L376 1037 L425 1040 L478 1041 L536 1041 L594 1036 L653 1023 L711 1008 L768 991 L823 973 L878 953 L930 933 L980 914 L1028 895 L1075 876 L1120 858 L1164 840 L1207 822 L1250 805 L1294 789 L1337 774 L1381 760 L1424 748 L1468 736 L1511 726 L1554 717 L1598 709 L1641 703 L1685 698 L1728 695 L1771 692 M144 996 L148 1005 L171 1013 L194 1018 L219 1022 L247 1025 L280 1029 L317 1034 L360 1039 L407 1042 L459 1045 L516 1046 L575 1044 L635 1035 L694 1020 L753 1004 L810 986 L866 967 L921 947 L973 928 L1023 909 L1071 890 L1118 871 L1163 853 L1207 835 L1250 817 L1294 801 L1337 785 L1381 771 L1424 757 L1468 745 L1511 734 L1554 723 L1598 715 L1641 707 L1685 701 L1728 697 L1771 694 L1815 692 M144 996 L147 1004 L168 1012 L189 1018 L212 1022 L239 1025 L268 1029 L303 1034 L343 1039 L389 1044 L439 1047 L496 1051 L555 1051 L615 1045 L675 1032 L735 1017 L795 1000 L853 982 L909 962 L963 942 L1016 923 L1066 904 L1115 885 L1161 866 L1207 848 L1250 830 L1294 813 L1337 797 L1381 781 L1424 767 L1468 754 L1511 742 L1554 731 L1598 721 L1641 713 L1685 706 L1728 700 L1771 696 L1815 693 L1858 691 M146 1003 L167 1012 L186 1017 L207 1021 L231 1025 L258 1028 L290 1033 L327 1039 L371 1044 L420 1049 L476 1054 L534 1056 L594 1054 L655 1043 L716 1029 L777 1013 L837 996 L895 976 L952 956 L1006 937 L1059 918 L1110 899 L1158 880 L1205 862 L1250 843 L1294 826 L1337 809 L1381 793 L1424 778 L1468 764 L1511 751 L1554 739 L1598 729 L1641 719 L1685 711 L1728 704 L1771 699 L1815 695 L1858 692 L1902 691 M166 1012 L184 1017 L202 1021 L224 1024 L249 1028 L278 1032 L313 1038 L354 1044 L400 1050 L455 1055 L513 1060 L572 1061 L634 1054 L695 1041 L757 1026 L819 1009 L879 990 L938 971 L995 952 L1049 933 L1102 914 L1153 895 L1201 876 L1248 857 L1293 839 L1337 822 L1381 805 L1424 790 L1468 775 L1511 762 L1554 749 L1598 737 L1641 727 L1685 718 L1728 710 L1771 703 L1815 698 L1858 694 L1902 692 L1945 692 M182 1017 L200 1021 L219 1024 L241 1027 L268 1031 L300 1037 L338 1044 L382 1050 L435 1056 L491 1062 L550 1065 L611 1063 L673 1052 L736 1038 L799 1023 L861 1005 L921 985 L980 966 L1037 947 L1092 928 L1145 909 L1196 890 L1245 871 L1292 853 L1337 835 L1381 818 L1424 802 L1468 787 L1511 772 L1554 759 L1598 746 L1641 735 L1685 725 L1728 716 L1771 709 L1815 702 L1858 697 L1902 694 L1945 693 L1988 693 M198 1021 L216 1024 L235 1027 L259 1031 L288 1036 L323 1043 L365 1049 L416 1057 L470 1063 L528 1069 L589 1070 L651 1062 L714 1050 L778 1035 L841 1019 L903 1000 L964 981 L1023 962 L1080 943 L1136 924 L1189 905 L1239 886 L1288 867 L1335 849 L1380 832 L1424 815 L1468 799 L1511 784 L1554 770 L1598 756 L1641 744 L1685 733 L1728 724 L1771 715 L1815 708 L1858 702 L1902 698 L1945 695 L1988 695 L2032 696 M214 1024 L231 1027 L252 1030 L278 1035 L310 1041 L349 1048 L398 1056 L450 1064 L507 1071 L566 1075 L627 1071 L690 1060 L755 1047 L819 1032 L882 1014 L945 995 L1006 977 L1066 958 L1123 939 L1179 920 L1232 901 L1283 882 L1332 863 L1378 845 L1424 828 L1468 812 L1511 796 L1554 781 L1598 767 L1641 754 L1685 742 L1728 732 L1771 722 L1815 714 L1858 707 L1902 702 L1945 699 L1988 697 L2032 697 L2075 699 M229 1026 L248 1029 L271 1034 L300 1040 L335 1047 L381 1056 L432 1064 L486 1072 L544 1077 L604 1078 L667 1070 L731 1058 L796 1044 L860 1028 L924 1009 L987 991 L1049 973 L1108 954 L1166 935 L1222 916 L1275 897 L1326 878 L1375 860 L1422 842 L1467 825 L1511 809 L1554 793 L1598 779 L1641 765 L1685 752 L1728 741 L1771 731 L1815 721 L1858 713 L1902 707 L1945 703 L1988 700 L2032 699 L2075 700 L2119 702 M246 1029 L266 1033 L292 1039 L324 1046 L367 1055 L415 1063 L467 1072 L522 1079 L581 1083 L643 1078 L707 1068 L772 1056 L837 1041 L901 1023 L966 1005 L1029 987 L1091 969 L1151 951 L1209 931 L1265 912 L1319 893 L1370 874 L1418 856 L1465 839 L1510 822 L1554 806 L1598 791 L1641 777 L1685 763 L1728 751 L1771 740 L1815 729 L1858 720 L1902 713 L1945 708 L1988 704 L2032 702 L2075 702 L2119 703 L2162 706 M263 1033 L286 1038 L315 1045 L355 1054 L400 1062 L449 1071 L502 1080 L559 1086 L619 1085 L683 1077 L747 1066 L812 1053 L877 1037 L943 1019 L1008 1002 L1072 984 L1134 966 L1194 947 L1253 928 L1309 908 L1362 889 L1413 871 L1462 853 L1509 836 L1554 819 L1598 804 L1641 789 L1685 775 L1728 762 L1771 750 L1815 738 L1858 729 L1902 720 L1945 714 L1988 709 L2032 706 L2075 705 L2119 705 L2162 707 L2206 710 M284 1038 L309 1044 L346 1053 L388 1061 L434 1070 L484 1079 L539 1087 L597 1091 L659 1085 L722 1076 L787 1064 L852 1050 L918 1032 L984 1015 L1050 998 L1114 981 L1177 962 L1238 943 L1296 924 L1352 905 L1405 886 L1456 868 L1505 850 L1552 833 L1597 817 L1641 801 L1685 787 L1728 773 L1771 760 L1815 748 L1858 737 L1902 728 L1945 721 L1988 715 L2032 711 L2075 709 L2119 708 L2162 709 L2206 711 L2249 715 M306 1044 L340 1052 L378 1060 L421 1070 L469 1079 L520 1087 L576 1094 L637 1092 L698 1084 L762 1074 L827 1061 L893 1045 L960 1029 L1026 1012 L1092 995 L1157 977 L1220 958 L1281 939 L1339 920 L1395 901 L1449 883 L1500 865 L1549 847 L1595 831 L1641 815 L1685 799 L1728 785 L1771 772 L1815 759 L1858 747 L1902 737 L1945 729 L1988 722 L2032 717 L2075 714 L2119 712 L2162 712 L2206 713 L2249 716 L2292 720 M337 1051 L372 1060 L412 1069 L456 1078 L504 1087 L557 1095 L616 1097 L675 1091 L737 1083 L802 1072 L867 1058 L934 1041 L1001 1026 L1068 1009 L1135 992 L1200 974 L1263 955 L1324 935 L1383 916 L1439 898 L1492 880 L1543 862 L1592 845 L1639 828 L1684 812 L1728 798 L1771 783 L1815 770 L1858 758 L1902 747 L1945 738 L1988 730 L2032 724 L2075 719 L2119 716 L2162 715 L2206 716 L2249 717 L2292 721 L2336 727 M369 1059 L405 1068 L446 1077 L491 1087 L541 1095 L596 1101 L654 1097 L714 1090 L777 1081 L841 1069 L908 1054 L975 1038 L1043 1022 L1111 1006 L1178 988 L1243 970 L1306 951 L1368 932 L1426 913 L1482 895 L1536 877 L1587 859 L1636 842 L1682 826 L1727 811 L1771 796 L1815 782 L1858 769 L1902 757 L1945 747 L1988 738 L2032 731 L2075 726 L2119 722 L2162 720 L2206 720 L2249 720 L2292 723 L2336 728 L2379 737 M402 1068 L439 1077 L481 1086 L527 1095 L580 1103 L634 1102 L692 1097 L753 1089 L816 1079 L882 1065 L949 1050 L1017 1035 L1085 1019 L1154 1003 L1221 985 L1286 966 L1350 947 L1411 928 L1470 910 L1526 892 L1579 874 L1630 857 L1679 840 L1726 824 L1771 809 L1815 794 L1858 781 L1902 768 L1945 758 L1988 748 L2032 740 L2075 734 L2119 729 L2162 726 L2206 724 L2249 724 L2292 725 L2336 730 L2379 738 L2423 748 M435 1076 L474 1086 L517 1095 L566 1103 L617 1106 L672 1102 L731 1096 L792 1087 L856 1076 L922 1061 L990 1047 L1059 1032 L1128 1017 L1197 1000 L1264 981 L1330 963 L1393 944 L1455 925 L1513 907 L1569 889 L1623 871 L1674 854 L1722 838 L1769 822 L1814 807 L1858 793 L1902 780 L1945 769 L1988 758 L2032 749 L2075 742 L2119 736 L2162 732 L2206 730 L2249 728 L2292 729 L2336 733 L2379 740 L2423 749 L2466 761 M470 1085 L510 1095 L555 1103 L603 1109 L655 1107 L710 1102 L769 1095 L831 1085 L896 1072 L963 1058 L1032 1044 L1102 1030 L1171 1013 L1240 996 L1308 978 L1373 959 L1437 940 L1498 922 L1557 904 L1613 886 L1666 869 L1717 852 L1766 836 L1813 820 L1858 806 L1902 792 L1945 780 L1988 769 L2032 759 L2075 751 L2119 744 L2162 740 L2206 736 L2249 734 L2292 733 L2336 736 L2379 742 L2423 751 L2466 762 L2509 775 M506 1095 L548 1103 L592 1110 L641 1110 L693 1107 L749 1101 L809 1093 L871 1082 L937 1069 L1005 1056 L1074 1042 L1144 1027 L1214 1010 L1283 993 L1351 974 L1417 956 L1481 937 L1542 919 L1600 901 L1656 883 L1710 866 L1761 850 L1809 834 L1856 819 L1901 805 L1945 792 L1988 780 L2032 770 L2075 761 L2119 753 L2162 748 L2206 743 L2249 740 L2292 738 L2336 740 L2379 745 L2423 753 L2466 763 L2509 775 L2553 789 M544 1103 L585 1111 L630 1112 L678 1110 L731 1106 L788 1099 L848 1091 L912 1078 L979 1066 L1047 1053 L1117 1039 L1188 1024 L1258 1007 L1327 989 L1395 971 L1461 952 L1524 934 L1585 916 L1644 898 L1700 881 L1753 864 L1804 848 L1853 832 L1899 818 L1945 805 L1988 792 L2032 781 L2075 771 L2119 763 L2162 756 L2206 751 L2249 747 L2292 744 L2336 745 L2379 749 L2423 756 L2466 765 L2509 777 L2553 789 L2596 809 M581 1111 L622 1114 L667 1113 L716 1110 L770 1105 L827 1098 L889 1087 L954 1075 L1021 1063 L1090 1051 L1161 1036 L1231 1020 L1302 1003 L1371 985 L1438 967 L1504 949 L1568 931 L1629 913 L1688 896 L1743 879 L1797 862 L1848 846 L1896 831 L1943 817 L1988 804 L2032 793 L2075 782 L2119 773 L2162 766 L2206 759 L2249 754 L2292 751 L2336 751 L2379 754 L2423 760 L2466 768 L2509 779 L2553 791 L2596 810 L2640 832 M618 1114 L659 1114 L705 1113 L755 1109 L809 1103 L868 1095 L930 1084 L996 1073 L1064 1061 L1133 1048 L1204 1033 L1275 1017 L1345 1000 L1414 982 L1482 964 L1548 946 L1612 928 L1673 911 L1731 893 L1787 877 L1840 860 L1891 845 L1940 831 L1986 817 L2031 805 L2075 794 L2119 784 L2162 776 L2206 769 L2249 763 L2292 758 L2336 757 L2379 760 L2423 764 L2466 772 L2509 781 L2553 793 L2596 811 L2640 832 L2683 859 M656 1115 L697 1114 L743 1112 L794 1108 L849 1101 L909 1091 L972 1081 L1038 1070 L1107 1059 L1177 1045 L1248 1030 L1319 1014 L1389 996 L1458 979 L1526 961 L1592 943 L1655 925 L1716 908 L1775 891 L1831 875 L1884 859 L1935 844 L1983 830 L2030 817 L2075 806 L2119 795 L2162 786 L2206 778 L2249 772 L2292 766 L2336 764 L2379 766 L2423 769 L2466 776 L2509 785 L2553 795 L2596 813 L2640 833 L2683 860 L2726 884 M693 1115 L735 1114 L782 1111 L834 1106 L890 1097 L951 1088 L1015 1079 L1081 1068 L1150 1056 L1221 1042 L1292 1027 L1362 1010 L1433 993 L1502 975 L1570 958 L1636 940 L1699 923 L1760 906 L1819 889 L1874 873 L1927 858 L1978 843 L2027 830 L2073 818 L2118 807 L2162 797 L2206 789 L2249 781 L2292 775 L2336 772 L2379 772 L2423 775 L2466 781 L2509 789 L2553 798 L2596 815 L2640 835 L2683 860 L2726 884 L2770 910 M731 1115 L774 1113 L822 1109 L875 1103 L932 1094 L993 1086 L1058 1076 L1125 1066 L1194 1053 L1265 1039 L1335 1023 L1406 1006 L1477 989 L1546 972 L1614 955 L1680 937 L1743 920 L1804 903 L1862 887 L1918 872 L1971 857 L2022 843 L2070 831 L2117 819 L2162 809 L2206 799 L2249 791 L2292 784 L2336 780 L2379 780 L2423 782 L2466 786 L2509 793 L2553 802 L2596 818 L2640 837 L2683 862 L2726 885 L2770 910 L2813 932 M770 1114 L814 1112 L863 1107 L916 1099 L974 1092 L1036 1084 L1101 1074 L1169 1063 L1238 1050 L1308 1035 L1379 1020 L1451 1003 L1521 986 L1590 969 L1658 952 L1724 935 L1787 918 L1848 901 L1906 885 L1962 870 L2015 856 L2065 843 L2114 831 L2160 820 L2205 810 L2249 802 L2292 794 L2336 789 L2379 788 L2423 789 L2466 792 L2509 798 L2553 806 L2596 821 L2640 839 L2683 863 L2726 886 L2770 910 L2813 932 L2835 947 M810 1113 L855 1110 L905 1103 L959 1097 L1018 1090 L1080 1081 L1145 1072 L1213 1060 L1282 1047 L1353 1032 L1424 1016 L1495 1000 L1565 983 L1635 966 L1702 949 L1768 932 L1831 916 L1892 899 L1950 884 L2006 870 L2059 856 L2109 844 L2157 832 L2204 822 L2248 812 L2292 804 L2336 799 L2379 796 L2423 796 L2466 799 L2509 804 L2553 811 L2596 825 L2640 842 L2683 865 L2726 887 L2770 911 L2813 932 L2835 947 M851 1111 L896 1106 L947 1101 L1002 1095 L1061 1088 L1124 1079 L1189 1069 L1257 1057 L1326 1043 L1397 1028 L1468 1013 L1539 997 L1610 980 L1679 963 L1746 946 L1812 930 L1875 913 L1936 898 L1994 883 L2050 869 L2102 856 L2153 844 L2201 834 L2247 823 L2292 815 L2336 808 L2379 805 L2423 804 L2466 806 L2509 810 L2553 816 L2596 829 L2640 845 L2683 868 L2726 889 L2770 912 L2813 933 L2835 947 M892 1107 L939 1103 L990 1098 L1046 1093 L1105 1086 L1168 1077 L1233 1066 L1301 1054 L1371 1040 L1442 1025 L1513 1009 L1584 993 L1654 977 L1723 960 L1791 944 L1857 927 L1920 912 L1980 897 L2038 882 L2093 869 L2146 857 L2196 845 L2244 835 L2291 825 L2335 818 L2379 814 L2423 812 L2466 813 L2509 817 L2553 822 L2596 834 L2640 849 L2683 870 L2726 890 L2770 913 L2813 933 L2835 947 M935 1104 L982 1101 L1034 1096 L1090 1091 L1149 1083 L1212 1074 L1277 1063 L1346 1050 L1415 1036 L1486 1021 L1558 1006 L1629 990 L1699 974 L1768 958 L1836 941 L1901 925 L1964 910 L2025 896 L2082 882 L2137 869 L2190 857 L2240 846 L2288 836 L2334 829 L2379 824 L2423 821 L2466 821 L2509 824 L2553 828 L2596 839 L2640 853 L2683 873 L2726 892 L2770 914 L2813 934 L2835 947 M978 1102 L1026 1099 L1078 1094 L1134 1088 L1193 1081 L1256 1071 L1322 1060 L1390 1047 L1460 1033 L1531 1018 L1602 1003 L1673 987 L1744 971 L1813 955 L1880 939 L1946 924 L2009 909 L2069 895 L2127 882 L2181 869 L2234 858 L2284 848 L2331 839 L2377 834 L2422 830 L2466 830 L2509 831 L2553 834 L2596 844 L2640 858 L2683 877 L2726 895 L2770 915 L2813 934 L2835 947 M1022 1100 L1070 1097 L1122 1092 L1178 1086 L1238 1078 L1301 1068 L1367 1056 L1436 1043 L1505 1029 L1576 1015 L1647 1000 L1719 984 L1789 968 L1858 952 L1926 937 L1991 922 L2054 908 L2114 894 L2171 882 L2225 870 L2278 859 L2327 850 L2375 843 L2421 840 L2466 838 L2509 839 L2553 841 L2596 850 L2640 863 L2683 881 L2726 897 L2770 917 L2813 935 L2835 947 M1065 1098 L1114 1095 L1166 1090 L1222 1083 L1283 1075 L1346 1064 L1412 1052 L1481 1040 L1551 1026 L1621 1012 L1693 997 L1764 981 L1834 966 L1904 950 L1971 935 L2036 921 L2098 907 L2158 894 L2215 882 L2270 870 L2322 860 L2371 853 L2419 849 L2464 847 L2509 847 L2553 849 L2596 857 L2640 868 L2683 885 L2726 900 L2770 919 L2813 936 L2835 947 M1110 1096 L1158 1093 L1210 1087 L1267 1080 L1328 1071 L1391 1061 L1458 1049 L1526 1036 L1596 1023 L1667 1008 L1739 994 L1810 978 L1880 963 L1949 948 L2016 933 L2081 919 L2143 906 L2203 894 L2260 882 L2314 871 L2366 863 L2415 858 L2462 855 L2508 855 L2553 856 L2596 863 L2640 873 L2683 889 L2726 903 L2770 921 L2813 937 L2835 947 M1154 1094 L1202 1090 L1255 1084 L1312 1077 L1373 1068 L1437 1057 L1503 1045 L1571 1033 L1642 1019 L1713 1005 L1785 990 L1856 975 L1926 961 L1995 946 L2062 932 L2127 918 L2188 905 L2248 893 L2304 882 L2358 874 L2410 868 L2459 864 L2506 863 L2552 863 L2596 870 L2640 879 L2683 893 L2726 907 L2770 923 L2813 937 L2835 947 M1198 1092 L1247 1087 L1301 1081 L1358 1073 L1419 1064 L1482 1054 L1549 1042 L1618 1030 L1688 1016 L1759 1002 L1831 987 L1902 973 L1973 958 L2041 944 L2108 930 L2172 917 L2234 905 L2293 893 L2349 884 L2403 877 L2454 873 L2503 871 L2550 871 L2595 876 L2639 885 L2683 898 L2726 910 L2770 925 L2813 938 L2835 947 M1243 1089 L1293 1084 L1346 1078 L1404 1070 L1464 1060 L1528 1050 L1595 1039 L1664 1026 L1735 1013 L1806 999 L1878 985 L1949 970 L2019 956 L2088 942 L2154 929 L2218 916 L2279 904 L2338 894 L2394 886 L2447 881 L2498 879 L2547 878 L2593 883 L2639 891 L2683 903 L2726 914 L2770 927 L2813 939 L2835 947 M1289 1085 L1338 1080 L1392 1074 L1449 1066 L1510 1057 L1575 1047 L1642 1035 L1711 1023 L1782 1010 L1854 996 L1925 982 L1997 968 L2066 954 L2134 941 L2200 928 L2264 916 L2325 904 L2384 896 L2439 890 L2492 887 L2542 886 L2591 889 L2637 896 L2682 907 L2726 917 L2770 930 L2813 941 L2835 947 M1334 1082 L1384 1077 L1438 1070 L1495 1063 L1557 1053 L1622 1043 L1689 1032 L1759 1019 L1830 1006 L1902 993 L1973 979 L2044 966 L2113 952 L2181 939 L2247 927 L2311 915 L2372 906 L2430 899 L2484 895 L2537 893 L2587 896 L2635 902 L2681 912 L2726 921 L2770 932 L2813 942 L2835 947 M1380 1078 L1430 1073 L1484 1067 L1542 1059 L1604 1050 L1669 1040 L1737 1028 L1807 1016 L1878 1003 L1950 990 L2021 977 L2092 964 L2161 950 L2229 938 L2295 926 L2358 915 L2418 908 L2475 903 L2530 900 L2582 902 L2631 908 L2679 917 L2725 925 L2769 934 L2813 943 L2835 947 M1426 1075 L1476 1070 L1531 1063 L1590 1055 L1652 1046 L1718 1036 L1786 1025 L1856 1013 L1927 1000 L1999 987 L2069 974 L2140 961 L2209 949 L2277 936 L2343 925 L2405 917 L2465 911 L2521 908 L2575 908 L2627 913 L2676 922 L2723 928 L2769 937 L2813 944 L2835 947 M1472 1071 L1523 1066 L1579 1060 L1638 1052 L1701 1043 L1767 1033 L1835 1021 L1905 1010 L1976 997 L2047 985 L2118 972 L2189 959 L2259 947 L2326 935 L2391 926 L2453 919 L2511 915 L2568 914 L2621 918 L2673 926 L2721 932 L2768 939 L2813 945 L2835 947 M1519 1067 L1571 1062 L1627 1056 L1687 1048 L1750 1039 L1816 1029 L1885 1018 L1955 1006 L2026 994 L2097 982 L2168 970 L2240 957 L2309 945 L2375 935 L2439 927 L2500 922 L2559 920 L2614 924 L2668 931 L2718 935 L2766 942 L2812 947 L2835 947 M1567 1064 L1619 1059 L1676 1052 L1736 1044 L1800 1035 L1867 1026 L1935 1015 L2005 1003 L2076 992 L2148 979 L2220 967 L2290 955 L2359 944 L2425 935 L2487 930 L2548 927 L2607 929 L2662 935 L2715 939 L2765 944 L2812 948 L2835 947 M1615 1060 L1668 1055 L1726 1049 L1786 1041 L1851 1032 L1917 1022 L1986 1012 L2056 1000 L2128 989 L2200 977 L2272 964 L2342 953 L2409 944 L2474 937 L2537 933 L2598 934 L2656 939 L2711 943 L2762 947 L2811 949 L2835 947 M1665 1056 L1718 1051 L1776 1045 L1837 1037 L1902 1028 L1968 1019 L2037 1008 L2108 997 L2181 985 L2253 974 L2324 962 L2393 952 L2460 944 L2525 940 L2588 939 L2649 943 L2706 947 L2759 949 L2810 951 L2835 947 M1715 1053 L1769 1048 L1827 1041 L1889 1034 L1953 1025 L2020 1015 L2090 1005 L2163 994 L2235 982 L2307 971 L2377 960 L2445 952 L2512 947 L2577 945 L2641 948 L2700 950 L2756 952 L2808 952 L2835 947 M1765 1049 L1820 1044 L1879 1037 L1940 1030 L2005 1021 L2074 1012 L2146 1001 L2218 990 L2289 979 L2360 968 L2429 959 L2499 953 L2566 950 L2632 952 L2694 954 L2752 955 L2807 954 L2835 947 M1817 1045 L1872 1040 L1930 1034 L1993 1026 L2060 1018 L2130 1008 L2201 998 L2273 987 L2344 976 L2414 966 L2485 960 L2554 955 L2623 957 L2687 959 L2748 957 L2805 955 L2835 947 M1868 1041 L1924 1036 L1983 1030 L2048 1023 L2117 1014 L2187 1004 L2258 994 L2329 983 L2399 973 L2471 966 L2542 961 L2613 961 L2680 963 L2744 960 L2803 957 L2835 947 M1920 1038 L1977 1033 L2039 1026 L2105 1019 L2174 1010 L2244 1000 L2315 990 L2385 980 L2458 972 L2530 966 L2603 966 L2673 967 L2739 963 L2801 959 L2835 947 M1974 1034 L2033 1029 L2097 1022 L2163 1014 L2232 1006 L2302 996 L2372 986 L2445 978 L2518 972 L2593 970 L2665 971 L2734 966 L2798 961 L2835 947 M2030 1030 L2091 1025 L2155 1018 L2222 1010 L2291 1001 L2360 992 L2433 983 L2507 977 L2583 974 L2658 974 L2729 970 L2796 962 L2835 947 M2088 1026 L2149 1020 L2214 1013 L2281 1005 L2349 996 L2422 988 L2496 982 L2574 978 L2650 978 L2724 973 L2794 964 L2835 947 M2147 1021 L2209 1016 L2274 1009 L2340 1000 L2412 992 L2486 986 L2566 982 L2643 981 L2719 976 L2791 966 L2835 947 M2206 1017 L2269 1011 L2334 1004 L2405 996 L2478 990 L2558 985 L2636 984 L2714 979 L2789 968 L2835 947 M2267 1012 L2329 1006 L2398 998 L2471 993 L2551 988 L2630 987 L2710 981 L2787 969 L2835 947 M2327 1007 L2394 1000 L2466 995 L2545 991 L2625 990 L2706 984 L2784 971 L2835 947 M2392 1001 L2462 997 L2541 993 L2621 992 L2703 986 L2783 972 L2835 947 M2460 997 L2538 994 L2618 993 L2700 988 L2781 973 L2835 947 M2536 995 L2615 994 L2697 989 L2779 975 L2835 947 M2614 995 L2696 990 L2778 975 L2835 947 M2695 991 L2778 976 L2835 947 M2777 976 L2835 947" fill="none" stroke="#250700" stroke-width="1.2" opacity="0.32"/></g><rect x="2300" y="650" width="560" height="400" fill="url(#tailg)"/></g><path d="M143.5 996L146.5 987.8L149.5 985.3L152.5 983.8L155.5 982.7L158.5 981.7L161.5 981L164.5 980.2L167.5 979.4L170.5 978.4L173.5 977.4L176.5 976.5L179.5 975.5L182.5 974.5L185.5 973.6L188.5 972.6L191.5 971.6L194.5 970.6L197.5 969.7L200.5 968.7L203.5 967.7L206.5 966.8L209.5 965.8L212.5 964.8L215.5 963.9L218.5 962.9L221.5 961.9L224.5 960.9L227.5 960L230.5 959L233.5 958L236.5 957.1L239.5 956.1L242.5 955.1L245.5 954.2L248.5 953.2L251.5 952.2L254.5 951.2L257.5 950.3L260.5 949.3L263.5 948.3L266.5 947.4L269.5 946.4L272.5 945.4L275.5 944.5L278.5 943.5L281.5 942.5L284.5 941.5L287.5 940.6L290.5 939.6L293.5 938.6L296.5 937.7L299.5 936.7L302.5 935.7L305.5 934.7L308.5 933.8L311.5 932.8L314.5 931.8L317.5 930.9L320.5 929.9L323.5 928.9L326.5 927.9L329.5 927L332.5 926L335.5 925L338.5 924.1L341.5 923.1L344.5 922.1L347.5 921.1L350.5 920.2L353.5 919.2L356.5 918.2L359.5 917.3L362.5 916.3L365.5 915.3L368.5 914.3L371.5 913.4L374.5 912.4L377.5 911.4L380.5 910.4L383.5 909.4L386.5 908.4L389.5 907.4L392.5 906.4L395.5 905.4L398.5 904.4L401.5 903.4L404.5 902.4L407.5 901.4L410.5 900.4L413.5 899.4L416.5 898.3L419.5 897.3L422.5 896.3L425.5 895.3L428.5 894.4L431.5 893.4L434.5 892.4L437.5 891.4L440.5 890.4L443.5 889.5L446.5 888.5L449.5 887.6L452.5 886.6L455.5 885.7L458.5 884.8L461.5 883.8L464.5 882.9L467.5 882L470.5 881.2L473.5 880.3L476.5 879.4L479.5 878.6L482.5 877.7L485.5 876.9L488.5 876L491.5 875.2L494.5 874.3L497.5 873.5L500.5 872.7L503.5 871.9L506.5 871L509.5 870.2L512.5 869.4L515.5 868.6L518.5 867.8L521.5 867L524.5 866.2L527.5 865.4L530.5 864.6L533.5 863.8L536.5 863L539.5 862.2L542.5 861.5L545.5 860.7L548.5 859.9L551.5 859.1L554.5 858.4L557.5 857.6L560.5 856.8L563.5 856.1L566.5 855.3L569.5 854.6L572.5 853.8L575.5 853L578.5 852.3L581.5 851.6L584.5 850.8L587.5 850.1L590.5 849.3L593.5 848.6L596.5 847.9L599.5 847.1L602.5 846.4L605.5 845.7L608.5 844.9L611.5 844.2L614.5 843.5L617.5 842.8L620.5 842L623.5 841.3L626.5 840.6L629.5 839.9L632.5 839.2L635.5 838.5L638.5 837.8L641.5 837.1L644.5 836.3L647.5 835.6L650.5 834.9L653.5 834.2L656.5 833.5L659.5 832.8L662.5 832.1L665.5 831.4L668.5 830.7L671.5 830L674.5 829.3L677.5 828.6L680.5 827.9L683.5 827.2L686.5 826.5L689.5 825.8L692.5 825.1L695.5 824.4L698.5 823.7L701.5 823.1L704.5 822.4L707.5 821.7L710.5 821L713.5 820.3L716.5 819.6L719.5 818.9L722.5 818.2L725.5 817.5L728.5 816.9L731.5 816.2L734.5 815.5L737.5 814.8L740.5 814.1L743.5 813.5L746.5 812.8L749.5 812.1L752.5 811.4L755.5 810.8L758.5 810.1L761.5 809.4L764.5 808.8L767.5 808.1L770.5 807.4L773.5 806.8L776.5 806.1L779.5 805.5L782.5 804.8L785.5 804.1L788.5 803.5L791.5 802.8L794.5 802.2L797.5 801.5L800.5 800.9L803.5 800.2L806.5 799.6L809.5 798.9L812.5 798.3L815.5 797.7L818.5 797L821.5 796.4L824.5 795.8L827.5 795.1L830.5 794.5L833.5 793.9L836.5 793.2L839.5 792.6L842.5 792L845.5 791.3L848.5 790.7L851.5 790.1L854.5 789.5L857.5 788.9L860.5 788.2L863.5 787.6L866.5 787L869.5 786.4L872.5 785.8L875.5 785.2L878.5 784.6L881.5 784L884.5 783.4L887.5 782.8L890.5 782.2L893.5 781.6L896.5 781L899.5 780.4L902.5 779.8L905.5 779.2L908.5 778.6L911.5 778L914.5 777.5L917.5 776.9L920.5 776.3L923.5 775.7L926.5 775.1L929.5 774.5L932.5 774L935.5 773.4L938.5 772.8L941.5 772.2L944.5 771.7L947.5 771.1L950.5 770.5L953.5 769.9L956.5 769.4L959.5 768.8L962.5 768.3L965.5 767.7L968.5 767.1L971.5 766.6L974.5 766L977.5 765.5L980.5 764.9L983.5 764.4L986.5 763.8L989.5 763.3L992.5 762.7L995.5 762.2L998.5 761.7L1001.5 761.1L1004.5 760.6L1007.5 760.1L1010.5 759.5L1013.5 759L1016.5 758.5L1019.5 758L1022.5 757.5L1025.5 756.9L1028.5 756.4L1031.5 755.9L1034.5 755.4L1037.5 754.9L1040.5 754.4L1043.5 753.9L1046.5 753.4L1049.5 752.9L1052.5 752.4L1055.5 751.9L1058.5 751.5L1061.5 751L1064.5 750.5L1067.5 750L1070.5 749.5L1073.5 749L1076.5 748.6L1079.5 748.1L1082.5 747.6L1085.5 747.1L1088.5 746.7L1091.5 746.2L1094.5 745.7L1097.5 745.2L1100.5 744.8L1103.5 744.3L1106.5 743.9L1109.5 743.4L1112.5 742.9L1115.5 742.5L1118.5 742L1121.5 741.6L1124.5 741.1L1127.5 740.7L1130.5 740.2L1133.5 739.8L1136.5 739.4L1139.5 738.9L1142.5 738.5L1145.5 738.1L1148.5 737.6L1151.5 737.2L1154.5 736.8L1157.5 736.4L1160.5 735.9L1163.5 735.5L1166.5 735.1L1169.5 734.7L1172.5 734.3L1175.5 733.9L1178.5 733.5L1181.5 733.1L1184.5 732.7L1187.5 732.3L1190.5 731.9L1193.5 731.5L1196.5 731.1L1199.5 730.7L1202.5 730.4L1205.5 730L1208.5 729.6L1211.5 729.2L1214.5 728.9L1217.5 728.5L1220.5 728.1L1223.5 727.7L1226.5 727.4L1229.5 727L1232.5 726.6L1235.5 726.3L1238.5 725.9L1241.5 725.5L1244.5 725.2L1247.5 724.8L1250.5 724.5L1253.5 724.1L1256.5 723.8L1259.5 723.4L1262.5 723.1L1265.5 722.7L1268.5 722.4L1271.5 722L1274.5 721.7L1277.5 721.4L1280.5 721L1283.5 720.7L1286.5 720.4L1289.5 720L1292.5 719.7L1295.5 719.4L1298.5 719.1L1301.5 718.8L1304.5 718.5L1307.5 718.2L1310.5 717.8L1313.5 717.5L1316.5 717.2L1319.5 717L1322.5 716.7L1325.5 716.4L1328.5 716.1L1331.5 715.8L1334.5 715.5L1337.5 715.3L1340.5 715L1343.5 714.7L1346.5 714.5L1349.5 714.2L1352.5 713.9L1355.5 713.7L1358.5 713.4L1361.5 713.2L1364.5 712.9L1367.5 712.7L1370.5 712.4L1373.5 712.2L1376.5 712L1379.5 711.7L1382.5 711.5L1385.5 711.3L1388.5 711L1391.5 710.8L1394.5 710.6L1397.5 710.3L1400.5 710.1L1403.5 709.9L1406.5 709.7L1409.5 709.5L1412.5 709.2L1415.5 709L1418.5 708.8L1421.5 708.6L1424.5 708.4L1427.5 708.2L1430.5 708L1433.5 707.8L1436.5 707.6L1439.5 707.4L1442.5 707.2L1445.5 707L1448.5 706.8L1451.5 706.6L1454.5 706.4L1457.5 706.2L1460.5 706L1463.5 705.8L1466.5 705.6L1469.5 705.4L1472.5 705.2L1475.5 705L1478.5 704.8L1481.5 704.6L1484.5 704.5L1487.5 704.3L1490.5 704.1L1493.5 703.9L1496.5 703.7L1499.5 703.5L1502.5 703.3L1505.5 703.2L1508.5 703L1511.5 702.8L1514.5 702.6L1517.5 702.4L1520.5 702.2L1523.5 702.1L1526.5 701.9L1529.5 701.7L1532.5 701.5L1535.5 701.3L1538.5 701.2L1541.5 701L1544.5 700.8L1547.5 700.6L1550.5 700.5L1553.5 700.3L1556.5 700.1L1559.5 699.9L1562.5 699.8L1565.5 699.6L1568.5 699.4L1571.5 699.3L1574.5 699.1L1577.5 698.9L1580.5 698.8L1583.5 698.6L1586.5 698.5L1589.5 698.3L1592.5 698.2L1595.5 698L1598.5 697.9L1601.5 697.7L1604.5 697.6L1607.5 697.4L1610.5 697.3L1613.5 697.2L1616.5 697L1619.5 696.9L1622.5 696.8L1625.5 696.7L1628.5 696.5L1631.5 696.4L1634.5 696.3L1637.5 696.2L1640.5 696.1L1643.5 696L1646.5 695.9L1649.5 695.8L1652.5 695.6L1655.5 695.5L1658.5 695.4L1661.5 695.3L1664.5 695.2L1667.5 695.1L1670.5 695L1673.5 694.9L1676.5 694.8L1679.5 694.7L1682.5 694.7L1685.5 694.6L1688.5 694.5L1691.5 694.4L1694.5 694.3L1697.5 694.2L1700.5 694.1L1703.5 694L1706.5 693.9L1709.5 693.9L1712.5 693.8L1715.5 693.7L1718.5 693.6L1721.5 693.5L1724.5 693.4L1727.5 693.4L1730.5 693.3L1733.5 693.2L1736.5 693.1L1739.5 693.1L1742.5 693L1745.5 692.9L1748.5 692.9L1751.5 692.8L1754.5 692.7L1757.5 692.7L1760.5 692.6L1763.5 692.5L1766.5 692.5L1769.5 692.4L1772.5 692.3L1775.5 692.3L1778.5 692.2L1781.5 692.1L1784.5 692L1787.5 692L1790.5 691.9L1793.5 691.8L1796.5 691.8L1799.5 691.7L1802.5 691.6L1805.5 691.6L1808.5 691.5L1811.5 691.4L1814.5 691.4L1817.5 691.3L1820.5 691.3L1823.5 691.2L1826.5 691.2L1829.5 691.1L1832.5 691.1L1835.5 691L1838.5 691L1841.5 690.9L1844.5 690.9L1847.5 690.9L1850.5 690.8L1853.5 690.8L1856.5 690.8L1859.5 690.8L1862.5 690.8L1865.5 690.8L1868.5 690.8L1871.5 690.8L1874.5 690.8L1877.5 690.8L1880.5 690.9L1883.5 690.9L1886.5 690.9L1889.5 691L1892.5 691L1895.5 691L1898.5 691.1L1901.5 691.1L1904.5 691.2L1907.5 691.2L1910.5 691.3L1913.5 691.3L1916.5 691.4L1919.5 691.5L1922.5 691.5L1925.5 691.6L1928.5 691.7L1931.5 691.7L1934.5 691.8L1937.5 691.9L1940.5 691.9L1943.5 692L1946.5 692.1L1949.5 692.2L1952.5 692.2L1955.5 692.3L1958.5 692.4L1961.5 692.5L1964.5 692.5L1967.5 692.6L1970.5 692.7L1973.5 692.8L1976.5 692.9L1979.5 693L1982.5 693.1L1985.5 693.2L1988.5 693.4L1991.5 693.5L1994.5 693.6L1997.5 693.8L2000.5 693.9L2003.5 694L2006.5 694.2L2009.5 694.3L2012.5 694.5L2015.5 694.7L2018.5 694.8L2021.5 695L2024.5 695.2L2027.5 695.3L2030.5 695.5L2033.5 695.7L2036.5 695.9L2039.5 696.1L2042.5 696.2L2045.5 696.4L2048.5 696.6L2051.5 696.8L2054.5 697L2057.5 697.2L2060.5 697.4L2063.5 697.6L2066.5 697.8L2069.5 698L2072.5 698.2L2075.5 698.4L2078.5 698.6L2081.5 698.9L2084.5 699.1L2087.5 699.3L2090.5 699.5L2093.5 699.7L2096.5 699.9L2099.5 700.1L2102.5 700.3L2105.5 700.6L2108.5 700.8L2111.5 701.1L2114.5 701.3L2117.5 701.5L2120.5 701.8L2123.5 702.1L2126.5 702.3L2129.5 702.6L2132.5 702.9L2135.5 703.2L2138.5 703.4L2141.5 703.7L2144.5 704L2147.5 704.3L2150.5 704.6L2153.5 704.9L2156.5 705.2L2159.5 705.5L2162.5 705.8L2165.5 706.1L2168.5 706.4L2171.5 706.7L2174.5 707L2177.5 707.3L2180.5 707.6L2183.5 707.9L2186.5 708.2L2189.5 708.5L2192.5 708.8L2195.5 709.2L2198.5 709.5L2201.5 709.8L2204.5 710.1L2207.5 710.4L2210.5 710.7L2213.5 711L2216.5 711.3L2219.5 711.6L2222.5 711.9L2225.5 712.2L2228.5 712.5L2231.5 712.8L2234.5 713.1L2237.5 713.4L2240.5 713.7L2243.5 714L2246.5 714.3L2249.5 714.6L2252.5 715L2255.5 715.3L2258.5 715.6L2261.5 716L2264.5 716.3L2267.5 716.7L2270.5 717L2273.5 717.4L2276.5 717.8L2279.5 718.2L2282.5 718.6L2285.5 719L2288.5 719.4L2291.5 719.8L2294.5 720.2L2297.5 720.6L2300.5 721.1L2303.5 721.5L2306.5 722L2309.5 722.5L2312.5 723L2315.5 723.5L2318.5 724.1L2321.5 724.6L2324.5 725.2L2327.5 725.7L2330.5 726.3L2333.5 726.9L2336.5 727.5L2339.5 728.2L2342.5 728.8L2345.5 729.4L2348.5 730.1L2351.5 730.8L2354.5 731.4L2357.5 732.1L2360.5 732.8L2363.5 733.5L2366.5 734.2L2369.5 734.9L2372.5 735.6L2375.5 736.4L2378.5 737.1L2381.5 737.8L2384.5 738.6L2387.5 739.3L2390.5 740.1L2393.5 740.8L2396.5 741.6L2399.5 742.3L2402.5 743.1L2405.5 743.8L2408.5 744.6L2411.5 745.4L2414.5 746.1L2417.5 746.9L2420.5 747.7L2423.5 748.5L2426.5 749.3L2429.5 750.1L2432.5 750.9L2435.5 751.8L2438.5 752.6L2441.5 753.5L2444.5 754.3L2447.5 755.2L2450.5 756.1L2453.5 757L2456.5 757.9L2459.5 758.8L2462.5 759.7L2465.5 760.6L2468.5 761.5L2471.5 762.5L2474.5 763.4L2477.5 764.3L2480.5 765.3L2483.5 766.2L2486.5 767.2L2489.5 768.1L2492.5 769.1L2495.5 770L2498.5 771L2501.5 771.9L2504.5 772.9L2507.5 773.8L2510.5 774.8L2513.5 775.7L2516.5 776.7L2519.5 777.6L2522.5 778.5L2525.5 779.5L2528.5 780.4L2531.5 781.4L2534.5 782.4L2537.5 783.3L2540.5 784.4L2543.5 785.4L2546.5 786.4L2549.5 787.5L2552.5 788.6L2555.5 789.7L2558.5 790.9L2561.5 792.1L2564.5 793.4L2567.5 794.7L2570.5 796.1L2573.5 797.6L2576.5 799.1L2579.5 800.6L2582.5 802.1L2585.5 803.7L2588.5 805.2L2591.5 806.7L2594.5 808.3L2597.5 809.7L2600.5 811.2L2603.5 812.7L2606.5 814.2L2609.5 815.6L2612.5 817.1L2615.5 818.6L2618.5 820.1L2621.5 821.6L2624.5 823.2L2627.5 824.8L2630.5 826.4L2633.5 828.1L2636.5 829.8L2639.5 831.6L2642.5 833.5L2645.5 835.4L2648.5 837.3L2651.5 839.2L2654.5 841.2L2657.5 843.2L2660.5 845.2L2663.5 847.1L2666.5 849.1L2669.5 851L2672.5 852.9L2675.5 854.7L2678.5 856.5L2681.5 858.2L2684.5 860L2687.5 861.7L2690.5 863.4L2693.5 865.1L2696.5 866.7L2699.5 868.4L2702.5 870.1L2705.5 871.8L2708.5 873.4L2711.5 875.1L2714.5 876.8L2717.5 878.5L2720.5 880.3L2723.5 882.1L2726.5 883.8L2729.5 885.7L2732.5 887.5L2735.5 889.3L2738.5 891.1L2741.5 893L2744.5 894.8L2747.5 896.6L2750.5 898.5L2753.5 900.3L2756.5 902L2759.5 903.8L2762.5 905.5L2765.5 907.3L2768.5 909L2771.5 910.7L2774.5 912.4L2777.5 914.1L2780.5 915.8L2783.5 917.4L2786.5 919.1L2789.5 920.7L2792.5 922.3L2795.5 923.9L2798.5 925.5L2801.5 927L2804.5 928.5L2807.5 929.9L2810.5 931.2L2813.5 932.2L2816.5 933.2L2819.5 934.2L2822.5 935.3L2825.5 936.7L2828.5 938.5L2831.5 940.9L2834.5 946.1L2835 947L2834.5 948.1L2831.5 952.2L2828.5 955.2L2825.5 957.7L2822.5 959.9L2819.5 961.8L2816.5 963.4L2813.5 964.8L2810.5 966.1L2807.5 967.3L2804.5 968.5L2801.5 969.5L2798.5 970.5L2795.5 971.5L2792.5 972.4L2789.5 973.2L2786.5 974L2783.5 974.7L2780.5 975.4L2777.5 976.1L2774.5 976.8L2771.5 977.4L2768.5 978L2765.5 978.7L2762.5 979.3L2759.5 980L2756.5 980.6L2753.5 981.2L2750.5 981.8L2747.5 982.4L2744.5 982.9L2741.5 983.5L2738.5 984L2735.5 984.6L2732.5 985.1L2729.5 985.6L2726.5 986.1L2723.5 986.6L2720.5 987.1L2717.5 987.5L2714.5 988L2711.5 988.4L2708.5 988.9L2705.5 989.3L2702.5 989.7L2699.5 990.2L2696.5 990.6L2693.5 991.1L2690.5 991.5L2687.5 992L2684.5 992.4L2681.5 992.8L2678.5 993.1L2675.5 993.5L2672.5 993.8L2669.5 994L2666.5 994.2L2663.5 994.4L2660.5 994.4L2657.5 994.5L2654.5 994.6L2651.5 994.6L2648.5 994.7L2645.5 994.7L2642.5 994.8L2639.5 994.8L2636.5 994.9L2633.5 994.9L2630.5 994.9L2627.5 995L2624.5 995L2621.5 995L2618.5 995L2615.5 995L2612.5 995L2609.5 995L2606.5 994.9L2603.5 994.9L2600.5 994.9L2597.5 994.8L2594.5 994.8L2591.5 994.7L2588.5 994.7L2585.5 994.6L2582.5 994.6L2579.5 994.6L2576.5 994.5L2573.5 994.5L2570.5 994.5L2567.5 994.4L2564.5 994.4L2561.5 994.4L2558.5 994.4L2555.5 994.4L2552.5 994.4L2549.5 994.5L2546.5 994.5L2543.5 994.6L2540.5 994.6L2537.5 994.7L2534.5 994.8L2531.5 994.9L2528.5 995L2525.5 995.1L2522.5 995.1L2519.5 995.2L2516.5 995.3L2513.5 995.4L2510.5 995.5L2507.5 995.6L2504.5 995.7L2501.5 995.8L2498.5 995.9L2495.5 996L2492.5 996.1L2489.5 996.2L2486.5 996.3L2483.5 996.5L2480.5 996.6L2477.5 996.7L2474.5 996.8L2471.5 997L2468.5 997.1L2465.5 997.3L2462.5 997.4L2459.5 997.5L2456.5 997.7L2453.5 997.8L2450.5 998L2447.5 998.1L2444.5 998.3L2441.5 998.5L2438.5 998.6L2435.5 998.8L2432.5 998.9L2429.5 999.1L2426.5 999.3L2423.5 999.5L2420.5 999.6L2417.5 999.8L2414.5 1000L2411.5 1000.1L2408.5 1000.3L2405.5 1000.5L2402.5 1000.7L2399.5 1000.9L2396.5 1001.1L2393.5 1001.3L2390.5 1001.5L2387.5 1001.8L2384.5 1002L2381.5 1002.2L2378.5 1002.4L2375.5 1002.7L2372.5 1002.9L2369.5 1003.2L2366.5 1003.4L2363.5 1003.7L2360.5 1003.9L2357.5 1004.2L2354.5 1004.4L2351.5 1004.7L2348.5 1004.9L2345.5 1005.2L2342.5 1005.5L2339.5 1005.7L2336.5 1006L2333.5 1006.3L2330.5 1006.5L2327.5 1006.8L2324.5 1007.1L2321.5 1007.4L2318.5 1007.6L2315.5 1007.9L2312.5 1008.2L2309.5 1008.4L2306.5 1008.7L2303.5 1009L2300.5 1009.3L2297.5 1009.5L2294.5 1009.8L2291.5 1010.1L2288.5 1010.3L2285.5 1010.6L2282.5 1010.9L2279.5 1011.1L2276.5 1011.4L2273.5 1011.6L2270.5 1011.9L2267.5 1012.1L2264.5 1012.4L2261.5 1012.6L2258.5 1012.9L2255.5 1013.1L2252.5 1013.4L2249.5 1013.6L2246.5 1013.8L2243.5 1014.1L2240.5 1014.3L2237.5 1014.5L2234.5 1014.8L2231.5 1015L2228.5 1015.2L2225.5 1015.5L2222.5 1015.7L2219.5 1015.9L2216.5 1016.2L2213.5 1016.4L2210.5 1016.6L2207.5 1016.9L2204.5 1017.1L2201.5 1017.3L2198.5 1017.6L2195.5 1017.8L2192.5 1018L2189.5 1018.3L2186.5 1018.5L2183.5 1018.7L2180.5 1019L2177.5 1019.2L2174.5 1019.4L2171.5 1019.6L2168.5 1019.9L2165.5 1020.1L2162.5 1020.3L2159.5 1020.5L2156.5 1020.8L2153.5 1021L2150.5 1021.2L2147.5 1021.5L2144.5 1021.7L2141.5 1021.9L2138.5 1022.1L2135.5 1022.4L2132.5 1022.6L2129.5 1022.8L2126.5 1023L2123.5 1023.3L2120.5 1023.5L2117.5 1023.7L2114.5 1023.9L2111.5 1024.1L2108.5 1024.4L2105.5 1024.6L2102.5 1024.8L2099.5 1025L2096.5 1025.3L2093.5 1025.5L2090.5 1025.7L2087.5 1025.9L2084.5 1026.1L2081.5 1026.4L2078.5 1026.6L2075.5 1026.8L2072.5 1027L2069.5 1027.2L2066.5 1027.5L2063.5 1027.7L2060.5 1027.9L2057.5 1028.1L2054.5 1028.3L2051.5 1028.5L2048.5 1028.8L2045.5 1029L2042.5 1029.2L2039.5 1029.4L2036.5 1029.6L2033.5 1029.8L2030.5 1030.1L2027.5 1030.3L2024.5 1030.5L2021.5 1030.7L2018.5 1030.9L2015.5 1031.1L2012.5 1031.3L2009.5 1031.6L2006.5 1031.8L2003.5 1032L2000.5 1032.2L1997.5 1032.4L1994.5 1032.6L1991.5 1032.8L1988.5 1033L1985.5 1033.3L1982.5 1033.5L1979.5 1033.7L1976.5 1033.9L1973.5 1034.1L1970.5 1034.3L1967.5 1034.5L1964.5 1034.7L1961.5 1035L1958.5 1035.2L1955.5 1035.4L1952.5 1035.6L1949.5 1035.8L1946.5 1036L1943.5 1036.2L1940.5 1036.4L1937.5 1036.6L1934.5 1036.9L1931.5 1037.1L1928.5 1037.3L1925.5 1037.5L1922.5 1037.7L1919.5 1037.9L1916.5 1038.1L1913.5 1038.3L1910.5 1038.5L1907.5 1038.8L1904.5 1039L1901.5 1039.2L1898.5 1039.4L1895.5 1039.6L1892.5 1039.8L1889.5 1040L1886.5 1040.2L1883.5 1040.5L1880.5 1040.7L1877.5 1040.9L1874.5 1041.1L1871.5 1041.3L1868.5 1041.5L1865.5 1041.7L1862.5 1041.9L1859.5 1042.2L1856.5 1042.4L1853.5 1042.6L1850.5 1042.8L1847.5 1043L1844.5 1043.2L1841.5 1043.4L1838.5 1043.7L1835.5 1043.9L1832.5 1044.1L1829.5 1044.3L1826.5 1044.5L1823.5 1044.7L1820.5 1045L1817.5 1045.2L1814.5 1045.4L1811.5 1045.6L1808.5 1045.8L1805.5 1046L1802.5 1046.3L1799.5 1046.5L1796.5 1046.7L1793.5 1046.9L1790.5 1047.1L1787.5 1047.4L1784.5 1047.6L1781.5 1047.8L1778.5 1048L1775.5 1048.3L1772.5 1048.5L1769.5 1048.7L1766.5 1048.9L1763.5 1049.1L1760.5 1049.4L1757.5 1049.6L1754.5 1049.8L1751.5 1050L1748.5 1050.3L1745.5 1050.5L1742.5 1050.7L1739.5 1050.9L1736.5 1051.1L1733.5 1051.4L1730.5 1051.6L1727.5 1051.8L1724.5 1052L1721.5 1052.3L1718.5 1052.5L1715.5 1052.7L1712.5 1052.9L1709.5 1053.2L1706.5 1053.4L1703.5 1053.6L1700.5 1053.8L1697.5 1054.1L1694.5 1054.3L1691.5 1054.5L1688.5 1054.8L1685.5 1055L1682.5 1055.2L1679.5 1055.4L1676.5 1055.7L1673.5 1055.9L1670.5 1056.1L1667.5 1056.3L1664.5 1056.6L1661.5 1056.8L1658.5 1057L1655.5 1057.2L1652.5 1057.5L1649.5 1057.7L1646.5 1057.9L1643.5 1058.2L1640.5 1058.4L1637.5 1058.6L1634.5 1058.8L1631.5 1059.1L1628.5 1059.3L1625.5 1059.5L1622.5 1059.7L1619.5 1060L1616.5 1060.2L1613.5 1060.4L1610.5 1060.7L1607.5 1060.9L1604.5 1061.1L1601.5 1061.3L1598.5 1061.6L1595.5 1061.8L1592.5 1062L1589.5 1062.3L1586.5 1062.5L1583.5 1062.7L1580.5 1062.9L1577.5 1063.2L1574.5 1063.4L1571.5 1063.6L1568.5 1063.8L1565.5 1064.1L1562.5 1064.3L1559.5 1064.5L1556.5 1064.8L1553.5 1065L1550.5 1065.2L1547.5 1065.4L1544.5 1065.7L1541.5 1065.9L1538.5 1066.1L1535.5 1066.3L1532.5 1066.6L1529.5 1066.8L1526.5 1067L1523.5 1067.3L1520.5 1067.5L1517.5 1067.7L1514.5 1067.9L1511.5 1068.2L1508.5 1068.4L1505.5 1068.6L1502.5 1068.8L1499.5 1069.1L1496.5 1069.3L1493.5 1069.5L1490.5 1069.7L1487.5 1070L1484.5 1070.2L1481.5 1070.4L1478.5 1070.7L1475.5 1070.9L1472.5 1071.1L1469.5 1071.3L1466.5 1071.6L1463.5 1071.8L1460.5 1072L1457.5 1072.3L1454.5 1072.5L1451.5 1072.7L1448.5 1073L1445.5 1073.2L1442.5 1073.5L1439.5 1073.7L1436.5 1073.9L1433.5 1074.2L1430.5 1074.4L1427.5 1074.6L1424.5 1074.9L1421.5 1075.1L1418.5 1075.4L1415.5 1075.6L1412.5 1075.8L1409.5 1076.1L1406.5 1076.3L1403.5 1076.6L1400.5 1076.8L1397.5 1077L1394.5 1077.3L1391.5 1077.5L1388.5 1077.8L1385.5 1078L1382.5 1078.2L1379.5 1078.5L1376.5 1078.7L1373.5 1079L1370.5 1079.2L1367.5 1079.4L1364.5 1079.7L1361.5 1079.9L1358.5 1080.1L1355.5 1080.4L1352.5 1080.6L1349.5 1080.9L1346.5 1081.1L1343.5 1081.3L1340.5 1081.6L1337.5 1081.8L1334.5 1082L1331.5 1082.3L1328.5 1082.5L1325.5 1082.7L1322.5 1083L1319.5 1083.2L1316.5 1083.4L1313.5 1083.7L1310.5 1083.9L1307.5 1084.1L1304.5 1084.3L1301.5 1084.6L1298.5 1084.8L1295.5 1085L1292.5 1085.2L1289.5 1085.5L1286.5 1085.7L1283.5 1085.9L1280.5 1086.1L1277.5 1086.3L1274.5 1086.6L1271.5 1086.8L1268.5 1087L1265.5 1087.2L1262.5 1087.4L1259.5 1087.6L1256.5 1087.8L1253.5 1088.1L1250.5 1088.3L1247.5 1088.5L1244.5 1088.7L1241.5 1088.9L1238.5 1089.1L1235.5 1089.3L1232.5 1089.5L1229.5 1089.7L1226.5 1089.9L1223.5 1090.1L1220.5 1090.3L1217.5 1090.5L1214.5 1090.7L1211.5 1090.8L1208.5 1091L1205.5 1091.2L1202.5 1091.4L1199.5 1091.6L1196.5 1091.8L1193.5 1091.9L1190.5 1092.1L1187.5 1092.3L1184.5 1092.5L1181.5 1092.6L1178.5 1092.8L1175.5 1093L1172.5 1093.1L1169.5 1093.3L1166.5 1093.5L1163.5 1093.6L1160.5 1093.8L1157.5 1093.9L1154.5 1094.1L1151.5 1094.2L1148.5 1094.4L1145.5 1094.5L1142.5 1094.7L1139.5 1094.8L1136.5 1095L1133.5 1095.1L1130.5 1095.3L1127.5 1095.4L1124.5 1095.5L1121.5 1095.7L1118.5 1095.8L1115.5 1096L1112.5 1096.1L1109.5 1096.2L1106.5 1096.4L1103.5 1096.5L1100.5 1096.6L1097.5 1096.8L1094.5 1096.9L1091.5 1097L1088.5 1097.2L1085.5 1097.3L1082.5 1097.4L1079.5 1097.6L1076.5 1097.7L1073.5 1097.8L1070.5 1098L1067.5 1098.1L1064.5 1098.2L1061.5 1098.3L1058.5 1098.5L1055.5 1098.6L1052.5 1098.7L1049.5 1098.9L1046.5 1099L1043.5 1099.1L1040.5 1099.3L1037.5 1099.4L1034.5 1099.5L1031.5 1099.7L1028.5 1099.8L1025.5 1099.9L1022.5 1100L1019.5 1100.2L1016.5 1100.3L1013.5 1100.5L1010.5 1100.6L1007.5 1100.7L1004.5 1100.9L1001.5 1101L998.5 1101.1L995.5 1101.3L992.5 1101.4L989.5 1101.6L986.5 1101.7L983.5 1101.9L980.5 1102L977.5 1102.2L974.5 1102.3L971.5 1102.5L968.5 1102.6L965.5 1102.8L962.5 1102.9L959.5 1103.1L956.5 1103.2L953.5 1103.4L950.5 1103.6L947.5 1103.7L944.5 1103.9L941.5 1104.1L938.5 1104.2L935.5 1104.4L932.5 1104.6L929.5 1104.7L926.5 1104.9L923.5 1105.1L920.5 1105.3L917.5 1105.5L914.5 1105.7L911.5 1105.9L908.5 1106L905.5 1106.2L902.5 1106.4L899.5 1106.6L896.5 1106.8L893.5 1107.1L890.5 1107.3L887.5 1107.6L884.5 1107.9L881.5 1108.2L878.5 1108.5L875.5 1108.8L872.5 1109.1L869.5 1109.4L866.5 1109.7L863.5 1110L860.5 1110.3L857.5 1110.5L854.5 1110.8L851.5 1111L848.5 1111.2L845.5 1111.4L842.5 1111.6L839.5 1111.7L836.5 1111.8L833.5 1112L830.5 1112.1L827.5 1112.2L824.5 1112.3L821.5 1112.4L818.5 1112.6L815.5 1112.7L812.5 1112.8L809.5 1112.9L806.5 1113L803.5 1113.1L800.5 1113.2L797.5 1113.3L794.5 1113.4L791.5 1113.5L788.5 1113.6L785.5 1113.7L782.5 1113.8L779.5 1113.9L776.5 1114L773.5 1114.1L770.5 1114.2L767.5 1114.3L764.5 1114.4L761.5 1114.4L758.5 1114.5L755.5 1114.6L752.5 1114.7L749.5 1114.7L746.5 1114.8L743.5 1114.9L740.5 1114.9L737.5 1115L734.5 1115L731.5 1115.1L728.5 1115.1L725.5 1115.2L722.5 1115.2L719.5 1115.3L716.5 1115.3L713.5 1115.3L710.5 1115.4L707.5 1115.4L704.5 1115.4L701.5 1115.5L698.5 1115.5L695.5 1115.5L692.5 1115.5L689.5 1115.5L686.5 1115.5L683.5 1115.5L680.5 1115.5L677.5 1115.5L674.5 1115.5L671.5 1115.5L668.5 1115.4L665.5 1115.4L662.5 1115.4L659.5 1115.3L656.5 1115.3L653.5 1115.3L650.5 1115.2L647.5 1115.2L644.5 1115.1L641.5 1115.1L638.5 1115L635.5 1114.9L632.5 1114.9L629.5 1114.8L626.5 1114.7L623.5 1114.7L620.5 1114.6L617.5 1114.5L614.5 1114.4L611.5 1114.3L608.5 1114.2L605.5 1114.1L602.5 1114L599.5 1113.8L596.5 1113.5L593.5 1113.1L590.5 1112.8L587.5 1112.3L584.5 1111.8L581.5 1111.3L578.5 1110.8L575.5 1110.2L572.5 1109.6L569.5 1108.9L566.5 1108.3L563.5 1107.6L560.5 1106.9L557.5 1106.3L554.5 1105.6L551.5 1104.9L548.5 1104.2L545.5 1103.5L542.5 1102.9L539.5 1102.2L536.5 1101.6L533.5 1101L530.5 1100.3L527.5 1099.7L524.5 1099L521.5 1098.3L518.5 1097.6L515.5 1096.9L512.5 1096.2L509.5 1095.5L506.5 1094.7L503.5 1094L500.5 1093.2L497.5 1092.5L494.5 1091.7L491.5 1090.9L488.5 1090.2L485.5 1089.4L482.5 1088.6L479.5 1087.8L476.5 1087L473.5 1086.2L470.5 1085.4L467.5 1084.6L464.5 1083.9L461.5 1083.1L458.5 1082.3L455.5 1081.5L452.5 1080.7L449.5 1079.9L446.5 1079.2L443.5 1078.4L440.5 1077.6L437.5 1076.9L434.5 1076.1L431.5 1075.4L428.5 1074.6L425.5 1073.9L422.5 1073.1L419.5 1072.3L416.5 1071.6L413.5 1070.8L410.5 1070.1L407.5 1069.3L404.5 1068.5L401.5 1067.8L398.5 1067L395.5 1066.2L392.5 1065.5L389.5 1064.7L386.5 1064L383.5 1063.2L380.5 1062.4L377.5 1061.7L374.5 1060.9L371.5 1060.1L368.5 1059.4L365.5 1058.6L362.5 1057.9L359.5 1057.1L356.5 1056.4L353.5 1055.6L350.5 1054.9L347.5 1054.1L344.5 1053.4L341.5 1052.6L338.5 1051.9L335.5 1051.1L332.5 1050.4L329.5 1049.6L326.5 1048.9L323.5 1048.1L320.5 1047.3L317.5 1046.5L314.5 1045.8L311.5 1045L308.5 1044.2L305.5 1043.5L302.5 1042.7L299.5 1041.9L296.5 1041.2L293.5 1040.4L290.5 1039.6L287.5 1038.9L284.5 1038.1L281.5 1037.4L278.5 1036.7L275.5 1035.9L272.5 1035.2L269.5 1034.5L266.5 1033.8L263.5 1033.1L260.5 1032.4L257.5 1031.8L254.5 1031.1L251.5 1030.5L248.5 1029.9L245.5 1029.3L242.5 1028.7L239.5 1028.1L236.5 1027.6L233.5 1027.1L230.5 1026.6L227.5 1026.1L224.5 1025.6L221.5 1025.1L218.5 1024.6L215.5 1024.1L212.5 1023.6L209.5 1023L206.5 1022.4L203.5 1021.8L200.5 1021.2L197.5 1020.5L194.5 1019.8L191.5 1019.1L188.5 1018.4L185.5 1017.6L182.5 1016.9L179.5 1016.1L176.5 1015.2L173.5 1014.4L170.5 1013.4L167.5 1012.5L164.5 1011.5L161.5 1010.5L158.5 1009.7L155.5 1008.8L152.5 1007.6L149.5 1006L146.5 1003.7L143.5 996Z" fill="none" stroke="#000" stroke-width="2.5" opacity="0.9"/><path d="M2630.0 826.1 L2633.0 827.8 L2636.0 829.5 L2639.0 831.3 L2642.0 833.1 L2645.0 835.0 L2648.0 837.0 L2651.0 838.9 L2654.0 840.9 L2657.0 842.9 L2660.0 844.8 L2663.0 846.8 L2666.0 848.7 L2669.0 850.7 L2672.0 852.6 L2675.0 854.4 L2678.0 856.2 L2681.0 858.0 L2684.0 859.7 L2687.0 861.4 L2690.0 863.1 L2693.0 864.8 L2696.0 866.5 L2699.0 868.1 L2702.0 869.8 L2705.0 871.5 L2708.0 873.2 L2711.0 874.8 L2714.0 876.5 L2717.0 878.3 L2720.0 880.0 L2723.0 881.8 L2726.0 883.5 L2729.0 885.4 L2732.0 887.2 L2735.0 889.0 L2738.0 890.8 L2741.0 892.7 L2744.0 894.5 L2747.0 896.3 L2750.0 898.1 L2753.0 900.0 L2756.0 901.7 L2759.0 903.5 L2762.0 905.3 L2765.0 907.0 L2768.0 908.7 L2771.0 910.4 L2774.0 912.1 L2777.0 913.8 L2780.0 915.5 L2783.0 917.2 L2786.0 918.8 L2789.0 920.5 L2792.0 922.1 L2795.0 923.7 L2798.0 925.2 L2801.0 926.8 L2804.0 928.2 L2807.0 929.7 L2810.0 931.0 L2813.0 932.1 L2816.0 933.0 L2819.0 934.0 L2822.0 935.1 L2825.0 936.5 L2828.0 938.2 L2831.0 940.4 L2834.0 945.2 L2832.5 947.7 L2829.5 942.9 L2826.5 942.1 L2823.5 942.4 L2820.5 943.0 L2817.5 943.9 L2814.5 944.9 L2811.5 944.6 L2808.5 943.5 L2805.5 942.2 L2802.5 940.7 L2799.5 939.3 L2796.5 937.7 L2793.5 936.2 L2790.5 934.6 L2787.5 933.0 L2784.5 931.3 L2781.5 929.7 L2778.5 928.0 L2775.5 926.3 L2772.5 924.6 L2769.5 922.9 L2766.5 921.2 L2763.5 919.5 L2760.5 917.8 L2757.5 916.0 L2754.5 914.2 L2751.5 912.5 L2748.5 910.6 L2745.5 908.8 L2742.5 907.0 L2739.5 905.2 L2736.5 903.3 L2733.5 901.5 L2730.5 899.7 L2727.5 897.9 L2724.5 896.0 L2721.5 894.3 L2718.5 892.5 L2715.5 890.8 L2712.5 889.0 L2709.5 887.3 L2706.5 885.7 L2703.5 884.0 L2700.5 882.3 L2697.5 880.6 L2694.5 879.0 L2691.5 877.3 L2688.5 875.6 L2685.5 873.9 L2682.5 872.2 L2679.5 870.5 L2676.5 868.7 L2673.5 866.9 L2670.5 865.1 L2667.5 863.2 L2664.5 861.2 L2661.5 859.3 L2658.5 857.3 L2655.5 855.4 L2652.5 853.4 L2649.5 851.4 L2646.5 849.5 L2643.5 847.5 L2640.5 845.6 L2637.5 843.8 L2634.5 842.0 L2631.5 840.3 L2628.5 838.6Z" fill="#0a26a8"/><path d="M2628.5 838.6 L2631.5 840.3 L2634.5 842.0 L2637.5 843.8 L2640.5 845.6 L2643.5 847.5 L2646.5 849.5 L2649.5 851.4 L2652.5 853.4 L2655.5 855.4 L2658.5 857.3 L2661.5 859.3 L2664.5 861.2 L2667.5 863.2 L2670.5 865.1 L2673.5 866.9 L2676.5 868.7 L2679.5 870.5 L2682.5 872.2 L2685.5 873.9 L2688.5 875.6 L2691.5 877.3 L2694.5 879.0 L2697.5 880.6 L2700.5 882.3 L2703.5 884.0 L2706.5 885.7 L2709.5 887.3 L2712.5 889.0 L2715.5 890.8 L2718.5 892.5 L2721.5 894.3 L2724.5 896.0 L2727.5 897.9 L2730.5 899.7 L2733.5 901.5 L2736.5 903.3 L2739.5 905.2 L2742.5 907.0 L2745.5 908.8 L2748.5 910.6 L2751.5 912.5 L2754.5 914.2 L2757.5 916.0 L2760.5 917.8 L2763.5 919.5 L2766.5 921.2 L2769.5 922.9 L2772.5 924.6 L2775.5 926.3 L2778.5 928.0 L2781.5 929.7 L2784.5 931.3 L2787.5 933.0 L2790.5 934.6 L2793.5 936.2 L2796.5 937.7 L2799.5 939.3 L2802.5 940.7 L2805.5 942.2 L2808.5 943.5 L2811.5 944.6 L2814.5 944.9 L2817.5 943.9 L2820.5 943.0 L2823.5 942.4 L2826.5 942.1 L2829.5 942.9 L2832.5 947.7" fill="none" stroke="#000" stroke-width="2" opacity="0.7"/></svg>
<div class="a" style="left:1036px;top:240px;width:288px;height:33px;border:2px solid #000;background:#fdfdee"></div>
<div class="t " style="left:1043.0px;top:249.4px;font-size:22px;color:#303030;letter-spacing:0.25px">Flip the board upside down</div>
<div class="t st" style="left:6.0px;top:1775.4px;font-size:22px;letter-spacing:0.25px">Press F1 for help</div>
<div class="sb" style="left:2176px;width:49px"></div>
<div class="t st" style="left:2184.0px;top:1774.9px;font-size:22px;">"</div>
<div class="sb" style="left:2232px;width:139px"></div>
<div class="t st" style="left:2240.0px;top:1774.9px;font-size:22px;">X: 56.7"</div>
<div class="sb" style="left:2378px;width:139px"></div>
<div class="t st" style="left:2386.0px;top:1774.9px;font-size:22px;">Y: -9.8"</div>
<div class="sb" style="left:2524px;width:140px"></div>
<div class="t st" style="left:2532.0px;top:1774.9px;font-size:22px;">Z: 6.6"</div>
<div class="sb" style="left:2670px;width:51px"></div>
<div class="sb" style="left:2728px;width:59px"></div>
<div class="sb" style="left:2794px;width:47px"></div>
<svg class="a" style="left:2852px;top:1772px" width="28" height="28"><path d="M26 6 L6 26 M26 14 L14 26 M26 22 L22 26" stroke="#8a8a8a" stroke-width="2"/><path d="M27 8 L8 27 M27 16 L16 27" stroke="#fff" stroke-width="1"/></svg>
</body></html>
